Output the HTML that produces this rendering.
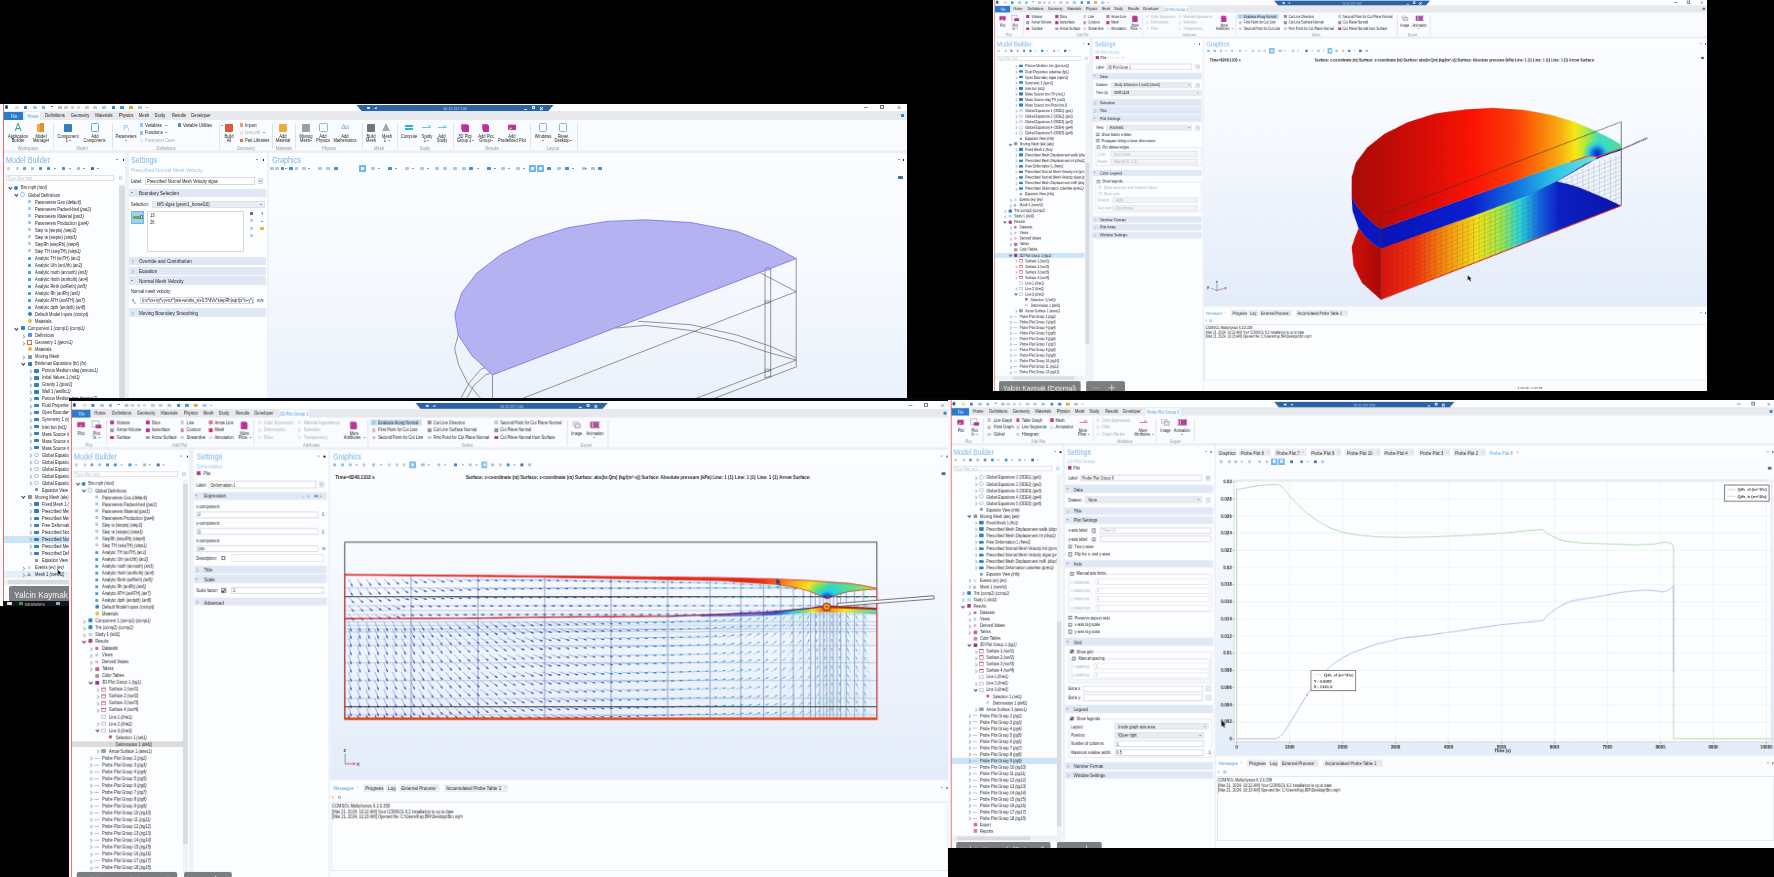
<!DOCTYPE html><html><head><meta charset="utf-8"><title>COMSOL collage</title><style>
html,body{margin:0;padding:0;background:#000;}
body{width:1774px;height:877px;overflow:hidden;position:relative;font-family:"Liberation Sans",sans-serif;}
.clip{position:absolute;overflow:hidden;}
.win{position:absolute;will-change:transform;transform-origin:0 0;overflow:hidden;width:909px;height:504px;color:#222;}
.win div,.win span,.win svg{position:absolute;}
.win svg{overflow:visible;}
.t{white-space:nowrap;line-height:1.2;}
.tr{width:0;height:0;}
i{font-style:italic;}
</style></head><body><div class="clip" id="wA" style="left:0px;top:103.8px;width:907px;height:501.9px;"><div class="win" style="left:0.00px;top:-1.20px;transform:scale(1.0);"><div style="left:0.00px;top:0.00px;width:909.00px;height:504.00px;background:#eef2f7;"></div><div style="left:0.00px;top:0.00px;width:909.00px;height:8.30px;background:#fdfeff;"></div><div style="left:4.60px;top:2.40px;width:3.20px;height:3.20px;background:#1d4e89;border-radius:50%;"></div><div style="left:15.20px;top:2.60px;width:3.60px;height:3.00px;background:#d9dde2;border-radius:.5px;"></div><div style="left:23.80px;top:2.60px;width:3.60px;height:3.00px;background:#2f7fc2;border-radius:.5px;"></div><div style="left:33.20px;top:2.60px;width:3.60px;height:3.00px;background:#9fc6e6;border-radius:.5px;"></div><div style="left:41.80px;top:2.60px;width:3.60px;height:3.00px;background:#7fb3de;border-radius:.5px;"></div><div style="left:51.30px;top:2.60px;width:1.40px;height:1.20px;background:#555;border-radius:.5px;"></div><div style="left:58.20px;top:2.60px;width:3.60px;height:3.00px;background:#b9c0c8;border-radius:.5px;"></div><div style="left:64.20px;top:2.60px;width:3.60px;height:3.00px;background:#c9cfd6;border-radius:.5px;"></div><div style="left:70.90px;top:2.60px;width:3.60px;height:3.00px;background:#c9cfd6;border-radius:.5px;"></div><div style="left:76.90px;top:2.60px;width:3.60px;height:3.00px;background:#d5dae0;border-radius:.5px;"></div><div style="left:85.20px;top:2.60px;width:3.60px;height:3.00px;background:#c3cad2;border-radius:.5px;"></div><div style="left:93.20px;top:2.60px;width:3.60px;height:3.00px;background:#c3cad2;border-radius:.5px;"></div><div style="left:102.20px;top:2.60px;width:3.60px;height:3.00px;background:#9fc6e6;border-radius:.5px;"></div><div style="left:111.90px;top:2.60px;width:3.60px;height:3.00px;background:#2f7fc2;border-radius:.5px;"></div><div style="left:120.20px;top:2.60px;width:3.60px;height:3.00px;background:#3f93d3;border-radius:.5px;"></div><div style="left:129.20px;top:2.60px;width:3.60px;height:3.00px;background:#e0a23c;border-radius:.5px;"></div><div style="left:138.20px;top:2.60px;width:3.60px;height:3.00px;background:#9fc6e6;border-radius:.5px;"></div><div class="tr" style="left:145.75px;top:3.67px;border-left:1.25px solid transparent;border-right:1.25px solid transparent;border-top:1.69px solid #444;"></div><div style="left:356px;top:1.5px;width:198px;height:8px;background:#2a62a6;clip-path:polygon(0 0,100% 0,96.5% 100%,3.5% 100%);"></div><span class="t" style="top:2.92px;font-size:4.3px;color:#c9dcf2;left:455.00px;transform:translateX(-50%) scaleX(0.87);transform-origin:50% 50%;">10.12.217.100</span><div style="left:367.00px;top:3.60px;width:2.60px;height:2.60px;background:#e8f0fa;border-radius:.4px;"></div><div style="left:373.50px;top:3.40px;width:3.20px;height:3.00px;background:#dce8f6;clip-path:polygon(0 100%,100% 0,100% 100%);"></div><div style="left:523.50px;top:6.20px;width:3.20px;height:0.80px;background:#e8f0fa;"></div><div style="left:531.50px;top:3.40px;width:3.00px;height:3.00px;border:.6px solid #dce8f6;box-sizing:border-box;"></div><span class="t" style="top:1.50px;font-size:6.5px;color:#fff;left:541.50px;transform:translateX(-50%) scaleX(1);transform-origin:50% 50%;font-weight:bold;">×</span><div style="left:864.00px;top:4.30px;width:4.00px;height:0.45px;background:#8a8f96;"></div><div style="left:880.30px;top:2.40px;width:3.60px;height:3.60px;border:.45px solid #6f757c;box-sizing:border-box;"></div><span class="t" style="top:0.50px;font-size:7px;color:#6f757c;left:899.00px;transform:translateX(-50%) scaleX(1);transform-origin:50% 50%;">×</span><div style="left:0.00px;top:8.30px;width:909.00px;height:9.00px;background:#e7e9ec;"></div><div style="left:4.30px;top:9.00px;width:18.80px;height:7.80px;background:#2c7acb;"></div><span class="t" style="top:10.58px;font-size:4.7px;color:#d6e6f8;left:13.70px;transform:translateX(-50%) scaleX(0.87);transform-origin:50% 50%;">File</span><div style="left:25.00px;top:9.00px;width:15.00px;height:8.40px;background:#f9fbfe;"></div><span class="t" style="top:10.58px;font-size:4.7px;color:#4a9bdc;left:32.50px;transform:translateX(-50%) scaleX(0.87);transform-origin:50% 50%;">Home</span><span class="t" style="top:10.46px;font-size:4.9px;color:#222;left:54.70px;transform:translateX(-50%) scaleX(0.87);transform-origin:50% 50%;">Definitions</span><span class="t" style="top:10.46px;font-size:4.9px;color:#222;left:80.40px;transform:translateX(-50%) scaleX(0.87);transform-origin:50% 50%;">Geometry</span><span class="t" style="top:10.46px;font-size:4.9px;color:#222;left:104.30px;transform:translateX(-50%) scaleX(0.87);transform-origin:50% 50%;">Materials</span><span class="t" style="top:10.46px;font-size:4.9px;color:#222;left:125.70px;transform:translateX(-50%) scaleX(0.87);transform-origin:50% 50%;">Physics</span><span class="t" style="top:10.46px;font-size:4.9px;color:#222;left:143.70px;transform:translateX(-50%) scaleX(0.87);transform-origin:50% 50%;">Mesh</span><span class="t" style="top:10.46px;font-size:4.9px;color:#222;left:160.40px;transform:translateX(-50%) scaleX(0.87);transform-origin:50% 50%;">Study</span><span class="t" style="top:10.46px;font-size:4.9px;color:#222;left:178.70px;transform:translateX(-50%) scaleX(0.87);transform-origin:50% 50%;">Results</span><span class="t" style="top:10.46px;font-size:4.9px;color:#222;left:201.00px;transform:translateX(-50%) scaleX(0.87);transform-origin:50% 50%;">Developer</span><div style="left:900.70px;top:11.30px;width:3.00px;height:3.00px;background:#2f7fc2;border-radius:.5px;"></div><div style="left:0.00px;top:17.30px;width:909.00px;height:30.20px;background:#f9fbfe;"></div><div style="left:0.00px;top:47.50px;width:909.00px;height:2.40px;background:#eceff3;"></div><span class="t" style="top:19.30px;font-size:10px;color:#3aa878;left:18.00px;transform:translateX(-50%) scaleX(1);transform-origin:50% 50%;">A</span><span class="t" style="top:30.78px;font-size:4.7px;color:#222;left:18.00px;transform:translateX(-50%) scaleX(0.87);transform-origin:50% 50%;">Application</span><span class="t" style="top:35.38px;font-size:4.7px;color:#222;left:18.00px;transform:translateX(-50%) scaleX(0.87);transform-origin:50% 50%;">Builder</span><div style="left:36.90px;top:20.80px;width:3.20px;height:8.00px;background:#f0a93a;"></div><div style="left:40.30px;top:20.30px;width:3.60px;height:8.50px;background:#e98f2a;"></div><span class="t" style="top:30.78px;font-size:4.7px;color:#222;left:40.50px;transform:translateX(-50%) scaleX(0.87);transform-origin:50% 50%;">Model</span><span class="t" style="top:35.38px;font-size:4.7px;color:#222;left:40.50px;transform:translateX(-50%) scaleX(0.87);transform-origin:50% 50%;">Manager</span><div style="left:52.70px;top:19.50px;width:0.50px;height:26.50px;background:#dfe4ea;"></div><div style="left:63.90px;top:20.50px;width:8.00px;height:8.00px;background:#2f7fc2;border-radius:1px;"></div><span class="t" style="top:30.78px;font-size:4.7px;color:#222;left:67.90px;transform:translateX(-50%) scaleX(0.87);transform-origin:50% 50%;">Component</span><span class="t" style="top:35.38px;font-size:4.7px;color:#222;left:66.60px;transform:translateX(-50%) scaleX(0.87);transform-origin:50% 50%;">1</span><div class="tr" style="left:68.80px;top:37.44px;border-left:1.125px solid transparent;border-right:1.125px solid transparent;border-top:1.52px solid #333;"></div><div style="left:91.10px;top:20.30px;width:8.40px;height:8.40px;border:1px solid #5aa7e0;border-radius:1.5px;box-sizing:border-box;"></div><span class="t" style="top:30.78px;font-size:4.7px;color:#222;left:95.30px;transform:translateX(-50%) scaleX(0.87);transform-origin:50% 50%;">Add</span><span class="t" style="top:35.38px;font-size:4.7px;color:#222;left:94.00px;transform:translateX(-50%) scaleX(0.87);transform-origin:50% 50%;">Component</span><div class="tr" style="left:104.35px;top:37.44px;border-left:1.125px solid transparent;border-right:1.125px solid transparent;border-top:1.52px solid #333;"></div><div style="left:111.50px;top:19.50px;width:0.50px;height:26.50px;background:#dfe4ea;"></div><span class="t" style="top:20.30px;font-size:7.5px;color:#7db9e8;left:125.70px;transform:translateX(-50%) scaleX(1);transform-origin:50% 50%;">P</span><span class="t" style="top:23.10px;font-size:5px;color:#7db9e8;left:128.30px;transform:translateX(-50%) scaleX(1);transform-origin:50% 50%;">i</span><span class="t" style="top:30.78px;font-size:4.7px;color:#222;left:125.70px;transform:translateX(-50%) scaleX(0.87);transform-origin:50% 50%;">Parameters</span><div class="tr" style="left:124.58px;top:37.44px;border-left:1.125px solid transparent;border-right:1.125px solid transparent;border-top:1.52px solid #333;"></div><div style="left:139.60px;top:20.30px;width:3.80px;height:3.60px;background:#8cc4ea;border-radius:.5px;"></div><span class="t" style="top:19.78px;font-size:4.7px;color:#222;left:145.40px;transform:scaleX(0.87);transform-origin:0 50%;">Variables</span><div class="tr" style="left:164.75px;top:21.74px;border-left:1.125px solid transparent;border-right:1.125px solid transparent;border-top:1.52px solid #333;"></div><div style="left:139.60px;top:28.00px;width:3.80px;height:3.60px;background:#8cc4ea;border-radius:.5px;"></div><span class="t" style="top:27.48px;font-size:4.7px;color:#222;left:145.40px;transform:scaleX(0.87);transform-origin:0 50%;">Functions</span><div class="tr" style="left:164.75px;top:29.44px;border-left:1.125px solid transparent;border-right:1.125px solid transparent;border-top:1.52px solid #333;"></div><div style="left:139.60px;top:35.70px;width:3.80px;height:3.60px;background:#dfe3e8;border-radius:.5px;opacity:.8;"></div><span class="t" style="top:35.18px;font-size:4.7px;color:#a9b0b8;left:145.40px;transform:scaleX(0.87);transform-origin:0 50%;">Parameter Case</span><div style="left:177.60px;top:20.30px;width:3.80px;height:3.60px;background:#5f88b0;border-radius:.5px;"></div><span class="t" style="top:19.78px;font-size:4.7px;color:#222;left:183.30px;transform:scaleX(0.87);transform-origin:0 50%;">Variable Utilities</span><div class="tr" style="left:220.91px;top:21.74px;border-left:1.125px solid transparent;border-right:1.125px solid transparent;border-top:1.52px solid #333;"></div><div style="left:219.40px;top:19.50px;width:0.50px;height:26.50px;background:#dfe4ea;"></div><div style="left:224.70px;top:20.50px;width:8.00px;height:8.00px;background:#e0563a;border-radius:1px;"></div><span class="t" style="top:30.78px;font-size:4.7px;color:#222;left:228.70px;transform:translateX(-50%) scaleX(0.87);transform-origin:50% 50%;">Build</span><span class="t" style="top:35.38px;font-size:4.7px;color:#222;left:228.70px;transform:translateX(-50%) scaleX(0.87);transform-origin:50% 50%;">All</span><div style="left:239.60px;top:20.30px;width:3.80px;height:3.60px;background:#e79a7a;border-radius:.5px;"></div><span class="t" style="top:19.78px;font-size:4.7px;color:#222;left:245.20px;transform:scaleX(0.87);transform-origin:0 50%;">Import</span><div style="left:239.60px;top:28.00px;width:3.80px;height:3.60px;background:#dfe3e8;border-radius:.5px;opacity:.8;"></div><span class="t" style="top:27.48px;font-size:4.7px;color:#a9b0b8;left:245.20px;transform:scaleX(0.87);transform-origin:0 50%;">LiveLink</span><div class="tr" style="left:262.51px;top:29.44px;border-left:1.125px solid transparent;border-right:1.125px solid transparent;border-top:1.52px solid #333;"></div><div style="left:239.60px;top:35.70px;width:3.80px;height:3.60px;background:#e0704a;border-radius:.5px;"></div><span class="t" style="top:35.18px;font-size:4.7px;color:#222;left:245.20px;transform:scaleX(0.87);transform-origin:0 50%;">Part Libraries</span><div style="left:272.00px;top:19.50px;width:0.50px;height:26.50px;background:#dfe4ea;"></div><div style="left:279.00px;top:20.50px;width:8.00px;height:8.00px;background:#f0a93a;border-radius:1px;"></div><span class="t" style="top:30.78px;font-size:4.7px;color:#222;left:283.00px;transform:translateX(-50%) scaleX(0.87);transform-origin:50% 50%;">Add</span><span class="t" style="top:35.38px;font-size:4.7px;color:#222;left:283.00px;transform:translateX(-50%) scaleX(0.87);transform-origin:50% 50%;">Material</span><div style="left:295.00px;top:19.50px;width:0.50px;height:26.50px;background:#dfe4ea;"></div><div style="left:301.90px;top:20.50px;width:8.00px;height:8.00px;background:#9aa0a7;border-radius:1px;"></div><span class="t" style="top:30.78px;font-size:4.7px;color:#222;left:305.90px;transform:translateX(-50%) scaleX(0.87);transform-origin:50% 50%;">Moving</span><span class="t" style="top:35.38px;font-size:4.7px;color:#222;left:304.60px;transform:translateX(-50%) scaleX(0.87);transform-origin:50% 50%;">Mesh</span><div class="tr" style="left:309.85px;top:37.44px;border-left:1.125px solid transparent;border-right:1.125px solid transparent;border-top:1.52px solid #333;"></div><div style="left:319.20px;top:20.30px;width:8.40px;height:8.40px;border:1px solid #7db9e8;border-radius:1.5px;box-sizing:border-box;"></div><span class="t" style="top:30.78px;font-size:4.7px;color:#222;left:323.40px;transform:translateX(-50%) scaleX(0.87);transform-origin:50% 50%;">Add</span><span class="t" style="top:35.38px;font-size:4.7px;color:#222;left:323.40px;transform:translateX(-50%) scaleX(0.87);transform-origin:50% 50%;">Physics</span><span class="t" style="top:20.20px;font-size:6.5px;color:#5aa7e0;left:345.20px;transform:translateX(-50%) scaleX(1);transform-origin:50% 50%;">∆u</span><span class="t" style="top:30.78px;font-size:4.7px;color:#222;left:345.20px;transform:translateX(-50%) scaleX(0.87);transform-origin:50% 50%;">Add</span><span class="t" style="top:35.38px;font-size:4.7px;color:#222;left:345.20px;transform:translateX(-50%) scaleX(0.87);transform-origin:50% 50%;">Mathematics</span><div style="left:361.50px;top:19.50px;width:0.50px;height:26.50px;background:#dfe4ea;"></div><div style="left:366.90px;top:20.50px;width:8.00px;height:8.00px;background:#6f757c;border-radius:1px;"></div><span class="t" style="top:30.78px;font-size:4.7px;color:#222;left:370.90px;transform:translateX(-50%) scaleX(0.87);transform-origin:50% 50%;">Build</span><span class="t" style="top:35.38px;font-size:4.7px;color:#222;left:370.90px;transform:translateX(-50%) scaleX(0.87);transform-origin:50% 50%;">Mesh</span><div class="tr" style="left:381.80px;top:20.3px;border-left:4.8px solid transparent;border-right:4.8px solid transparent;border-bottom:8.6px solid #a4a9af;"></div><span class="t" style="top:30.78px;font-size:4.7px;color:#222;left:386.60px;transform:translateX(-50%) scaleX(0.87);transform-origin:50% 50%;">Mesh</span><span class="t" style="top:35.38px;font-size:4.7px;color:#222;left:385.30px;transform:translateX(-50%) scaleX(0.87);transform-origin:50% 50%;">1</span><div class="tr" style="left:387.50px;top:37.44px;border-left:1.125px solid transparent;border-right:1.125px solid transparent;border-top:1.52px solid #333;"></div><div style="left:396.90px;top:19.50px;width:0.50px;height:26.50px;background:#dfe4ea;"></div><div style="left:405.40px;top:22.20px;width:7.60px;height:1.60px;background:#2fb0c9;"></div><div style="left:405.40px;top:25.20px;width:7.60px;height:1.60px;background:#2fb0c9;"></div><span class="t" style="top:30.78px;font-size:4.7px;color:#222;left:409.20px;transform:translateX(-50%) scaleX(0.87);transform-origin:50% 50%;">Compute</span><div style="left:422.00px;top:23.80px;width:9.00px;height:1.10px;background:#6fc6d8;border-radius:1px;"></div><div style="left:427.50px;top:21.60px;width:3.20px;height:3.20px;border:.8px solid #6fc6d8;border-radius:50%;box-sizing:border-box;"></div><span class="t" style="top:30.78px;font-size:4.7px;color:#222;left:426.50px;transform:translateX(-50%) scaleX(0.87);transform-origin:50% 50%;">Study</span><span class="t" style="top:35.38px;font-size:4.7px;color:#222;left:425.20px;transform:translateX(-50%) scaleX(0.87);transform-origin:50% 50%;">1</span><div class="tr" style="left:427.39px;top:37.44px;border-left:1.125px solid transparent;border-right:1.125px solid transparent;border-top:1.52px solid #333;"></div><div style="left:437.70px;top:23.80px;width:9.00px;height:1.10px;background:#6fc6d8;border-radius:1px;"></div><div style="left:443.20px;top:21.60px;width:3.20px;height:3.20px;border:.8px solid #6fc6d8;border-radius:50%;box-sizing:border-box;"></div><span class="t" style="top:30.78px;font-size:4.7px;color:#222;left:442.20px;transform:translateX(-50%) scaleX(0.87);transform-origin:50% 50%;">Add</span><span class="t" style="top:35.38px;font-size:4.7px;color:#222;left:442.20px;transform:translateX(-50%) scaleX(0.87);transform-origin:50% 50%;">Study</span><div style="left:452.50px;top:19.50px;width:0.50px;height:26.50px;background:#dfe4ea;"></div><div style="left:462.10px;top:22.00px;width:6.60px;height:6.60px;background:#b7359b;border-radius:.8px;"></div><div style="left:461.30px;top:20.60px;width:6.60px;height:6.60px;background:#d05ab8;border-radius:.8px;"></div><div style="left:462.30px;top:22.20px;width:5.40px;height:5.20px;background:#b7359b;border-radius:.5px;"></div><span class="t" style="top:30.78px;font-size:4.7px;color:#222;left:465.30px;transform:translateX(-50%) scaleX(0.87);transform-origin:50% 50%;">3D Plot</span><span class="t" style="top:35.38px;font-size:4.7px;color:#222;left:464.00px;transform:translateX(-50%) scaleX(0.87);transform-origin:50% 50%;">Group 1</span><div class="tr" style="left:472.31px;top:37.44px;border-left:1.125px solid transparent;border-right:1.125px solid transparent;border-top:1.52px solid #333;"></div><div style="left:482.60px;top:22.00px;width:6.60px;height:6.60px;background:#b7359b;border-radius:.8px;"></div><div style="left:481.80px;top:20.60px;width:6.60px;height:6.60px;background:#d05ab8;border-radius:.8px;"></div><div style="left:482.80px;top:22.20px;width:5.40px;height:5.20px;background:#b7359b;border-radius:.5px;"></div><span class="t" style="top:30.78px;font-size:4.7px;color:#222;left:485.80px;transform:translateX(-50%) scaleX(0.87);transform-origin:50% 50%;">Add Plot</span><span class="t" style="top:35.38px;font-size:4.7px;color:#222;left:484.50px;transform:translateX(-50%) scaleX(0.87);transform-origin:50% 50%;">Group</span><div class="tr" style="left:490.78px;top:37.44px;border-left:1.125px solid transparent;border-right:1.125px solid transparent;border-top:1.52px solid #333;"></div><div style="left:508.00px;top:20.80px;width:7.60px;height:1.20px;background:#c9c3cc;"></div><div style="left:508.00px;top:22.30px;width:7.60px;height:5.20px;background:#b7359b;border-radius:.4px;"></div><div style="left:509.20px;top:24.50px;width:3.40px;height:0.80px;background:#f3d9ec;transform:rotate(-30deg);"></div><span class="t" style="top:30.78px;font-size:4.7px;color:#222;left:511.80px;transform:translateX(-50%) scaleX(0.87);transform-origin:50% 50%;">Add</span><span class="t" style="top:35.38px;font-size:4.7px;color:#222;left:511.80px;transform:translateX(-50%) scaleX(0.87);transform-origin:50% 50%;">Predefined Plot</span><div style="left:530.30px;top:19.50px;width:0.50px;height:26.50px;background:#dfe4ea;"></div><div style="left:538.60px;top:20.30px;width:8.40px;height:8.40px;border:1px solid #7db9e8;border-radius:1.5px;box-sizing:border-box;"></div><span class="t" style="top:30.78px;font-size:4.7px;color:#222;left:542.80px;transform:translateX(-50%) scaleX(0.87);transform-origin:50% 50%;">Windows</span><div class="tr" style="left:541.67px;top:37.44px;border-left:1.125px solid transparent;border-right:1.125px solid transparent;border-top:1.52px solid #333;"></div><div style="left:558.90px;top:20.30px;width:8.40px;height:8.40px;border:1px solid #7db9e8;border-radius:1.5px;box-sizing:border-box;"></div><span class="t" style="top:30.78px;font-size:4.7px;color:#222;left:563.10px;transform:translateX(-50%) scaleX(0.87);transform-origin:50% 50%;">Reset</span><span class="t" style="top:35.38px;font-size:4.7px;color:#222;left:561.80px;transform:translateX(-50%) scaleX(0.87);transform-origin:50% 50%;">Desktop</span><div class="tr" style="left:570.12px;top:37.44px;border-left:1.125px solid transparent;border-right:1.125px solid transparent;border-top:1.52px solid #333;"></div><div style="left:577.30px;top:19.50px;width:0.50px;height:26.50px;background:#dfe4ea;"></div><span class="t" style="top:43.08px;font-size:4.7px;color:#8f98a3;left:28.20px;transform:translateX(-50%) scaleX(0.87);transform-origin:50% 50%;">Workspace</span><span class="t" style="top:43.08px;font-size:4.7px;color:#8f98a3;left:82.00px;transform:translateX(-50%) scaleX(0.87);transform-origin:50% 50%;">Model</span><span class="t" style="top:43.08px;font-size:4.7px;color:#8f98a3;left:165.60px;transform:translateX(-50%) scaleX(0.87);transform-origin:50% 50%;">Definitions</span><span class="t" style="top:43.08px;font-size:4.7px;color:#8f98a3;left:245.80px;transform:translateX(-50%) scaleX(0.87);transform-origin:50% 50%;">Geometry</span><span class="t" style="top:43.08px;font-size:4.7px;color:#8f98a3;left:283.60px;transform:translateX(-50%) scaleX(0.87);transform-origin:50% 50%;">Materials</span><span class="t" style="top:43.08px;font-size:4.7px;color:#8f98a3;left:328.50px;transform:translateX(-50%) scaleX(0.87);transform-origin:50% 50%;">Physics</span><span class="t" style="top:43.08px;font-size:4.7px;color:#8f98a3;left:379.30px;transform:translateX(-50%) scaleX(0.87);transform-origin:50% 50%;">Mesh</span><span class="t" style="top:43.08px;font-size:4.7px;color:#8f98a3;left:424.80px;transform:translateX(-50%) scaleX(0.87);transform-origin:50% 50%;">Study</span><span class="t" style="top:43.08px;font-size:4.7px;color:#8f98a3;left:491.50px;transform:translateX(-50%) scaleX(0.87);transform-origin:50% 50%;">Results</span><span class="t" style="top:43.08px;font-size:4.7px;color:#8f98a3;left:553.40px;transform:translateX(-50%) scaleX(0.87);transform-origin:50% 50%;">Layout</span><div style="left:4.30px;top:49.80px;width:120.70px;height:454.20px;background:#fcfdff;"></div><span class="t" style="top:52.92px;font-size:8.3px;color:#79b4e2;left:6.00px;transform:scaleX(0.87);transform-origin:0 50%;">Model Builder</span><div class="tr" style="left:116.35px;top:56.38px;border-left:1.25px solid transparent;border-right:1.25px solid transparent;border-top:1.69px solid #333;"></div><div style="left:122.80px;top:55.60px;width:1.30px;height:2.80px;background:#222;"></div><div style="left:6.60px;top:63.80px;width:3.20px;height:3.20px;background:#c9cfd6;border-radius:.4px;"></div><div style="left:16.20px;top:63.80px;width:3.20px;height:3.20px;background:#c9cfd6;border-radius:.4px;"></div><div style="left:23.00px;top:63.80px;width:3.20px;height:3.20px;background:#6f9fc9;border-radius:.4px;"></div><div style="left:30.70px;top:63.80px;width:3.20px;height:3.20px;background:#b9c0c8;border-radius:.4px;"></div><div style="left:38.90px;top:63.80px;width:3.20px;height:3.20px;background:#4f8fc8;border-radius:.4px;"></div><div style="left:47.10px;top:63.80px;width:3.20px;height:3.20px;background:#3f93d3;border-radius:.4px;"></div><div style="left:61.90px;top:63.80px;width:3.20px;height:3.20px;background:#3f93d3;border-radius:.4px;"></div><div style="left:76.70px;top:63.80px;width:3.20px;height:3.20px;background:#aeb5bd;border-radius:.4px;"></div><div style="left:90.90px;top:63.80px;width:3.20px;height:3.20px;background:#3f6f9f;border-radius:.4px;"></div><div class="tr" style="left:54.48px;top:65.04px;border-left:1.125px solid transparent;border-right:1.125px solid transparent;border-top:1.52px solid #333;"></div><div class="tr" style="left:68.88px;top:65.04px;border-left:1.125px solid transparent;border-right:1.125px solid transparent;border-top:1.52px solid #333;"></div><div class="tr" style="left:83.17px;top:65.04px;border-left:1.125px solid transparent;border-right:1.125px solid transparent;border-top:1.52px solid #333;"></div><div class="tr" style="left:97.38px;top:65.04px;border-left:1.125px solid transparent;border-right:1.125px solid transparent;border-top:1.52px solid #333;"></div><div style="left:6.00px;top:72.20px;width:108.40px;height:6.10px;background:#fff;border:.5px solid #dfe3e8;box-sizing:border-box;"></div><span class="t" style="top:72.98px;font-size:4.7px;color:#c3c8ce;left:6.90px;transform:scaleX(0.87);transform-origin:0 50%;">Type filter text</span><div style="left:118.70px;top:73.40px;width:3.40px;height:3.40px;border:.7px solid #8cc4ea;border-radius:50%;box-sizing:border-box;"></div><div style="left:119.00px;top:80.50px;width:5.50px;height:402.50px;background:#f0f1f3;"></div><div style="left:119.00px;top:83.00px;width:5.50px;height:217.00px;background:#d9dbdf;"></div><div style="left:4.3px;top:80.5px;width:114.7px;height:397.5px;overflow:hidden;"><div style="left:-4.3px;top:-80.5px;width:10px;height:10px;"><div style="left:8.50px;top:83.10px;width:1.7px;height:1.7px;border-right:.7px solid #444;border-bottom:.7px solid #444;transform:rotate(45deg);"></div><div style="left:14.00px;top:82.80px;width:4.00px;height:4.00px;background:#2f7fc2;border-radius:50%;"></div><span class="t" style="top:82.48px;font-size:4.7px;left:21.10px;transform:scaleX(0.87);transform-origin:0 50%;">Bm.mph <i>(root)</i></span><div style="left:15.35px;top:90.13px;width:1.7px;height:1.7px;border-right:.7px solid #444;border-bottom:.7px solid #444;transform:rotate(45deg);"></div><div style="left:20.45px;top:89.43px;width:4.80px;height:4.80px;border:.8px solid #8fc1e6;border-radius:50%;box-sizing:border-box;"></div><span class="t" style="top:89.51px;font-size:4.7px;left:27.95px;transform:scaleX(0.87);transform-origin:0 50%;">Global Definitions</span><div style="left:27.90px;top:97.26px;width:3.60px;height:3.00px;background:#8cc4ea;border-radius:.6px;opacity:.9;"></div><span class="t" style="top:96.54px;font-size:4.7px;left:34.80px;transform:scaleX(0.87);transform-origin:0 50%;">Parameters Geo <i>(default)</i></span><div style="left:27.90px;top:104.29px;width:3.60px;height:3.00px;background:#8cc4ea;border-radius:.6px;opacity:.9;"></div><span class="t" style="top:103.57px;font-size:4.7px;left:34.80px;transform:scaleX(0.87);transform-origin:0 50%;">Parameters Packed-bed <i>(par2)</i></span><div style="left:27.90px;top:111.32px;width:3.60px;height:3.00px;background:#8cc4ea;border-radius:.6px;opacity:.9;"></div><span class="t" style="top:110.60px;font-size:4.7px;left:34.80px;transform:scaleX(0.87);transform-origin:0 50%;">Parameters Material <i>(par3)</i></span><div style="left:27.90px;top:118.35px;width:3.60px;height:3.00px;background:#8cc4ea;border-radius:.6px;opacity:.9;"></div><span class="t" style="top:117.63px;font-size:4.7px;left:34.80px;transform:scaleX(0.87);transform-origin:0 50%;">Parameters Production <i>(par4)</i></span><div style="left:27.90px;top:125.38px;width:3.60px;height:3.00px;background:#b8bec6;border-radius:.6px;opacity:.9;"></div><span class="t" style="top:124.66px;font-size:4.7px;left:34.80px;transform:scaleX(0.87);transform-origin:0 50%;">Step ts (stepts) <i>(step2)</i></span><div style="left:27.90px;top:132.41px;width:3.60px;height:3.00px;background:#b8bec6;border-radius:.6px;opacity:.9;"></div><span class="t" style="top:131.69px;font-size:4.7px;left:34.80px;transform:scaleX(0.87);transform-origin:0 50%;">Step te (stepte) <i>(step3)</i></span><div style="left:27.90px;top:139.44px;width:3.60px;height:3.00px;background:#b8bec6;border-radius:.6px;opacity:.9;"></div><span class="t" style="top:138.72px;font-size:4.7px;left:34.80px;transform:scaleX(0.87);transform-origin:0 50%;">StepRh (stepRh) <i>(step4)</i></span><div style="left:27.90px;top:146.47px;width:3.60px;height:3.00px;background:#b8bec6;border-radius:.6px;opacity:.9;"></div><span class="t" style="top:145.75px;font-size:4.7px;left:34.80px;transform:scaleX(0.87);transform-origin:0 50%;">Step TH (stepTH) <i>(step1)</i></span><div style="left:27.90px;top:153.50px;width:3.60px;height:3.00px;background:#3f93d3;border-radius:.6px;opacity:.9;"></div><span class="t" style="top:152.78px;font-size:4.7px;left:34.80px;transform:scaleX(0.87);transform-origin:0 50%;">Analytic TH (anTH) <i>(an1)</i></span><div style="left:27.90px;top:160.53px;width:3.60px;height:3.00px;background:#3f93d3;border-radius:.6px;opacity:.9;"></div><span class="t" style="top:159.81px;font-size:4.7px;left:34.80px;transform:scaleX(0.87);transform-origin:0 50%;">Analytic Uth (anUth) <i>(an2)</i></span><div style="left:27.90px;top:167.56px;width:3.60px;height:3.00px;background:#3f93d3;border-radius:.6px;opacity:.9;"></div><span class="t" style="top:166.84px;font-size:4.7px;left:34.80px;transform:scaleX(0.87);transform-origin:0 50%;">Analytic muth (anmuth) <i>(an3)</i></span><div style="left:27.90px;top:174.59px;width:3.60px;height:3.00px;background:#3f93d3;border-radius:.6px;opacity:.9;"></div><span class="t" style="top:173.87px;font-size:4.7px;left:34.80px;transform:scaleX(0.87);transform-origin:0 50%;">Analytic rhoth (anrhoth) <i>(an4)</i></span><div style="left:27.90px;top:181.62px;width:3.60px;height:3.00px;background:#3f93d3;border-radius:.6px;opacity:.9;"></div><span class="t" style="top:180.90px;font-size:4.7px;left:34.80px;transform:scaleX(0.87);transform-origin:0 50%;">Analytic Reth (anReth) <i>(an5)</i></span><div style="left:27.90px;top:188.65px;width:3.60px;height:3.00px;background:#3f93d3;border-radius:.6px;opacity:.9;"></div><span class="t" style="top:187.93px;font-size:4.7px;left:34.80px;transform:scaleX(0.87);transform-origin:0 50%;">Analytic Rh (anRh) <i>(an6)</i></span><div style="left:27.90px;top:195.68px;width:3.60px;height:3.00px;background:#3f93d3;border-radius:.6px;opacity:.9;"></div><span class="t" style="top:194.96px;font-size:4.7px;left:34.80px;transform:scaleX(0.87);transform-origin:0 50%;">Analytic ATH (anATH) <i>(an7)</i></span><div style="left:27.90px;top:202.71px;width:3.60px;height:3.00px;background:#3f93d3;border-radius:.6px;opacity:.9;"></div><span class="t" style="top:201.99px;font-size:4.7px;left:34.80px;transform:scaleX(0.87);transform-origin:0 50%;">Analytic dpth (andpth) <i>(an8)</i></span><div style="left:27.70px;top:209.34px;width:4.00px;height:4.00px;background:#2f7fc2;border-radius:50%;"></div><span class="t" style="top:209.02px;font-size:4.7px;left:34.80px;transform:scaleX(0.87);transform-origin:0 50%;">Default Model Inputs <i>(cminpt)</i></span><div style="left:27.70px;top:216.37px;width:4.00px;height:4.00px;background:#f2b04a;border-radius:50%;"></div><span class="t" style="top:216.05px;font-size:4.7px;left:34.80px;transform:scaleX(0.87);transform-origin:0 50%;">Materials</span><div style="left:15.35px;top:223.70px;width:1.7px;height:1.7px;border-right:.7px solid #444;border-bottom:.7px solid #444;transform:rotate(45deg);"></div><div style="left:20.75px;top:223.40px;width:4.20px;height:4.00px;background:#2f7fc2;border-radius:.8px;"></div><span class="t" style="top:223.08px;font-size:4.7px;left:27.95px;transform:scaleX(0.87);transform-origin:0 50%;">Component 1 (comp1) <i>{comp1}</i></span><div style="left:22.00px;top:231.53px;width:1.5px;height:1.5px;border-right:.5px solid #a4acb6;border-top:.5px solid #a4acb6;transform:rotate(45deg);"></div><div style="left:27.60px;top:230.43px;width:4.20px;height:4.00px;background:#4b9bd8;border-radius:.8px;"></div><span class="t" style="top:230.11px;font-size:4.7px;left:34.80px;transform:scaleX(0.87);transform-origin:0 50%;">Definitions</span><div style="left:22.00px;top:238.56px;width:1.5px;height:1.5px;border-right:.5px solid #a4acb6;border-top:.5px solid #a4acb6;transform:rotate(45deg);"></div><div style="left:27.40px;top:237.26px;width:4.60px;height:4.40px;border:.7px solid #d8694a;box-sizing:border-box;"></div><span class="t" style="top:237.14px;font-size:4.7px;left:34.80px;transform:scaleX(0.87);transform-origin:0 50%;">Geometry 1 <i>(geom1)</i></span><div style="left:27.70px;top:244.49px;width:4.00px;height:4.00px;background:#f2b04a;border-radius:50%;"></div><span class="t" style="top:244.17px;font-size:4.7px;left:34.80px;transform:scaleX(0.87);transform-origin:0 50%;">Materials</span><div style="left:22.00px;top:252.62px;width:1.5px;height:1.5px;border-right:.5px solid #a4acb6;border-top:.5px solid #a4acb6;transform:rotate(45deg);"></div><div style="left:27.60px;top:251.52px;width:4.20px;height:4.00px;background:#8d949c;border-radius:.8px;"></div><span class="t" style="top:251.20px;font-size:4.7px;left:34.80px;transform:scaleX(0.87);transform-origin:0 50%;">Moving Mesh</span><div style="left:22.20px;top:258.85px;width:1.7px;height:1.7px;border-right:.7px solid #444;border-bottom:.7px solid #444;transform:rotate(45deg);"></div><div style="left:27.60px;top:258.55px;width:4.20px;height:4.00px;background:#2f7fc2;border-radius:.8px;"></div><span class="t" style="top:258.23px;font-size:4.7px;left:34.80px;transform:scaleX(0.87);transform-origin:0 50%;">Brinkman Equations (br) <i>{br}</i></span><div style="left:28.85px;top:266.68px;width:1.5px;height:1.5px;border-right:.5px solid #a4acb6;border-top:.5px solid #a4acb6;transform:rotate(45deg);"></div><div style="left:34.45px;top:265.58px;width:4.20px;height:4.00px;background:#2f7fc2;border-radius:.8px;"></div><span class="t" style="top:265.26px;font-size:4.7px;left:41.65px;transform:scaleX(0.87);transform-origin:0 50%;">Porous Medium slag <i>(porous1)</i></span><div style="left:28.85px;top:273.71px;width:1.5px;height:1.5px;border-right:.5px solid #a4acb6;border-top:.5px solid #a4acb6;transform:rotate(45deg);"></div><div style="left:34.45px;top:272.61px;width:4.20px;height:4.00px;background:#2f7fc2;border-radius:.8px;"></div><span class="t" style="top:272.29px;font-size:4.7px;left:41.65px;transform:scaleX(0.87);transform-origin:0 50%;">Initial Values 1 <i>(init1)</i></span><div style="left:28.85px;top:280.74px;width:1.5px;height:1.5px;border-right:.5px solid #a4acb6;border-top:.5px solid #a4acb6;transform:rotate(45deg);"></div><div style="left:34.45px;top:279.64px;width:4.20px;height:4.00px;background:#2f7fc2;border-radius:.8px;"></div><span class="t" style="top:279.32px;font-size:4.7px;left:41.65px;transform:scaleX(0.87);transform-origin:0 50%;">Gravity 1 <i>(grav1)</i></span><div style="left:28.85px;top:287.77px;width:1.5px;height:1.5px;border-right:.5px solid #a4acb6;border-top:.5px solid #a4acb6;transform:rotate(45deg);"></div><div style="left:34.45px;top:286.67px;width:4.20px;height:4.00px;background:#2f7fc2;border-radius:.8px;"></div><span class="t" style="top:286.35px;font-size:4.7px;left:41.65px;transform:scaleX(0.87);transform-origin:0 50%;">Wall 1 <i>(wallbc1)</i></span><div style="left:28.85px;top:294.80px;width:1.5px;height:1.5px;border-right:.5px solid #a4acb6;border-top:.5px solid #a4acb6;transform:rotate(45deg);"></div><div style="left:34.05px;top:294.10px;width:5.00px;height:3.20px;background:#2f7fc2;border-radius:.8px;"></div><span class="t" style="top:293.38px;font-size:4.7px;left:41.65px;transform:scaleX(0.87);transform-origin:0 50%;">Porous Medium iron <i>(porous2)</i></span><div style="left:28.85px;top:301.83px;width:1.5px;height:1.5px;border-right:.5px solid #a4acb6;border-top:.5px solid #a4acb6;transform:rotate(45deg);"></div><div style="left:34.05px;top:301.13px;width:5.00px;height:3.20px;background:#2f7fc2;border-radius:.8px;"></div><span class="t" style="top:300.41px;font-size:4.7px;left:41.65px;transform:scaleX(0.87);transform-origin:0 50%;">Fluid Properties cokefree <i>(fp1)</i></span><div style="left:28.85px;top:308.86px;width:1.5px;height:1.5px;border-right:.5px solid #a4acb6;border-top:.5px solid #a4acb6;transform:rotate(45deg);"></div><div style="left:34.05px;top:308.16px;width:5.00px;height:3.20px;background:#2f7fc2;border-radius:.8px;"></div><span class="t" style="top:307.44px;font-size:4.7px;left:41.65px;transform:scaleX(0.87);transform-origin:0 50%;">Open Boundary slgas <i>(open1)</i></span><div style="left:28.85px;top:315.89px;width:1.5px;height:1.5px;border-right:.5px solid #a4acb6;border-top:.5px solid #a4acb6;transform:rotate(45deg);"></div><div style="left:34.05px;top:315.19px;width:5.00px;height:3.20px;background:#2f7fc2;border-radius:.8px;"></div><span class="t" style="top:314.47px;font-size:4.7px;left:41.65px;transform:scaleX(0.87);transform-origin:0 50%;">Symmetry 1 <i>(sym1)</i></span><div style="left:28.85px;top:322.92px;width:1.5px;height:1.5px;border-right:.5px solid #a4acb6;border-top:.5px solid #a4acb6;transform:rotate(45deg);"></div><div style="left:34.05px;top:322.22px;width:5.00px;height:3.20px;background:#2f7fc2;border-radius:.8px;"></div><span class="t" style="top:321.50px;font-size:4.7px;left:41.65px;transform:scaleX(0.87);transform-origin:0 50%;">Inlet bot <i>(inl1)</i></span><div style="left:28.85px;top:329.95px;width:1.5px;height:1.5px;border-right:.5px solid #a4acb6;border-top:.5px solid #a4acb6;transform:rotate(45deg);"></div><div style="left:34.05px;top:329.25px;width:5.00px;height:3.20px;background:#2f7fc2;border-radius:.8px;"></div><span class="t" style="top:328.53px;font-size:4.7px;left:41.65px;transform:scaleX(0.87);transform-origin:0 50%;">Mass Source iron TH <i>(ms1)</i></span><div style="left:28.85px;top:336.98px;width:1.5px;height:1.5px;border-right:.5px solid #a4acb6;border-top:.5px solid #a4acb6;transform:rotate(45deg);"></div><div style="left:34.05px;top:336.28px;width:5.00px;height:3.20px;background:#2f7fc2;border-radius:.8px;"></div><span class="t" style="top:335.56px;font-size:4.7px;left:41.65px;transform:scaleX(0.87);transform-origin:0 50%;">Mass Source slag TH <i>(ms2)</i></span><div style="left:28.85px;top:344.01px;width:1.5px;height:1.5px;border-right:.5px solid #a4acb6;border-top:.5px solid #a4acb6;transform:rotate(45deg);"></div><div style="left:34.05px;top:343.31px;width:5.00px;height:3.20px;background:#2f7fc2;border-radius:.8px;"></div><span class="t" style="top:342.59px;font-size:4.7px;left:41.65px;transform:scaleX(0.87);transform-origin:0 50%;">Mass Source iron Prod <i>(ms3)</i></span><div style="left:28.85px;top:351.04px;width:1.5px;height:1.5px;border-right:.5px solid #a4acb6;border-top:.5px solid #a4acb6;transform:rotate(45deg);"></div><div style="left:34.15px;top:349.54px;width:4.80px;height:4.80px;border:.8px solid #a9c4da;border-radius:50%;box-sizing:border-box;"></div><span class="t" style="top:349.62px;font-size:4.7px;left:41.65px;transform:scaleX(0.87);transform-origin:0 50%;">Global Equations 1 (ODE1) <i>(ge1)</i></span><div style="left:28.85px;top:358.07px;width:1.5px;height:1.5px;border-right:.5px solid #a4acb6;border-top:.5px solid #a4acb6;transform:rotate(45deg);"></div><div style="left:34.15px;top:356.57px;width:4.80px;height:4.80px;border:.8px solid #a9c4da;border-radius:50%;box-sizing:border-box;"></div><span class="t" style="top:356.65px;font-size:4.7px;left:41.65px;transform:scaleX(0.87);transform-origin:0 50%;">Global Equations 2 (ODE2) <i>(ge2)</i></span><div style="left:28.85px;top:365.10px;width:1.5px;height:1.5px;border-right:.5px solid #a4acb6;border-top:.5px solid #a4acb6;transform:rotate(45deg);"></div><div style="left:34.15px;top:363.60px;width:4.80px;height:4.80px;border:.8px solid #a9c4da;border-radius:50%;box-sizing:border-box;"></div><span class="t" style="top:363.68px;font-size:4.7px;left:41.65px;transform:scaleX(0.87);transform-origin:0 50%;">Global Equations 3 (ODE3) <i>(ge3)</i></span><div style="left:28.85px;top:372.13px;width:1.5px;height:1.5px;border-right:.5px solid #a4acb6;border-top:.5px solid #a4acb6;transform:rotate(45deg);"></div><div style="left:34.15px;top:370.63px;width:4.80px;height:4.80px;border:.8px solid #a9c4da;border-radius:50%;box-sizing:border-box;"></div><span class="t" style="top:370.71px;font-size:4.7px;left:41.65px;transform:scaleX(0.87);transform-origin:0 50%;">Global Equations 4 (ODE4) <i>(ge4)</i></span><div style="left:28.85px;top:379.16px;width:1.5px;height:1.5px;border-right:.5px solid #a4acb6;border-top:.5px solid #a4acb6;transform:rotate(45deg);"></div><div style="left:34.15px;top:377.66px;width:4.80px;height:4.80px;border:.8px solid #a9c4da;border-radius:50%;box-sizing:border-box;"></div><span class="t" style="top:377.74px;font-size:4.7px;left:41.65px;transform:scaleX(0.87);transform-origin:0 50%;">Global Equations 5 (ODE5) <i>(ge5)</i></span><div style="left:34.75px;top:385.49px;width:3.60px;height:3.00px;background:#6f8fae;border-radius:.6px;opacity:.9;"></div><span class="t" style="top:384.77px;font-size:4.7px;left:41.65px;transform:scaleX(0.87);transform-origin:0 50%;">Equation View <i>(info)</i></span><div style="left:22.20px;top:392.42px;width:1.7px;height:1.7px;border-right:.7px solid #444;border-bottom:.7px solid #444;transform:rotate(45deg);"></div><div style="left:27.60px;top:392.12px;width:4.20px;height:4.00px;background:#8d949c;border-radius:.8px;"></div><span class="t" style="top:391.80px;font-size:4.7px;left:34.80px;transform:scaleX(0.87);transform-origin:0 50%;">Moving Mesh (ale) <i>{ale}</i></span><div style="left:28.85px;top:400.25px;width:1.5px;height:1.5px;border-right:.5px solid #a4acb6;border-top:.5px solid #a4acb6;transform:rotate(45deg);"></div><div style="left:34.45px;top:399.15px;width:4.20px;height:4.00px;background:#2f7fc2;border-radius:.8px;"></div><span class="t" style="top:398.83px;font-size:4.7px;left:41.65px;transform:scaleX(0.87);transform-origin:0 50%;">Fixed Mesh 1 <i>(fix1)</i></span><div style="left:28.85px;top:407.28px;width:1.5px;height:1.5px;border-right:.5px solid #a4acb6;border-top:.5px solid #a4acb6;transform:rotate(45deg);"></div><div style="left:34.45px;top:406.18px;width:4.20px;height:4.00px;background:#2f7fc2;border-radius:.8px;"></div><span class="t" style="top:405.86px;font-size:4.7px;left:41.65px;transform:scaleX(0.87);transform-origin:0 50%;">Prescribed Mesh Displacement walls <i>(disp1)</i></span><div style="left:28.85px;top:414.31px;width:1.5px;height:1.5px;border-right:.5px solid #a4acb6;border-top:.5px solid #a4acb6;transform:rotate(45deg);"></div><div style="left:34.05px;top:413.61px;width:5.00px;height:3.20px;background:#2f7fc2;border-radius:.8px;"></div><span class="t" style="top:412.89px;font-size:4.7px;left:41.65px;transform:scaleX(0.87);transform-origin:0 50%;">Prescribed Mesh Displacement irir <i>(disp2)</i></span><div style="left:28.85px;top:421.34px;width:1.5px;height:1.5px;border-right:.5px solid #a4acb6;border-top:.5px solid #a4acb6;transform:rotate(45deg);"></div><div style="left:34.05px;top:420.64px;width:5.00px;height:3.20px;background:#2f7fc2;border-radius:.8px;"></div><span class="t" style="top:419.92px;font-size:4.7px;left:41.65px;transform:scaleX(0.87);transform-origin:0 50%;">Free Deformation 1 <i>(free1)</i></span><div style="left:28.85px;top:428.37px;width:1.5px;height:1.5px;border-right:.5px solid #a4acb6;border-top:.5px solid #a4acb6;transform:rotate(45deg);"></div><div style="left:34.05px;top:427.67px;width:5.00px;height:3.20px;background:#2f7fc2;border-radius:.8px;"></div><span class="t" style="top:426.95px;font-size:4.7px;left:41.65px;transform:scaleX(0.87);transform-origin:0 50%;">Prescribed Normal Mesh Velocity irsl <i>(pnmv1)</i></span><div style="left:4.30px;top:432.99px;width:114.70px;height:6.73px;background:#cce4f7;"></div><div style="left:28.85px;top:435.40px;width:1.5px;height:1.5px;border-right:.5px solid #a4acb6;border-top:.5px solid #a4acb6;transform:rotate(45deg);"></div><div style="left:34.05px;top:434.70px;width:5.00px;height:3.20px;background:#2f7fc2;border-radius:.8px;"></div><span class="t" style="top:433.98px;font-size:4.7px;left:41.65px;transform:scaleX(0.87);transform-origin:0 50%;">Prescribed Normal Mesh Velocity slgas <i>(pnmv2)</i></span><div style="left:28.85px;top:442.43px;width:1.5px;height:1.5px;border-right:.5px solid #a4acb6;border-top:.5px solid #a4acb6;transform:rotate(45deg);"></div><div style="left:34.05px;top:441.73px;width:5.00px;height:3.20px;background:#2f7fc2;border-radius:.8px;"></div><span class="t" style="top:441.01px;font-size:4.7px;left:41.65px;transform:scaleX(0.87);transform-origin:0 50%;">Prescribed Mesh Displacement irslK <i>(disp3)</i></span><div style="left:28.85px;top:449.46px;width:1.5px;height:1.5px;border-right:.5px solid #a4acb6;border-top:.5px solid #a4acb6;transform:rotate(45deg);"></div><div style="left:34.05px;top:448.76px;width:5.00px;height:3.20px;background:#2f7fc2;border-radius:.8px;"></div><span class="t" style="top:448.04px;font-size:4.7px;left:41.65px;transform:scaleX(0.87);transform-origin:0 50%;">Prescribed Deformation cokefree <i>(pres1)</i></span><div style="left:34.75px;top:455.79px;width:3.60px;height:3.00px;background:#6f8fae;border-radius:.6px;opacity:.9;"></div><span class="t" style="top:455.07px;font-size:4.7px;left:41.65px;transform:scaleX(0.87);transform-origin:0 50%;">Equation View <i>(info)</i></span><div style="left:22.00px;top:463.52px;width:1.5px;height:1.5px;border-right:.5px solid #a4acb6;border-top:.5px solid #a4acb6;transform:rotate(45deg);"></div><div style="left:27.90px;top:462.82px;width:3.60px;height:3.00px;background:#cfd4da;border-radius:.6px;opacity:.9;"></div><span class="t" style="top:462.10px;font-size:4.7px;left:34.80px;transform:scaleX(0.87);transform-origin:0 50%;">Events (ev) <i>{ev}</i></span><div style="left:4.30px;top:468.14px;width:114.70px;height:6.73px;background:#e3f0fb;"></div><div style="left:22.00px;top:470.55px;width:1.5px;height:1.5px;border-right:.5px solid #a4acb6;border-top:.5px solid #a4acb6;transform:rotate(45deg);"></div><div class="tr" style="left:27.10px;top:469.05px;border-left:2.6px solid transparent;border-right:2.6px solid transparent;border-bottom:4.6px solid #9aa0a7;"></div><span class="t" style="top:469.13px;font-size:4.7px;left:34.80px;transform:scaleX(0.87);transform-origin:0 50%;">Mesh 1 <i>(mesh1)</i></span></div></div><div style="left:4.30px;top:476.40px;width:114.70px;height:5.40px;background:#f0f1f3;"></div><div style="left:8.30px;top:477.00px;width:80.00px;height:4.20px;background:#d9dbdf;"></div><div style="left:128.60px;top:49.80px;width:138.40px;height:454.20px;background:#fcfdff;"></div><span class="t" style="top:52.92px;font-size:8.3px;color:#79b4e2;left:131.20px;transform:scaleX(0.87);transform-origin:0 50%;">Settings</span><div class="tr" style="left:256.35px;top:56.38px;border-left:1.25px solid transparent;border-right:1.25px solid transparent;border-top:1.69px solid #333;"></div><div style="left:262.80px;top:55.60px;width:1.30px;height:2.80px;background:#222;"></div><span class="t" style="top:63.94px;font-size:5.6px;color:#9cc8ea;left:131.20px;transform:scaleX(0.87);transform-origin:0 50%;">Prescribed Normal Mesh Velocity</span><span class="t" style="top:75.68px;font-size:4.7px;color:#222;left:131.00px;transform:scaleX(0.87);transform-origin:0 50%;">Label:</span><div style="left:145.00px;top:74.30px;width:109.50px;height:7.40px;background:#fff;overflow:hidden;border:.5px solid #d5dae0;box-sizing:border-box;"><span class="t" style="top:0.48px;font-size:4.7px;color:#222;left:1.10px;transform:scaleX(0.87);transform-origin:0 50%;">Prescribed Normal Mesh Velocity slgas</span></div><div style="left:257.70px;top:75.00px;width:5.60px;height:6.00px;background:#f3f5f8;border:.5px solid #d5dae0;box-sizing:border-box;"></div><div style="left:259.20px;top:76.70px;width:2.60px;height:2.60px;background:#a9d3b4;"></div><div style="left:129.20px;top:85.60px;width:136.80px;height:8.60px;background:#dfe8f4;"></div><div class="tr" style="left:130.76px;top:89.38px;border-left:1.4375px solid transparent;border-right:1.4375px solid transparent;border-top:1.94px solid #333;"></div><span class="t" style="top:87.32px;font-size:5.3px;color:#222;left:139.00px;transform:scaleX(0.87);transform-origin:0 50%;">Boundary Selection</span><span class="t" style="top:99.08px;font-size:4.7px;color:#222;left:131.00px;transform:scaleX(0.87);transform-origin:0 50%;">Selection:</span><div style="left:152.40px;top:97.70px;width:112.60px;height:7.40px;background:#e9edf3;border:.4px solid #dde2e8;box-sizing:border-box;"></div><span class="t" style="top:99.08px;font-size:4.7px;color:#222;left:156.60px;transform:scaleX(0.87);transform-origin:0 50%;">blfS slgas (geom1_boxsel10)</span><div class="tr" style="left:259.95px;top:100.98px;border-left:1.25px solid transparent;border-right:1.25px solid transparent;border-top:1.69px solid #333;"></div><div style="left:131.40px;top:107.80px;width:13.10px;height:13.20px;background:#9fd1f6;border:.5px solid #6db7ee;box-sizing:border-box;"></div><div style="left:133.20px;top:113.00px;width:9.50px;height:2.80px;background:#6aa84a;"></div><div style="left:139.50px;top:112.40px;width:3.20px;height:4.00px;background:#dfe8ef;border:.4px solid #777;box-sizing:border-box;"></div><div style="left:147.20px;top:107.80px;width:97.20px;height:41.10px;background:#fff;border:.5px solid #d5dae0;box-sizing:border-box;"></div><span class="t" style="top:109.58px;font-size:4.7px;color:#222;left:150.00px;transform:scaleX(0.87);transform-origin:0 50%;">13</span><span class="t" style="top:117.08px;font-size:4.7px;color:#222;left:150.00px;transform:scaleX(0.87);transform-origin:0 50%;">26</span><div style="left:250.30px;top:108.90px;width:3.00px;height:3.00px;background:#3f6fc0;border-radius:.4px;"></div><div style="left:250.30px;top:116.20px;width:3.00px;height:3.00px;background:#c5cad0;border-radius:.4px;"></div><div style="left:250.30px;top:123.60px;width:3.00px;height:3.00px;background:#c5cad0;border-radius:.4px;"></div><div style="left:250.30px;top:130.70px;width:3.00px;height:3.00px;background:#c5cad0;border-radius:.4px;"></div><div style="left:260.60px;top:110.20px;width:2.80px;height:0.60px;background:#9aa0a7;"></div><div style="left:261.70px;top:109.10px;width:0.60px;height:2.80px;background:#9aa0a7;"></div><div style="left:260.60px;top:117.50px;width:2.80px;height:0.60px;background:#5a8fd0;"></div><div style="left:260.40px;top:123.60px;width:3.20px;height:3.20px;background:#e9b03a;border-radius:.4px;"></div><div style="left:129.20px;top:153.70px;width:136.80px;height:8.60px;background:#dfe8f4;"></div><div style="left:130.60px;top:157.20px;width:1.5px;height:1.5px;border-right:.5px solid #b9c0c8;border-top:.5px solid #b9c0c8;transform:rotate(45deg);"></div><span class="t" style="top:155.42px;font-size:5.3px;color:#222;left:139.00px;transform:scaleX(0.87);transform-origin:0 50%;">Override and Contribution</span><div style="left:129.20px;top:163.50px;width:136.80px;height:8.60px;background:#dfe8f4;"></div><div style="left:130.60px;top:167.00px;width:1.5px;height:1.5px;border-right:.5px solid #b9c0c8;border-top:.5px solid #b9c0c8;transform:rotate(45deg);"></div><span class="t" style="top:165.22px;font-size:5.3px;color:#222;left:139.00px;transform:scaleX(0.87);transform-origin:0 50%;">Equation</span><div style="left:129.20px;top:173.40px;width:136.80px;height:8.60px;background:#dfe8f4;"></div><div class="tr" style="left:130.76px;top:177.18px;border-left:1.4375px solid transparent;border-right:1.4375px solid transparent;border-top:1.94px solid #333;"></div><span class="t" style="top:175.12px;font-size:5.3px;color:#222;left:139.00px;transform:scaleX(0.87);transform-origin:0 50%;">Normal Mesh Velocity</span><span class="t" style="top:186.28px;font-size:4.7px;color:#222;left:131.00px;transform:scaleX(0.87);transform-origin:0 50%;">Normal mesh velocity:</span><span class="t" style="top:195.28px;font-size:4.7px;color:#222;left:131.50px;transform:scaleX(0.87);transform-origin:0 50%;">v<sub style="font-size:3px">n</sub></span><div style="left:139.60px;top:194.00px;width:114.40px;height:7.20px;background:#fff;overflow:hidden;border:.5px solid #d5dae0;box-sizing:border-box;"><span class="t" style="top:0.38px;font-size:4.7px;color:#222;left:1.10px;transform:scaleX(0.87);transform-origin:0 50%;">(nx*vx+ny*vy+nz*(wsi+wmbs_sl+0.5*dVs*stepRh(sqrt(x*x+y*y)))</span></div><span class="t" style="top:195.28px;font-size:4.7px;color:#222;left:257.30px;transform:scaleX(0.87);transform-origin:0 50%;">m/s</span><div style="left:129.20px;top:205.00px;width:136.80px;height:8.60px;background:#dfe8f4;"></div><div style="left:130.60px;top:208.50px;width:1.5px;height:1.5px;border-right:.5px solid #b9c0c8;border-top:.5px solid #b9c0c8;transform:rotate(45deg);"></div><span class="t" style="top:206.72px;font-size:5.3px;color:#222;left:139.00px;transform:scaleX(0.87);transform-origin:0 50%;">Moving Boundary Smoothing</span><div style="left:268.50px;top:49.80px;width:638.50px;height:337.80px;background:linear-gradient(#fcfdff 0%,#f6f9fe 35%,#e3ecf9 100%);"></div><span class="t" style="top:52.92px;font-size:8.3px;color:#79b4e2;left:271.50px;transform:scaleX(0.87);transform-origin:0 50%;">Graphics</span><div class="tr" style="left:897.75px;top:56.38px;border-left:1.25px solid transparent;border-right:1.25px solid transparent;border-top:1.69px solid #333;"></div><div style="left:903.20px;top:55.60px;width:1.30px;height:2.80px;background:#222;"></div><div style="left:898.40px;top:73.20px;width:4.20px;height:3.20px;background:#3f6f9f;border-radius:.6px;"></div><div style="left:270.30px;top:63.80px;width:3.40px;height:3.20px;background:#a9c9e6;border-radius:.5px;"></div><div style="left:275.30px;top:63.80px;width:3.40px;height:3.20px;background:#a9c9e6;border-radius:.5px;"></div><div style="left:280.80px;top:63.80px;width:3.40px;height:3.20px;background:#3f93d3;border-radius:.5px;"></div><div style="left:289.30px;top:63.80px;width:3.40px;height:3.20px;background:#3f93d3;border-radius:.5px;"></div><div style="left:294.80px;top:63.80px;width:3.40px;height:3.20px;background:#a9c9e6;border-radius:.5px;"></div><div style="left:302.30px;top:63.80px;width:3.40px;height:3.20px;background:#a9c9e6;border-radius:.5px;"></div><div style="left:318.30px;top:63.80px;width:3.40px;height:3.20px;background:#a9c9e6;border-radius:.5px;"></div><div style="left:326.30px;top:63.80px;width:3.40px;height:3.20px;background:#a9c9e6;border-radius:.5px;"></div><div style="left:334.30px;top:63.80px;width:3.40px;height:3.20px;background:#3f93d3;border-radius:.5px;"></div><div style="left:358.70px;top:61.80px;width:7.20px;height:7.20px;background:#6db7ee;border-radius:.6px;"></div><div style="left:360.70px;top:63.50px;width:3.20px;height:3.80px;background:#e8f3fc;"></div><div style="left:371.30px;top:63.80px;width:3.40px;height:3.20px;background:#a9c9e6;border-radius:.5px;"></div><div style="left:388.30px;top:63.80px;width:3.40px;height:3.20px;background:#3f93d3;border-radius:.5px;"></div><div style="left:405.30px;top:63.80px;width:3.40px;height:3.20px;background:#a9c9e6;border-radius:.5px;"></div><div style="left:420.30px;top:63.80px;width:3.40px;height:3.20px;background:#a9c9e6;border-radius:.5px;"></div><div style="left:435.30px;top:63.80px;width:3.40px;height:3.20px;background:#a9c9e6;border-radius:.5px;"></div><div style="left:443.30px;top:63.80px;width:3.40px;height:3.20px;background:#a9c9e6;border-radius:.5px;"></div><div style="left:453.30px;top:63.80px;width:3.40px;height:3.20px;background:#a9c9e6;border-radius:.5px;"></div><div style="left:462.30px;top:63.80px;width:3.40px;height:3.20px;background:#a9c9e6;border-radius:.5px;"></div><div style="left:469.30px;top:63.80px;width:3.40px;height:3.20px;background:#3f93d3;border-radius:.5px;"></div><div style="left:487.30px;top:63.80px;width:3.40px;height:3.20px;background:#3f93d3;border-radius:.5px;"></div><div style="left:501.30px;top:63.80px;width:3.40px;height:3.20px;background:#a9c9e6;border-radius:.5px;"></div><div style="left:516.30px;top:63.80px;width:3.40px;height:3.20px;background:#a9c9e6;border-radius:.5px;"></div><div style="left:528.90px;top:61.80px;width:7.20px;height:7.20px;background:#6db7ee;border-radius:.6px;"></div><div style="left:530.90px;top:63.50px;width:3.20px;height:3.80px;background:#e8f3fc;"></div><div style="left:536.90px;top:61.80px;width:7.20px;height:7.20px;background:#6db7ee;border-radius:.6px;"></div><div style="left:538.90px;top:63.50px;width:3.20px;height:3.80px;background:#e8f3fc;"></div><div style="left:547.30px;top:63.80px;width:3.40px;height:3.20px;background:#3f93d3;border-radius:.5px;"></div><div style="left:557.30px;top:63.80px;width:3.40px;height:3.20px;background:#a9c9e6;border-radius:.5px;"></div><div style="left:565.30px;top:63.80px;width:3.40px;height:3.20px;background:#3f93d3;border-radius:.5px;"></div><div style="left:582.30px;top:63.80px;width:3.40px;height:3.20px;background:#a9c9e6;border-radius:.5px;"></div><div style="left:591.30px;top:63.80px;width:3.40px;height:3.20px;background:#a9c9e6;border-radius:.5px;"></div><div style="left:598.30px;top:63.80px;width:3.40px;height:3.20px;background:#3f93d3;border-radius:.5px;"></div><div class="tr" style="left:285.38px;top:65.14px;border-left:1.125px solid transparent;border-right:1.125px solid transparent;border-top:1.52px solid #333;"></div><div class="tr" style="left:308.38px;top:65.14px;border-left:1.125px solid transparent;border-right:1.125px solid transparent;border-top:1.52px solid #333;"></div><div class="tr" style="left:377.88px;top:65.14px;border-left:1.125px solid transparent;border-right:1.125px solid transparent;border-top:1.52px solid #333;"></div><div class="tr" style="left:395.38px;top:65.14px;border-left:1.125px solid transparent;border-right:1.125px solid transparent;border-top:1.52px solid #333;"></div><div class="tr" style="left:412.38px;top:65.14px;border-left:1.125px solid transparent;border-right:1.125px solid transparent;border-top:1.52px solid #333;"></div><div class="tr" style="left:427.38px;top:65.14px;border-left:1.125px solid transparent;border-right:1.125px solid transparent;border-top:1.52px solid #333;"></div><div class="tr" style="left:476.88px;top:65.14px;border-left:1.125px solid transparent;border-right:1.125px solid transparent;border-top:1.52px solid #333;"></div><div class="tr" style="left:494.38px;top:65.14px;border-left:1.125px solid transparent;border-right:1.125px solid transparent;border-top:1.52px solid #333;"></div><div class="tr" style="left:508.38px;top:65.14px;border-left:1.125px solid transparent;border-right:1.125px solid transparent;border-top:1.52px solid #333;"></div><div class="tr" style="left:523.38px;top:65.14px;border-left:1.125px solid transparent;border-right:1.125px solid transparent;border-top:1.52px solid #333;"></div><div class="tr" style="left:572.38px;top:65.14px;border-left:1.125px solid transparent;border-right:1.125px solid transparent;border-top:1.52px solid #333;"></div><div class="tr" style="left:585.38px;top:65.14px;border-left:1.125px solid transparent;border-right:1.125px solid transparent;border-top:1.52px solid #333;"></div><svg style="left:0;top:0;width:909.0px;height:504.0px" viewBox="0 0 909.0 504.0"><g transform="scale(1.00000) translate(0.00 -102.60)"><polyline points="796.2,258.2 796.2,366.5" fill="none" stroke="#555" stroke-width=".62"/><polyline points="760.4,272.5 796.2,291.2 517.5,400.0 497.0,408.0" fill="none" stroke="#555" stroke-width=".62"/><polyline points="765.0,268.4 765.0,377.4" fill="none" stroke="#555" stroke-width=".62"/><polyline points="770.7,268.4 770.7,377.4" fill="none" stroke="#555" stroke-width=".62"/><polyline points="796.2,359.6 690.9,400.0 677.2,405.2" fill="none" stroke="#555" stroke-width=".62"/><polyline points="796.2,366.5 709.1,400.0 695.4,405.2" fill="none" stroke="#555" stroke-width=".62"/><polyline points="765.0,377.4 770.7,375.6" fill="none" stroke="#555" stroke-width=".62"/><polyline points="615.6,327.7 645.2,325.0 690.9,330.0 736.5,341.4 770.7,352.8 796.2,359.6" fill="none" stroke="#555" stroke-width=".62"/><polyline points="638.4,320.9 690.9,324.3 736.5,334.5 770.7,346.0 796.2,357.4" fill="none" stroke="#555" stroke-width=".62"/><polyline points="492.5,374.5 492.5,402.0" fill="none" stroke="#555" stroke-width=".62"/><polyline points="458.2,334.5 454.6,348.2 458.5,364.2 467.4,382.4 481.0,398.4 485.6,403.0" fill="none" stroke="#555" stroke-width=".62"/><polyline points="459.4,400.7 469.2,382.4 481.0,368.8 492.0,364.7" fill="none" stroke="#555" stroke-width=".62"/><polyline points="465.1,400.7 474.2,384.7 485.6,374.5 492.5,371.5" fill="none" stroke="#555" stroke-width=".62"/><polygon points="492.5,374.5 471.9,355.1 458.2,334.5 454.8,314.0 461.7,292.4 476.5,273.0 501.6,253.6 531.2,238.8 567.7,227.4 606.5,221.0 645.2,219.4 690.9,222.1 736.5,230.8 770.7,244.5 796.2,258.2" fill="#b4b2f0" stroke="#6464e0" stroke-width=".7"/><ellipse cx="767.7" cy="268.4" rx="3" ry="1.2" fill="#a9a7ee" stroke="#6464e0" stroke-width=".5"/><ellipse cx="767.7" cy="301.5" rx="3" ry="1.2" fill="none" stroke="#555" stroke-width=".5"/><ellipse cx="767.7" cy="369.9" rx="3" ry="1.2" fill="none" stroke="#555" stroke-width=".5"/></g></svg><svg style="left:57px;top:465.5px;width:6px;height:8px" viewBox="0 0 6 8"><polygon points="0.6,0.4 0.6,6 2,4.7 3.1,6.9 4,6.4 2.9,4.3 4.7,4.2" fill="#111" stroke="#fff" stroke-width=".3"/></svg><div style="left:0.00px;top:0.00px;width:3.20px;height:504.00px;background:#fbfcfe;"></div><div style="left:3.20px;top:0.00px;width:1.00px;height:504.00px;background:#ea6a6a;"></div><div style="left:9.00px;top:483.20px;width:103.30px;height:16.00px;background:#7b7d80;border-radius:2px;"></div><span class="t" style="top:486.14px;font-size:9.6px;color:#f4f4f4;left:13.50px;transform:scaleX(0.86);transform-origin:0 50%;font-weight:normal;">Yalcin Kaymak (External)</span><div style="left:119.30px;top:483.20px;width:48.50px;height:16.00px;background:#7b7d80;border-radius:2px;"></div><div style="left:127.00px;top:491.00px;width:9.00px;height:0.90px;background:#a6a8ab;"></div><div style="left:147.00px;top:491.00px;width:9.00px;height:0.90px;background:#e8e8e8;"></div><div style="left:151.10px;top:486.90px;width:0.90px;height:9.00px;background:#e8e8e8;"></div><div style="left:3.20px;top:497.60px;width:903.80px;height:5.60px;background:#14161a;"></div><div style="left:7.00px;top:499.20px;width:4.50px;height:3.00px;background:#e8e8e8;border-radius:.5px;"></div><div style="left:19.00px;top:499.20px;width:4.00px;height:3.00px;background:#2a9a4a;"></div><span class="t" style="top:499.00px;font-size:4.5px;color:#bbb;left:25.00px;transform:scaleX(0.87);transform-origin:0 50%;">parameters</span><div style="left:56.00px;top:499.40px;width:4.00px;height:3.00px;background:#7ab0d8;"></div></div></div>
<div style="position:absolute;left:69px;top:398.4px;width:900px;height:2.8px;background:#05060a;"></div>
<div style="position:absolute;left:0;top:605.7px;width:69px;height:272px;background:#000;"></div>
<div class="clip" id="wC" style="left:69px;top:401.2px;width:879.2px;height:476px;"><div class="win" style="left:-1.36px;top:-0.40px;transform:scale(0.975);"><div style="left:0.00px;top:0.00px;width:909.00px;height:504.00px;background:#eef2f7;"></div><div style="left:0.00px;top:0.00px;width:909.00px;height:8.30px;background:#fdfeff;"></div><div style="left:4.60px;top:2.40px;width:3.20px;height:3.20px;background:#1d4e89;border-radius:50%;"></div><div style="left:15.20px;top:2.60px;width:3.60px;height:3.00px;background:#d9dde2;border-radius:.5px;"></div><div style="left:23.80px;top:2.60px;width:3.60px;height:3.00px;background:#2f7fc2;border-radius:.5px;"></div><div style="left:33.20px;top:2.60px;width:3.60px;height:3.00px;background:#9fc6e6;border-radius:.5px;"></div><div style="left:41.80px;top:2.60px;width:3.60px;height:3.00px;background:#7fb3de;border-radius:.5px;"></div><div style="left:51.30px;top:2.60px;width:1.40px;height:1.20px;background:#555;border-radius:.5px;"></div><div style="left:58.20px;top:2.60px;width:3.60px;height:3.00px;background:#b9c0c8;border-radius:.5px;"></div><div style="left:64.20px;top:2.60px;width:3.60px;height:3.00px;background:#c9cfd6;border-radius:.5px;"></div><div style="left:70.90px;top:2.60px;width:3.60px;height:3.00px;background:#c9cfd6;border-radius:.5px;"></div><div style="left:76.90px;top:2.60px;width:3.60px;height:3.00px;background:#d5dae0;border-radius:.5px;"></div><div style="left:85.20px;top:2.60px;width:3.60px;height:3.00px;background:#c3cad2;border-radius:.5px;"></div><div style="left:93.20px;top:2.60px;width:3.60px;height:3.00px;background:#c3cad2;border-radius:.5px;"></div><div style="left:102.20px;top:2.60px;width:3.60px;height:3.00px;background:#9fc6e6;border-radius:.5px;"></div><div style="left:111.90px;top:2.60px;width:3.60px;height:3.00px;background:#2f7fc2;border-radius:.5px;"></div><div style="left:120.20px;top:2.60px;width:3.60px;height:3.00px;background:#3f93d3;border-radius:.5px;"></div><div style="left:129.20px;top:2.60px;width:3.60px;height:3.00px;background:#e0a23c;border-radius:.5px;"></div><div style="left:138.20px;top:2.60px;width:3.60px;height:3.00px;background:#9fc6e6;border-radius:.5px;"></div><div class="tr" style="left:145.75px;top:3.67px;border-left:1.25px solid transparent;border-right:1.25px solid transparent;border-top:1.69px solid #444;"></div><div style="left:356px;top:1.5px;width:198px;height:8px;background:#2a62a6;clip-path:polygon(0 0,100% 0,96.5% 100%,3.5% 100%);"></div><span class="t" style="top:2.92px;font-size:4.3px;color:#c9dcf2;left:455.00px;transform:translateX(-50%) scaleX(0.87);transform-origin:50% 50%;">10.12.217.100</span><div style="left:367.00px;top:3.60px;width:2.60px;height:2.60px;background:#e8f0fa;border-radius:.4px;"></div><div style="left:373.50px;top:3.40px;width:3.20px;height:3.00px;background:#dce8f6;clip-path:polygon(0 100%,100% 0,100% 100%);"></div><div style="left:523.50px;top:6.20px;width:3.20px;height:0.80px;background:#e8f0fa;"></div><div style="left:531.50px;top:3.40px;width:3.00px;height:3.00px;border:.6px solid #dce8f6;box-sizing:border-box;"></div><span class="t" style="top:1.50px;font-size:6.5px;color:#fff;left:541.50px;transform:translateX(-50%) scaleX(1);transform-origin:50% 50%;font-weight:bold;">×</span><div style="left:862.00px;top:4.30px;width:4.00px;height:0.45px;background:#8a8f96;"></div><div style="left:878.30px;top:2.40px;width:3.60px;height:3.60px;border:.45px solid #6f757c;box-sizing:border-box;"></div><span class="t" style="top:0.50px;font-size:7px;color:#6f757c;left:897.00px;transform:translateX(-50%) scaleX(1);transform-origin:50% 50%;">×</span><div style="left:0.00px;top:8.30px;width:909.00px;height:9.00px;background:#e7e9ec;"></div><div style="left:4.30px;top:9.00px;width:18.80px;height:7.80px;background:#2c7acb;"></div><span class="t" style="top:10.58px;font-size:4.7px;color:#d6e6f8;left:13.70px;transform:translateX(-50%) scaleX(0.87);transform-origin:50% 50%;">File</span><span class="t" style="top:10.46px;font-size:4.9px;color:#222;left:32.50px;transform:translateX(-50%) scaleX(0.87);transform-origin:50% 50%;">Home</span><span class="t" style="top:10.46px;font-size:4.9px;color:#222;left:54.70px;transform:translateX(-50%) scaleX(0.87);transform-origin:50% 50%;">Definitions</span><span class="t" style="top:10.46px;font-size:4.9px;color:#222;left:80.40px;transform:translateX(-50%) scaleX(0.87);transform-origin:50% 50%;">Geometry</span><span class="t" style="top:10.46px;font-size:4.9px;color:#222;left:104.30px;transform:translateX(-50%) scaleX(0.87);transform-origin:50% 50%;">Materials</span><span class="t" style="top:10.46px;font-size:4.9px;color:#222;left:125.70px;transform:translateX(-50%) scaleX(0.87);transform-origin:50% 50%;">Physics</span><span class="t" style="top:10.46px;font-size:4.9px;color:#222;left:143.70px;transform:translateX(-50%) scaleX(0.87);transform-origin:50% 50%;">Mesh</span><span class="t" style="top:10.46px;font-size:4.9px;color:#222;left:160.40px;transform:translateX(-50%) scaleX(0.87);transform-origin:50% 50%;">Study</span><span class="t" style="top:10.46px;font-size:4.9px;color:#222;left:178.70px;transform:translateX(-50%) scaleX(0.87);transform-origin:50% 50%;">Results</span><span class="t" style="top:10.46px;font-size:4.9px;color:#222;left:201.00px;transform:translateX(-50%) scaleX(0.87);transform-origin:50% 50%;">Developer</span><div style="left:216.80px;top:9.00px;width:30.00px;height:8.40px;background:#f9fbfe;"></div><span class="t" style="top:10.58px;font-size:4.7px;color:#4a9bdc;left:231.80px;transform:translateX(-50%) scaleX(0.87);transform-origin:50% 50%;">3D Plot Group 1</span><div style="left:898.20px;top:11.30px;width:3.00px;height:3.00px;background:#2f7fc2;border-radius:.5px;"></div><div style="left:0.00px;top:17.30px;width:909.00px;height:30.20px;background:#f9fbfe;"></div><div style="left:0.00px;top:47.50px;width:909.00px;height:2.40px;background:#eceff3;"></div><div style="left:0;top:0;width:10px;height:10px;transform-origin:0 0;transform:matrix(.99282,0,0,1,.472,0);"><div style="left:9.40px;top:20.80px;width:7.60px;height:1.20px;background:#c9c3cc;"></div><div style="left:9.40px;top:22.30px;width:7.60px;height:5.20px;background:#b7359b;border-radius:.4px;"></div><div style="left:10.60px;top:24.50px;width:3.40px;height:0.80px;background:#f3d9ec;transform:rotate(-30deg);"></div><span class="t" style="top:30.78px;font-size:4.7px;color:#222;left:13.20px;transform:translateX(-50%) scaleX(0.87);transform-origin:50% 50%;">Plot</span><div style="left:24.30px;top:20.20px;width:7.40px;height:6.40px;background:#fbfcfe;border:.6px solid #b9bec6;border-top:1.4px solid #b9bec6;box-sizing:border-box;"></div><div style="left:27.90px;top:23.60px;width:5.80px;height:4.40px;background:#b7359b;border-radius:.3px;border-top:1px solid #8d8d96;box-sizing:border-box;"></div><span class="t" style="top:30.78px;font-size:4.7px;color:#222;left:28.70px;transform:translateX(-50%) scaleX(0.87);transform-origin:50% 50%;">Plot</span><span class="t" style="top:35.38px;font-size:4.7px;color:#222;left:27.40px;transform:translateX(-50%) scaleX(0.87);transform-origin:50% 50%;">In</span><div class="tr" style="left:30.61px;top:37.44px;border-left:1.125px solid transparent;border-right:1.125px solid transparent;border-top:1.52px solid #333;"></div><div style="left:39.30px;top:19.50px;width:0.50px;height:26.50px;background:#dfe4ea;"></div><div style="left:43.30px;top:20.30px;width:3.80px;height:3.60px;background:#b7359b;border-radius:.5px;"></div><span class="t" style="top:19.78px;font-size:4.7px;color:#222;left:49.60px;transform:scaleX(0.87);transform-origin:0 50%;">Volume</span><div style="left:43.30px;top:28.00px;width:3.80px;height:3.60px;background:#9aa0a7;border-radius:.5px;"></div><span class="t" style="top:27.48px;font-size:4.7px;color:#222;left:49.60px;transform:scaleX(0.87);transform-origin:0 50%;">Arrow Volume</span><div style="left:43.30px;top:35.70px;width:3.80px;height:3.60px;background:#c8385c;border-radius:.5px;"></div><span class="t" style="top:35.18px;font-size:4.7px;color:#222;left:49.60px;transform:scaleX(0.87);transform-origin:0 50%;">Surface</span><div style="left:79.80px;top:20.30px;width:3.80px;height:3.60px;background:#b7359b;border-radius:.5px;"></div><span class="t" style="top:19.78px;font-size:4.7px;color:#222;left:86.20px;transform:scaleX(0.87);transform-origin:0 50%;">Slice</span><div style="left:79.80px;top:28.00px;width:3.80px;height:3.60px;background:#b7359b;border-radius:.5px;"></div><span class="t" style="top:27.48px;font-size:4.7px;color:#222;left:86.20px;transform:scaleX(0.87);transform-origin:0 50%;">Isosurface</span><div style="left:79.80px;top:35.70px;width:3.80px;height:3.60px;background:#9aa0a7;border-radius:.5px;"></div><span class="t" style="top:35.18px;font-size:4.7px;color:#222;left:86.20px;transform:scaleX(0.87);transform-origin:0 50%;">Arrow Surface</span><div style="left:115.50px;top:20.30px;width:3.80px;height:3.60px;background:#c5cad0;border-radius:.5px;"></div><span class="t" style="top:19.78px;font-size:4.7px;color:#222;left:122.00px;transform:scaleX(0.87);transform-origin:0 50%;">Line</span><div style="left:115.50px;top:28.00px;width:3.80px;height:3.60px;background:#d77ac0;border-radius:.5px;"></div><span class="t" style="top:27.48px;font-size:4.7px;color:#222;left:122.00px;transform:scaleX(0.87);transform-origin:0 50%;">Contour</span><div style="left:115.50px;top:35.70px;width:3.80px;height:3.60px;background:#c5cad0;border-radius:.5px;"></div><span class="t" style="top:35.18px;font-size:4.7px;color:#222;left:122.00px;transform:scaleX(0.87);transform-origin:0 50%;">Streamline</span><div style="left:144.90px;top:20.30px;width:3.80px;height:3.60px;background:#c97a8c;border-radius:.5px;"></div><span class="t" style="top:19.78px;font-size:4.7px;color:#222;left:151.20px;transform:scaleX(0.87);transform-origin:0 50%;">Arrow Line</span><div style="left:144.90px;top:28.00px;width:3.80px;height:3.60px;background:#c8385c;border-radius:.5px;"></div><span class="t" style="top:27.48px;font-size:4.7px;color:#222;left:151.20px;transform:scaleX(0.87);transform-origin:0 50%;">Mesh</span><div style="left:144.90px;top:35.70px;width:3.80px;height:3.60px;background:#dfe3e8;border-radius:.5px;"></div><span class="t" style="top:35.18px;font-size:4.7px;color:#222;left:151.20px;transform:scaleX(0.87);transform-origin:0 50%;">Annotation</span><div style="left:178.40px;top:22.00px;width:6.60px;height:6.60px;background:#b7359b;border-radius:.8px;"></div><div style="left:177.60px;top:20.60px;width:6.60px;height:6.60px;background:#d05ab8;border-radius:.8px;"></div><div style="left:178.60px;top:22.20px;width:5.40px;height:5.20px;background:#b7359b;border-radius:.5px;"></div><span class="t" style="top:30.78px;font-size:4.7px;color:#222;left:181.60px;transform:translateX(-50%) scaleX(0.87);transform-origin:50% 50%;">More</span><span class="t" style="top:35.38px;font-size:4.7px;color:#222;left:180.30px;transform:translateX(-50%) scaleX(0.87);transform-origin:50% 50%;">Plots</span><div class="tr" style="left:186.57px;top:37.44px;border-left:1.125px solid transparent;border-right:1.125px solid transparent;border-top:1.52px solid #333;"></div><div style="left:191.30px;top:19.50px;width:0.50px;height:26.50px;background:#dfe4ea;"></div><div style="left:195.60px;top:20.30px;width:3.80px;height:3.60px;background:#dfe3e8;border-radius:.5px;opacity:.8;"></div><span class="t" style="top:19.78px;font-size:4.7px;color:#a9b0b8;left:201.90px;transform:scaleX(0.87);transform-origin:0 50%;">Color Expression</span><div style="left:195.60px;top:28.00px;width:3.80px;height:3.60px;background:#dfe3e8;border-radius:.5px;opacity:.8;"></div><span class="t" style="top:27.48px;font-size:4.7px;color:#a9b0b8;left:201.90px;transform:scaleX(0.87);transform-origin:0 50%;">Deformation</span><div style="left:195.60px;top:35.70px;width:3.80px;height:3.60px;background:#dfe3e8;border-radius:.5px;opacity:.8;"></div><span class="t" style="top:35.18px;font-size:4.7px;color:#a9b0b8;left:201.90px;transform:scaleX(0.87);transform-origin:0 50%;">Filter</span><div style="left:236.60px;top:20.30px;width:3.80px;height:3.60px;background:#dfe3e8;border-radius:.5px;opacity:.8;"></div><span class="t" style="top:19.78px;font-size:4.7px;color:#a9b0b8;left:242.90px;transform:scaleX(0.87);transform-origin:0 50%;">Material Appearance</span><div style="left:236.60px;top:28.00px;width:3.80px;height:3.60px;background:#dfe3e8;border-radius:.5px;opacity:.8;"></div><span class="t" style="top:27.48px;font-size:4.7px;color:#a9b0b8;left:242.90px;transform:scaleX(0.87);transform-origin:0 50%;">Selection</span><div style="left:236.60px;top:35.70px;width:3.80px;height:3.60px;background:#dfe3e8;border-radius:.5px;opacity:.8;"></div><span class="t" style="top:35.18px;font-size:4.7px;color:#a9b0b8;left:242.90px;transform:scaleX(0.87);transform-origin:0 50%;">Transparency</span><div style="left:291.30px;top:22.00px;width:6.60px;height:6.60px;background:#b7359b;border-radius:.8px;"></div><div style="left:290.50px;top:20.60px;width:6.60px;height:6.60px;background:#d05ab8;border-radius:.8px;"></div><div style="left:291.50px;top:22.20px;width:5.40px;height:5.20px;background:#b7359b;border-radius:.5px;"></div><span class="t" style="top:30.78px;font-size:4.7px;color:#222;left:294.50px;transform:translateX(-50%) scaleX(0.87);transform-origin:50% 50%;">More</span><span class="t" style="top:35.38px;font-size:4.7px;color:#222;left:293.20px;transform:translateX(-50%) scaleX(0.87);transform-origin:50% 50%;">Attributes</span><div class="tr" style="left:304.57px;top:37.44px;border-left:1.125px solid transparent;border-right:1.125px solid transparent;border-top:1.52px solid #333;"></div><div style="left:308.70px;top:19.50px;width:0.50px;height:26.50px;background:#dfe4ea;"></div><div style="left:312.40px;top:18.70px;width:52.20px;height:6.80px;background:#c7e0f6;"></div><div style="left:313.50px;top:20.30px;width:3.80px;height:3.60px;background:#9fc6e6;border-radius:.5px;"></div><span class="t" style="top:19.78px;font-size:4.7px;color:#222;left:319.90px;transform:scaleX(0.87);transform-origin:0 50%;">Evaluate Along Normal</span><div style="left:313.50px;top:28.00px;width:3.80px;height:3.60px;background:#e9b0b8;border-radius:.5px;"></div><span class="t" style="top:27.48px;font-size:4.7px;color:#222;left:319.90px;transform:scaleX(0.87);transform-origin:0 50%;">First Point for Cut Line</span><div style="left:313.50px;top:35.70px;width:3.80px;height:3.60px;background:#e9b0b8;border-radius:.5px;"></div><span class="t" style="top:35.18px;font-size:4.7px;color:#222;left:319.90px;transform:scaleX(0.87);transform-origin:0 50%;">Second Point for Cut Line</span><div style="left:371.30px;top:20.30px;width:3.80px;height:3.60px;background:#8d949c;border-radius:.5px;"></div><span class="t" style="top:19.78px;font-size:4.7px;color:#222;left:376.90px;transform:scaleX(0.87);transform-origin:0 50%;">Cut Line Direction</span><div style="left:371.30px;top:28.00px;width:3.80px;height:3.60px;background:#8d949c;border-radius:.5px;"></div><span class="t" style="top:27.48px;font-size:4.7px;color:#222;left:376.90px;transform:scaleX(0.87);transform-origin:0 50%;">Cut Line Surface Normal</span><div style="left:371.30px;top:35.70px;width:3.80px;height:3.60px;background:#c5cad0;border-radius:.5px;"></div><span class="t" style="top:35.18px;font-size:4.7px;color:#222;left:376.90px;transform:scaleX(0.87);transform-origin:0 50%;">First Point for Cut Plane Normal</span><div style="left:439.80px;top:20.30px;width:3.80px;height:3.60px;background:#c5cad0;border-radius:.5px;"></div><span class="t" style="top:19.78px;font-size:4.7px;color:#222;left:445.50px;transform:scaleX(0.87);transform-origin:0 50%;">Second Point for Cut Plane Normal</span><div style="left:439.80px;top:28.00px;width:3.80px;height:3.60px;background:#8d949c;border-radius:.5px;"></div><span class="t" style="top:27.48px;font-size:4.7px;color:#222;left:445.50px;transform:scaleX(0.87);transform-origin:0 50%;">Cut Plane Normal</span><div style="left:439.80px;top:35.70px;width:3.80px;height:3.60px;background:#b3476c;border-radius:.5px;"></div><span class="t" style="top:35.18px;font-size:4.7px;color:#222;left:445.50px;transform:scaleX(0.87);transform-origin:0 50%;">Cut Plane Normal from Surface</span><div style="left:514.80px;top:19.50px;width:0.50px;height:26.50px;background:#dfe4ea;"></div><div style="left:520.70px;top:20.60px;width:6.40px;height:5.60px;background:#f4f2f6;border:.6px solid #c9c3cc;box-sizing:border-box;"></div><div style="left:522.90px;top:22.80px;width:6.20px;height:5.40px;background:#e9dfe8;border:.6px solid #b9a9b9;box-sizing:border-box;"></div><span class="t" style="top:30.78px;font-size:4.7px;color:#222;left:524.90px;transform:translateX(-50%) scaleX(0.87);transform-origin:50% 50%;">Image</span><div style="left:538.90px;top:21.40px;width:2.60px;height:5.20px;background:#b7359b;border-radius:.3px;"></div><div style="left:542.10px;top:21.40px;width:2.60px;height:5.20px;background:#b7359b;border-radius:.3px;"></div><div style="left:545.30px;top:21.40px;width:2.60px;height:5.20px;background:#b7359b;border-radius:.3px;"></div><div style="left:538.50px;top:20.60px;width:10.00px;height:0.70px;background:#8d8d96;"></div><div style="left:538.50px;top:26.70px;width:10.00px;height:0.70px;background:#8d8d96;"></div><span class="t" style="top:30.78px;font-size:4.7px;color:#222;left:543.50px;transform:translateX(-50%) scaleX(0.87);transform-origin:50% 50%;">Animation</span><div class="tr" style="left:542.38px;top:37.44px;border-left:1.125px solid transparent;border-right:1.125px solid transparent;border-top:1.52px solid #333;"></div><div style="left:556.60px;top:19.50px;width:0.50px;height:26.50px;background:#dfe4ea;"></div><span class="t" style="top:43.08px;font-size:4.7px;color:#8f98a3;left:21.00px;transform:translateX(-50%) scaleX(0.87);transform-origin:50% 50%;">Plot</span><span class="t" style="top:43.08px;font-size:4.7px;color:#8f98a3;left:115.30px;transform:translateX(-50%) scaleX(0.87);transform-origin:50% 50%;">Add Plot</span><span class="t" style="top:43.08px;font-size:4.7px;color:#8f98a3;left:250.50px;transform:translateX(-50%) scaleX(0.87);transform-origin:50% 50%;">Attributes</span><span class="t" style="top:43.08px;font-size:4.7px;color:#8f98a3;left:411.90px;transform:translateX(-50%) scaleX(0.87);transform-origin:50% 50%;">Select</span><span class="t" style="top:43.08px;font-size:4.7px;color:#8f98a3;left:535.30px;transform:translateX(-50%) scaleX(0.87);transform-origin:50% 50%;">Export</span></div><div style="left:4.30px;top:49.80px;width:119.40px;height:454.20px;background:#fcfdff;"></div><span class="t" style="top:52.92px;font-size:8.3px;color:#79b4e2;left:6.00px;transform:scaleX(0.87);transform-origin:0 50%;">Model Builder</span><div class="tr" style="left:115.05px;top:56.38px;border-left:1.25px solid transparent;border-right:1.25px solid transparent;border-top:1.69px solid #333;"></div><div style="left:121.50px;top:55.60px;width:1.30px;height:2.80px;background:#222;"></div><div style="left:6.60px;top:63.80px;width:3.20px;height:3.20px;background:#c9cfd6;border-radius:.4px;"></div><div style="left:16.20px;top:63.80px;width:3.20px;height:3.20px;background:#c9cfd6;border-radius:.4px;"></div><div style="left:23.00px;top:63.80px;width:3.20px;height:3.20px;background:#6f9fc9;border-radius:.4px;"></div><div style="left:30.70px;top:63.80px;width:3.20px;height:3.20px;background:#b9c0c8;border-radius:.4px;"></div><div style="left:38.90px;top:63.80px;width:3.20px;height:3.20px;background:#4f8fc8;border-radius:.4px;"></div><div style="left:47.10px;top:63.80px;width:3.20px;height:3.20px;background:#3f93d3;border-radius:.4px;"></div><div style="left:61.90px;top:63.80px;width:3.20px;height:3.20px;background:#3f93d3;border-radius:.4px;"></div><div style="left:76.70px;top:63.80px;width:3.20px;height:3.20px;background:#aeb5bd;border-radius:.4px;"></div><div style="left:90.90px;top:63.80px;width:3.20px;height:3.20px;background:#3f6f9f;border-radius:.4px;"></div><div class="tr" style="left:54.48px;top:65.04px;border-left:1.125px solid transparent;border-right:1.125px solid transparent;border-top:1.52px solid #333;"></div><div class="tr" style="left:68.88px;top:65.04px;border-left:1.125px solid transparent;border-right:1.125px solid transparent;border-top:1.52px solid #333;"></div><div class="tr" style="left:83.17px;top:65.04px;border-left:1.125px solid transparent;border-right:1.125px solid transparent;border-top:1.52px solid #333;"></div><div class="tr" style="left:97.38px;top:65.04px;border-left:1.125px solid transparent;border-right:1.125px solid transparent;border-top:1.52px solid #333;"></div><div style="left:6.00px;top:72.20px;width:107.10px;height:6.10px;background:#fff;border:.5px solid #dfe3e8;box-sizing:border-box;"></div><span class="t" style="top:72.98px;font-size:4.7px;color:#c3c8ce;left:6.90px;transform:scaleX(0.87);transform-origin:0 50%;">Type filter text</span><div style="left:117.40px;top:73.40px;width:3.40px;height:3.40px;border:.7px solid #8cc4ea;border-radius:50%;box-sizing:border-box;"></div><div style="left:117.70px;top:80.50px;width:5.50px;height:402.50px;background:#f0f1f3;"></div><div style="left:117.70px;top:85.00px;width:5.50px;height:369.00px;background:#d9dbdf;"></div><div style="left:4.3px;top:80.5px;width:113.4px;height:403.5px;overflow:hidden;"><div style="left:-4.3px;top:-80.5px;width:10px;height:10px;"><div style="left:8.50px;top:83.10px;width:1.7px;height:1.7px;border-right:.7px solid #444;border-bottom:.7px solid #444;transform:rotate(45deg);"></div><div style="left:14.00px;top:82.80px;width:4.00px;height:4.00px;background:#2f7fc2;border-radius:50%;"></div><span class="t" style="top:82.48px;font-size:4.7px;left:21.10px;transform:scaleX(0.87);transform-origin:0 50%;">Bm.mph <i>(root)</i></span><div style="left:15.35px;top:90.13px;width:1.7px;height:1.7px;border-right:.7px solid #444;border-bottom:.7px solid #444;transform:rotate(45deg);"></div><div style="left:20.45px;top:89.43px;width:4.80px;height:4.80px;border:.8px solid #8fc1e6;border-radius:50%;box-sizing:border-box;"></div><span class="t" style="top:89.51px;font-size:4.7px;left:27.95px;transform:scaleX(0.87);transform-origin:0 50%;">Global Definitions</span><div style="left:27.90px;top:97.26px;width:3.60px;height:3.00px;background:#8cc4ea;border-radius:.6px;opacity:.9;"></div><span class="t" style="top:96.54px;font-size:4.7px;left:34.80px;transform:scaleX(0.87);transform-origin:0 50%;">Parameters Geo <i>(default)</i></span><div style="left:27.90px;top:104.29px;width:3.60px;height:3.00px;background:#8cc4ea;border-radius:.6px;opacity:.9;"></div><span class="t" style="top:103.57px;font-size:4.7px;left:34.80px;transform:scaleX(0.87);transform-origin:0 50%;">Parameters Packed-bed <i>(par2)</i></span><div style="left:27.90px;top:111.32px;width:3.60px;height:3.00px;background:#8cc4ea;border-radius:.6px;opacity:.9;"></div><span class="t" style="top:110.60px;font-size:4.7px;left:34.80px;transform:scaleX(0.87);transform-origin:0 50%;">Parameters Material <i>(par3)</i></span><div style="left:27.90px;top:118.35px;width:3.60px;height:3.00px;background:#8cc4ea;border-radius:.6px;opacity:.9;"></div><span class="t" style="top:117.63px;font-size:4.7px;left:34.80px;transform:scaleX(0.87);transform-origin:0 50%;">Parameters Production <i>(par4)</i></span><div style="left:27.90px;top:125.38px;width:3.60px;height:3.00px;background:#b8bec6;border-radius:.6px;opacity:.9;"></div><span class="t" style="top:124.66px;font-size:4.7px;left:34.80px;transform:scaleX(0.87);transform-origin:0 50%;">Step ts (stepts) <i>(step2)</i></span><div style="left:27.90px;top:132.41px;width:3.60px;height:3.00px;background:#b8bec6;border-radius:.6px;opacity:.9;"></div><span class="t" style="top:131.69px;font-size:4.7px;left:34.80px;transform:scaleX(0.87);transform-origin:0 50%;">Step te (stepte) <i>(step3)</i></span><div style="left:27.90px;top:139.44px;width:3.60px;height:3.00px;background:#b8bec6;border-radius:.6px;opacity:.9;"></div><span class="t" style="top:138.72px;font-size:4.7px;left:34.80px;transform:scaleX(0.87);transform-origin:0 50%;">StepRh (stepRh) <i>(step4)</i></span><div style="left:27.90px;top:146.47px;width:3.60px;height:3.00px;background:#b8bec6;border-radius:.6px;opacity:.9;"></div><span class="t" style="top:145.75px;font-size:4.7px;left:34.80px;transform:scaleX(0.87);transform-origin:0 50%;">Step TH (stepTH) <i>(step1)</i></span><div style="left:27.90px;top:153.50px;width:3.60px;height:3.00px;background:#3f93d3;border-radius:.6px;opacity:.9;"></div><span class="t" style="top:152.78px;font-size:4.7px;left:34.80px;transform:scaleX(0.87);transform-origin:0 50%;">Analytic TH (anTH) <i>(an1)</i></span><div style="left:27.90px;top:160.53px;width:3.60px;height:3.00px;background:#3f93d3;border-radius:.6px;opacity:.9;"></div><span class="t" style="top:159.81px;font-size:4.7px;left:34.80px;transform:scaleX(0.87);transform-origin:0 50%;">Analytic Uth (anUth) <i>(an2)</i></span><div style="left:27.90px;top:167.56px;width:3.60px;height:3.00px;background:#3f93d3;border-radius:.6px;opacity:.9;"></div><span class="t" style="top:166.84px;font-size:4.7px;left:34.80px;transform:scaleX(0.87);transform-origin:0 50%;">Analytic muth (anmuth) <i>(an3)</i></span><div style="left:27.90px;top:174.59px;width:3.60px;height:3.00px;background:#3f93d3;border-radius:.6px;opacity:.9;"></div><span class="t" style="top:173.87px;font-size:4.7px;left:34.80px;transform:scaleX(0.87);transform-origin:0 50%;">Analytic rhoth (anrhoth) <i>(an4)</i></span><div style="left:27.90px;top:181.62px;width:3.60px;height:3.00px;background:#3f93d3;border-radius:.6px;opacity:.9;"></div><span class="t" style="top:180.90px;font-size:4.7px;left:34.80px;transform:scaleX(0.87);transform-origin:0 50%;">Analytic Reth (anReth) <i>(an5)</i></span><div style="left:27.90px;top:188.65px;width:3.60px;height:3.00px;background:#3f93d3;border-radius:.6px;opacity:.9;"></div><span class="t" style="top:187.93px;font-size:4.7px;left:34.80px;transform:scaleX(0.87);transform-origin:0 50%;">Analytic Rh (anRh) <i>(an6)</i></span><div style="left:27.90px;top:195.68px;width:3.60px;height:3.00px;background:#3f93d3;border-radius:.6px;opacity:.9;"></div><span class="t" style="top:194.96px;font-size:4.7px;left:34.80px;transform:scaleX(0.87);transform-origin:0 50%;">Analytic ATH (anATH) <i>(an7)</i></span><div style="left:27.90px;top:202.71px;width:3.60px;height:3.00px;background:#3f93d3;border-radius:.6px;opacity:.9;"></div><span class="t" style="top:201.99px;font-size:4.7px;left:34.80px;transform:scaleX(0.87);transform-origin:0 50%;">Analytic dpth (andpth) <i>(an8)</i></span><div style="left:27.70px;top:209.34px;width:4.00px;height:4.00px;background:#2f7fc2;border-radius:50%;"></div><span class="t" style="top:209.02px;font-size:4.7px;left:34.80px;transform:scaleX(0.87);transform-origin:0 50%;">Default Model Inputs <i>(cminpt)</i></span><div style="left:27.70px;top:216.37px;width:4.00px;height:4.00px;background:#f2b04a;border-radius:50%;"></div><span class="t" style="top:216.05px;font-size:4.7px;left:34.80px;transform:scaleX(0.87);transform-origin:0 50%;">Materials</span><div style="left:15.15px;top:224.50px;width:1.5px;height:1.5px;border-right:.5px solid #a4acb6;border-top:.5px solid #a4acb6;transform:rotate(45deg);"></div><div style="left:20.75px;top:223.40px;width:4.20px;height:4.00px;background:#2f7fc2;border-radius:.8px;"></div><span class="t" style="top:223.08px;font-size:4.7px;left:27.95px;transform:scaleX(0.87);transform-origin:0 50%;">Component 1 (comp1) <i>{comp1}</i></span><div style="left:15.15px;top:231.53px;width:1.5px;height:1.5px;border-right:.5px solid #a4acb6;border-top:.5px solid #a4acb6;transform:rotate(45deg);"></div><div style="left:20.75px;top:230.43px;width:4.20px;height:4.00px;background:#2f7fc2;border-radius:.8px;"></div><span class="t" style="top:230.11px;font-size:4.7px;left:27.95px;transform:scaleX(0.87);transform-origin:0 50%;">Tris (comp2) <i>{comp2}</i></span><div style="left:15.15px;top:238.56px;width:1.5px;height:1.5px;border-right:.5px solid #a4acb6;border-top:.5px solid #a4acb6;transform:rotate(45deg);"></div><div style="left:21.05px;top:237.86px;width:3.60px;height:3.00px;background:#9fd6e6;border-radius:.6px;opacity:.9;"></div><span class="t" style="top:237.14px;font-size:4.7px;left:27.95px;transform:scaleX(0.87);transform-origin:0 50%;">Study 1 <i>(std1)</i></span><div style="left:15.35px;top:244.79px;width:1.7px;height:1.7px;border-right:.7px solid #444;border-bottom:.7px solid #444;transform:rotate(45deg);"></div><div style="left:20.75px;top:244.49px;width:4.20px;height:4.00px;background:#b03a86;border-radius:.8px;"></div><span class="t" style="top:244.17px;font-size:4.7px;left:27.95px;transform:scaleX(0.87);transform-origin:0 50%;">Results</span><div style="left:22.00px;top:252.62px;width:1.5px;height:1.5px;border-right:.5px solid #a4acb6;border-top:.5px solid #a4acb6;transform:rotate(45deg);"></div><div style="left:27.90px;top:251.92px;width:3.60px;height:3.00px;background:#cf5a78;border-radius:.6px;opacity:.9;"></div><span class="t" style="top:251.20px;font-size:4.7px;left:34.80px;transform:scaleX(0.87);transform-origin:0 50%;">Datasets</span><div style="left:22.00px;top:259.65px;width:1.5px;height:1.5px;border-right:.5px solid #a4acb6;border-top:.5px solid #a4acb6;transform:rotate(45deg);"></div><div style="left:27.90px;top:258.95px;width:3.60px;height:3.00px;background:#9cc8e8;border-radius:.6px;opacity:.9;"></div><span class="t" style="top:258.23px;font-size:4.7px;left:34.80px;transform:scaleX(0.87);transform-origin:0 50%;">Views</span><div style="left:22.00px;top:266.68px;width:1.5px;height:1.5px;border-right:.5px solid #a4acb6;border-top:.5px solid #a4acb6;transform:rotate(45deg);"></div><div style="left:27.90px;top:265.98px;width:3.60px;height:3.00px;background:#e3a9c3;border-radius:.6px;opacity:.9;"></div><span class="t" style="top:265.26px;font-size:4.7px;left:34.80px;transform:scaleX(0.87);transform-origin:0 50%;">Derived Values</span><div style="left:22.00px;top:273.71px;width:1.5px;height:1.5px;border-right:.5px solid #a4acb6;border-top:.5px solid #a4acb6;transform:rotate(45deg);"></div><div style="left:27.60px;top:272.61px;width:4.20px;height:4.00px;background:#cc5a9a;border-radius:.8px;"></div><span class="t" style="top:272.29px;font-size:4.7px;left:34.80px;transform:scaleX(0.87);transform-origin:0 50%;">Tables</span><div style="left:27.60px;top:279.64px;width:4.20px;height:4.00px;background:#a9978a;border-radius:.8px;"></div><span class="t" style="top:279.32px;font-size:4.7px;left:34.80px;transform:scaleX(0.87);transform-origin:0 50%;">Color Tables</span><div style="left:22.20px;top:286.97px;width:1.7px;height:1.7px;border-right:.7px solid #444;border-bottom:.7px solid #444;transform:rotate(45deg);"></div><div style="left:27.60px;top:286.67px;width:4.20px;height:4.00px;background:#a3309a;border-radius:.8px;"></div><span class="t" style="top:286.35px;font-size:4.7px;left:34.80px;transform:scaleX(0.87);transform-origin:0 50%;">3D Plot Group 1 <i>(pg1)</i></span><div style="left:28.85px;top:294.80px;width:1.5px;height:1.5px;border-right:.5px solid #a4acb6;border-top:.5px solid #a4acb6;transform:rotate(45deg);"></div><div style="left:34.25px;top:293.50px;width:4.60px;height:4.40px;background:#fff;border:.5px solid #c9a0ad;border-top:1.6px solid #c8385c;box-sizing:border-box;"></div><span class="t" style="top:293.38px;font-size:4.7px;left:41.65px;transform:scaleX(0.87);transform-origin:0 50%;">Surface 1 <i>(surf1)</i></span><div style="left:28.85px;top:301.83px;width:1.5px;height:1.5px;border-right:.5px solid #a4acb6;border-top:.5px solid #a4acb6;transform:rotate(45deg);"></div><div style="left:34.25px;top:300.53px;width:4.60px;height:4.40px;background:#fff;border:.5px solid #c9a0ad;border-top:1.6px solid #c8385c;box-sizing:border-box;"></div><span class="t" style="top:300.41px;font-size:4.7px;left:41.65px;transform:scaleX(0.87);transform-origin:0 50%;">Surface 2 <i>(surf2)</i></span><div style="left:28.85px;top:308.86px;width:1.5px;height:1.5px;border-right:.5px solid #a4acb6;border-top:.5px solid #a4acb6;transform:rotate(45deg);"></div><div style="left:34.25px;top:307.56px;width:4.60px;height:4.40px;background:#fff;border:.5px solid #c9a0ad;border-top:1.6px solid #c8385c;box-sizing:border-box;"></div><span class="t" style="top:307.44px;font-size:4.7px;left:41.65px;transform:scaleX(0.87);transform-origin:0 50%;">Surface 3 <i>(surf3)</i></span><div style="left:28.85px;top:315.89px;width:1.5px;height:1.5px;border-right:.5px solid #a4acb6;border-top:.5px solid #a4acb6;transform:rotate(45deg);"></div><div style="left:34.25px;top:314.59px;width:4.60px;height:4.40px;background:#fff;border:.5px solid #c9a0ad;border-top:1.6px solid #c8385c;box-sizing:border-box;"></div><span class="t" style="top:314.47px;font-size:4.7px;left:41.65px;transform:scaleX(0.87);transform-origin:0 50%;">Surface 4 <i>(surf4)</i></span><div style="left:34.25px;top:321.62px;width:4.60px;height:4.40px;border:.7px solid #c5cad0;box-sizing:border-box;"></div><span class="t" style="top:321.50px;font-size:4.7px;left:41.65px;transform:scaleX(0.87);transform-origin:0 50%;">Line 1 <i>(line1)</i></span><div style="left:28.85px;top:329.95px;width:1.5px;height:1.5px;border-right:.5px solid #a4acb6;border-top:.5px solid #a4acb6;transform:rotate(45deg);"></div><div style="left:34.25px;top:328.65px;width:4.60px;height:4.40px;border:.7px solid #c5cad0;box-sizing:border-box;"></div><span class="t" style="top:328.53px;font-size:4.7px;left:41.65px;transform:scaleX(0.87);transform-origin:0 50%;">Line 2 <i>(line2)</i></span><div style="left:29.05px;top:336.18px;width:1.7px;height:1.7px;border-right:.7px solid #444;border-bottom:.7px solid #444;transform:rotate(45deg);"></div><div style="left:34.25px;top:335.68px;width:4.60px;height:4.40px;border:.7px solid #c5cad0;box-sizing:border-box;"></div><span class="t" style="top:335.56px;font-size:4.7px;left:41.65px;transform:scaleX(0.87);transform-origin:0 50%;">Line 3 <i>(line3)</i></span><div style="left:41.60px;top:343.31px;width:3.60px;height:3.00px;background:#b3476c;border-radius:.6px;opacity:.9;"></div><span class="t" style="top:342.59px;font-size:4.7px;left:48.50px;transform:scaleX(0.87);transform-origin:0 50%;">Selection 1 <i>(sel1)</i></span><div style="left:4.30px;top:348.62px;width:113.40px;height:6.73px;background:#dcdcdc;"></div><div style="left:41.60px;top:350.34px;width:3.60px;height:3.00px;background:#c9ced4;border-radius:.6px;opacity:.9;"></div><span class="t" style="top:349.62px;font-size:4.7px;left:48.50px;transform:scaleX(0.87);transform-origin:0 50%;">Deformation 1 <i>(def1)</i></span><div style="left:28.85px;top:358.07px;width:1.5px;height:1.5px;border-right:.5px solid #a4acb6;border-top:.5px solid #a4acb6;transform:rotate(45deg);"></div><div style="left:34.45px;top:356.97px;width:4.20px;height:4.00px;background:#9aa0a7;border-radius:.8px;"></div><span class="t" style="top:356.65px;font-size:4.7px;left:41.65px;transform:scaleX(0.87);transform-origin:0 50%;">Arrow Surface 1 <i>(arws1)</i></span><div style="left:22.00px;top:365.10px;width:1.5px;height:1.5px;border-right:.5px solid #a4acb6;border-top:.5px solid #a4acb6;transform:rotate(45deg);"></div><div style="left:27.10px;top:365.50px;width:5.20px;height:1.00px;background:#b9bfc6;border-radius:1px;"></div><span class="t" style="top:363.68px;font-size:4.7px;left:34.80px;transform:scaleX(0.87);transform-origin:0 50%;">Probe Plot Group 2 <i>(pg2)</i></span><div style="left:22.00px;top:372.13px;width:1.5px;height:1.5px;border-right:.5px solid #a4acb6;border-top:.5px solid #a4acb6;transform:rotate(45deg);"></div><div style="left:27.10px;top:372.53px;width:5.20px;height:1.00px;background:#b9bfc6;border-radius:1px;"></div><span class="t" style="top:370.71px;font-size:4.7px;left:34.80px;transform:scaleX(0.87);transform-origin:0 50%;">Probe Plot Group 3 <i>(pg3)</i></span><div style="left:22.00px;top:379.16px;width:1.5px;height:1.5px;border-right:.5px solid #a4acb6;border-top:.5px solid #a4acb6;transform:rotate(45deg);"></div><div style="left:27.10px;top:379.56px;width:5.20px;height:1.00px;background:#b9bfc6;border-radius:1px;"></div><span class="t" style="top:377.74px;font-size:4.7px;left:34.80px;transform:scaleX(0.87);transform-origin:0 50%;">Probe Plot Group 4 <i>(pg4)</i></span><div style="left:22.00px;top:386.19px;width:1.5px;height:1.5px;border-right:.5px solid #a4acb6;border-top:.5px solid #a4acb6;transform:rotate(45deg);"></div><div style="left:27.10px;top:386.59px;width:5.20px;height:1.00px;background:#b9bfc6;border-radius:1px;"></div><span class="t" style="top:384.77px;font-size:4.7px;left:34.80px;transform:scaleX(0.87);transform-origin:0 50%;">Probe Plot Group 5 <i>(pg5)</i></span><div style="left:22.00px;top:393.22px;width:1.5px;height:1.5px;border-right:.5px solid #a4acb6;border-top:.5px solid #a4acb6;transform:rotate(45deg);"></div><div style="left:27.10px;top:393.62px;width:5.20px;height:1.00px;background:#b9bfc6;border-radius:1px;"></div><span class="t" style="top:391.80px;font-size:4.7px;left:34.80px;transform:scaleX(0.87);transform-origin:0 50%;">Probe Plot Group 6 <i>(pg6)</i></span><div style="left:22.00px;top:400.25px;width:1.5px;height:1.5px;border-right:.5px solid #a4acb6;border-top:.5px solid #a4acb6;transform:rotate(45deg);"></div><div style="left:27.10px;top:400.65px;width:5.20px;height:1.00px;background:#b9bfc6;border-radius:1px;"></div><span class="t" style="top:398.83px;font-size:4.7px;left:34.80px;transform:scaleX(0.87);transform-origin:0 50%;">Probe Plot Group 7 <i>(pg7)</i></span><div style="left:22.00px;top:407.28px;width:1.5px;height:1.5px;border-right:.5px solid #a4acb6;border-top:.5px solid #a4acb6;transform:rotate(45deg);"></div><div style="left:27.10px;top:407.68px;width:5.20px;height:1.00px;background:#b9bfc6;border-radius:1px;"></div><span class="t" style="top:405.86px;font-size:4.7px;left:34.80px;transform:scaleX(0.87);transform-origin:0 50%;">Probe Plot Group 8 <i>(pg8)</i></span><div style="left:22.00px;top:414.31px;width:1.5px;height:1.5px;border-right:.5px solid #a4acb6;border-top:.5px solid #a4acb6;transform:rotate(45deg);"></div><div style="left:27.10px;top:414.71px;width:5.20px;height:1.00px;background:#b9bfc6;border-radius:1px;"></div><span class="t" style="top:412.89px;font-size:4.7px;left:34.80px;transform:scaleX(0.87);transform-origin:0 50%;">Probe Plot Group 9 <i>(pg9)</i></span><div style="left:22.00px;top:421.34px;width:1.5px;height:1.5px;border-right:.5px solid #a4acb6;border-top:.5px solid #a4acb6;transform:rotate(45deg);"></div><div style="left:27.10px;top:421.74px;width:5.20px;height:1.00px;background:#b9bfc6;border-radius:1px;"></div><span class="t" style="top:419.92px;font-size:4.7px;left:34.80px;transform:scaleX(0.87);transform-origin:0 50%;">Probe Plot Group 10 <i>(pg10)</i></span><div style="left:22.00px;top:428.37px;width:1.5px;height:1.5px;border-right:.5px solid #a4acb6;border-top:.5px solid #a4acb6;transform:rotate(45deg);"></div><div style="left:27.10px;top:428.77px;width:5.20px;height:1.00px;background:#b9bfc6;border-radius:1px;"></div><span class="t" style="top:426.95px;font-size:4.7px;left:34.80px;transform:scaleX(0.87);transform-origin:0 50%;">Probe Plot Group 11 <i>(pg11)</i></span><div style="left:22.00px;top:435.40px;width:1.5px;height:1.5px;border-right:.5px solid #a4acb6;border-top:.5px solid #a4acb6;transform:rotate(45deg);"></div><div style="left:27.10px;top:435.80px;width:5.20px;height:1.00px;background:#b9bfc6;border-radius:1px;"></div><span class="t" style="top:433.98px;font-size:4.7px;left:34.80px;transform:scaleX(0.87);transform-origin:0 50%;">Probe Plot Group 12 <i>(pg12)</i></span><div style="left:22.00px;top:442.43px;width:1.5px;height:1.5px;border-right:.5px solid #a4acb6;border-top:.5px solid #a4acb6;transform:rotate(45deg);"></div><div style="left:27.10px;top:442.83px;width:5.20px;height:1.00px;background:#b9bfc6;border-radius:1px;"></div><span class="t" style="top:441.01px;font-size:4.7px;left:34.80px;transform:scaleX(0.87);transform-origin:0 50%;">Probe Plot Group 13 <i>(pg13)</i></span><div style="left:22.00px;top:449.46px;width:1.5px;height:1.5px;border-right:.5px solid #a4acb6;border-top:.5px solid #a4acb6;transform:rotate(45deg);"></div><div style="left:27.10px;top:449.86px;width:5.20px;height:1.00px;background:#b9bfc6;border-radius:1px;"></div><span class="t" style="top:448.04px;font-size:4.7px;left:34.80px;transform:scaleX(0.87);transform-origin:0 50%;">Probe Plot Group 14 <i>(pg14)</i></span><div style="left:22.00px;top:456.49px;width:1.5px;height:1.5px;border-right:.5px solid #a4acb6;border-top:.5px solid #a4acb6;transform:rotate(45deg);"></div><div style="left:27.10px;top:456.89px;width:5.20px;height:1.00px;background:#b9bfc6;border-radius:1px;"></div><span class="t" style="top:455.07px;font-size:4.7px;left:34.80px;transform:scaleX(0.87);transform-origin:0 50%;">Probe Plot Group 15 <i>(pg15)</i></span><div style="left:22.00px;top:463.52px;width:1.5px;height:1.5px;border-right:.5px solid #a4acb6;border-top:.5px solid #a4acb6;transform:rotate(45deg);"></div><div style="left:27.10px;top:463.92px;width:5.20px;height:1.00px;background:#b9bfc6;border-radius:1px;"></div><span class="t" style="top:462.10px;font-size:4.7px;left:34.80px;transform:scaleX(0.87);transform-origin:0 50%;">Probe Plot Group 16 <i>(pg16)</i></span><div style="left:22.00px;top:470.55px;width:1.5px;height:1.5px;border-right:.5px solid #a4acb6;border-top:.5px solid #a4acb6;transform:rotate(45deg);"></div><div style="left:27.10px;top:470.95px;width:5.20px;height:1.00px;background:#b9bfc6;border-radius:1px;"></div><span class="t" style="top:469.13px;font-size:4.7px;left:34.80px;transform:scaleX(0.87);transform-origin:0 50%;">Probe Plot Group 17 <i>(pg17)</i></span><div style="left:22.00px;top:477.58px;width:1.5px;height:1.5px;border-right:.5px solid #a4acb6;border-top:.5px solid #a4acb6;transform:rotate(45deg);"></div><div style="left:27.10px;top:477.98px;width:5.20px;height:1.00px;background:#b9bfc6;border-radius:1px;"></div><span class="t" style="top:476.16px;font-size:4.7px;left:34.80px;transform:scaleX(0.87);transform-origin:0 50%;">Probe Plot Group 18 <i>(pg18)</i></span></div></div><div style="left:128.90px;top:49.80px;width:137.70px;height:454.20px;background:#fcfdff;"></div><span class="t" style="top:52.92px;font-size:8.3px;color:#79b4e2;left:131.50px;transform:scaleX(0.87);transform-origin:0 50%;">Settings</span><div class="tr" style="left:255.95px;top:56.38px;border-left:1.25px solid transparent;border-right:1.25px solid transparent;border-top:1.69px solid #333;"></div><div style="left:262.40px;top:55.60px;width:1.30px;height:2.80px;background:#222;"></div><span class="t" style="top:63.94px;font-size:5.6px;color:#9cc8ea;left:131.50px;transform:scaleX(0.87);transform-origin:0 50%;">Deformation</span><div style="left:132.20px;top:72.20px;width:4.20px;height:3.40px;background:#b7359b;border-radius:.5px;"></div><span class="t" style="top:71.68px;font-size:4.7px;color:#222;left:138.70px;transform:scaleX(0.87);transform-origin:0 50%;">Plot</span><div style="left:0;top:0;width:10px;height:10px;transform-origin:0 0;transform:matrix(0.99282,0,0,0.99282,0.472,0.205);"><span class="t" style="top:83.78px;font-size:4.7px;color:#222;left:131.60px;transform:scaleX(0.87);transform-origin:0 50%;">Label:</span><div style="left:145.40px;top:82.40px;width:110.30px;height:7.40px;background:#fff;overflow:hidden;border:.5px solid #d5dae0;box-sizing:border-box;"><span class="t" style="top:0.48px;font-size:4.7px;color:#222;left:1.10px;transform:scaleX(0.87);transform-origin:0 50%;">Deformation 1</span></div><div style="left:258.60px;top:83.10px;width:5.60px;height:6.00px;background:#f3f5f8;border:.5px solid #d5dae0;box-sizing:border-box;"></div><div style="left:260.10px;top:84.80px;width:2.60px;height:2.60px;background:#a9d3b4;"></div><div style="left:129.90px;top:93.60px;width:137.20px;height:8.60px;background:#dfe8f4;"></div><div class="tr" style="left:131.46px;top:97.38px;border-left:1.4375px solid transparent;border-right:1.4375px solid transparent;border-top:1.94px solid #333;"></div><span class="t" style="top:95.32px;font-size:5.3px;color:#222;left:139.70px;transform:scaleX(0.87);transform-origin:0 50%;">Expression</span><div style="left:241.10px;top:97.70px;width:2.40px;height:0.60px;background:#9fc6e6;"></div><div class="tr" style="left:246.98px;top:97.64px;border-left:1.125px solid transparent;border-right:1.125px solid transparent;border-top:1.52px solid #333;"></div><div style="left:253.50px;top:97.00px;width:4.00px;height:2.00px;background:#3f93d3;border-radius:.4px;"></div><div class="tr" style="left:260.38px;top:97.64px;border-left:1.125px solid transparent;border-right:1.125px solid transparent;border-top:1.52px solid #333;"></div><span class="t" style="top:106.68px;font-size:4.7px;color:#222;left:131.60px;transform:scaleX(0.87);transform-origin:0 50%;">x-component:</span><div style="left:131.60px;top:113.70px;width:126.00px;height:7.20px;background:#fff;overflow:hidden;border:.5px solid #d5dae0;box-sizing:border-box;"><span class="t" style="top:0.38px;font-size:4.7px;color:#222;left:1.10px;transform:scaleX(0.87);transform-origin:0 50%;">0</span></div><span class="t" style="top:115.28px;font-size:4.7px;color:#222;left:261.80px;transform:scaleX(0.87);transform-origin:0 50%;">1</span><span class="t" style="top:124.13px;font-size:4.7px;color:#222;left:131.60px;transform:scaleX(0.87);transform-origin:0 50%;">y-component:</span><div style="left:131.60px;top:131.15px;width:126.00px;height:7.20px;background:#fff;overflow:hidden;border:.5px solid #d5dae0;box-sizing:border-box;"><span class="t" style="top:0.38px;font-size:4.7px;color:#222;left:1.10px;transform:scaleX(0.87);transform-origin:0 50%;">0</span></div><span class="t" style="top:132.73px;font-size:4.7px;color:#222;left:261.80px;transform:scaleX(0.87);transform-origin:0 50%;">1</span><span class="t" style="top:141.58px;font-size:4.7px;color:#222;left:131.60px;transform:scaleX(0.87);transform-origin:0 50%;">z-component:</span><div style="left:131.60px;top:148.60px;width:126.00px;height:7.20px;background:#fff;overflow:hidden;border:.5px solid #d5dae0;box-sizing:border-box;"><span class="t" style="top:0.38px;font-size:4.7px;color:#222;left:1.10px;transform:scaleX(0.87);transform-origin:0 50%;">pos</span></div><span class="t" style="top:150.18px;font-size:4.7px;color:#222;left:261.80px;transform:scaleX(0.87);transform-origin:0 50%;">m</span><span class="t" style="top:159.68px;font-size:4.7px;color:#222;left:131.60px;transform:scaleX(0.87);transform-origin:0 50%;">Description:</span><div style="left:158.10px;top:159.90px;width:4.20px;height:4.20px;background:#fff;border:.45px solid #777;box-sizing:border-box;"></div><div style="left:167.70px;top:158.40px;width:96.60px;height:7.20px;background:#fff;overflow:hidden;border:.5px solid #e6e9ed;box-sizing:border-box;"></div><div style="left:129.90px;top:169.50px;width:137.20px;height:8.60px;background:#dfe8f4;"></div><div style="left:131.30px;top:173.00px;width:1.5px;height:1.5px;border-right:.5px solid #b9c0c8;border-top:.5px solid #b9c0c8;transform:rotate(45deg);"></div><span class="t" style="top:171.22px;font-size:5.3px;color:#222;left:139.70px;transform:scaleX(0.87);transform-origin:0 50%;">Title</span><div style="left:129.90px;top:179.30px;width:137.20px;height:8.60px;background:#dfe8f4;"></div><div class="tr" style="left:131.46px;top:183.08px;border-left:1.4375px solid transparent;border-right:1.4375px solid transparent;border-top:1.94px solid #333;"></div><span class="t" style="top:181.02px;font-size:5.3px;color:#222;left:139.70px;transform:scaleX(0.87);transform-origin:0 50%;">Scale</span><span class="t" style="top:193.18px;font-size:4.7px;color:#222;left:131.60px;transform:scaleX(0.87);transform-origin:0 50%;">Scale factor:</span><div style="left:158.40px;top:193.40px;width:4.20px;height:4.20px;background:#fff;border:.45px solid #777;box-sizing:border-box;"></div><div style="left:159.40px;top:193.60px;width:1.3px;height:2.6px;border-right:.8px solid #222;border-bottom:.8px solid #222;transform:rotate(40deg);"></div><div style="left:167.70px;top:191.90px;width:96.60px;height:7.20px;background:#fff;overflow:hidden;border:.5px solid #d5dae0;box-sizing:border-box;"><span class="t" style="top:0.38px;font-size:4.7px;color:#222;left:1.10px;transform:scaleX(0.87);transform-origin:0 50%;">1</span></div><div style="left:129.90px;top:202.90px;width:137.20px;height:8.60px;background:#dfe8f4;"></div><div style="left:131.30px;top:206.40px;width:1.5px;height:1.5px;border-right:.5px solid #b9c0c8;border-top:.5px solid #b9c0c8;transform:rotate(45deg);"></div><span class="t" style="top:204.62px;font-size:5.3px;color:#222;left:139.70px;transform:scaleX(0.87);transform-origin:0 50%;">Advanced</span></div><div style="left:269.10px;top:49.80px;width:635.40px;height:337.80px;background:linear-gradient(#fcfdff 0%,#f6f9fe 35%,#e3ecf9 100%);"></div><span class="t" style="top:52.92px;font-size:8.3px;color:#79b4e2;left:272.10px;transform:scaleX(0.87);transform-origin:0 50%;">Graphics</span><div class="tr" style="left:895.25px;top:56.38px;border-left:1.25px solid transparent;border-right:1.25px solid transparent;border-top:1.69px solid #333;"></div><div style="left:900.70px;top:55.60px;width:1.30px;height:2.80px;background:#222;"></div><div style="left:895.90px;top:73.20px;width:4.20px;height:3.20px;background:#3f6f9f;border-radius:.6px;"></div><div style="left:271.70px;top:63.80px;width:3.20px;height:3.20px;background:#8fbde6;border-radius:.5px;"></div><div style="left:279.80px;top:63.80px;width:3.20px;height:3.20px;background:#8fbde6;border-radius:.5px;"></div><div style="left:287.60px;top:63.80px;width:3.20px;height:3.20px;background:#9cc3e6;border-radius:.5px;"></div><div style="left:302.10px;top:63.80px;width:3.20px;height:3.20px;background:#c5cad0;border-radius:.5px;"></div><div style="left:312.20px;top:63.80px;width:3.20px;height:3.20px;background:#b9c0c8;border-radius:.5px;"></div><div style="left:327.70px;top:63.80px;width:3.20px;height:3.20px;background:#c9cfd6;border-radius:.5px;"></div><div style="left:335.70px;top:63.80px;width:3.20px;height:3.20px;background:#c9cfd6;border-radius:.5px;"></div><div style="left:343.20px;top:63.80px;width:3.20px;height:3.20px;background:#c9cfd6;border-radius:.5px;"></div><div style="left:350.00px;top:61.80px;width:6.80px;height:7.20px;background:#7fbdee;border-radius:.6px;"></div><div style="left:351.90px;top:63.50px;width:3.00px;height:3.80px;background:#d9ecfb;"></div><div style="left:362.40px;top:63.80px;width:3.20px;height:3.20px;background:#b9c0c8;border-radius:.5px;"></div><div style="left:379.10px;top:63.80px;width:3.20px;height:3.20px;background:#b9c0c8;border-radius:.5px;"></div><div style="left:396.00px;top:63.80px;width:3.20px;height:3.20px;background:#3f7fc8;border-radius:.5px;"></div><div style="left:410.60px;top:63.80px;width:3.20px;height:3.20px;background:#b9c0c8;border-radius:.5px;"></div><div style="left:423.70px;top:61.80px;width:6.80px;height:7.20px;background:#7fbdee;border-radius:.6px;"></div><div style="left:425.60px;top:63.50px;width:3.00px;height:3.80px;background:#d9ecfb;"></div><div style="left:433.60px;top:63.80px;width:3.20px;height:3.20px;background:#9cc3e6;border-radius:.5px;"></div><div style="left:441.50px;top:63.80px;width:3.20px;height:3.20px;background:#d5c9b9;border-radius:.5px;"></div><div style="left:449.50px;top:63.80px;width:3.20px;height:3.20px;background:#3f93d3;border-radius:.5px;"></div><div style="left:464.00px;top:63.80px;width:3.20px;height:3.20px;background:#3f6f9f;border-radius:.5px;"></div><div style="left:472.10px;top:63.80px;width:3.20px;height:3.20px;background:#9cc3e6;border-radius:.5px;"></div><div class="tr" style="left:294.98px;top:65.14px;border-left:1.125px solid transparent;border-right:1.125px solid transparent;border-top:1.52px solid #333;"></div><div class="tr" style="left:320.18px;top:65.14px;border-left:1.125px solid transparent;border-right:1.125px solid transparent;border-top:1.52px solid #333;"></div><div class="tr" style="left:369.38px;top:65.14px;border-left:1.125px solid transparent;border-right:1.125px solid transparent;border-top:1.52px solid #333;"></div><div class="tr" style="left:386.38px;top:65.14px;border-left:1.125px solid transparent;border-right:1.125px solid transparent;border-top:1.52px solid #333;"></div><div class="tr" style="left:403.57px;top:65.14px;border-left:1.125px solid transparent;border-right:1.125px solid transparent;border-top:1.52px solid #333;"></div><div class="tr" style="left:418.48px;top:65.14px;border-left:1.125px solid transparent;border-right:1.125px solid transparent;border-top:1.52px solid #333;"></div><div class="tr" style="left:456.88px;top:65.14px;border-left:1.125px solid transparent;border-right:1.125px solid transparent;border-top:1.52px solid #333;"></div><svg style="left:0;top:0;width:909.0px;height:504.0px" viewBox="0 0 909.0 504.0"><g transform="scale(1.02564) translate(-67.64 -400.80)"><text x="335" y="478.5" font-size="4.7" font-weight="bold" fill="#222" textLength="39.5" lengthAdjust="spacingAndGlyphs">Time=8248.1103 s</text><text x="465.4" y="479.2" font-size="4.5" font-weight="bold" fill="#222" textLength="345" lengthAdjust="spacingAndGlyphs">Surface: z-coordinate (m)  Surface: z-coordinate (m)  Surface: abs(br.Qm) (kg/(m³·s))  Surface: Absolute pressure (kPa)  Line: 1 (1)  Line: 1 (1)  Line: 1 (1)  Arrow Surface:</text><defs><radialGradient id="rgC" cx="826.8" cy="599.5" r="72" gradientUnits="userSpaceOnUse"><stop offset="0" stop-color="#1a2ad0"/><stop offset=".06" stop-color="#1a55e0"/><stop offset=".12" stop-color="#25cfe0"/><stop offset=".2" stop-color="#5fe07a"/><stop offset=".32" stop-color="#f2e61c"/><stop offset=".44" stop-color="#f5c01c"/><stop offset=".66" stop-color="#f7801a"/><stop offset=".9" stop-color="#ee3a1a"/><stop offset="1" stop-color="#e8281a"/></radialGradient><radialGradient id="rgCr" cx="826.8" cy="599.5" r="52" gradientUnits="userSpaceOnUse"><stop offset="0" stop-color="#1a2ad0"/><stop offset=".08" stop-color="#1a55e0"/><stop offset=".17" stop-color="#25cfe0"/><stop offset=".32" stop-color="#3fdcb0"/><stop offset=".6" stop-color="#6fe07a"/><stop offset="1" stop-color="#c6e63c"/></radialGradient><linearGradient id="rgC2r" x1="830" x2="876.6" y1="0" y2="0" gradientUnits="userSpaceOnUse"><stop offset="0" stop-color="#f7901a"/><stop offset=".3" stop-color="#f2e61c"/><stop offset=".7" stop-color="#8fe06a"/><stop offset="1" stop-color="#5fe0a0"/></linearGradient><radialGradient id="rgC2" cx="826.4" cy="607" r="70" gradientUnits="userSpaceOnUse"><stop offset="0" stop-color="#e8281a"/><stop offset=".1" stop-color="#f7901a"/><stop offset=".2" stop-color="#f2e61c"/><stop offset=".34" stop-color="#5fe07a"/><stop offset=".5" stop-color="#25cfe0"/><stop offset=".72" stop-color="#1a55e0"/><stop offset="1" stop-color="#1a2ad0" stop-opacity=".6"/></radialGradient></defs><rect x="344.4" y="542.0" width="532.2" height="176.29999999999995" fill="none" stroke="#222" stroke-width=".8"/><path d="M410.8,575.7V718.3M477.6,576.4V718.3M544.3,577.1V718.3M610.7,578.4V718.3M667.3,579.5V718.3M709.7,580.3V718.3M740.4,581.9V718.3M763.2,583.4V718.3M780.2,585.0V718.3M793.0,586.9V718.3M803.0,589.4V718.3M810.3,591.6V718.3M814.9,593.6V718.3M819.5,595.5V718.3M823.1,597.2V718.3M826.4,598.6V718.3M829.5,597.6V718.3M833.1,596.0V718.3M836.8,594.6V718.3M840.4,593.6V718.3M845.9,592.0V718.3M854.1,590.7V718.3M863.2,589.7V718.3" stroke="#474f9e" stroke-opacity=".9" stroke-width=".55" fill="none"/><path d="M344.4,587.8H876.6M344.4,605.5H876.6M344.4,610.3H876.6M344.4,614.3H876.6M344.4,621.6H876.6M344.4,625.2H876.6M344.4,628.9H876.6M344.4,631.6H876.6M344.4,645.3H876.6M344.4,662.6H876.6M344.4,680.3H876.6M344.4,698.2H876.6M344.4,714.6H876.6" stroke="#6f78b8" stroke-opacity=".7" stroke-width=".45" fill="none"/><path d="M344.4,622.0C640,623.0 790,622.0 826,608.0M344.4,625.4C640,626.4 790,625.4 826,608.4M344.4,628.8C640,629.8 790,628.8 826,608.8M344.4,632.2C640,633.2 790,632.2 826,609.2M344.4,635.6C640,636.6 790,635.6 826,609.6M344.4,639.0C640,640.0 790,639.0 826,610.0M344.4,642.4C640,643.4 790,642.4 826,610.4M838.0,718.3C838.0,660 836.0,625 828,608M844.5,718.3C844.5,660 842.5,625 828,608M851.0,718.3C851.0,660 849.0,625 828,608M857.5,718.3C857.5,660 855.5,625 828,608M864.0,718.3C864.0,660 862.0,625 828,608M870.5,718.3C870.5,660 868.5,625 828,608M815.0,718.3C815.0,670 819.0,630 825,608M808.0,718.3C808.0,670 812.0,630 825,608M801.0,718.3C801.0,670 805.0,630 825,608M794.0,718.3C794.0,670 798.0,630 825,608M787.0,718.3C787.0,670 791.0,630 825,608M780.0,718.3C780.0,670 784.0,630 825,608" stroke="#7fb8d8" stroke-opacity=".5" stroke-width=".4" fill="none"/><path d="M348.2,578.7L351.8,585.8M348.2,587.8L351.8,594.9M348.2,596.9L353.2,602.5M348.2,605.5L353.2,611.1M348.2,614.3L353.2,619.9M348.2,621.6L350.8,630.7M348.2,628.9L350.8,638.0M348.2,637.1L350.8,646.2M348.2,645.3L350.8,654.4M348.2,654.4L350.8,663.5M348.2,662.6L350.8,671.7M348.2,671.8L350.8,680.9M348.2,680.3L350.8,689.4M348.2,689.1L350.8,698.2M348.2,698.2L350.8,707.3M348.2,706.4L350.8,715.5M348.2,714.6L349.1,717.7M357.0,578.7L361.2,585.5M357.0,587.8L361.2,594.6M357.0,596.9L362.4,602.1M357.0,605.5L362.4,610.7M357.0,614.3L362.4,619.5M357.0,621.6L359.8,630.7M357.0,628.9L359.8,638.0M357.0,637.1L359.8,646.2M357.0,645.3L359.8,654.4M357.0,654.4L359.8,663.5M357.0,662.6L359.8,671.7M357.0,671.8L359.8,680.9M357.0,680.3L359.8,689.4M357.0,689.1L359.8,698.2M357.0,698.2L359.8,707.3M357.0,706.4L359.8,715.5M357.0,714.6L358.0,717.7M365.8,578.7L370.5,585.2M365.8,587.8L370.5,594.3M365.8,596.9L371.7,601.6M365.8,605.5L371.7,610.2M365.8,614.3L371.7,619.0M365.8,621.6L368.9,630.6M365.8,628.9L368.9,637.9M365.8,637.1L368.9,646.1M365.8,645.3L368.9,654.3M365.8,654.4L368.9,663.4M365.8,662.6L368.9,671.6M365.8,671.8L368.9,680.8M365.8,680.3L368.9,689.3M365.8,689.1L368.9,698.1M365.8,698.2L368.9,707.2M365.8,706.4L368.9,715.4M365.8,714.6L366.9,717.7M374.6,578.7L379.8,584.8M374.6,587.8L379.8,593.9M374.6,596.9L380.8,601.1M374.6,605.5L380.8,609.7M374.6,614.3L380.8,618.5M374.6,621.6L378.0,630.5M374.6,628.9L378.0,637.8M374.6,637.1L378.0,646.0M374.6,645.3L378.0,654.2M374.6,654.4L378.0,663.3M374.6,662.6L378.0,671.5M374.6,671.8L378.0,680.7M374.6,680.3L378.0,689.2M374.6,689.1L378.0,698.0M374.6,698.2L378.0,707.1M374.6,706.4L378.0,715.3M374.6,714.6L375.8,717.7M383.4,578.7L389.1,584.3M383.4,587.8L389.1,593.4M383.4,596.9L390.0,600.5M383.4,605.5L390.0,609.1M383.4,614.3L390.0,617.9M383.4,621.6L387.0,630.4M383.4,628.9L387.0,637.7M383.4,637.1L387.0,645.9M383.4,645.3L387.0,654.1M383.4,654.4L387.0,663.2M383.4,662.6L387.0,671.4M383.4,671.8L387.0,680.6M383.4,680.3L387.0,689.1M383.4,689.1L387.0,697.9M383.4,698.2L387.0,707.0M383.4,706.4L387.0,715.2M383.4,714.6L384.7,717.7M392.2,578.7L398.3,583.8M392.2,587.8L398.3,592.9M392.2,596.9L399.0,600.0M392.2,605.5L399.0,608.6M392.2,614.3L399.0,617.4M392.2,621.6L396.1,630.3M392.2,628.9L396.1,637.6M392.2,637.1L396.1,645.8M392.2,645.3L396.1,654.0M392.2,654.4L396.1,663.1M392.2,662.6L396.1,671.3M392.2,671.8L396.1,680.5M392.2,680.3L396.1,689.0M392.2,689.1L396.1,697.8M392.2,698.2L396.1,706.9M392.2,706.4L396.1,715.1M392.2,714.6L393.6,717.7M401.0,578.7L407.5,583.3M401.0,587.8L407.5,592.4M401.0,596.9L408.1,599.4M401.0,605.5L404.4,606.7M401.0,614.3L404.4,615.5M401.0,621.6L405.2,630.1M401.0,628.9L405.2,637.4M401.0,637.1L405.2,645.6M401.0,645.3L405.2,653.8M401.0,654.4L405.2,662.9M401.0,662.6L405.2,671.1M401.0,671.8L405.2,680.3M401.0,680.3L405.2,688.8M401.0,689.1L405.2,697.6M401.0,698.2L405.2,706.7M401.0,706.4L405.2,714.9M401.0,714.6L402.5,717.7M409.8,578.7L416.7,582.8M409.8,587.8L416.7,591.9M409.8,596.9L416.9,599.2M409.8,605.5L413.2,606.6M409.8,614.3L413.2,615.4M409.8,621.6L414.2,630.0M409.8,628.9L414.2,637.3M409.8,637.1L414.2,645.5M409.8,645.3L414.2,653.7M409.8,654.4L414.2,662.8M409.8,662.6L414.2,671.0M409.8,671.8L414.2,680.2M409.8,680.3L414.2,688.7M409.8,689.1L414.2,697.5M409.8,698.2L414.2,706.6M409.8,706.4L414.2,714.8M409.8,714.6L411.4,717.7M418.6,578.7L425.7,582.4M418.6,587.8L425.7,591.5M418.6,596.9L425.8,599.0M418.6,605.5L422.1,606.5M418.6,614.3L422.1,615.3M418.6,621.6L423.5,629.8M418.6,628.9L423.5,637.1M418.6,637.1L423.5,645.3M418.6,645.3L423.5,653.5M418.6,654.4L423.5,662.6M418.6,662.6L423.5,670.8M418.6,671.8L423.5,680.0M418.6,680.3L423.5,688.5M418.6,689.1L423.5,697.3M418.6,698.2L423.5,706.4M418.6,706.4L423.5,714.6M418.6,714.6L420.4,717.7M427.4,578.7L434.6,582.1M427.4,587.8L434.6,591.2M427.4,596.9L434.7,598.8M427.4,605.5L430.9,606.4M427.4,614.3L430.9,615.2M427.4,621.6L432.7,629.5M427.4,628.9L432.7,636.8M427.4,637.1L432.7,645.0M427.4,645.3L432.7,653.2M427.4,654.4L432.7,662.3M427.4,662.6L432.7,670.5M427.4,671.8L432.7,679.7M427.4,680.3L432.7,688.2M427.4,689.1L432.7,697.0M427.4,698.2L432.7,706.1M427.4,706.4L432.7,714.3M427.4,714.6L429.5,717.7M436.2,578.7L443.6,581.8M436.2,587.8L443.6,590.9M436.2,596.9L443.5,598.6M436.2,605.5L439.7,606.3M436.2,614.3L439.7,615.1M436.2,621.6L441.9,629.2M436.2,628.9L441.9,636.5M436.2,637.1L441.9,644.7M436.2,645.3L441.9,652.9M436.2,654.4L441.9,662.0M436.2,662.6L441.9,670.2M436.2,671.8L441.9,679.4M436.2,680.3L441.9,687.9M436.2,689.1L441.9,696.7M436.2,698.2L441.9,705.8M436.2,706.4L441.9,714.0M436.2,714.6L438.5,717.7M445.0,578.7L452.5,581.4M445.0,587.8L452.5,590.5M445.0,596.9L452.4,598.4M445.0,605.5L448.5,606.2M445.0,614.3L448.5,615.0M445.0,621.6L451.1,628.9M445.0,628.9L451.1,636.2M445.0,637.1L451.1,644.4M445.0,645.3L451.1,652.6M445.0,654.4L451.1,661.7M445.0,662.6L451.1,669.9M445.0,671.8L451.1,679.1M445.0,680.3L451.1,687.6M445.0,689.1L451.1,696.4M445.0,698.2L451.1,705.5M445.0,706.4L451.1,713.7M445.0,714.6L447.6,717.7M453.8,578.7L461.4,581.1M453.8,587.8L461.4,590.2M453.8,596.9L461.2,598.2M453.8,605.5L457.3,606.1M453.8,614.3L457.3,614.9M453.8,621.6L460.3,628.5M453.8,628.9L460.3,635.8M453.8,637.1L460.3,644.0M453.8,645.3L460.3,652.2M453.8,654.4L460.3,661.3M453.8,662.6L460.3,669.5M453.8,671.8L460.3,678.7M453.8,680.3L460.3,687.2M453.8,689.1L460.3,696.0M453.8,698.2L460.3,705.1M453.8,706.4L460.3,713.3M453.8,714.6L456.7,717.7M462.6,578.8L470.3,580.8M462.6,587.8L470.3,589.8M462.6,596.9L470.0,597.9M462.6,605.5L466.2,606.0M462.6,614.3L466.2,614.8M462.6,621.6L469.5,628.1M462.6,628.9L469.5,635.4M462.6,637.1L469.5,643.6M462.6,645.3L469.5,651.8M462.6,654.4L469.5,660.9M462.6,662.6L469.5,669.1M462.6,671.8L469.5,678.3M462.6,680.3L469.5,686.8M462.6,689.1L469.5,695.6M462.6,698.2L469.5,704.7M462.6,706.4L469.5,712.9M462.6,714.6L465.9,717.7M471.4,578.9L479.2,580.6M471.4,587.8L479.2,589.5M471.4,596.9L478.9,597.7M471.4,605.5L475.0,605.9M471.4,614.3L475.0,614.7M471.4,621.6L478.6,627.8M471.4,628.9L478.6,635.1M471.4,637.1L478.6,643.3M471.4,645.3L478.6,651.5M471.4,654.4L478.6,660.6M471.4,662.6L478.6,668.8M471.4,671.8L478.6,678.0M471.4,680.3L478.6,686.5M471.4,689.1L478.6,695.3M471.4,698.2L478.6,704.4M471.4,706.4L478.6,712.6M471.4,714.6L475.0,717.7M480.2,579.0L488.1,580.4M480.2,587.8L488.1,589.2M480.2,596.9L487.7,597.5M480.2,605.5L483.8,605.8M480.2,614.3L483.8,614.6M480.2,621.6L487.7,627.4M480.2,628.9L487.7,634.7M480.2,637.1L487.7,642.9M480.2,645.3L487.7,651.1M480.2,654.4L487.7,660.2M480.2,662.6L487.7,668.4M480.2,671.8L487.7,677.6M480.2,680.3L487.7,686.1M480.2,689.1L487.7,694.9M480.2,698.2L487.7,704.0M480.2,706.4L487.7,712.2M480.2,714.6L484.3,717.7M489.0,579.1L496.9,580.4M489.0,587.8L496.9,589.1M489.0,596.9L496.5,597.5M489.0,605.5L492.6,605.8M489.0,614.3L492.6,614.6M489.0,621.6L496.8,627.0M489.0,628.9L496.8,634.3M489.0,637.1L496.8,642.5M489.0,645.3L496.8,650.7M489.0,654.4L496.8,659.8M489.0,662.6L496.8,668.0M489.0,671.8L496.8,677.2M489.0,680.3L496.8,685.7M489.0,689.1L496.8,694.5M489.0,698.2L496.8,703.6M489.0,706.4L496.8,711.8M489.0,714.6L493.4,717.7M497.8,579.2L505.7,580.4M497.8,587.8L505.7,589.0M497.8,596.9L505.3,597.5M497.8,605.5L501.4,605.8M497.8,614.3L501.4,614.6M497.8,621.6L505.8,626.7M497.8,628.9L505.8,634.0M497.8,637.1L505.8,642.2M497.8,645.3L505.8,650.4M497.8,654.4L505.8,659.5M497.8,662.6L505.8,667.7M497.8,671.8L505.8,676.9M497.8,680.3L505.8,685.4M497.8,689.1L505.8,694.2M497.8,698.2L505.8,703.3M497.8,706.4L505.8,711.5M497.8,714.6L502.6,717.7M506.6,579.3L514.5,580.3M506.6,587.8L514.5,588.9M506.6,596.9L514.1,597.5M506.6,605.5L510.2,605.8M506.6,614.3L510.2,614.6M506.6,621.6L514.8,626.4M506.6,628.9L514.8,633.7M506.6,637.1L514.8,641.9M506.6,645.3L514.8,650.1M506.6,654.4L514.8,659.2M506.6,662.6L514.8,667.4M506.6,671.8L514.8,676.6M506.6,680.3L514.8,685.1M506.6,689.1L514.8,693.9M506.6,698.2L514.8,703.0M506.6,706.4L514.8,711.2M506.6,714.6L511.9,717.7M515.4,579.3L523.3,580.3M515.4,587.8L523.3,588.8M515.4,596.9L522.9,597.4M515.4,605.5L519.0,605.8M515.4,614.3L519.0,614.6M515.4,621.6L523.8,626.0M515.4,628.9L523.8,633.3M515.4,637.1L523.8,641.5M515.4,645.3L523.8,649.7M515.4,654.4L523.8,658.8M515.4,662.6L523.8,667.0M515.4,671.8L523.8,676.2M515.4,680.3L523.8,684.7M515.4,689.1L523.8,693.5M515.4,698.2L523.8,702.6M515.4,706.4L523.8,710.8M515.4,714.6L521.3,717.7M524.2,579.4L532.1,580.3M524.2,587.8L532.1,588.7M524.2,596.9L531.7,597.4M524.2,605.5L527.8,605.7M524.2,614.3L527.8,614.5M524.2,621.6L532.8,625.7M524.2,628.9L532.8,633.0M524.2,637.1L532.8,641.2M524.2,645.3L532.8,649.4M524.2,654.4L532.8,658.5M524.2,662.6L532.8,666.7M524.2,671.8L532.8,675.9M524.2,680.3L532.8,684.4M524.2,689.1L532.8,693.2M524.2,698.2L532.8,702.3M524.2,706.4L532.8,710.5M524.2,714.6L530.7,717.7M533.0,579.5L541.0,580.3M533.0,587.8L541.0,588.6M533.0,596.9L540.5,597.4M533.0,605.5L536.6,605.7M533.0,614.3L536.6,614.5M533.0,621.6L541.7,625.3M533.0,628.9L541.7,632.6M533.0,637.1L541.7,640.8M533.0,645.3L541.7,649.0M533.0,654.4L541.7,658.1M533.0,662.6L541.7,666.3M533.0,671.8L541.7,675.5M533.0,680.3L541.7,684.0M533.0,689.1L541.7,692.8M533.0,698.2L541.7,701.9M533.0,706.4L541.7,710.1M533.0,714.6L540.3,717.7M541.8,579.6L549.8,580.4M541.8,587.8L549.8,588.5M541.8,596.9L549.3,597.4M541.8,605.5L545.4,605.7M541.8,614.3L545.4,614.5M541.8,621.6L550.7,624.9M541.8,628.9L550.7,632.2M541.8,637.1L550.7,640.4M541.8,645.3L550.7,648.6M541.8,654.4L550.7,657.7M541.8,662.6L550.7,665.9M541.8,671.8L550.7,675.1M541.8,680.3L550.7,683.6M541.8,689.1L550.7,692.4M541.8,698.2L550.7,701.5M541.8,706.4L550.7,709.7M541.8,714.6L550.0,717.7M550.6,579.8L558.6,580.5M550.6,587.8L558.6,588.5M550.6,596.9L558.1,597.3M550.6,605.5L554.2,605.7M550.6,614.3L554.2,614.5M550.6,621.6L559.6,624.7M550.6,628.9L559.6,632.0M550.6,637.1L559.6,640.2M550.6,645.3L559.6,648.4M550.6,654.4L559.6,657.5M550.6,662.6L559.6,665.7M550.6,671.8L559.6,674.9M550.6,680.3L559.6,683.4M550.6,689.1L559.6,692.2M550.6,698.2L559.6,701.3M550.6,706.4L559.6,709.5M550.6,714.6L559.5,717.7M559.4,580.0L567.4,580.6M559.4,587.8L567.4,588.4M559.4,596.9L566.9,597.3M559.4,605.5L563.0,605.7M559.4,614.3L563.0,614.5M559.4,621.6L568.4,624.6M559.4,628.9L568.4,631.9M559.4,637.1L568.4,640.1M559.4,645.3L568.4,648.3M559.4,654.4L568.4,657.4M559.4,662.6L568.4,665.6M559.4,671.8L568.4,674.8M559.4,680.3L568.4,683.3M559.4,689.1L568.4,692.1M559.4,698.2L568.4,701.2M559.4,706.4L568.4,709.4M559.4,714.6L568.4,717.6" stroke="#5f8adc" stroke-width=".6" fill="none"/><path d="M568.2,580.1L576.2,580.7M568.2,587.8L576.2,588.4M568.2,596.9L575.7,597.3M568.2,605.5L571.8,605.7M568.2,614.3L571.8,614.5M568.2,621.6L577.2,624.4M568.2,628.9L577.2,631.7M568.2,637.1L577.2,639.9M568.2,645.3L577.2,648.1M568.2,654.4L577.2,657.2M568.2,662.6L577.2,665.4M568.2,671.8L577.2,674.6M568.2,680.3L577.2,683.1M568.2,689.1L577.2,691.9M568.2,698.2L577.2,701.0M568.2,706.4L577.2,709.2M568.2,714.6L577.2,717.4" stroke="#5f8cdc" stroke-width=".6" fill="none"/><path d="M577.0,580.3L585.0,580.9M577.0,587.8L585.0,588.4M577.0,596.9L584.5,597.3M577.0,605.5L580.6,605.7M577.0,614.3L580.6,614.5M577.0,621.6L585.9,624.2M577.0,628.9L585.9,631.5M577.0,637.1L585.9,639.7M577.0,645.3L585.9,647.9M577.0,654.4L585.9,657.0M577.0,662.6L585.9,665.2M577.0,671.8L585.9,674.4M577.0,680.3L585.9,682.9M577.0,689.1L585.9,691.7M577.0,698.2L585.9,700.8M577.0,706.4L585.9,709.0M577.0,714.6L585.9,717.2" stroke="#608edc" stroke-width=".6" fill="none"/><path d="M585.8,580.5L593.8,581.0M585.8,587.8L593.8,588.3M585.8,596.9L593.3,597.2M585.8,605.5L589.4,605.7M585.8,614.3L589.4,614.5M585.8,621.6L594.6,624.0M585.8,628.9L594.6,631.3M585.8,637.1L594.6,639.5M585.8,645.3L594.6,647.7M585.8,654.4L594.6,656.8M585.8,662.6L594.6,665.0M585.8,671.8L594.6,674.2M585.8,680.3L594.6,682.7M585.8,689.1L594.6,691.5M585.8,698.2L594.6,700.6M585.8,706.4L594.6,708.8M585.8,714.6L594.6,717.0" stroke="#6191dc" stroke-width=".6" fill="none"/><path d="M594.6,580.7L602.6,581.1M594.6,587.8L602.6,588.3M594.6,596.9L602.1,597.2M594.6,605.5L598.2,605.6M594.6,614.3L598.2,614.4M594.6,621.6L603.4,623.8M594.6,628.9L603.4,631.1M594.6,637.1L603.4,639.3M594.6,645.3L603.4,647.5M594.6,654.4L603.4,656.6M594.6,662.6L603.4,664.8M594.6,671.8L603.4,674.0M594.6,680.3L603.4,682.5M594.6,689.1L603.4,691.3M594.6,698.2L603.4,700.4M594.6,706.4L603.4,708.6M594.6,714.6L603.4,716.8" stroke="#6294dd" stroke-width=".6" fill="none"/><path d="M603.4,580.8L611.4,581.3M603.4,587.8L611.4,588.2M603.4,596.9L610.9,597.2M603.4,605.5L607.0,605.6M603.4,614.3L607.0,614.4M603.4,621.6L612.1,623.6M603.4,628.9L612.1,630.9M603.4,637.1L612.1,639.1M603.4,645.3L612.1,647.3M603.4,654.4L612.1,656.4M603.4,662.6L612.1,664.6M603.4,671.8L612.1,673.8M603.4,680.3L612.1,682.3M603.4,689.1L612.1,691.1M603.4,698.2L612.1,700.2M603.4,706.4L612.1,708.4M603.4,714.6L612.1,716.6" stroke="#6396dd" stroke-width=".6" fill="none"/><path d="M612.2,581.0L620.2,581.4M612.2,587.8L620.2,588.2M612.2,596.9L619.7,597.2M612.2,605.5L615.8,605.6M612.2,614.3L615.8,614.4M612.2,621.6L620.8,623.4M612.2,628.9L620.8,630.7M612.2,637.1L620.8,638.9M612.2,645.3L620.8,647.1M612.2,654.4L620.8,656.2M612.2,662.6L620.8,664.4M612.2,671.8L620.8,673.6M612.2,680.3L620.8,682.1M612.2,689.1L620.8,690.9M612.2,698.2L620.8,700.0M612.2,706.4L620.8,708.2M612.2,714.6L620.8,716.4" stroke="#6499de" stroke-width=".6" fill="none"/><path d="M621.0,581.2L629.0,581.5M621.0,587.8L629.0,588.2M621.0,596.9L628.5,597.1M621.0,605.5L624.6,605.6M621.0,614.3L624.6,614.4M621.0,621.6L629.6,623.1M621.0,628.9L629.6,630.4M621.0,637.1L629.6,638.6M621.0,645.3L629.6,646.8M621.0,654.4L629.6,655.9M621.0,662.6L629.6,664.1M621.0,671.8L629.6,673.3M621.0,680.3L629.6,681.8M621.0,689.1L629.6,690.6M621.0,698.2L629.6,699.7M621.0,706.4L629.6,707.9M621.0,714.6L629.6,716.1" stroke="#659bde" stroke-width=".6" fill="none"/><path d="M629.8,581.3L637.8,581.7M629.8,587.8L637.8,588.1M629.8,596.9L637.3,597.1M629.8,605.5L633.4,605.6M629.8,614.3L633.4,614.4M629.8,621.6L638.3,622.9M629.8,628.9L638.3,630.2M629.8,637.1L638.3,638.4M629.8,645.3L638.3,646.6M629.8,654.4L638.3,655.7M629.8,662.6L638.3,663.9M629.8,671.8L638.3,673.1M629.8,680.3L638.3,681.6M629.8,689.1L638.3,690.4M629.8,698.2L638.3,699.5M629.8,706.4L638.3,707.7M629.8,714.6L638.3,715.9" stroke="#669ede" stroke-width=".6" fill="none"/><path d="M638.6,581.5L646.6,581.8M638.6,587.8L646.6,588.1M638.6,596.9L646.1,597.1M638.6,605.5L642.2,605.6M638.6,614.3L642.2,614.4M638.6,621.6L647.0,622.6M638.6,628.9L647.0,629.9M638.6,637.1L647.0,638.1M638.6,645.3L647.0,646.3M638.6,654.4L647.0,655.4M638.6,662.6L647.0,663.6M638.6,671.8L647.0,672.8M638.6,680.3L647.0,681.3M638.6,689.1L647.0,690.1M638.6,698.2L647.0,699.2M638.6,706.4L647.0,707.4M638.6,714.6L647.0,715.6" stroke="#67a0df" stroke-width=".6" fill="none"/><path d="M647.4,581.7L655.4,581.9M647.4,587.8L655.4,588.0M647.4,596.9L654.9,597.1M647.4,605.5L651.0,605.6M647.4,614.3L651.0,614.4M647.4,621.6L655.7,622.4M647.4,628.9L655.7,629.7M647.4,637.1L655.7,637.9M647.4,645.3L655.7,646.1M647.4,654.4L655.7,655.2M647.4,662.6L655.7,663.4M647.4,671.8L655.7,672.6M647.4,680.3L655.7,681.1M647.4,689.1L655.7,689.9M647.4,698.2L655.7,699.0M647.4,706.4L655.7,707.2M647.4,714.6L655.7,715.4" stroke="#68a3df" stroke-width=".6" fill="none"/><path d="M656.2,581.9L664.2,582.1M656.2,587.8L664.2,588.0M656.2,596.9L663.7,597.0M656.2,605.5L659.8,605.6M656.2,614.3L659.8,614.4M656.2,621.6L664.4,622.2M656.2,628.9L664.4,629.5M656.2,637.1L664.4,637.7M656.2,645.3L664.4,645.9M656.2,654.4L664.4,655.0M656.2,662.6L664.4,663.2M656.2,671.8L664.4,672.4M656.2,680.3L664.4,680.9M656.2,689.1L664.4,689.7M656.2,698.2L664.4,698.8M656.2,706.4L664.4,707.0M656.2,714.6L664.4,715.2" stroke="#68a6df" stroke-width=".6" fill="none"/><path d="M665.0,582.0L673.0,582.2M665.0,587.8L673.0,588.0M665.0,596.9L672.5,597.0M665.0,605.5L668.6,605.5M665.0,614.3L668.6,614.3M665.0,621.6L673.1,622.0M665.0,628.9L673.1,629.3M665.0,637.1L673.1,637.5M665.0,645.3L673.1,645.7M665.0,654.4L673.1,654.8M665.0,662.6L673.1,663.0M665.0,671.8L673.1,672.2M665.0,680.3L673.1,680.7M665.0,689.1L673.1,689.5M665.0,698.2L673.1,698.6M665.0,706.4L673.1,706.8M665.0,714.6L673.1,715.0" stroke="#69a8e0" stroke-width=".6" fill="none"/><path d="M673.8,582.2L681.8,582.3M673.8,587.8L681.8,587.9M673.8,596.9L681.3,597.0M673.8,605.5L677.4,605.5M673.8,614.3L677.4,614.3M673.8,621.6L681.8,621.6M673.8,628.9L681.8,628.9M673.8,637.1L681.8,637.1M673.8,645.3L681.8,645.3M673.8,654.4L681.8,654.4M673.8,662.6L681.8,662.6M673.8,671.8L681.8,671.8M673.8,680.3L681.8,680.3M673.8,689.1L681.8,689.1M673.8,698.2L681.8,698.2M673.8,706.4L681.8,706.4M673.8,714.6L681.8,714.6" stroke="#6aabe0" stroke-width=".6" fill="none"/><path d="M682.6,582.4L690.6,582.5M682.6,587.8L690.6,587.9M682.6,596.9L690.1,597.0M682.6,605.5L686.2,605.5M682.6,614.3L686.2,614.3M682.6,621.6L690.5,621.2M682.6,628.9L690.5,628.5M682.6,637.1L690.5,636.7M682.6,645.3L690.5,644.9M682.6,654.4L690.5,654.0M682.6,662.6L690.5,662.2M682.6,671.8L690.5,671.4M682.6,680.3L690.5,679.9M682.6,689.1L690.5,688.7M682.6,698.2L690.5,697.8M682.6,706.4L690.5,706.0M682.6,714.6L690.5,714.2" stroke="#6bade0" stroke-width=".6" fill="none"/><path d="M691.4,582.5L699.4,582.6M691.4,587.8L699.4,587.8M691.4,596.9L698.9,596.9M691.4,605.5L695.0,605.5M691.4,614.3L695.0,614.3M691.4,621.6L699.1,620.9M691.4,628.9L699.1,628.2M691.4,637.1L699.1,636.4M691.4,645.3L699.1,644.6M691.4,654.4L699.1,653.7M691.4,662.6L699.1,661.9M691.4,671.8L699.1,671.1M691.4,680.3L699.1,679.6M691.4,689.1L699.1,688.4M691.4,698.2L699.1,697.5M691.4,706.4L699.1,705.7M691.4,714.6L699.1,713.9" stroke="#6cb0e1" stroke-width=".6" fill="none"/><path d="M700.2,582.7L708.2,582.7M700.2,587.8L708.2,587.8M700.2,596.9L707.7,596.9M700.2,605.5L703.8,605.5M700.2,614.3L703.8,614.3M700.2,621.6L707.8,620.5M700.2,628.9L707.8,627.8M700.2,637.1L707.8,636.0M700.2,645.3L707.8,644.3M700.2,654.4L707.8,653.4M700.2,662.6L707.8,661.7M700.2,671.8L707.8,670.9M700.2,680.3L707.8,679.5M700.2,689.1L707.8,688.3M700.2,698.2L707.8,697.5M700.2,706.4L707.8,705.7M700.2,714.6L707.8,714.0" stroke="#6db2e1" stroke-width=".6" fill="none"/><path d="M709.0,582.9L717.0,582.9M709.0,587.8L717.0,587.8M709.0,596.9L716.5,596.9M709.0,605.5L712.6,605.5M709.0,614.3L712.6,614.3M709.0,621.6L716.4,620.1M709.0,628.9L716.4,627.4M709.0,637.1L716.4,635.6M709.0,645.3L716.4,643.8M709.0,654.4L716.4,653.0M709.0,662.6L716.4,661.3M709.0,671.8L716.4,670.6M709.0,680.3L716.4,679.1M709.0,689.1L716.4,688.0M709.0,698.2L716.4,697.2M709.0,706.4L716.5,705.4M709.0,714.6L716.5,713.7" stroke="#6eb5e1" stroke-width=".6" fill="none"/><path d="M717.8,583.1L725.8,583.1M717.8,587.8L725.8,587.8M717.8,596.9L725.3,596.8M717.8,605.5L721.4,605.5M717.8,614.3L721.4,614.3M717.8,621.6L724.9,619.6M717.8,628.9L724.9,626.9M717.8,637.1L724.9,635.1M717.8,645.3L724.9,643.4M717.8,654.4L725.0,652.6M717.8,662.6L725.0,660.9M717.8,671.8L725.0,670.2M717.8,680.3L725.0,678.8M717.8,689.1L725.1,687.7M717.8,698.2L725.1,696.9M717.8,706.4L725.1,705.2M717.8,714.6L725.1,713.5" stroke="#6fb8e2" stroke-width=".6" fill="none"/><path d="M726.6,583.5L734.6,583.5M726.6,587.8L734.6,587.8M726.6,596.9L734.1,596.8M726.6,605.5L730.2,605.5M726.6,614.3L730.2,614.3M726.6,621.6L733.5,619.2M726.6,628.9L733.5,626.5M726.6,637.1L733.5,634.7M726.6,645.3L733.5,643.0M726.6,654.4L733.5,652.2M726.6,662.6L733.6,660.5M726.6,671.8L733.6,669.8M726.6,680.3L733.6,678.5M726.6,689.1L733.7,687.4M726.6,698.2L733.7,696.6M726.6,706.4L733.7,704.9M726.6,714.6L733.7,713.2" stroke="#70bae2" stroke-width=".6" fill="none"/><path d="M735.4,584.1L743.4,584.1M735.4,587.8L743.4,587.8M735.4,596.9L742.9,596.8M735.4,605.5L739.0,605.4M735.4,614.3L742.0,611.5M735.4,621.6L742.0,618.8M735.4,628.9L742.0,626.1M735.4,637.1L742.0,634.3M735.4,645.3L742.0,642.6M735.4,654.4L742.1,651.8M735.4,662.6L742.1,660.2M735.4,671.8L742.2,669.5M735.4,680.3L742.2,678.1M735.4,689.1L742.3,687.1M735.4,698.2L742.3,696.3M735.4,706.4L742.3,704.6M735.4,714.6L742.4,713.0" stroke="#71bde2" stroke-width=".6" fill="none"/><path d="M744.2,584.7L752.2,584.7M744.2,587.8L752.2,587.8M744.2,596.9L751.7,596.8M744.2,605.5L747.8,605.4M744.2,614.3L750.5,611.1M744.2,621.6L750.5,618.4M744.2,628.9L750.5,625.7M744.2,637.1L750.5,633.9M744.2,645.3L750.5,642.2M744.2,654.4L750.6,651.5M744.2,662.6L750.7,659.8M744.2,671.8L750.7,669.2M744.2,680.3L750.8,677.8M744.2,689.1L750.8,686.8M744.2,698.2L750.9,696.0M744.2,706.4L750.9,704.4M744.2,714.6L751.0,712.7" stroke="#72bfe3" stroke-width=".6" fill="none"/><path d="M753.0,585.3L761.0,585.3M753.0,587.8L761.0,587.8M753.0,596.9L760.5,596.7M753.0,605.5L756.6,605.4M753.0,614.3L758.9,610.7M753.0,621.6L758.9,618.0M753.0,628.9L758.9,625.3M753.0,637.1L758.9,633.5M753.0,645.3L759.0,641.8M753.0,654.4L759.1,651.1M753.0,662.6L759.2,659.4M753.0,671.8L759.3,668.8M753.0,680.3L759.3,677.5M753.0,689.1L759.4,686.5M753.0,698.2L759.5,695.7M753.0,706.4L759.5,704.1M753.0,714.6L759.6,712.5" stroke="#73c2e3" stroke-width=".6" fill="none"/><path d="M761.8,585.9L769.8,585.9M761.8,587.8L769.8,587.8M761.8,596.9L769.3,596.7M761.8,605.5L765.4,605.4M761.8,614.3L767.3,610.3M761.8,621.6L767.3,617.6M761.8,628.9L767.3,624.9M761.8,637.1L767.3,633.1M761.8,645.3L767.4,641.5M761.8,654.4L767.5,650.7M761.8,662.6L767.6,659.1M761.8,671.8L767.8,668.5M761.8,680.3L767.8,677.2M761.8,689.1L767.9,686.2M761.8,698.2L768.0,695.5M761.8,706.4L768.1,703.8M761.8,714.6L768.2,712.2" stroke="#73c4e3" stroke-width=".6" fill="none"/><path d="M770.6,586.5L778.6,586.5M770.6,587.8L778.6,587.8M770.6,596.9L778.1,596.7M770.6,605.5L774.2,605.4M770.6,614.3L775.7,610.0M770.6,621.6L775.7,617.3M770.6,628.9L775.7,624.6M770.6,637.1L775.7,632.8M770.6,645.3L775.8,641.1M770.6,654.4L776.0,650.4M770.6,662.6L776.1,658.8M770.6,671.8L776.2,668.2M770.6,680.3L776.4,676.9M770.6,689.1L776.5,685.9M770.6,698.2L776.6,695.2M770.6,706.4L776.7,703.6M770.6,714.6L776.8,712.0" stroke="#74c7e4" stroke-width=".6" fill="none"/><path d="M779.4,587.5L787.4,587.5M779.4,587.8L787.4,587.8M779.4,596.9L786.9,596.7M779.4,605.5L783.0,605.4M779.4,614.3L784.1,609.7M779.4,621.6L784.1,617.0M779.4,628.9L784.1,624.3M779.4,637.1L784.1,632.5M779.4,645.3L784.2,640.8M779.4,654.4L784.4,650.1M779.4,662.6L784.5,658.5M779.4,671.8L784.7,667.9M779.4,680.3L784.8,676.6M779.4,689.1L785.0,685.6M779.4,698.2L785.1,695.0M779.4,706.4L785.2,703.4M779.4,714.6L785.3,711.8" stroke="#75cae4" stroke-width=".6" fill="none"/><path d="M788.2,588.8L796.2,588.8M788.2,587.8L796.2,587.8M788.2,596.9L795.7,596.6M788.2,605.5L791.8,605.4M788.2,614.3L792.2,609.2M788.2,621.6L792.2,616.5M788.2,628.9L792.2,623.8M788.2,637.1L792.2,632.0M788.2,645.3L792.4,640.4M788.2,654.4L792.6,649.7M788.2,662.6L792.8,658.1M788.2,671.8L793.0,667.5M788.2,680.3L793.2,676.2M788.2,689.1L793.4,685.2M788.2,698.2L793.5,694.6M788.2,706.4L793.7,703.0M788.2,714.6L793.8,711.4" stroke="#76cce4" stroke-width=".6" fill="none"/><path d="M797.0,596.9L804.5,596.6M797.0,605.5L800.6,605.4M797.0,614.3L800.2,608.9M797.0,621.6L800.2,616.2M797.0,628.9L800.2,623.5M797.0,637.1L800.2,631.7M797.0,645.3L800.5,640.0M797.0,654.4L800.8,649.3M797.0,662.6L801.0,657.7M797.0,671.8L801.2,667.1M797.0,680.3L801.5,675.8M797.0,689.1L801.7,684.8M797.0,698.2L801.9,694.2M797.0,706.4L802.1,702.6M797.0,714.6L802.3,711.1" stroke="#77cfe5" stroke-width=".6" fill="none"/><path d="M805.8,596.9L813.3,596.6M805.8,605.5L809.4,605.3M805.8,614.3L808.3,608.5M805.8,621.6L808.3,615.8M805.8,628.9L808.3,623.1M805.8,637.1L808.3,631.3M805.8,645.3L808.6,639.6M805.8,654.4L808.9,648.9M805.8,662.6L809.2,657.3M805.8,671.8L809.5,666.7M805.8,680.3L809.8,675.4M805.8,689.1L810.1,684.5M805.8,698.2L810.3,693.8M805.8,706.4L810.6,702.3M805.8,714.6L810.8,710.7" stroke="#78d1e5" stroke-width=".6" fill="none"/><path d="M814.6,596.9L822.1,596.6M814.6,605.5L818.2,605.3M814.6,614.3L816.2,608.2M814.6,621.6L816.2,615.5M814.6,628.9L816.2,622.8M814.6,637.1L816.2,631.0M814.6,645.3L816.5,639.3M814.6,654.4L816.9,648.5M814.6,662.6L817.2,656.9M814.6,671.8L817.6,666.3M814.6,680.3L818.0,675.0M814.6,689.1L818.3,684.0M814.6,698.2L818.6,693.4M814.6,706.4L818.9,701.8M814.6,714.6L819.2,710.3" stroke="#79d4e5" stroke-width=".6" fill="none"/><path d="M823.4,614.3L823.8,608.0M823.4,621.6L823.8,615.3M823.4,628.9L823.8,622.6M823.4,637.1L823.8,630.8M823.4,645.3L824.1,639.0M823.4,654.4L824.6,648.2M823.4,662.6L825.1,656.5M823.4,671.8L825.5,665.9M823.4,680.3L826.0,674.5M823.4,689.1L826.4,683.5M823.4,698.2L826.8,692.9M823.4,706.4L827.2,701.3M823.4,714.6L827.5,709.8M832.2,614.3L831.4,608.0M832.2,621.6L831.4,615.3M832.2,628.9L831.4,622.6M832.2,637.1L831.4,630.8M832.2,645.3L831.4,639.0M832.2,654.4L831.4,648.1M832.2,662.6L831.4,656.3M832.2,671.8L831.4,665.5M832.2,680.3L831.4,674.0M832.2,689.1L831.4,682.8M832.2,698.2L831.4,691.9M832.2,706.4L831.4,700.1M832.2,714.6L831.4,708.3M841.0,596.9L838.0,596.9M841.0,605.5L838.0,605.5M841.0,614.3L839.1,608.3M841.0,621.6L839.1,615.6M841.0,628.9L839.1,622.9M841.0,637.1L839.1,631.1M841.0,645.3L839.1,639.3M841.0,654.4L839.1,648.4M841.0,662.6L839.1,656.6M841.0,671.8L839.1,665.8M841.0,680.3L839.1,674.3M841.0,689.1L839.1,683.1M841.0,698.2L839.1,692.2M841.0,706.4L839.1,700.4M841.0,714.6L839.1,708.6M849.8,596.9L846.8,596.9M849.8,605.5L846.8,605.5M849.8,614.3L847.2,608.5M849.8,621.6L847.2,615.8M849.8,628.9L847.2,623.1M849.8,637.1L847.2,631.3M849.8,645.3L847.2,639.5M849.8,654.4L847.2,648.6M849.8,662.6L847.2,656.8M849.8,671.8L847.2,666.0M849.8,680.3L847.2,674.5M849.8,689.1L847.2,683.3M849.8,698.2L847.2,692.4M849.8,706.4L847.2,700.6M849.8,714.6L847.2,708.8M858.6,596.9L855.6,596.9M858.6,605.5L855.6,605.5M858.6,614.3L855.7,608.7M858.6,621.6L855.7,616.0M858.6,628.9L855.7,623.3M858.6,637.1L855.7,631.5M858.6,645.3L855.7,639.7M858.6,654.4L855.7,648.8M858.6,662.6L855.7,657.0M858.6,671.8L855.7,666.2M858.6,680.3L855.7,674.7M858.6,689.1L855.7,683.5M858.6,698.2L855.7,692.6M858.6,706.4L855.7,700.8M858.6,714.6L855.7,709.0M867.4,596.9L864.4,596.9M867.4,605.5L864.4,605.5M867.4,614.3L864.1,608.9M867.4,621.6L864.1,616.2M867.4,628.9L864.1,623.5M867.4,637.1L864.1,631.7M867.4,645.3L864.1,639.9M867.4,654.4L864.1,649.0M867.4,662.6L864.1,657.2M867.4,671.8L864.1,666.4M867.4,680.3L864.1,674.9M867.4,689.1L864.1,683.7M867.4,698.2L864.1,692.8M867.4,706.4L864.1,701.0M867.4,714.6L864.1,709.2" stroke="#7ad6e6" stroke-width=".6" fill="none"/><path d="M350.9,584.1L351.8,585.8M350.9,593.2L351.8,594.9M351.9,601.0L353.2,602.5M351.9,609.6L353.2,611.1M351.9,618.4L353.2,619.9M350.2,628.8L350.8,630.7M350.2,636.1L350.8,638.0M350.2,644.3L350.8,646.2M350.2,652.5L350.8,654.4M350.2,661.6L350.8,663.5M350.2,669.8L350.8,671.7M350.2,679.0L350.8,680.9M350.2,687.5L350.8,689.4M350.2,696.3L350.8,698.2M350.2,705.4L350.8,707.3M350.2,713.6L350.8,715.5M348.5,715.8L349.1,717.7M360.1,583.8L361.2,585.5M360.1,592.9L361.2,594.6M361.0,600.7L362.4,602.1M361.0,609.3L362.4,610.7M361.0,618.1L362.4,619.5M359.2,628.8L359.8,630.7M359.2,636.1L359.8,638.0M359.2,644.3L359.8,646.2M359.2,652.5L359.8,654.4M359.2,661.6L359.8,663.5M359.2,669.8L359.8,671.7M359.2,679.0L359.8,680.9M359.2,687.5L359.8,689.4M359.2,696.3L359.8,698.2M359.2,705.4L359.8,707.3M359.2,713.6L359.8,715.5M357.4,715.8L358.0,717.7M369.3,583.6L370.5,585.2M369.3,592.7L370.5,594.3M370.1,600.3L371.7,601.6M370.1,608.9L371.7,610.2M370.1,617.7L371.7,619.0M368.3,628.7L368.9,630.6M368.3,636.0L368.9,637.9M368.3,644.2L368.9,646.1M368.3,652.4L368.9,654.3M368.3,661.5L368.9,663.4M368.3,669.7L368.9,671.6M368.3,678.9L368.9,680.8M368.3,687.4L368.9,689.3M368.3,696.2L368.9,698.1M368.3,705.3L368.9,707.2M368.3,713.5L368.9,715.4M366.2,715.8L366.9,717.7M378.5,583.2L379.8,584.8M378.5,592.3L379.8,593.9M379.2,600.0L380.8,601.1M379.2,608.6L380.8,609.7M379.2,617.4L380.8,618.5M377.3,628.6L378.0,630.5M377.3,635.9L378.0,637.8M377.3,644.1L378.0,646.0M377.3,652.3L378.0,654.2M377.3,661.4L378.0,663.3M377.3,669.6L378.0,671.5M377.3,678.8L378.0,680.7M377.3,687.3L378.0,689.2M377.3,696.1L378.0,698.0M377.3,705.2L378.0,707.1M377.3,713.4L378.0,715.3M375.1,715.8L375.8,717.7M387.7,582.9L389.1,584.3M387.7,592.0L389.1,593.4M388.2,599.6L390.0,600.5M388.2,608.2L390.0,609.1M388.2,617.0L390.0,617.9M386.3,628.5L387.0,630.4M386.3,635.8L387.0,637.7M386.3,644.0L387.0,645.9M386.3,652.2L387.0,654.1M386.3,661.3L387.0,663.2M386.3,669.5L387.0,671.4M386.3,678.7L387.0,680.6M386.3,687.2L387.0,689.1M386.3,696.0L387.0,697.9M386.3,705.1L387.0,707.0M386.3,713.3L387.0,715.2M383.9,715.9L384.7,717.7M396.8,582.6L398.3,583.8M396.8,591.7L398.3,592.9M397.2,599.2L399.0,600.0M397.2,607.8L399.0,608.6M397.2,616.6L399.0,617.4M395.3,628.4L396.1,630.3M395.3,635.7L396.1,637.6M395.3,643.9L396.1,645.8M395.3,652.1L396.1,654.0M395.3,661.2L396.1,663.1M395.3,669.4L396.1,671.3M395.3,678.6L396.1,680.5M395.3,687.1L396.1,689.0M395.3,695.9L396.1,697.8M395.3,705.0L396.1,706.9M395.3,713.2L396.1,715.1M392.8,715.9L393.6,717.7M405.9,582.2L407.5,583.3M405.9,591.3L407.5,592.4M406.2,598.8L408.1,599.4M402.5,606.0L404.4,606.7M402.5,614.8L404.4,615.5M404.3,628.3L405.2,630.1M404.3,635.6L405.2,637.4M404.3,643.8L405.2,645.6M404.3,652.0L405.2,653.8M404.3,661.1L405.2,662.9M404.3,669.3L405.2,671.1M404.3,678.5L405.2,680.3M404.3,687.0L405.2,688.8M404.3,695.8L405.2,697.6M404.3,704.9L405.2,706.7M404.3,713.1L405.2,714.9M401.6,715.9L402.5,717.7M415.0,581.8L416.7,582.8M415.0,590.9L416.7,591.9M415.0,598.6L416.9,599.2M411.3,606.0L413.2,606.6M411.3,614.8L413.2,615.4M413.3,628.2L414.2,630.0M413.3,635.5L414.2,637.3M413.3,643.7L414.2,645.5M413.3,651.9L414.2,653.7M413.3,661.0L414.2,662.8M413.3,669.2L414.2,671.0M413.3,678.4L414.2,680.2M413.3,686.9L414.2,688.7M413.3,695.7L414.2,697.5M413.3,704.8L414.2,706.6M413.3,713.0L414.2,714.8M410.5,715.9L411.4,717.7M423.9,581.5L425.7,582.4M423.9,590.6L425.7,591.5M423.9,598.5L425.8,599.0M420.1,606.0L422.1,606.5M420.1,614.8L422.1,615.3M422.4,628.0L423.5,629.8M422.4,635.3L423.5,637.1M422.4,643.5L423.5,645.3M422.4,651.7L423.5,653.5M422.4,660.8L423.5,662.6M422.4,669.0L423.5,670.8M422.4,678.2L423.5,680.0M422.4,686.7L423.5,688.5M422.4,695.5L423.5,697.3M422.4,704.6L423.5,706.4M422.4,712.8L423.5,714.6M419.4,716.0L420.4,717.7M432.8,581.2L434.6,582.1M432.8,590.3L434.6,591.2M432.7,598.3L434.7,598.8M428.9,605.9L430.9,606.4M428.9,614.7L430.9,615.2M431.6,627.8L432.7,629.5M431.6,635.1L432.7,636.8M431.6,643.3L432.7,645.0M431.6,651.5L432.7,653.2M431.6,660.6L432.7,662.3M431.6,668.8L432.7,670.5M431.6,678.0L432.7,679.7M431.6,686.5L432.7,688.2M431.6,695.3L432.7,697.0M431.6,704.4L432.7,706.1M431.6,712.6L432.7,714.3M428.4,716.0L429.5,717.7M441.7,581.0L443.6,581.8M441.7,590.1L443.6,590.9M441.6,598.1L443.5,598.6M437.8,605.9L439.7,606.3M437.8,614.7L439.7,615.1M440.7,627.6L441.9,629.2M440.7,634.9L441.9,636.5M440.7,643.1L441.9,644.7M440.7,651.3L441.9,652.9M440.7,660.4L441.9,662.0M440.7,668.6L441.9,670.2M440.7,677.8L441.9,679.4M440.7,686.3L441.9,687.9M440.7,695.1L441.9,696.7M440.7,704.2L441.9,705.8M440.7,712.4L441.9,714.0M437.3,716.1L438.5,717.7M450.6,580.7L452.5,581.4M450.6,589.8L452.5,590.5M450.4,598.0L452.4,598.4M446.6,605.8L448.5,606.2M446.6,614.6L448.5,615.0M449.8,627.3L451.1,628.9M449.8,634.6L451.1,636.2M449.8,642.8L451.1,644.4M449.8,651.0L451.1,652.6M449.8,660.1L451.1,661.7M449.8,668.3L451.1,669.9M449.8,677.5L451.1,679.1M449.8,686.0L451.1,687.6M449.8,694.8L451.1,696.4M449.8,703.9L451.1,705.5M449.8,712.1L451.1,713.7M446.3,716.2L447.6,717.7M459.5,580.5L461.4,581.1M459.5,589.6L461.4,590.2M459.2,597.8L461.2,598.2M455.4,605.8L457.3,606.1M455.4,614.6L457.3,614.9M458.9,627.1L460.3,628.5M458.9,634.4L460.3,635.8M458.9,642.6L460.3,644.0M458.9,650.8L460.3,652.2M458.9,659.9L460.3,661.3M458.9,668.1L460.3,669.5M458.9,677.3L460.3,678.7M458.9,685.8L460.3,687.2M458.9,694.6L460.3,696.0M458.9,703.7L460.3,705.1M458.9,711.9L460.3,713.3M455.4,716.2L456.7,717.7M468.4,580.3L470.3,580.8M468.4,589.3L470.3,589.8M468.0,597.7L470.0,597.9M464.2,605.7L466.2,606.0M464.2,614.5L466.2,614.8M468.0,626.8L469.5,628.1M468.0,634.1L469.5,635.4M468.0,642.3L469.5,643.6M468.0,650.5L469.5,651.8M468.0,659.6L469.5,660.9M468.0,667.8L469.5,669.1M468.0,677.0L469.5,678.3M468.0,685.5L469.5,686.8M468.0,694.3L469.5,695.6M468.0,703.4L469.5,704.7M468.0,711.6L469.5,712.9M464.4,716.3L465.9,717.7M477.3,580.1L479.2,580.6M477.3,589.0L479.2,589.5M476.9,597.5L478.9,597.7M473.0,605.7L475.0,605.9M473.0,614.5L475.0,614.7M477.1,626.5L478.6,627.8M477.1,633.8L478.6,635.1M477.1,642.0L478.6,643.3M477.1,650.2L478.6,651.5M477.1,659.3L478.6,660.6M477.1,667.5L478.6,668.8M477.1,676.7L478.6,678.0M477.1,685.2L478.6,686.5M477.1,694.0L478.6,695.3M477.1,703.1L478.6,704.4M477.1,711.3L478.6,712.6M473.5,716.4L475.0,717.7M486.1,580.0L488.1,580.4M486.1,588.8L488.1,589.2M485.7,597.4L487.7,597.5M481.8,605.6L483.8,605.8M481.8,614.4L483.8,614.6M486.2,626.2L487.7,627.4M486.2,633.5L487.7,634.7M486.2,641.7L487.7,642.9M486.2,649.9L487.7,651.1M486.2,659.0L487.7,660.2M486.2,667.2L487.7,668.4M486.2,676.4L487.7,677.6M486.2,684.9L487.7,686.1M486.2,693.7L487.7,694.9M486.2,702.8L487.7,704.0M486.2,711.0L487.7,712.2M482.7,716.5L484.3,717.7M494.9,580.0L496.9,580.4M494.9,588.8L496.9,589.1M494.5,597.4L496.5,597.5M490.6,605.6L492.6,605.8M490.6,614.4L492.6,614.6M495.1,625.9L496.8,627.0M495.1,633.2L496.8,634.3M495.1,641.4L496.8,642.5M495.1,649.6L496.8,650.7M495.1,658.7L496.8,659.8M495.1,666.9L496.8,668.0M495.1,676.1L496.8,677.2M495.1,684.6L496.8,685.7M495.1,693.4L496.8,694.5M495.1,702.5L496.8,703.6M495.1,710.7L496.8,711.8M491.8,716.6L493.4,717.7M503.7,580.1L505.7,580.4M503.7,588.7L505.7,589.0M503.3,597.3L505.3,597.5M499.4,605.6L501.4,605.8M499.4,614.4L501.4,614.6M504.1,625.6L505.8,626.7M504.1,632.9L505.8,634.0M504.1,641.1L505.8,642.2M504.1,649.3L505.8,650.4M504.1,658.4L505.8,659.5M504.1,666.6L505.8,667.7M504.1,675.8L505.8,676.9M504.1,684.3L505.8,685.4M504.1,693.1L505.8,694.2M504.1,702.2L505.8,703.3M504.1,710.4L505.8,711.5M501.0,716.6L502.6,717.7M512.5,580.1L514.5,580.3M512.5,588.6L514.5,588.9M512.1,597.3L514.1,597.5M508.2,605.6L510.2,605.8M508.2,614.4L510.2,614.6M513.1,625.4L514.8,626.4M513.1,632.7L514.8,633.7M513.1,640.9L514.8,641.9M513.1,649.1L514.8,650.1M513.1,658.2L514.8,659.2M513.1,666.4L514.8,667.4M513.1,675.6L514.8,676.6M513.1,684.1L514.8,685.1M513.1,692.9L514.8,693.9M513.1,702.0L514.8,703.0M513.1,710.2L514.8,711.2M510.2,716.7L511.9,717.7M521.4,580.1L523.3,580.3M521.4,588.5L523.3,588.8M520.9,597.3L522.9,597.4M517.0,605.6L519.0,605.8M517.0,614.4L519.0,614.6M522.0,625.1L523.8,626.0M522.0,632.4L523.8,633.3M522.0,640.6L523.8,641.5M522.0,648.8L523.8,649.7M522.0,657.9L523.8,658.8M522.0,666.1L523.8,667.0M522.0,675.3L523.8,676.2M522.0,683.8L523.8,684.7M522.0,692.6L523.8,693.5M522.0,701.7L523.8,702.6M522.0,709.9L523.8,710.8M519.5,716.8L521.3,717.7M530.2,580.1L532.1,580.3M530.2,588.5L532.1,588.7M529.7,597.3L531.7,597.4M525.8,605.6L527.8,605.7M525.8,614.4L527.8,614.5M531.0,624.8L532.8,625.7M531.0,632.1L532.8,633.0M531.0,640.3L532.8,641.2M531.0,648.5L532.8,649.4M531.0,657.6L532.8,658.5M531.0,665.8L532.8,666.7M531.0,675.0L532.8,675.9M531.0,683.5L532.8,684.4M531.0,692.3L532.8,693.2M531.0,701.4L532.8,702.3M531.0,709.6L532.8,710.5M528.9,716.8L530.7,717.7M539.0,580.1L541.0,580.3M539.0,588.4L541.0,588.6M538.5,597.3L540.5,597.4M534.6,605.6L536.6,605.7M534.6,614.4L536.6,614.5M539.9,624.5L541.7,625.3M539.9,631.8L541.7,632.6M539.9,640.0L541.7,640.8M539.9,648.2L541.7,649.0M539.9,657.3L541.7,658.1M539.9,665.5L541.7,666.3M539.9,674.7L541.7,675.5M539.9,683.2L541.7,684.0M539.9,692.0L541.7,692.8M539.9,701.1L541.7,701.9M539.9,709.3L541.7,710.1M538.5,716.9L540.3,717.7M547.8,580.2L549.8,580.4M547.8,588.3L549.8,588.5M547.3,597.2L549.3,597.4M543.4,605.6L545.4,605.7M543.4,614.4L545.4,614.5M548.8,624.2L550.7,624.9M548.8,631.5L550.7,632.2M548.8,639.7L550.7,640.4M548.8,647.9L550.7,648.6M548.8,657.0L550.7,657.7M548.8,665.2L550.7,665.9M548.8,674.4L550.7,675.1M548.8,682.9L550.7,683.6M548.8,691.7L550.7,692.4M548.8,700.8L550.7,701.5M548.8,709.0L550.7,709.7M548.2,717.0L550.0,717.7M556.6,580.3L558.6,580.5M556.6,588.3L558.6,588.5M556.1,597.2L558.1,597.3M552.2,605.6L554.2,605.7M552.2,614.4L554.2,614.5M557.7,624.1L559.6,624.7M557.7,631.4L559.6,632.0M557.7,639.6L559.6,640.2M557.7,647.8L559.6,648.4M557.7,656.9L559.6,657.5M557.7,665.1L559.6,665.7M557.7,674.3L559.6,674.9M557.7,682.8L559.6,683.4M557.7,691.6L559.6,692.2M557.7,700.7L559.6,701.3M557.7,708.9L559.6,709.5M557.6,717.0L559.5,717.7M565.4,580.4L567.4,580.6M565.4,588.3L567.4,588.4M564.9,597.2L566.9,597.3M561.0,605.6L563.0,605.7M561.0,614.4L563.0,614.5M566.5,623.9L568.4,624.6M566.5,631.2L568.4,631.9M566.5,639.4L568.4,640.1M566.5,647.6L568.4,648.3M566.5,656.7L568.4,657.4M566.5,664.9L568.4,665.6M566.5,674.1L568.4,674.8M566.5,682.6L568.4,683.3M566.5,691.4L568.4,692.1M566.5,700.5L568.4,701.2M566.5,708.7L568.4,709.4M566.5,716.9L568.4,717.6" stroke="#2a50b4" stroke-width="1.2" fill="none" stroke-linecap="round"/><path d="M574.2,580.6L576.2,580.7M574.2,588.2L576.2,588.4M573.7,597.2L575.7,597.3M569.8,605.6L571.8,605.7M569.8,614.4L571.8,614.5M575.3,623.8L577.2,624.4M575.3,631.1L577.2,631.7M575.3,639.3L577.2,639.9M575.3,647.5L577.2,648.1M575.3,656.6L577.2,657.2M575.3,664.8L577.2,665.4M575.3,674.0L577.2,674.6M575.3,682.5L577.2,683.1M575.3,691.3L577.2,691.9M575.3,700.4L577.2,701.0M575.3,708.6L577.2,709.2M575.3,716.8L577.2,717.4" stroke="#2a53b4" stroke-width="1.2" fill="none" stroke-linecap="round"/><path d="M583.0,580.7L585.0,580.9M583.0,588.2L585.0,588.4M582.5,597.2L584.5,597.3M578.6,605.6L580.6,605.7M578.6,614.4L580.6,614.5M584.0,623.6L585.9,624.2M584.0,630.9L585.9,631.5M584.0,639.1L585.9,639.7M584.0,647.3L585.9,647.9M584.0,656.4L585.9,657.0M584.0,664.6L585.9,665.2M584.0,673.8L585.9,674.4M584.0,682.3L585.9,682.9M584.0,691.1L585.9,691.7M584.0,700.2L585.9,700.8M584.0,708.4L585.9,709.0M584.0,716.6L585.9,717.2" stroke="#2b56b5" stroke-width="1.2" fill="none" stroke-linecap="round"/><path d="M591.8,580.9L593.8,581.0M591.8,588.2L593.8,588.3M591.3,597.1L593.3,597.2M587.4,605.6L589.4,605.7M587.4,614.4L589.4,614.5M592.7,623.4L594.6,624.0M592.7,630.7L594.6,631.3M592.7,638.9L594.6,639.5M592.7,647.1L594.6,647.7M592.7,656.2L594.6,656.8M592.7,664.4L594.6,665.0M592.7,673.6L594.6,674.2M592.7,682.1L594.6,682.7M592.7,690.9L594.6,691.5M592.7,700.0L594.6,700.6M592.7,708.2L594.6,708.8M592.7,716.4L594.6,717.0" stroke="#2b5ab6" stroke-width="1.2" fill="none" stroke-linecap="round"/><path d="M600.6,581.0L602.6,581.1M600.6,588.2L602.6,588.3M600.1,597.1L602.1,597.2M596.2,605.6L598.2,605.6M596.2,614.4L598.2,614.4M601.4,623.3L603.4,623.8M601.4,630.6L603.4,631.1M601.4,638.8L603.4,639.3M601.4,647.0L603.4,647.5M601.4,656.1L603.4,656.6M601.4,664.3L603.4,664.8M601.4,673.5L603.4,674.0M601.4,682.0L603.4,682.5M601.4,690.8L603.4,691.3M601.4,699.9L603.4,700.4M601.4,708.1L603.4,708.6M601.4,716.3L603.4,716.8" stroke="#2c5eb7" stroke-width="1.2" fill="none" stroke-linecap="round"/><path d="M609.4,581.2L611.4,581.3M609.4,588.1L611.4,588.2M608.9,597.1L610.9,597.2M605.0,605.6L607.0,605.6M605.0,614.4L607.0,614.4M610.1,623.1L612.1,623.6M610.1,630.4L612.1,630.9M610.1,638.6L612.1,639.1M610.1,646.8L612.1,647.3M610.1,655.9L612.1,656.4M610.1,664.1L612.1,664.6M610.1,673.3L612.1,673.8M610.1,681.8L612.1,682.3M610.1,690.6L612.1,691.1M610.1,699.7L612.1,700.2M610.1,707.9L612.1,708.4M610.1,716.1L612.1,716.6" stroke="#2c61b9" stroke-width="1.2" fill="none" stroke-linecap="round"/><path d="M618.2,581.3L620.2,581.4M618.2,588.1L620.2,588.2M617.7,597.1L619.7,597.2M613.8,605.6L615.8,605.6M613.8,614.4L615.8,614.4M618.9,623.0L620.8,623.4M618.9,630.3L620.8,630.7M618.9,638.5L620.8,638.9M618.9,646.7L620.8,647.1M618.9,655.8L620.8,656.2M618.9,664.0L620.8,664.4M618.9,673.2L620.8,673.6M618.9,681.7L620.8,682.1M618.9,690.5L620.8,690.9M618.9,699.6L620.8,700.0M618.9,707.8L620.8,708.2M618.9,716.0L620.8,716.4" stroke="#2d65ba" stroke-width="1.2" fill="none" stroke-linecap="round"/><path d="M627.0,581.4L629.0,581.5M627.0,588.1L629.0,588.2M626.5,597.1L628.5,597.1M622.6,605.5L624.6,605.6M622.6,614.3L624.6,614.4M627.6,622.8L629.6,623.1M627.6,630.1L629.6,630.4M627.6,638.3L629.6,638.6M627.6,646.5L629.6,646.8M627.6,655.6L629.6,655.9M627.6,663.8L629.6,664.1M627.6,673.0L629.6,673.3M627.6,681.5L629.6,681.8M627.6,690.3L629.6,690.6M627.6,699.4L629.6,699.7M627.6,707.6L629.6,707.9M627.6,715.8L629.6,716.1" stroke="#2d68bb" stroke-width="1.2" fill="none" stroke-linecap="round"/><path d="M635.8,581.6L637.8,581.7M635.8,588.0L637.8,588.1M635.3,597.1L637.3,597.1M631.4,605.5L633.4,605.6M631.4,614.3L633.4,614.4M636.3,622.6L638.3,622.9M636.3,629.9L638.3,630.2M636.3,638.1L638.3,638.4M636.3,646.3L638.3,646.6M636.3,655.4L638.3,655.7M636.3,663.6L638.3,663.9M636.3,672.8L638.3,673.1M636.3,681.3L638.3,681.6M636.3,690.1L638.3,690.4M636.3,699.2L638.3,699.5M636.3,707.4L638.3,707.7M636.3,715.6L638.3,715.9" stroke="#2e6cbc" stroke-width="1.2" fill="none" stroke-linecap="round"/><path d="M644.6,581.7L646.6,581.8M644.6,588.0L646.6,588.1M644.1,597.0L646.1,597.1M640.2,605.5L642.2,605.6M640.2,614.3L642.2,614.4M645.0,622.4L647.0,622.6M645.0,629.7L647.0,629.9M645.0,637.9L647.0,638.1M645.0,646.1L647.0,646.3M645.0,655.2L647.0,655.4M645.0,663.4L647.0,663.6M645.0,672.6L647.0,672.8M645.0,681.1L647.0,681.3M645.0,689.9L647.0,690.1M645.0,699.0L647.0,699.2M645.0,707.2L647.0,707.4M645.0,715.4L647.0,715.6" stroke="#2e70bd" stroke-width="1.2" fill="none" stroke-linecap="round"/><path d="M653.4,581.9L655.4,581.9M653.4,588.0L655.4,588.0M652.9,597.0L654.9,597.1M649.0,605.5L651.0,605.6M649.0,614.3L651.0,614.4M653.7,622.2L655.7,622.4M653.7,629.5L655.7,629.7M653.7,637.7L655.7,637.9M653.7,645.9L655.7,646.1M653.7,655.0L655.7,655.2M653.7,663.2L655.7,663.4M653.7,672.4L655.7,672.6M653.7,680.9L655.7,681.1M653.7,689.7L655.7,689.9M653.7,698.8L655.7,699.0M653.7,707.0L655.7,707.2M653.7,715.2L655.7,715.4" stroke="#2f73be" stroke-width="1.2" fill="none" stroke-linecap="round"/><path d="M662.2,582.0L664.2,582.1M662.2,587.9L664.2,588.0M661.7,597.0L663.7,597.0M657.8,605.5L659.8,605.6M657.8,614.3L659.8,614.4M662.4,622.0L664.4,622.2M662.4,629.3L664.4,629.5M662.4,637.5L664.4,637.7M662.4,645.7L664.4,645.9M662.4,654.8L664.4,655.0M662.4,663.0L664.4,663.2M662.4,672.2L664.4,672.4M662.4,680.7L664.4,680.9M662.4,689.5L664.4,689.7M662.4,698.6L664.4,698.8M662.4,706.8L664.4,707.0M662.4,715.0L664.4,715.2" stroke="#2f77bf" stroke-width="1.2" fill="none" stroke-linecap="round"/><path d="M671.0,582.1L673.0,582.2M671.0,587.9L673.0,588.0M670.5,597.0L672.5,597.0M666.6,605.5L668.6,605.5M666.6,614.3L668.6,614.3M671.1,621.9L673.1,622.0M671.1,629.2L673.1,629.3M671.1,637.4L673.1,637.5M671.1,645.6L673.1,645.7M671.1,654.7L673.1,654.8M671.1,662.9L673.1,663.0M671.1,672.1L673.1,672.2M671.1,680.6L673.1,680.7M671.1,689.4L673.1,689.5M671.1,698.5L673.1,698.6M671.1,706.7L673.1,706.8M671.1,714.9L673.1,715.0" stroke="#307ac0" stroke-width="1.2" fill="none" stroke-linecap="round"/><path d="M679.8,582.3L681.8,582.3M679.8,587.9L681.8,587.9M679.3,597.0L681.3,597.0M675.4,605.5L677.4,605.5M675.4,614.3L677.4,614.3M679.8,621.6L681.8,621.6M679.8,628.9L681.8,628.9M679.8,637.1L681.8,637.1M679.8,645.3L681.8,645.3M679.8,654.4L681.8,654.4M679.8,662.6L681.8,662.6M679.8,671.8L681.8,671.8M679.8,680.3L681.8,680.3M679.8,689.1L681.8,689.1M679.8,698.2L681.8,698.2M679.8,706.4L681.8,706.4M679.8,714.6L681.8,714.6" stroke="#317ec1" stroke-width="1.2" fill="none" stroke-linecap="round"/><path d="M688.6,582.4L690.6,582.5M688.6,587.9L690.6,587.9M688.1,596.9L690.1,597.0M684.2,605.5L686.2,605.5M684.2,614.3L686.2,614.3M688.5,621.3L690.5,621.2M688.5,628.6L690.5,628.5M688.5,636.8L690.5,636.7M688.5,645.0L690.5,644.9M688.5,654.1L690.5,654.0M688.5,662.3L690.5,662.2M688.5,671.5L690.5,671.4M688.5,680.0L690.5,679.9M688.5,688.8L690.5,688.7M688.5,697.9L690.5,697.8M688.5,706.1L690.5,706.0M688.5,714.3L690.5,714.2" stroke="#3181c2" stroke-width="0.95" fill="none" stroke-linecap="round"/><path d="M697.4,582.6L699.4,582.6M697.4,587.8L699.4,587.8M696.9,596.9L698.9,596.9M693.0,605.5L695.0,605.5M693.0,614.3L695.0,614.3M697.1,621.1L699.1,620.9M697.1,628.4L699.1,628.2M697.1,636.6L699.1,636.4M697.1,644.8L699.1,644.6M697.1,653.9L699.1,653.7M697.1,662.1L699.1,661.9M697.1,671.3L699.1,671.1M697.1,679.8L699.1,679.6M697.1,688.6L699.1,688.4M697.1,697.7L699.1,697.5M697.1,705.9L699.1,705.7M697.1,714.1L699.1,713.9" stroke="#3285c3" stroke-width="0.95" fill="none" stroke-linecap="round"/><path d="M706.2,582.7L708.2,582.7M706.2,587.8L708.2,587.8M705.7,596.9L707.7,596.9M701.8,605.5L703.8,605.5M701.8,614.3L703.8,614.3M705.8,620.8L707.8,620.5M705.8,628.1L707.8,627.8M705.8,636.3L707.8,636.0M705.8,644.5L707.8,644.3M705.8,653.7L707.8,653.4M705.8,661.9L707.8,661.7M705.8,671.2L707.8,670.9M705.8,679.7L707.8,679.5M705.8,688.5L707.8,688.3M705.8,697.7L707.8,697.5M705.8,705.9L707.8,705.7M705.8,714.1L707.8,714.0" stroke="#3289c4" stroke-width="0.95" fill="none" stroke-linecap="round"/><path d="M715.0,582.9L717.0,582.9M715.0,587.8L717.0,587.8M714.5,596.9L716.5,596.9M710.6,605.5L712.6,605.5M710.6,614.3L712.6,614.3M714.4,620.5L716.4,620.1M714.4,627.8L716.4,627.4M714.4,636.0L716.4,635.6M714.4,644.2L716.4,643.8M714.4,653.4L716.4,653.0M714.4,661.6L716.4,661.3M714.4,670.9L716.4,670.6M714.4,679.4L716.4,679.1M714.5,688.3L716.4,688.0M714.5,697.4L716.4,697.2M714.5,705.7L716.5,705.4M714.5,714.0L716.5,713.7" stroke="#338cc5" stroke-width="0.95" fill="none" stroke-linecap="round"/><path d="M723.8,583.1L725.8,583.1M723.8,587.8L725.8,587.8M723.3,596.9L725.3,596.8M719.4,605.5L721.4,605.5M719.4,614.3L721.4,614.3M723.0,620.2L724.9,619.6M723.0,627.5L724.9,626.9M723.0,635.7L724.9,635.1M723.0,643.9L724.9,643.4M723.0,653.1L725.0,652.6M723.0,661.3L725.0,660.9M723.1,670.6L725.0,670.2M723.1,679.2L725.0,678.8M723.1,688.1L725.1,687.7M723.1,697.2L725.1,696.9M723.1,705.5L725.1,705.2M723.1,713.8L725.1,713.5" stroke="#3390c6" stroke-width="0.95" fill="none" stroke-linecap="round"/><path d="M732.6,583.5L734.6,583.5M732.6,587.8L734.6,587.8M732.1,596.8L734.1,596.8M728.2,605.5L730.2,605.5M728.2,614.3L730.2,614.3M731.6,619.9L733.5,619.2M731.6,627.2L733.5,626.5M731.6,635.4L733.5,634.7M731.6,643.6L733.5,643.0M731.6,652.8L733.5,652.2M731.7,661.1L733.6,660.5M731.7,670.4L733.6,669.8M731.7,679.0L733.6,678.5M731.7,687.8L733.7,687.4M731.7,697.0L733.7,696.6M731.8,705.3L733.7,704.9M731.8,713.6L733.7,713.2" stroke="#3493c7" stroke-width="0.95" fill="none" stroke-linecap="round"/><path d="M741.4,584.1L743.4,584.1M741.4,587.8L743.4,587.8M740.9,596.8L742.9,596.8M737.0,605.5L739.0,605.4M740.1,612.3L742.0,611.5M740.1,619.6L742.0,618.8M740.1,626.9L742.0,626.1M740.1,635.1L742.0,634.3M740.2,643.4L742.0,642.6M740.2,652.6L742.1,651.8M740.3,660.8L742.1,660.2M740.3,670.1L742.2,669.5M740.3,678.7L742.2,678.1M740.4,687.6L742.3,687.1M740.4,696.8L742.3,696.3M740.4,705.1L742.3,704.6M740.4,713.4L742.4,713.0" stroke="#3497c8" stroke-width="0.95" fill="none" stroke-linecap="round"/><path d="M750.2,584.7L752.2,584.7M750.2,587.8L752.2,587.8M749.7,596.8L751.7,596.8M745.8,605.5L747.8,605.4M748.7,612.0L750.5,611.1M748.7,619.3L750.5,618.4M748.7,626.6L750.5,625.7M748.7,634.8L750.5,633.9M748.7,643.1L750.5,642.2M748.8,652.3L750.6,651.5M748.8,660.6L750.7,659.8M748.9,669.9L750.7,669.2M748.9,678.5L750.8,677.8M749.0,687.4L750.8,686.8M749.0,696.6L750.9,696.0M749.0,705.0L750.9,704.4M749.1,713.3L751.0,712.7" stroke="#359bc9" stroke-width="0.95" fill="none" stroke-linecap="round"/><path d="M759.0,585.3L761.0,585.3M759.0,587.8L761.0,587.8M758.5,596.8L760.5,596.7M754.6,605.5L756.6,605.4M757.2,611.7L758.9,610.7M757.2,619.0L758.9,618.0M757.2,626.3L758.9,625.3M757.2,634.5L758.9,633.5M757.3,642.8L759.0,641.8M757.3,652.0L759.1,651.1M757.4,660.4L759.2,659.4M757.4,669.7L759.3,668.8M757.5,678.3L759.3,677.5M757.6,687.2L759.4,686.5M757.6,696.4L759.5,695.7M757.6,704.8L759.5,704.1M757.7,713.1L759.6,712.5" stroke="#359eca" stroke-width="0.95" fill="none" stroke-linecap="round"/><path d="M767.8,585.9L769.8,585.9M767.8,587.8L769.8,587.8M767.3,596.8L769.3,596.7M763.4,605.5L765.4,605.4M765.7,611.5L767.3,610.3M765.7,618.8L767.3,617.6M765.7,626.1L767.3,624.9M765.7,634.3L767.3,633.1M765.8,642.6L767.4,641.5M765.9,651.8L767.5,650.7M765.9,660.1L767.6,659.1M766.0,669.5L767.8,668.5M766.1,678.1L767.8,677.2M766.1,687.0L767.9,686.2M766.2,696.3L768.0,695.5M766.3,704.6L768.1,703.8M766.3,712.9L768.2,712.2" stroke="#36a2cb" stroke-width="0.95" fill="none" stroke-linecap="round"/><path d="M776.6,586.5L778.6,586.5M776.6,587.8L778.6,587.8M776.1,596.7L778.1,596.7M772.2,605.5L774.2,605.4M774.2,611.3L775.7,610.0M774.2,618.6L775.7,617.3M774.2,625.9L775.7,624.6M774.2,634.1L775.7,632.8M774.3,642.4L775.8,641.1M774.4,651.6L776.0,650.4M774.5,659.9L776.1,658.8M774.6,669.3L776.2,668.2M774.6,677.9L776.4,676.9M774.7,686.8L776.5,685.9M774.8,696.1L776.6,695.2M774.9,704.4L776.7,703.6M774.9,712.8L776.8,712.0" stroke="#36a5cc" stroke-width="0.95" fill="none" stroke-linecap="round"/><path d="M785.4,587.5L787.4,587.5M785.4,587.8L787.4,587.8M784.9,596.7L786.9,596.7M781.0,605.4L783.0,605.4M782.7,611.1L784.1,609.7M782.7,618.4L784.1,617.0M782.7,625.7L784.1,624.3M782.7,633.9L784.1,632.5M782.8,642.2L784.2,640.8M782.9,651.4L784.4,650.1M783.0,659.8L784.5,658.5M783.1,669.1L784.7,667.9M783.2,677.7L784.8,676.6M783.3,686.7L785.0,685.6M783.4,695.9L785.1,695.0M783.5,704.3L785.2,703.4M783.5,712.6L785.3,711.8" stroke="#37a9cd" stroke-width="0.95" fill="none" stroke-linecap="round"/><path d="M794.2,588.8L796.2,588.8M794.2,587.8L796.2,587.8M793.7,596.7L795.7,596.6M789.8,605.4L791.8,605.4M791.0,610.8L792.2,609.2M791.0,618.1L792.2,616.5M791.0,625.4L792.2,623.8M791.0,633.6L792.2,632.0M791.1,641.9L792.4,640.4M791.2,651.1L792.6,649.7M791.4,659.5L792.8,658.1M791.5,668.8L793.0,667.5M791.6,677.5L793.2,676.2M791.8,686.4L793.4,685.2M791.9,695.7L793.5,694.6M792.0,704.0L793.7,703.0M792.1,712.4L793.8,711.4" stroke="#38adce" stroke-width="0.95" fill="none" stroke-linecap="round"/><path d="M802.5,596.7L804.5,596.6M798.6,605.4L800.6,605.4M799.2,610.6L800.2,608.9M799.2,617.9L800.2,616.2M799.2,625.2L800.2,623.5M799.2,633.4L800.2,631.7M799.4,641.7L800.5,640.0M799.6,650.9L800.8,649.3M799.7,659.2L801.0,657.7M799.9,668.6L801.2,667.1M800.1,677.2L801.5,675.8M800.2,686.2L801.7,684.8M800.4,695.5L801.9,694.2M800.5,703.8L802.1,702.6M800.6,712.2L802.3,711.1" stroke="#38b0cf" stroke-width="0.95" fill="none" stroke-linecap="round"/><path d="M811.3,596.7L813.3,596.6M807.4,605.4L809.4,605.3M807.5,610.4L808.3,608.5M807.5,617.7L808.3,615.8M807.5,625.0L808.3,623.1M807.5,633.2L808.3,631.3M807.7,641.4L808.6,639.6M807.9,650.7L808.9,648.9M808.1,659.0L809.2,657.3M808.3,668.3L809.5,666.7M808.5,677.0L809.8,675.4M808.7,685.9L810.1,684.5M808.9,695.2L810.3,693.8M809.0,703.6L810.6,702.3M809.2,712.0L810.8,710.7" stroke="#39b4d0" stroke-width="0.95" fill="none" stroke-linecap="round"/><path d="M820.1,596.7L822.1,596.6M816.2,605.4L818.2,605.3M815.7,610.1L816.2,608.2M815.7,617.4L816.2,615.5M815.7,624.7L816.2,622.8M815.7,632.9L816.2,631.0M815.9,641.2L816.5,639.3M816.2,650.4L816.9,648.5M816.4,658.7L817.2,656.9M816.7,668.0L817.6,666.3M816.9,676.7L818.0,675.0M817.1,685.6L818.3,684.0M817.4,694.9L818.6,693.4M817.6,703.3L818.9,701.8M817.7,711.7L819.2,710.3" stroke="#39b7d1" stroke-width="0.95" fill="none" stroke-linecap="round"/><path d="M823.6,610.0L823.8,608.0M823.6,617.3L823.8,615.3M823.6,624.6L823.8,622.6M823.6,632.8L823.8,630.8M823.9,641.0L824.1,639.0M824.2,650.2L824.6,648.2M824.5,658.5L825.1,656.5M824.9,667.8L825.5,665.9M825.1,676.4L826.0,674.5M825.4,685.3L826.4,683.5M825.7,694.6L826.8,692.9M826.0,702.9L827.2,701.3M826.2,711.3L827.5,709.8M831.7,610.0L831.4,608.0M831.7,617.3L831.4,615.3M831.7,624.6L831.4,622.6M831.7,632.8L831.4,630.8M831.7,641.0L831.4,639.0M831.7,650.1L831.4,648.1M831.7,658.3L831.4,656.3M831.7,667.5L831.4,665.5M831.7,676.0L831.4,674.0M831.7,684.8L831.4,682.8M831.7,693.9L831.4,691.9M831.7,702.1L831.4,700.1M831.7,710.3L831.4,708.3M840.0,596.9L838.0,596.9M840.0,605.5L838.0,605.5M839.7,610.2L839.1,608.3M839.7,617.5L839.1,615.6M839.7,624.8L839.1,622.9M839.7,633.0L839.1,631.1M839.7,641.2L839.1,639.3M839.7,650.3L839.1,648.4M839.7,658.5L839.1,656.6M839.7,667.7L839.1,665.8M839.7,676.2L839.1,674.3M839.7,685.0L839.1,683.1M839.7,694.1L839.1,692.2M839.7,702.3L839.1,700.4M839.7,710.5L839.1,708.6M848.8,596.9L846.8,596.9M848.8,605.5L846.8,605.5M848.1,610.4L847.2,608.5M848.1,617.7L847.2,615.8M848.1,625.0L847.2,623.1M848.1,633.2L847.2,631.3M848.1,641.4L847.2,639.5M848.1,650.5L847.2,648.6M848.1,658.7L847.2,656.8M848.1,667.9L847.2,666.0M848.1,676.4L847.2,674.5M848.1,685.2L847.2,683.3M848.1,694.3L847.2,692.4M848.1,702.5L847.2,700.6M848.1,710.7L847.2,708.8M857.6,596.9L855.6,596.9M857.6,605.5L855.6,605.5M856.6,610.5L855.7,608.7M856.6,617.8L855.7,616.0M856.6,625.1L855.7,623.3M856.6,633.3L855.7,631.5M856.6,641.5L855.7,639.7M856.6,650.6L855.7,648.8M856.6,658.8L855.7,657.0M856.6,668.0L855.7,666.2M856.6,676.5L855.7,674.7M856.6,685.3L855.7,683.5M856.6,694.4L855.7,692.6M856.6,702.6L855.7,700.8M856.6,710.8L855.7,709.0M866.4,596.9L864.4,596.9M866.4,605.5L864.4,605.5M865.2,610.6L864.1,608.9M865.2,617.9L864.1,616.2M865.2,625.2L864.1,623.5M865.2,633.4L864.1,631.7M865.2,641.6L864.1,639.9M865.2,650.7L864.1,649.0M865.2,658.9L864.1,657.2M865.2,668.1L864.1,666.4M865.2,676.6L864.1,674.9M865.2,685.4L864.1,683.7M865.2,694.5L864.1,692.8M865.2,702.7L864.1,701.0M865.2,710.9L864.1,709.2" stroke="#3abad2" stroke-width="0.95" fill="none" stroke-linecap="round"/><polygon points="344.4,574.2 352.0,574.3 360.0,574.3 368.0,574.4 376.0,574.4 384.0,574.5 392.0,574.5 400.0,574.6 408.0,574.7 416.0,574.7 424.0,574.8 432.0,574.8 440.0,574.9 448.0,574.9 456.0,575.0 464.0,575.1 472.0,575.1 480.0,575.2 488.0,575.2 496.0,575.3 504.0,575.3 512.0,575.4 520.0,575.5 528.0,575.5 536.0,575.6 544.0,575.6 552.0,575.7 560.0,575.8 568.0,575.9 576.0,576.0 584.0,576.0 592.0,576.1 600.0,576.2 608.0,576.3 616.0,576.4 624.0,576.4 632.0,576.5 640.0,576.6 648.0,576.7 656.0,576.8 664.0,576.8 672.0,576.9 680.0,577.0 688.0,577.1 696.0,577.2 704.0,577.2 712.0,577.3 720.0,577.4 728.0,577.6 736.0,577.8 744.0,578.0 752.0,578.2 760.0,578.4 768.0,578.5 776.0,578.8 784.0,579.2 792.0,579.6 800.0,579.9 808.0,580.3 816.0,580.9 824.0,581.4 832.0,582.0 840.0,582.6 848.0,583.2 856.0,584.4 864.0,585.6 872.0,587.3 876.6,588.2 876.6,588.9 872.0,589.2 864.0,589.7 862.0,589.8 856.0,590.5 848.0,591.5 847.7,591.5 840.0,593.7 835.0,595.1 832.0,596.5 826.8,598.8 824.0,597.6 818.5,595.1 816.0,594.0 808.0,590.7 807.6,590.5 800.0,588.6 793.0,586.9 792.0,586.8 784.0,585.6 776.0,584.4 774.7,584.2 768.0,583.7 760.0,583.2 752.0,582.7 744.0,582.1 736.0,581.6 728.0,581.0 720.0,580.5 712.0,580.3 704.0,580.2 696.0,580.0 688.0,579.9 680.0,579.7 672.0,579.6 664.0,579.4 656.0,579.3 648.0,579.1 640.0,578.9 632.0,578.8 624.0,578.6 616.0,578.5 608.0,578.3 600.0,578.2 592.0,578.0 584.0,577.9 576.0,577.7 568.0,577.5 560.0,577.4 552.0,577.2 544.0,577.1 540.0,577.0 536.0,577.0 528.0,576.9 520.0,576.8 512.0,576.7 504.0,576.6 496.0,576.6 488.0,576.5 480.0,576.4 472.0,576.3 464.0,576.2 456.0,576.1 448.0,576.1 440.0,576.0 432.0,575.9 424.0,575.8 416.0,575.7 408.0,575.7 400.0,575.6 392.0,575.5 384.0,575.4 376.0,575.3 368.0,575.2 360.0,575.2 352.0,575.1 344.4,575.0" fill="url(#rgC)"/><polygon points="826.8,581.5 835.0,582.1 847.7,583.0 862.0,585.0 876.6,588.0 876.6,588.9 862.0,589.8 847.7,591.5 835.0,595.1 826.8,598.8" fill="url(#rgCr)"/><defs><linearGradient id="fadeC" x1="0" x2="0" y1="580" y2="600" gradientUnits="userSpaceOnUse"><stop offset="0" stop-color="#f2e61c" stop-opacity=".0"/><stop offset="1" stop-color="#f2e61c" stop-opacity="0"/></linearGradient></defs><polygon points="700.0,615.0 720.0,614.1 740.0,613.0 765.6,612.1 793.0,609.7 811.2,607.9 822.2,606.1 830.0,607.5 876.6,609.2 876.6,613.5 840.0,612.2 826.0,612.0 811.0,612.3 793.0,613.6 765.0,615.6 740.0,616.2 700.0,616.6" fill="url(#rgC2)"/><polygon points="830,607.5 876.6,609.2 876.6,613.2 840,612.2 830,612" fill="url(#rgC2r)"/><path d="M344.4,596.5H876.6" stroke="#222" stroke-width=".85"/><path d="M700,596.5H876.6" stroke="#6fd6e0" stroke-width=".5" stroke-dasharray="3 4"/><path d="M344.4,706.6H876.6" stroke="#222" stroke-width=".9"/><polyline points="344.4,574.2 352.0,574.3 360.0,574.3 368.0,574.4 376.0,574.4 384.0,574.5 392.0,574.5 400.0,574.6 408.0,574.7 416.0,574.7 424.0,574.8 432.0,574.8 440.0,574.9 448.0,574.9 456.0,575.0 464.0,575.1 472.0,575.1 480.0,575.2 488.0,575.2 496.0,575.3 504.0,575.3 512.0,575.4 520.0,575.5 528.0,575.5 536.0,575.6 544.0,575.6 552.0,575.7 560.0,575.8 568.0,575.9 576.0,576.0 584.0,576.0 592.0,576.1 600.0,576.2 608.0,576.3 616.0,576.4 624.0,576.4 632.0,576.5 640.0,576.6 648.0,576.7 656.0,576.8 664.0,576.8 672.0,576.9 680.0,577.0 688.0,577.1 696.0,577.2 704.0,577.2 712.0,577.3 720.0,577.4 728.0,577.6 736.0,577.8 744.0,578.0 752.0,578.2 760.0,578.4 768.0,578.5 776.0,578.8 784.0,579.2 792.0,579.6 800.0,579.9 808.0,580.3 816.0,580.9 824.0,581.4 832.0,582.0 840.0,582.6 848.0,583.2 856.0,584.4 864.0,585.6 872.0,587.3 876.6,588.2" fill="none" stroke="#e8302a" stroke-width=".9"/><polyline points="344.4,575.0 352.0,575.1 368.0,575.2 384.0,575.4 400.0,575.6 416.0,575.7 432.0,575.9 448.0,576.1 464.0,576.2 480.0,576.4 496.0,576.6 512.0,576.7 528.0,576.9 540.0,577.0 544.0,577.1 560.0,577.4 576.0,577.7 592.0,578.0 608.0,578.3 624.0,578.6 640.0,578.9 656.0,579.3 672.0,579.6 688.0,579.9 704.0,580.2 720.0,580.5 774.7,584.2 793.0,586.9 807.6,590.5 818.5,595.1 826.8,598.8 835.0,595.1 847.7,591.5 862.0,589.8 876.6,588.9" fill="none" stroke="#d0282a" stroke-width=".7"/><polyline points="344.4,618.5 352.0,618.5 364.0,618.4 376.0,618.4 388.0,618.3 400.0,618.3 412.0,618.2 424.0,618.2 436.0,618.2 448.0,618.1 460.0,618.1 472.0,618.0 477.0,618.0 484.0,617.9 496.0,617.7 508.0,617.5 520.0,617.3 532.0,617.1 540.0,617.0 544.0,617.0 556.0,616.9 568.0,616.8 580.0,616.7 592.0,616.6 604.0,616.5 616.0,616.5 628.0,616.4 640.0,616.3 652.0,616.2 664.0,616.1 668.0,616.1" fill="none" stroke="#c8202a" stroke-width="1.3"/><polyline points="668.0,616.1 676.0,615.8 688.0,615.4 700.0,615.0 710.0,614.6 712.0,614.5 724.0,613.9 736.0,613.2 740.0,613.0 748.0,612.7 760.0,612.3 765.6,612.1 772.0,611.5 784.0,610.5 793.0,609.7 796.0,609.4 808.0,608.2 811.2,607.9 820.0,606.5 822.2,606.1" fill="none" stroke="#7a1a5a" stroke-width="1.3"/><polygon points="829,605.2 876.6,607.6 876.6,609.6 829,607.8" fill="#b0201a"/><path d="M344.4,574.2V718.3M876.6,588.2V718.3" stroke="#e8302a" stroke-width=".9" fill="none"/><path d="M343.9,718.5H877.1" stroke="#e4461f" stroke-width="2.8"/><polygon points="836.8,603.2 933.3,595.6 934,598.6 837.4,606.2" fill="#fff" stroke="#333" stroke-width=".7"/><circle cx="826.4" cy="606.6" r="3.8" fill="#f6a81f" stroke="#222" stroke-width=".8"/><circle cx="826.4" cy="606.6" r="1.6" fill="#e84a1a"/><polygon points="776,578.4 776,584.2 777.6,582.8 779,585.2 780,584.6 778.7,582.3 780.6,582.2" fill="#1a3a8a"/><path d="M344.7,753V763.6" stroke="#2a9a6a" stroke-width=".7"/><path d="M344.7,763.6H353.5" stroke="#e82a4a" stroke-width=".8"/><polygon points="353,762.4 355.6,763.6 353,764.8" fill="#e82a4a"/><text x="343.2" y="752.2" font-size="5.4" font-weight="bold" fill="#444">z</text><text x="356.3" y="765.2" font-size="5.4" font-weight="bold" fill="#444">x</text></g></svg><div style="left:269.10px;top:389.20px;width:635.40px;height:114.80px;background:#fbfcfe;"></div><div style="left:269.90px;top:392.20px;width:31.00px;height:8.60px;background:#fff;"></div><span class="t" style="top:394.02px;font-size:5.3px;color:#4a9bdc;left:271.80px;transform:scaleX(0.87);transform-origin:0 50%;">Messages</span><span class="t" style="top:394.40px;font-size:4.5px;color:#c3c8ce;left:296.60px;transform:translateX(-50%) scaleX(1);transform-origin:50% 50%;">×</span><div style="left:303.40px;top:392.70px;width:20.30px;height:7.90px;background:#e9ecf0;"></div><span class="t" style="top:394.02px;font-size:5.3px;color:#222;left:305.40px;transform:scaleX(0.87);transform-origin:0 50%;">Progress</span><div style="left:326.00px;top:392.70px;width:11.40px;height:7.90px;background:#e9ecf0;"></div><span class="t" style="top:394.02px;font-size:5.3px;color:#222;left:328.00px;transform:scaleX(0.87);transform-origin:0 50%;">Log</span><div style="left:339.60px;top:392.70px;width:41.20px;height:7.90px;background:#e9ecf0;"></div><span class="t" style="top:394.02px;font-size:5.3px;color:#222;left:341.60px;transform:scaleX(0.87);transform-origin:0 50%;">External Process</span><span class="t" style="top:394.40px;font-size:4.5px;color:#c3c8ce;left:377.80px;transform:translateX(-50%) scaleX(1);transform-origin:50% 50%;">×</span><div style="left:385.80px;top:392.70px;width:65.50px;height:7.90px;background:#e9ecf0;"></div><span class="t" style="top:394.02px;font-size:5.3px;color:#222;left:387.80px;transform:scaleX(0.87);transform-origin:0 50%;">Accumulated Probe Table 1</span><span class="t" style="top:394.40px;font-size:4.5px;color:#c3c8ce;left:448.30px;transform:translateX(-50%) scaleX(1);transform-origin:50% 50%;">×</span><div class="tr" style="left:895.25px;top:396.38px;border-left:1.25px solid transparent;border-right:1.25px solid transparent;border-top:1.69px solid #333;"></div><div style="left:900.70px;top:395.60px;width:1.30px;height:2.80px;background:#222;"></div><div style="left:271.30px;top:405.30px;width:1.00px;height:3.20px;background:#e9a93a;transform:rotate(-35deg);"></div><div style="left:276.70px;top:405.00px;width:3.40px;height:3.20px;border:.6px solid #8cc4ea;box-sizing:border-box;"></div><div style="left:269.90px;top:410.60px;width:633.00px;height:71.90px;background:#fdfeff;border:.5px solid #e3e7ec;box-sizing:border-box;"></div><span class="t" style="top:412.68px;font-size:4.7px;color:#222;left:271.10px;transform:scaleX(0.87);transform-origin:0 50%;">COMSOL Multiphysics 6.2.0.339</span><span class="t" style="top:418.58px;font-size:4.7px;color:#222;left:271.10px;transform:scaleX(0.87);transform-origin:0 50%;">[Mar 21, 2024, 10:12 AM] Your COMSOL 6.2 installation is up to date.</span><span class="t" style="top:424.48px;font-size:4.7px;color:#222;left:271.10px;transform:scaleX(0.87);transform-origin:0 50%;">[Mar 21, 2024, 10:13 AM] Opened file: C:\Users\Kay.BFI\Desktop\Bm.mph</span><div style="left:0.00px;top:0.00px;width:3.20px;height:504.00px;background:#fbfcfe;"></div><div style="left:3.20px;top:0.00px;width:1.00px;height:504.00px;background:#ea6a6a;"></div><div style="left:9.00px;top:483.20px;width:103.30px;height:16.00px;background:#7b7d80;border-radius:2px;"></div><span class="t" style="top:486.14px;font-size:9.6px;color:#f4f4f4;left:13.50px;transform:scaleX(0.86);transform-origin:0 50%;font-weight:normal;">Yalcin Kaymak (External)</span><div style="left:119.30px;top:483.20px;width:48.50px;height:16.00px;background:#7b7d80;border-radius:2px;"></div><div style="left:127.00px;top:491.00px;width:9.00px;height:0.90px;background:#a6a8ab;"></div><div style="left:147.00px;top:491.00px;width:9.00px;height:0.90px;background:#e8e8e8;"></div><div style="left:151.10px;top:486.90px;width:0.90px;height:9.00px;background:#e8e8e8;"></div><div style="left:3.20px;top:497.60px;width:903.80px;height:5.60px;background:#14161a;"></div><div style="left:7.00px;top:499.20px;width:4.50px;height:3.00px;background:#e8e8e8;border-radius:.5px;"></div><div style="left:19.00px;top:499.20px;width:4.00px;height:3.00px;background:#2a9a4a;"></div><span class="t" style="top:499.00px;font-size:4.5px;color:#bbb;left:25.00px;transform:scaleX(0.87);transform-origin:0 50%;">parameters</span><div style="left:56.00px;top:499.40px;width:4.00px;height:3.00px;background:#7ab0d8;"></div></div></div>
<div class="clip" id="wB" style="left:993px;top:0px;width:713.6px;height:390.6px;"><div class="win" style="left:-0.74px;top:-0.70px;transform:scale(0.7913);"><div style="left:0.00px;top:0.00px;width:909.00px;height:504.00px;background:#eef2f7;"></div><div style="left:0.00px;top:0.00px;width:909.00px;height:8.30px;background:#fdfeff;"></div><div style="left:4.60px;top:2.40px;width:3.20px;height:3.20px;background:#1d4e89;border-radius:50%;"></div><div style="left:15.20px;top:2.60px;width:3.60px;height:3.00px;background:#d9dde2;border-radius:.5px;"></div><div style="left:23.80px;top:2.60px;width:3.60px;height:3.00px;background:#2f7fc2;border-radius:.5px;"></div><div style="left:33.20px;top:2.60px;width:3.60px;height:3.00px;background:#9fc6e6;border-radius:.5px;"></div><div style="left:41.80px;top:2.60px;width:3.60px;height:3.00px;background:#7fb3de;border-radius:.5px;"></div><div style="left:51.30px;top:2.60px;width:1.40px;height:1.20px;background:#555;border-radius:.5px;"></div><div style="left:58.20px;top:2.60px;width:3.60px;height:3.00px;background:#b9c0c8;border-radius:.5px;"></div><div style="left:64.20px;top:2.60px;width:3.60px;height:3.00px;background:#c9cfd6;border-radius:.5px;"></div><div style="left:70.90px;top:2.60px;width:3.60px;height:3.00px;background:#c9cfd6;border-radius:.5px;"></div><div style="left:76.90px;top:2.60px;width:3.60px;height:3.00px;background:#d5dae0;border-radius:.5px;"></div><div style="left:85.20px;top:2.60px;width:3.60px;height:3.00px;background:#c3cad2;border-radius:.5px;"></div><div style="left:93.20px;top:2.60px;width:3.60px;height:3.00px;background:#c3cad2;border-radius:.5px;"></div><div style="left:102.20px;top:2.60px;width:3.60px;height:3.00px;background:#9fc6e6;border-radius:.5px;"></div><div style="left:111.90px;top:2.60px;width:3.60px;height:3.00px;background:#2f7fc2;border-radius:.5px;"></div><div style="left:120.20px;top:2.60px;width:3.60px;height:3.00px;background:#3f93d3;border-radius:.5px;"></div><div style="left:129.20px;top:2.60px;width:3.60px;height:3.00px;background:#e0a23c;border-radius:.5px;"></div><div style="left:138.20px;top:2.60px;width:3.60px;height:3.00px;background:#9fc6e6;border-radius:.5px;"></div><div class="tr" style="left:145.75px;top:3.67px;border-left:1.25px solid transparent;border-right:1.25px solid transparent;border-top:1.69px solid #444;"></div><div style="left:356px;top:1.5px;width:198px;height:8px;background:#2a62a6;clip-path:polygon(0 0,100% 0,96.5% 100%,3.5% 100%);"></div><span class="t" style="top:2.92px;font-size:4.3px;color:#c9dcf2;left:455.00px;transform:translateX(-50%) scaleX(0.87);transform-origin:50% 50%;">10.12.217.100</span><div style="left:367.00px;top:3.60px;width:2.60px;height:2.60px;background:#e8f0fa;border-radius:.4px;"></div><div style="left:373.50px;top:3.40px;width:3.20px;height:3.00px;background:#dce8f6;clip-path:polygon(0 100%,100% 0,100% 100%);"></div><div style="left:523.50px;top:6.20px;width:3.20px;height:0.80px;background:#e8f0fa;"></div><div style="left:531.50px;top:3.40px;width:3.00px;height:3.00px;border:.6px solid #dce8f6;box-sizing:border-box;"></div><span class="t" style="top:1.50px;font-size:6.5px;color:#fff;left:541.50px;transform:translateX(-50%) scaleX(1);transform-origin:50% 50%;font-weight:bold;">×</span><div style="left:862.00px;top:4.30px;width:4.00px;height:0.45px;background:#8a8f96;"></div><div style="left:878.30px;top:2.40px;width:3.60px;height:3.60px;border:.45px solid #6f757c;box-sizing:border-box;"></div><span class="t" style="top:0.50px;font-size:7px;color:#6f757c;left:897.00px;transform:translateX(-50%) scaleX(1);transform-origin:50% 50%;">×</span><div style="left:0.00px;top:8.30px;width:909.00px;height:9.00px;background:#e7e9ec;"></div><div style="left:4.30px;top:9.00px;width:18.80px;height:7.80px;background:#2c7acb;"></div><span class="t" style="top:10.58px;font-size:4.7px;color:#d6e6f8;left:13.70px;transform:translateX(-50%) scaleX(0.87);transform-origin:50% 50%;">File</span><span class="t" style="top:10.46px;font-size:4.9px;color:#222;left:32.50px;transform:translateX(-50%) scaleX(0.87);transform-origin:50% 50%;">Home</span><span class="t" style="top:10.46px;font-size:4.9px;color:#222;left:54.70px;transform:translateX(-50%) scaleX(0.87);transform-origin:50% 50%;">Definitions</span><span class="t" style="top:10.46px;font-size:4.9px;color:#222;left:80.40px;transform:translateX(-50%) scaleX(0.87);transform-origin:50% 50%;">Geometry</span><span class="t" style="top:10.46px;font-size:4.9px;color:#222;left:104.30px;transform:translateX(-50%) scaleX(0.87);transform-origin:50% 50%;">Materials</span><span class="t" style="top:10.46px;font-size:4.9px;color:#222;left:125.70px;transform:translateX(-50%) scaleX(0.87);transform-origin:50% 50%;">Physics</span><span class="t" style="top:10.46px;font-size:4.9px;color:#222;left:143.70px;transform:translateX(-50%) scaleX(0.87);transform-origin:50% 50%;">Mesh</span><span class="t" style="top:10.46px;font-size:4.9px;color:#222;left:160.40px;transform:translateX(-50%) scaleX(0.87);transform-origin:50% 50%;">Study</span><span class="t" style="top:10.46px;font-size:4.9px;color:#222;left:178.70px;transform:translateX(-50%) scaleX(0.87);transform-origin:50% 50%;">Results</span><span class="t" style="top:10.46px;font-size:4.9px;color:#222;left:201.00px;transform:translateX(-50%) scaleX(0.87);transform-origin:50% 50%;">Developer</span><div style="left:218.00px;top:9.00px;width:30.00px;height:8.40px;background:#f9fbfe;"></div><span class="t" style="top:10.58px;font-size:4.7px;color:#4a9bdc;left:233.00px;transform:translateX(-50%) scaleX(0.87);transform-origin:50% 50%;">3D Plot Group 1</span><div style="left:898.20px;top:11.30px;width:3.00px;height:3.00px;background:#2f7fc2;border-radius:.5px;"></div><div style="left:0.00px;top:17.30px;width:909.00px;height:30.20px;background:#f9fbfe;"></div><div style="left:0.00px;top:47.50px;width:909.00px;height:2.40px;background:#eceff3;"></div><div style="left:0;top:0;width:10px;height:10px;transform-origin:0 0;transform:matrix(.99282,0,0,1,.472,0);"><div style="left:9.40px;top:20.80px;width:7.60px;height:1.20px;background:#c9c3cc;"></div><div style="left:9.40px;top:22.30px;width:7.60px;height:5.20px;background:#b7359b;border-radius:.4px;"></div><div style="left:10.60px;top:24.50px;width:3.40px;height:0.80px;background:#f3d9ec;transform:rotate(-30deg);"></div><span class="t" style="top:30.78px;font-size:4.7px;color:#222;left:13.20px;transform:translateX(-50%) scaleX(0.87);transform-origin:50% 50%;">Plot</span><div style="left:24.30px;top:20.20px;width:7.40px;height:6.40px;background:#fbfcfe;border:.6px solid #b9bec6;border-top:1.4px solid #b9bec6;box-sizing:border-box;"></div><div style="left:27.90px;top:23.60px;width:5.80px;height:4.40px;background:#b7359b;border-radius:.3px;border-top:1px solid #8d8d96;box-sizing:border-box;"></div><span class="t" style="top:30.78px;font-size:4.7px;color:#222;left:28.70px;transform:translateX(-50%) scaleX(0.87);transform-origin:50% 50%;">Plot</span><span class="t" style="top:35.38px;font-size:4.7px;color:#222;left:27.40px;transform:translateX(-50%) scaleX(0.87);transform-origin:50% 50%;">In</span><div class="tr" style="left:30.61px;top:37.44px;border-left:1.125px solid transparent;border-right:1.125px solid transparent;border-top:1.52px solid #333;"></div><div style="left:39.30px;top:19.50px;width:0.50px;height:26.50px;background:#dfe4ea;"></div><div style="left:43.30px;top:20.30px;width:3.80px;height:3.60px;background:#b7359b;border-radius:.5px;"></div><span class="t" style="top:19.78px;font-size:4.7px;color:#222;left:49.60px;transform:scaleX(0.87);transform-origin:0 50%;">Volume</span><div style="left:43.30px;top:28.00px;width:3.80px;height:3.60px;background:#9aa0a7;border-radius:.5px;"></div><span class="t" style="top:27.48px;font-size:4.7px;color:#222;left:49.60px;transform:scaleX(0.87);transform-origin:0 50%;">Arrow Volume</span><div style="left:43.30px;top:35.70px;width:3.80px;height:3.60px;background:#c8385c;border-radius:.5px;"></div><span class="t" style="top:35.18px;font-size:4.7px;color:#222;left:49.60px;transform:scaleX(0.87);transform-origin:0 50%;">Surface</span><div style="left:79.80px;top:20.30px;width:3.80px;height:3.60px;background:#b7359b;border-radius:.5px;"></div><span class="t" style="top:19.78px;font-size:4.7px;color:#222;left:86.20px;transform:scaleX(0.87);transform-origin:0 50%;">Slice</span><div style="left:79.80px;top:28.00px;width:3.80px;height:3.60px;background:#b7359b;border-radius:.5px;"></div><span class="t" style="top:27.48px;font-size:4.7px;color:#222;left:86.20px;transform:scaleX(0.87);transform-origin:0 50%;">Isosurface</span><div style="left:79.80px;top:35.70px;width:3.80px;height:3.60px;background:#9aa0a7;border-radius:.5px;"></div><span class="t" style="top:35.18px;font-size:4.7px;color:#222;left:86.20px;transform:scaleX(0.87);transform-origin:0 50%;">Arrow Surface</span><div style="left:115.50px;top:20.30px;width:3.80px;height:3.60px;background:#c5cad0;border-radius:.5px;"></div><span class="t" style="top:19.78px;font-size:4.7px;color:#222;left:122.00px;transform:scaleX(0.87);transform-origin:0 50%;">Line</span><div style="left:115.50px;top:28.00px;width:3.80px;height:3.60px;background:#d77ac0;border-radius:.5px;"></div><span class="t" style="top:27.48px;font-size:4.7px;color:#222;left:122.00px;transform:scaleX(0.87);transform-origin:0 50%;">Contour</span><div style="left:115.50px;top:35.70px;width:3.80px;height:3.60px;background:#c5cad0;border-radius:.5px;"></div><span class="t" style="top:35.18px;font-size:4.7px;color:#222;left:122.00px;transform:scaleX(0.87);transform-origin:0 50%;">Streamline</span><div style="left:144.90px;top:20.30px;width:3.80px;height:3.60px;background:#c97a8c;border-radius:.5px;"></div><span class="t" style="top:19.78px;font-size:4.7px;color:#222;left:151.20px;transform:scaleX(0.87);transform-origin:0 50%;">Arrow Line</span><div style="left:144.90px;top:28.00px;width:3.80px;height:3.60px;background:#c8385c;border-radius:.5px;"></div><span class="t" style="top:27.48px;font-size:4.7px;color:#222;left:151.20px;transform:scaleX(0.87);transform-origin:0 50%;">Mesh</span><div style="left:144.90px;top:35.70px;width:3.80px;height:3.60px;background:#dfe3e8;border-radius:.5px;"></div><span class="t" style="top:35.18px;font-size:4.7px;color:#222;left:151.20px;transform:scaleX(0.87);transform-origin:0 50%;">Annotation</span><div style="left:178.40px;top:22.00px;width:6.60px;height:6.60px;background:#b7359b;border-radius:.8px;"></div><div style="left:177.60px;top:20.60px;width:6.60px;height:6.60px;background:#d05ab8;border-radius:.8px;"></div><div style="left:178.60px;top:22.20px;width:5.40px;height:5.20px;background:#b7359b;border-radius:.5px;"></div><span class="t" style="top:30.78px;font-size:4.7px;color:#222;left:181.60px;transform:translateX(-50%) scaleX(0.87);transform-origin:50% 50%;">More</span><span class="t" style="top:35.38px;font-size:4.7px;color:#222;left:180.30px;transform:translateX(-50%) scaleX(0.87);transform-origin:50% 50%;">Plots</span><div class="tr" style="left:186.57px;top:37.44px;border-left:1.125px solid transparent;border-right:1.125px solid transparent;border-top:1.52px solid #333;"></div><div style="left:191.30px;top:19.50px;width:0.50px;height:26.50px;background:#dfe4ea;"></div><div style="left:195.60px;top:20.30px;width:3.80px;height:3.60px;background:#dfe3e8;border-radius:.5px;opacity:.8;"></div><span class="t" style="top:19.78px;font-size:4.7px;color:#a9b0b8;left:201.90px;transform:scaleX(0.87);transform-origin:0 50%;">Color Expression</span><div style="left:195.60px;top:28.00px;width:3.80px;height:3.60px;background:#dfe3e8;border-radius:.5px;opacity:.8;"></div><span class="t" style="top:27.48px;font-size:4.7px;color:#a9b0b8;left:201.90px;transform:scaleX(0.87);transform-origin:0 50%;">Deformation</span><div style="left:195.60px;top:35.70px;width:3.80px;height:3.60px;background:#dfe3e8;border-radius:.5px;opacity:.8;"></div><span class="t" style="top:35.18px;font-size:4.7px;color:#a9b0b8;left:201.90px;transform:scaleX(0.87);transform-origin:0 50%;">Filter</span><div style="left:236.60px;top:20.30px;width:3.80px;height:3.60px;background:#dfe3e8;border-radius:.5px;opacity:.8;"></div><span class="t" style="top:19.78px;font-size:4.7px;color:#a9b0b8;left:242.90px;transform:scaleX(0.87);transform-origin:0 50%;">Material Appearance</span><div style="left:236.60px;top:28.00px;width:3.80px;height:3.60px;background:#dfe3e8;border-radius:.5px;opacity:.8;"></div><span class="t" style="top:27.48px;font-size:4.7px;color:#a9b0b8;left:242.90px;transform:scaleX(0.87);transform-origin:0 50%;">Selection</span><div style="left:236.60px;top:35.70px;width:3.80px;height:3.60px;background:#dfe3e8;border-radius:.5px;opacity:.8;"></div><span class="t" style="top:35.18px;font-size:4.7px;color:#a9b0b8;left:242.90px;transform:scaleX(0.87);transform-origin:0 50%;">Transparency</span><div style="left:291.30px;top:22.00px;width:6.60px;height:6.60px;background:#b7359b;border-radius:.8px;"></div><div style="left:290.50px;top:20.60px;width:6.60px;height:6.60px;background:#d05ab8;border-radius:.8px;"></div><div style="left:291.50px;top:22.20px;width:5.40px;height:5.20px;background:#b7359b;border-radius:.5px;"></div><span class="t" style="top:30.78px;font-size:4.7px;color:#222;left:294.50px;transform:translateX(-50%) scaleX(0.87);transform-origin:50% 50%;">More</span><span class="t" style="top:35.38px;font-size:4.7px;color:#222;left:293.20px;transform:translateX(-50%) scaleX(0.87);transform-origin:50% 50%;">Attributes</span><div class="tr" style="left:304.57px;top:37.44px;border-left:1.125px solid transparent;border-right:1.125px solid transparent;border-top:1.52px solid #333;"></div><div style="left:308.70px;top:19.50px;width:0.50px;height:26.50px;background:#dfe4ea;"></div><div style="left:312.40px;top:18.70px;width:52.20px;height:6.80px;background:#c7e0f6;"></div><div style="left:313.50px;top:20.30px;width:3.80px;height:3.60px;background:#9fc6e6;border-radius:.5px;"></div><span class="t" style="top:19.78px;font-size:4.7px;color:#222;left:319.90px;transform:scaleX(0.87);transform-origin:0 50%;">Evaluate Along Normal</span><div style="left:313.50px;top:28.00px;width:3.80px;height:3.60px;background:#e9b0b8;border-radius:.5px;"></div><span class="t" style="top:27.48px;font-size:4.7px;color:#222;left:319.90px;transform:scaleX(0.87);transform-origin:0 50%;">First Point for Cut Line</span><div style="left:313.50px;top:35.70px;width:3.80px;height:3.60px;background:#e9b0b8;border-radius:.5px;"></div><span class="t" style="top:35.18px;font-size:4.7px;color:#222;left:319.90px;transform:scaleX(0.87);transform-origin:0 50%;">Second Point for Cut Line</span><div style="left:371.30px;top:20.30px;width:3.80px;height:3.60px;background:#8d949c;border-radius:.5px;"></div><span class="t" style="top:19.78px;font-size:4.7px;color:#222;left:376.90px;transform:scaleX(0.87);transform-origin:0 50%;">Cut Line Direction</span><div style="left:371.30px;top:28.00px;width:3.80px;height:3.60px;background:#8d949c;border-radius:.5px;"></div><span class="t" style="top:27.48px;font-size:4.7px;color:#222;left:376.90px;transform:scaleX(0.87);transform-origin:0 50%;">Cut Line Surface Normal</span><div style="left:371.30px;top:35.70px;width:3.80px;height:3.60px;background:#c5cad0;border-radius:.5px;"></div><span class="t" style="top:35.18px;font-size:4.7px;color:#222;left:376.90px;transform:scaleX(0.87);transform-origin:0 50%;">First Point for Cut Plane Normal</span><div style="left:439.80px;top:20.30px;width:3.80px;height:3.60px;background:#c5cad0;border-radius:.5px;"></div><span class="t" style="top:19.78px;font-size:4.7px;color:#222;left:445.50px;transform:scaleX(0.87);transform-origin:0 50%;">Second Point for Cut Plane Normal</span><div style="left:439.80px;top:28.00px;width:3.80px;height:3.60px;background:#8d949c;border-radius:.5px;"></div><span class="t" style="top:27.48px;font-size:4.7px;color:#222;left:445.50px;transform:scaleX(0.87);transform-origin:0 50%;">Cut Plane Normal</span><div style="left:439.80px;top:35.70px;width:3.80px;height:3.60px;background:#b3476c;border-radius:.5px;"></div><span class="t" style="top:35.18px;font-size:4.7px;color:#222;left:445.50px;transform:scaleX(0.87);transform-origin:0 50%;">Cut Plane Normal from Surface</span><div style="left:514.80px;top:19.50px;width:0.50px;height:26.50px;background:#dfe4ea;"></div><div style="left:520.70px;top:20.60px;width:6.40px;height:5.60px;background:#f4f2f6;border:.6px solid #c9c3cc;box-sizing:border-box;"></div><div style="left:522.90px;top:22.80px;width:6.20px;height:5.40px;background:#e9dfe8;border:.6px solid #b9a9b9;box-sizing:border-box;"></div><span class="t" style="top:30.78px;font-size:4.7px;color:#222;left:524.90px;transform:translateX(-50%) scaleX(0.87);transform-origin:50% 50%;">Image</span><div style="left:538.90px;top:21.40px;width:2.60px;height:5.20px;background:#b7359b;border-radius:.3px;"></div><div style="left:542.10px;top:21.40px;width:2.60px;height:5.20px;background:#b7359b;border-radius:.3px;"></div><div style="left:545.30px;top:21.40px;width:2.60px;height:5.20px;background:#b7359b;border-radius:.3px;"></div><div style="left:538.50px;top:20.60px;width:10.00px;height:0.70px;background:#8d8d96;"></div><div style="left:538.50px;top:26.70px;width:10.00px;height:0.70px;background:#8d8d96;"></div><span class="t" style="top:30.78px;font-size:4.7px;color:#222;left:543.50px;transform:translateX(-50%) scaleX(0.87);transform-origin:50% 50%;">Animation</span><div class="tr" style="left:542.38px;top:37.44px;border-left:1.125px solid transparent;border-right:1.125px solid transparent;border-top:1.52px solid #333;"></div><div style="left:556.60px;top:19.50px;width:0.50px;height:26.50px;background:#dfe4ea;"></div><span class="t" style="top:43.08px;font-size:4.7px;color:#8f98a3;left:21.00px;transform:translateX(-50%) scaleX(0.87);transform-origin:50% 50%;">Plot</span><span class="t" style="top:43.08px;font-size:4.7px;color:#8f98a3;left:115.30px;transform:translateX(-50%) scaleX(0.87);transform-origin:50% 50%;">Add Plot</span><span class="t" style="top:43.08px;font-size:4.7px;color:#8f98a3;left:250.50px;transform:translateX(-50%) scaleX(0.87);transform-origin:50% 50%;">Attributes</span><span class="t" style="top:43.08px;font-size:4.7px;color:#8f98a3;left:411.90px;transform:translateX(-50%) scaleX(0.87);transform-origin:50% 50%;">Select</span><span class="t" style="top:43.08px;font-size:4.7px;color:#8f98a3;left:535.30px;transform:translateX(-50%) scaleX(0.87);transform-origin:50% 50%;">Export</span></div><div style="left:4.30px;top:49.80px;width:119.20px;height:454.20px;background:#fcfdff;"></div><span class="t" style="top:52.92px;font-size:8.3px;color:#79b4e2;left:6.00px;transform:scaleX(0.87);transform-origin:0 50%;">Model Builder</span><div class="tr" style="left:114.85px;top:56.38px;border-left:1.25px solid transparent;border-right:1.25px solid transparent;border-top:1.69px solid #333;"></div><div style="left:121.30px;top:55.60px;width:1.30px;height:2.80px;background:#222;"></div><div style="left:6.60px;top:63.80px;width:3.20px;height:3.20px;background:#c9cfd6;border-radius:.4px;"></div><div style="left:16.20px;top:63.80px;width:3.20px;height:3.20px;background:#c9cfd6;border-radius:.4px;"></div><div style="left:23.00px;top:63.80px;width:3.20px;height:3.20px;background:#6f9fc9;border-radius:.4px;"></div><div style="left:30.70px;top:63.80px;width:3.20px;height:3.20px;background:#b9c0c8;border-radius:.4px;"></div><div style="left:38.90px;top:63.80px;width:3.20px;height:3.20px;background:#4f8fc8;border-radius:.4px;"></div><div style="left:47.10px;top:63.80px;width:3.20px;height:3.20px;background:#3f93d3;border-radius:.4px;"></div><div style="left:61.90px;top:63.80px;width:3.20px;height:3.20px;background:#3f93d3;border-radius:.4px;"></div><div style="left:76.70px;top:63.80px;width:3.20px;height:3.20px;background:#aeb5bd;border-radius:.4px;"></div><div style="left:90.90px;top:63.80px;width:3.20px;height:3.20px;background:#3f6f9f;border-radius:.4px;"></div><div class="tr" style="left:54.48px;top:65.04px;border-left:1.125px solid transparent;border-right:1.125px solid transparent;border-top:1.52px solid #333;"></div><div class="tr" style="left:68.88px;top:65.04px;border-left:1.125px solid transparent;border-right:1.125px solid transparent;border-top:1.52px solid #333;"></div><div class="tr" style="left:83.17px;top:65.04px;border-left:1.125px solid transparent;border-right:1.125px solid transparent;border-top:1.52px solid #333;"></div><div class="tr" style="left:97.38px;top:65.04px;border-left:1.125px solid transparent;border-right:1.125px solid transparent;border-top:1.52px solid #333;"></div><div style="left:6.00px;top:72.20px;width:106.90px;height:6.10px;background:#fff;border:.5px solid #dfe3e8;box-sizing:border-box;"></div><span class="t" style="top:72.98px;font-size:4.7px;color:#c3c8ce;left:6.90px;transform:scaleX(0.87);transform-origin:0 50%;">Type filter text</span><div style="left:117.20px;top:73.40px;width:3.40px;height:3.40px;border:.7px solid #8cc4ea;border-radius:50%;box-sizing:border-box;"></div><div style="left:117.50px;top:80.50px;width:5.50px;height:402.50px;background:#f0f1f3;"></div><div style="left:117.50px;top:207.00px;width:5.50px;height:229.00px;background:#d9dbdf;"></div><div style="left:4.3px;top:80.5px;width:113.2px;height:396.5px;overflow:hidden;"><div style="left:-4.3px;top:-80.5px;width:10px;height:10px;"><div style="left:28.85px;top:83.90px;width:1.5px;height:1.5px;border-right:.5px solid #a4acb6;border-top:.5px solid #a4acb6;transform:rotate(45deg);"></div><div style="left:34.05px;top:83.20px;width:5.00px;height:3.20px;background:#2f7fc2;border-radius:.8px;"></div><span class="t" style="top:82.48px;font-size:4.7px;left:41.65px;transform:scaleX(0.87);transform-origin:0 50%;">Porous Medium iron <i>(porous2)</i></span><div style="left:28.85px;top:90.93px;width:1.5px;height:1.5px;border-right:.5px solid #a4acb6;border-top:.5px solid #a4acb6;transform:rotate(45deg);"></div><div style="left:34.05px;top:90.23px;width:5.00px;height:3.20px;background:#2f7fc2;border-radius:.8px;"></div><span class="t" style="top:89.51px;font-size:4.7px;left:41.65px;transform:scaleX(0.87);transform-origin:0 50%;">Fluid Properties cokefree <i>(fp1)</i></span><div style="left:28.85px;top:97.96px;width:1.5px;height:1.5px;border-right:.5px solid #a4acb6;border-top:.5px solid #a4acb6;transform:rotate(45deg);"></div><div style="left:34.05px;top:97.26px;width:5.00px;height:3.20px;background:#2f7fc2;border-radius:.8px;"></div><span class="t" style="top:96.54px;font-size:4.7px;left:41.65px;transform:scaleX(0.87);transform-origin:0 50%;">Open Boundary slgas <i>(open1)</i></span><div style="left:28.85px;top:104.99px;width:1.5px;height:1.5px;border-right:.5px solid #a4acb6;border-top:.5px solid #a4acb6;transform:rotate(45deg);"></div><div style="left:34.05px;top:104.29px;width:5.00px;height:3.20px;background:#2f7fc2;border-radius:.8px;"></div><span class="t" style="top:103.57px;font-size:4.7px;left:41.65px;transform:scaleX(0.87);transform-origin:0 50%;">Symmetry 1 <i>(sym1)</i></span><div style="left:28.85px;top:112.02px;width:1.5px;height:1.5px;border-right:.5px solid #a4acb6;border-top:.5px solid #a4acb6;transform:rotate(45deg);"></div><div style="left:34.05px;top:111.32px;width:5.00px;height:3.20px;background:#2f7fc2;border-radius:.8px;"></div><span class="t" style="top:110.60px;font-size:4.7px;left:41.65px;transform:scaleX(0.87);transform-origin:0 50%;">Inlet bot <i>(inl1)</i></span><div style="left:28.85px;top:119.05px;width:1.5px;height:1.5px;border-right:.5px solid #a4acb6;border-top:.5px solid #a4acb6;transform:rotate(45deg);"></div><div style="left:34.05px;top:118.35px;width:5.00px;height:3.20px;background:#2f7fc2;border-radius:.8px;"></div><span class="t" style="top:117.63px;font-size:4.7px;left:41.65px;transform:scaleX(0.87);transform-origin:0 50%;">Mass Source iron TH <i>(ms1)</i></span><div style="left:28.85px;top:126.08px;width:1.5px;height:1.5px;border-right:.5px solid #a4acb6;border-top:.5px solid #a4acb6;transform:rotate(45deg);"></div><div style="left:34.05px;top:125.38px;width:5.00px;height:3.20px;background:#2f7fc2;border-radius:.8px;"></div><span class="t" style="top:124.66px;font-size:4.7px;left:41.65px;transform:scaleX(0.87);transform-origin:0 50%;">Mass Source slag TH <i>(ms2)</i></span><div style="left:28.85px;top:133.11px;width:1.5px;height:1.5px;border-right:.5px solid #a4acb6;border-top:.5px solid #a4acb6;transform:rotate(45deg);"></div><div style="left:34.05px;top:132.41px;width:5.00px;height:3.20px;background:#2f7fc2;border-radius:.8px;"></div><span class="t" style="top:131.69px;font-size:4.7px;left:41.65px;transform:scaleX(0.87);transform-origin:0 50%;">Mass Source iron Prod <i>(ms3)</i></span><div style="left:28.85px;top:140.14px;width:1.5px;height:1.5px;border-right:.5px solid #a4acb6;border-top:.5px solid #a4acb6;transform:rotate(45deg);"></div><div style="left:34.15px;top:138.64px;width:4.80px;height:4.80px;border:.8px solid #a9c4da;border-radius:50%;box-sizing:border-box;"></div><span class="t" style="top:138.72px;font-size:4.7px;left:41.65px;transform:scaleX(0.87);transform-origin:0 50%;">Global Equations 1 (ODE1) <i>(ge1)</i></span><div style="left:28.85px;top:147.17px;width:1.5px;height:1.5px;border-right:.5px solid #a4acb6;border-top:.5px solid #a4acb6;transform:rotate(45deg);"></div><div style="left:34.15px;top:145.67px;width:4.80px;height:4.80px;border:.8px solid #a9c4da;border-radius:50%;box-sizing:border-box;"></div><span class="t" style="top:145.75px;font-size:4.7px;left:41.65px;transform:scaleX(0.87);transform-origin:0 50%;">Global Equations 2 (ODE2) <i>(ge2)</i></span><div style="left:28.85px;top:154.20px;width:1.5px;height:1.5px;border-right:.5px solid #a4acb6;border-top:.5px solid #a4acb6;transform:rotate(45deg);"></div><div style="left:34.15px;top:152.70px;width:4.80px;height:4.80px;border:.8px solid #a9c4da;border-radius:50%;box-sizing:border-box;"></div><span class="t" style="top:152.78px;font-size:4.7px;left:41.65px;transform:scaleX(0.87);transform-origin:0 50%;">Global Equations 3 (ODE3) <i>(ge3)</i></span><div style="left:28.85px;top:161.23px;width:1.5px;height:1.5px;border-right:.5px solid #a4acb6;border-top:.5px solid #a4acb6;transform:rotate(45deg);"></div><div style="left:34.15px;top:159.73px;width:4.80px;height:4.80px;border:.8px solid #a9c4da;border-radius:50%;box-sizing:border-box;"></div><span class="t" style="top:159.81px;font-size:4.7px;left:41.65px;transform:scaleX(0.87);transform-origin:0 50%;">Global Equations 4 (ODE4) <i>(ge4)</i></span><div style="left:28.85px;top:168.26px;width:1.5px;height:1.5px;border-right:.5px solid #a4acb6;border-top:.5px solid #a4acb6;transform:rotate(45deg);"></div><div style="left:34.15px;top:166.76px;width:4.80px;height:4.80px;border:.8px solid #a9c4da;border-radius:50%;box-sizing:border-box;"></div><span class="t" style="top:166.84px;font-size:4.7px;left:41.65px;transform:scaleX(0.87);transform-origin:0 50%;">Global Equations 5 (ODE5) <i>(ge5)</i></span><div style="left:34.75px;top:174.59px;width:3.60px;height:3.00px;background:#6f8fae;border-radius:.6px;opacity:.9;"></div><span class="t" style="top:173.87px;font-size:4.7px;left:41.65px;transform:scaleX(0.87);transform-origin:0 50%;">Equation View <i>(info)</i></span><div style="left:22.20px;top:181.52px;width:1.7px;height:1.7px;border-right:.7px solid #444;border-bottom:.7px solid #444;transform:rotate(45deg);"></div><div style="left:27.60px;top:181.22px;width:4.20px;height:4.00px;background:#8d949c;border-radius:.8px;"></div><span class="t" style="top:180.90px;font-size:4.7px;left:34.80px;transform:scaleX(0.87);transform-origin:0 50%;">Moving Mesh (ale) <i>{ale}</i></span><div style="left:28.85px;top:189.35px;width:1.5px;height:1.5px;border-right:.5px solid #a4acb6;border-top:.5px solid #a4acb6;transform:rotate(45deg);"></div><div style="left:34.45px;top:188.25px;width:4.20px;height:4.00px;background:#2f7fc2;border-radius:.8px;"></div><span class="t" style="top:187.93px;font-size:4.7px;left:41.65px;transform:scaleX(0.87);transform-origin:0 50%;">Fixed Mesh 1 <i>(fix1)</i></span><div style="left:28.85px;top:196.38px;width:1.5px;height:1.5px;border-right:.5px solid #a4acb6;border-top:.5px solid #a4acb6;transform:rotate(45deg);"></div><div style="left:34.45px;top:195.28px;width:4.20px;height:4.00px;background:#2f7fc2;border-radius:.8px;"></div><span class="t" style="top:194.96px;font-size:4.7px;left:41.65px;transform:scaleX(0.87);transform-origin:0 50%;">Prescribed Mesh Displacement walls <i>(disp1)</i></span><div style="left:28.85px;top:203.41px;width:1.5px;height:1.5px;border-right:.5px solid #a4acb6;border-top:.5px solid #a4acb6;transform:rotate(45deg);"></div><div style="left:34.05px;top:202.71px;width:5.00px;height:3.20px;background:#2f7fc2;border-radius:.8px;"></div><span class="t" style="top:201.99px;font-size:4.7px;left:41.65px;transform:scaleX(0.87);transform-origin:0 50%;">Prescribed Mesh Displacement irir <i>(disp2)</i></span><div style="left:28.85px;top:210.44px;width:1.5px;height:1.5px;border-right:.5px solid #a4acb6;border-top:.5px solid #a4acb6;transform:rotate(45deg);"></div><div style="left:34.05px;top:209.74px;width:5.00px;height:3.20px;background:#2f7fc2;border-radius:.8px;"></div><span class="t" style="top:209.02px;font-size:4.7px;left:41.65px;transform:scaleX(0.87);transform-origin:0 50%;">Free Deformation 1 <i>(free1)</i></span><div style="left:28.85px;top:217.47px;width:1.5px;height:1.5px;border-right:.5px solid #a4acb6;border-top:.5px solid #a4acb6;transform:rotate(45deg);"></div><div style="left:34.05px;top:216.77px;width:5.00px;height:3.20px;background:#2f7fc2;border-radius:.8px;"></div><span class="t" style="top:216.05px;font-size:4.7px;left:41.65px;transform:scaleX(0.87);transform-origin:0 50%;">Prescribed Normal Mesh Velocity irsl <i>(pnmv1)</i></span><div style="left:28.85px;top:224.50px;width:1.5px;height:1.5px;border-right:.5px solid #a4acb6;border-top:.5px solid #a4acb6;transform:rotate(45deg);"></div><div style="left:34.05px;top:223.80px;width:5.00px;height:3.20px;background:#2f7fc2;border-radius:.8px;"></div><span class="t" style="top:223.08px;font-size:4.7px;left:41.65px;transform:scaleX(0.87);transform-origin:0 50%;">Prescribed Normal Mesh Velocity slgas <i>(pnmv2)</i></span><div style="left:28.85px;top:231.53px;width:1.5px;height:1.5px;border-right:.5px solid #a4acb6;border-top:.5px solid #a4acb6;transform:rotate(45deg);"></div><div style="left:34.05px;top:230.83px;width:5.00px;height:3.20px;background:#2f7fc2;border-radius:.8px;"></div><span class="t" style="top:230.11px;font-size:4.7px;left:41.65px;transform:scaleX(0.87);transform-origin:0 50%;">Prescribed Mesh Displacement irslK <i>(disp3)</i></span><div style="left:28.85px;top:238.56px;width:1.5px;height:1.5px;border-right:.5px solid #a4acb6;border-top:.5px solid #a4acb6;transform:rotate(45deg);"></div><div style="left:34.05px;top:237.86px;width:5.00px;height:3.20px;background:#2f7fc2;border-radius:.8px;"></div><span class="t" style="top:237.14px;font-size:4.7px;left:41.65px;transform:scaleX(0.87);transform-origin:0 50%;">Prescribed Deformation cokefree <i>(pres1)</i></span><div style="left:34.75px;top:244.89px;width:3.60px;height:3.00px;background:#6f8fae;border-radius:.6px;opacity:.9;"></div><span class="t" style="top:244.17px;font-size:4.7px;left:41.65px;transform:scaleX(0.87);transform-origin:0 50%;">Equation View <i>(info)</i></span><div style="left:22.00px;top:252.62px;width:1.5px;height:1.5px;border-right:.5px solid #a4acb6;border-top:.5px solid #a4acb6;transform:rotate(45deg);"></div><div style="left:27.90px;top:251.92px;width:3.60px;height:3.00px;background:#cfd4da;border-radius:.6px;opacity:.9;"></div><span class="t" style="top:251.20px;font-size:4.7px;left:34.80px;transform:scaleX(0.87);transform-origin:0 50%;">Events (ev) <i>{ev}</i></span><div style="left:22.00px;top:259.65px;width:1.5px;height:1.5px;border-right:.5px solid #a4acb6;border-top:.5px solid #a4acb6;transform:rotate(45deg);"></div><div class="tr" style="left:27.10px;top:258.15px;border-left:2.6px solid transparent;border-right:2.6px solid transparent;border-bottom:4.6px solid #9aa0a7;"></div><span class="t" style="top:258.23px;font-size:4.7px;left:34.80px;transform:scaleX(0.87);transform-origin:0 50%;">Mesh 1 <i>(mesh1)</i></span><div style="left:15.15px;top:266.68px;width:1.5px;height:1.5px;border-right:.5px solid #a4acb6;border-top:.5px solid #a4acb6;transform:rotate(45deg);"></div><div style="left:20.75px;top:265.58px;width:4.20px;height:4.00px;background:#2f7fc2;border-radius:.8px;"></div><span class="t" style="top:265.26px;font-size:4.7px;left:27.95px;transform:scaleX(0.87);transform-origin:0 50%;">Tris (comp2) <i>{comp2}</i></span><div style="left:15.15px;top:273.71px;width:1.5px;height:1.5px;border-right:.5px solid #a4acb6;border-top:.5px solid #a4acb6;transform:rotate(45deg);"></div><div style="left:21.05px;top:273.01px;width:3.60px;height:3.00px;background:#9fd6e6;border-radius:.6px;opacity:.9;"></div><span class="t" style="top:272.29px;font-size:4.7px;left:27.95px;transform:scaleX(0.87);transform-origin:0 50%;">Study 1 <i>(std1)</i></span><div style="left:15.35px;top:279.94px;width:1.7px;height:1.7px;border-right:.7px solid #444;border-bottom:.7px solid #444;transform:rotate(45deg);"></div><div style="left:20.75px;top:279.64px;width:4.20px;height:4.00px;background:#b03a86;border-radius:.8px;"></div><span class="t" style="top:279.32px;font-size:4.7px;left:27.95px;transform:scaleX(0.87);transform-origin:0 50%;">Results</span><div style="left:22.00px;top:287.77px;width:1.5px;height:1.5px;border-right:.5px solid #a4acb6;border-top:.5px solid #a4acb6;transform:rotate(45deg);"></div><div style="left:27.90px;top:287.07px;width:3.60px;height:3.00px;background:#cf5a78;border-radius:.6px;opacity:.9;"></div><span class="t" style="top:286.35px;font-size:4.7px;left:34.80px;transform:scaleX(0.87);transform-origin:0 50%;">Datasets</span><div style="left:22.00px;top:294.80px;width:1.5px;height:1.5px;border-right:.5px solid #a4acb6;border-top:.5px solid #a4acb6;transform:rotate(45deg);"></div><div style="left:27.90px;top:294.10px;width:3.60px;height:3.00px;background:#9cc8e8;border-radius:.6px;opacity:.9;"></div><span class="t" style="top:293.38px;font-size:4.7px;left:34.80px;transform:scaleX(0.87);transform-origin:0 50%;">Views</span><div style="left:22.00px;top:301.83px;width:1.5px;height:1.5px;border-right:.5px solid #a4acb6;border-top:.5px solid #a4acb6;transform:rotate(45deg);"></div><div style="left:27.90px;top:301.13px;width:3.60px;height:3.00px;background:#e3a9c3;border-radius:.6px;opacity:.9;"></div><span class="t" style="top:300.41px;font-size:4.7px;left:34.80px;transform:scaleX(0.87);transform-origin:0 50%;">Derived Values</span><div style="left:22.00px;top:308.86px;width:1.5px;height:1.5px;border-right:.5px solid #a4acb6;border-top:.5px solid #a4acb6;transform:rotate(45deg);"></div><div style="left:27.60px;top:307.76px;width:4.20px;height:4.00px;background:#cc5a9a;border-radius:.8px;"></div><span class="t" style="top:307.44px;font-size:4.7px;left:34.80px;transform:scaleX(0.87);transform-origin:0 50%;">Tables</span><div style="left:27.60px;top:314.79px;width:4.20px;height:4.00px;background:#a9978a;border-radius:.8px;"></div><span class="t" style="top:314.47px;font-size:4.7px;left:34.80px;transform:scaleX(0.87);transform-origin:0 50%;">Color Tables</span><div style="left:4.30px;top:320.50px;width:113.20px;height:6.73px;background:#cce4f7;"></div><div style="left:22.20px;top:322.12px;width:1.7px;height:1.7px;border-right:.7px solid #444;border-bottom:.7px solid #444;transform:rotate(45deg);"></div><div style="left:27.60px;top:321.82px;width:4.20px;height:4.00px;background:#a3309a;border-radius:.8px;"></div><span class="t" style="top:321.50px;font-size:4.7px;left:34.80px;transform:scaleX(0.87);transform-origin:0 50%;">3D Plot Group 1 <i>(pg1)</i></span><div style="left:28.85px;top:329.95px;width:1.5px;height:1.5px;border-right:.5px solid #a4acb6;border-top:.5px solid #a4acb6;transform:rotate(45deg);"></div><div style="left:34.25px;top:328.65px;width:4.60px;height:4.40px;background:#fff;border:.5px solid #c9a0ad;border-top:1.6px solid #c8385c;box-sizing:border-box;"></div><span class="t" style="top:328.53px;font-size:4.7px;left:41.65px;transform:scaleX(0.87);transform-origin:0 50%;">Surface 1 <i>(surf1)</i></span><div style="left:28.85px;top:336.98px;width:1.5px;height:1.5px;border-right:.5px solid #a4acb6;border-top:.5px solid #a4acb6;transform:rotate(45deg);"></div><div style="left:34.25px;top:335.68px;width:4.60px;height:4.40px;background:#fff;border:.5px solid #c9a0ad;border-top:1.6px solid #c8385c;box-sizing:border-box;"></div><span class="t" style="top:335.56px;font-size:4.7px;left:41.65px;transform:scaleX(0.87);transform-origin:0 50%;">Surface 2 <i>(surf2)</i></span><div style="left:28.85px;top:344.01px;width:1.5px;height:1.5px;border-right:.5px solid #a4acb6;border-top:.5px solid #a4acb6;transform:rotate(45deg);"></div><div style="left:34.25px;top:342.71px;width:4.60px;height:4.40px;background:#fff;border:.5px solid #c9a0ad;border-top:1.6px solid #c8385c;box-sizing:border-box;"></div><span class="t" style="top:342.59px;font-size:4.7px;left:41.65px;transform:scaleX(0.87);transform-origin:0 50%;">Surface 3 <i>(surf3)</i></span><div style="left:28.85px;top:351.04px;width:1.5px;height:1.5px;border-right:.5px solid #a4acb6;border-top:.5px solid #a4acb6;transform:rotate(45deg);"></div><div style="left:34.25px;top:349.74px;width:4.60px;height:4.40px;background:#fff;border:.5px solid #c9a0ad;border-top:1.6px solid #c8385c;box-sizing:border-box;"></div><span class="t" style="top:349.62px;font-size:4.7px;left:41.65px;transform:scaleX(0.87);transform-origin:0 50%;">Surface 4 <i>(surf4)</i></span><div style="left:34.25px;top:356.77px;width:4.60px;height:4.40px;border:.7px solid #c5cad0;box-sizing:border-box;"></div><span class="t" style="top:356.65px;font-size:4.7px;left:41.65px;transform:scaleX(0.87);transform-origin:0 50%;">Line 1 <i>(line1)</i></span><div style="left:28.85px;top:365.10px;width:1.5px;height:1.5px;border-right:.5px solid #a4acb6;border-top:.5px solid #a4acb6;transform:rotate(45deg);"></div><div style="left:34.25px;top:363.80px;width:4.60px;height:4.40px;border:.7px solid #c5cad0;box-sizing:border-box;"></div><span class="t" style="top:363.68px;font-size:4.7px;left:41.65px;transform:scaleX(0.87);transform-origin:0 50%;">Line 2 <i>(line2)</i></span><div style="left:29.05px;top:371.33px;width:1.7px;height:1.7px;border-right:.7px solid #444;border-bottom:.7px solid #444;transform:rotate(45deg);"></div><div style="left:34.25px;top:370.83px;width:4.60px;height:4.40px;border:.7px solid #c5cad0;box-sizing:border-box;"></div><span class="t" style="top:370.71px;font-size:4.7px;left:41.65px;transform:scaleX(0.87);transform-origin:0 50%;">Line 3 <i>(line3)</i></span><div style="left:41.60px;top:378.46px;width:3.60px;height:3.00px;background:#b3476c;border-radius:.6px;opacity:.9;"></div><span class="t" style="top:377.74px;font-size:4.7px;left:48.50px;transform:scaleX(0.87);transform-origin:0 50%;">Selection 1 <i>(sel1)</i></span><div style="left:41.60px;top:385.49px;width:3.60px;height:3.00px;background:#c9ced4;border-radius:.6px;opacity:.9;"></div><span class="t" style="top:384.77px;font-size:4.7px;left:48.50px;transform:scaleX(0.87);transform-origin:0 50%;">Deformation 1 <i>(def1)</i></span><div style="left:28.85px;top:393.22px;width:1.5px;height:1.5px;border-right:.5px solid #a4acb6;border-top:.5px solid #a4acb6;transform:rotate(45deg);"></div><div style="left:34.45px;top:392.12px;width:4.20px;height:4.00px;background:#9aa0a7;border-radius:.8px;"></div><span class="t" style="top:391.80px;font-size:4.7px;left:41.65px;transform:scaleX(0.87);transform-origin:0 50%;">Arrow Surface 1 <i>(arws1)</i></span><div style="left:22.00px;top:400.25px;width:1.5px;height:1.5px;border-right:.5px solid #a4acb6;border-top:.5px solid #a4acb6;transform:rotate(45deg);"></div><div style="left:27.10px;top:400.65px;width:5.20px;height:1.00px;background:#b9bfc6;border-radius:1px;"></div><span class="t" style="top:398.83px;font-size:4.7px;left:34.80px;transform:scaleX(0.87);transform-origin:0 50%;">Probe Plot Group 2 <i>(pg2)</i></span><div style="left:22.00px;top:407.28px;width:1.5px;height:1.5px;border-right:.5px solid #a4acb6;border-top:.5px solid #a4acb6;transform:rotate(45deg);"></div><div style="left:27.10px;top:407.68px;width:5.20px;height:1.00px;background:#b9bfc6;border-radius:1px;"></div><span class="t" style="top:405.86px;font-size:4.7px;left:34.80px;transform:scaleX(0.87);transform-origin:0 50%;">Probe Plot Group 3 <i>(pg3)</i></span><div style="left:22.00px;top:414.31px;width:1.5px;height:1.5px;border-right:.5px solid #a4acb6;border-top:.5px solid #a4acb6;transform:rotate(45deg);"></div><div style="left:27.10px;top:414.71px;width:5.20px;height:1.00px;background:#b9bfc6;border-radius:1px;"></div><span class="t" style="top:412.89px;font-size:4.7px;left:34.80px;transform:scaleX(0.87);transform-origin:0 50%;">Probe Plot Group 4 <i>(pg4)</i></span><div style="left:22.00px;top:421.34px;width:1.5px;height:1.5px;border-right:.5px solid #a4acb6;border-top:.5px solid #a4acb6;transform:rotate(45deg);"></div><div style="left:27.10px;top:421.74px;width:5.20px;height:1.00px;background:#b9bfc6;border-radius:1px;"></div><span class="t" style="top:419.92px;font-size:4.7px;left:34.80px;transform:scaleX(0.87);transform-origin:0 50%;">Probe Plot Group 5 <i>(pg5)</i></span><div style="left:22.00px;top:428.37px;width:1.5px;height:1.5px;border-right:.5px solid #a4acb6;border-top:.5px solid #a4acb6;transform:rotate(45deg);"></div><div style="left:27.10px;top:428.77px;width:5.20px;height:1.00px;background:#b9bfc6;border-radius:1px;"></div><span class="t" style="top:426.95px;font-size:4.7px;left:34.80px;transform:scaleX(0.87);transform-origin:0 50%;">Probe Plot Group 6 <i>(pg6)</i></span><div style="left:22.00px;top:435.40px;width:1.5px;height:1.5px;border-right:.5px solid #a4acb6;border-top:.5px solid #a4acb6;transform:rotate(45deg);"></div><div style="left:27.10px;top:435.80px;width:5.20px;height:1.00px;background:#b9bfc6;border-radius:1px;"></div><span class="t" style="top:433.98px;font-size:4.7px;left:34.80px;transform:scaleX(0.87);transform-origin:0 50%;">Probe Plot Group 7 <i>(pg7)</i></span><div style="left:22.00px;top:442.43px;width:1.5px;height:1.5px;border-right:.5px solid #a4acb6;border-top:.5px solid #a4acb6;transform:rotate(45deg);"></div><div style="left:27.10px;top:442.83px;width:5.20px;height:1.00px;background:#b9bfc6;border-radius:1px;"></div><span class="t" style="top:441.01px;font-size:4.7px;left:34.80px;transform:scaleX(0.87);transform-origin:0 50%;">Probe Plot Group 8 <i>(pg8)</i></span><div style="left:22.00px;top:449.46px;width:1.5px;height:1.5px;border-right:.5px solid #a4acb6;border-top:.5px solid #a4acb6;transform:rotate(45deg);"></div><div style="left:27.10px;top:449.86px;width:5.20px;height:1.00px;background:#b9bfc6;border-radius:1px;"></div><span class="t" style="top:448.04px;font-size:4.7px;left:34.80px;transform:scaleX(0.87);transform-origin:0 50%;">Probe Plot Group 9 <i>(pg9)</i></span><div style="left:22.00px;top:456.49px;width:1.5px;height:1.5px;border-right:.5px solid #a4acb6;border-top:.5px solid #a4acb6;transform:rotate(45deg);"></div><div style="left:27.10px;top:456.89px;width:5.20px;height:1.00px;background:#b9bfc6;border-radius:1px;"></div><span class="t" style="top:455.07px;font-size:4.7px;left:34.80px;transform:scaleX(0.87);transform-origin:0 50%;">Probe Plot Group 10 <i>(pg10)</i></span><div style="left:22.00px;top:463.52px;width:1.5px;height:1.5px;border-right:.5px solid #a4acb6;border-top:.5px solid #a4acb6;transform:rotate(45deg);"></div><div style="left:27.10px;top:463.92px;width:5.20px;height:1.00px;background:#b9bfc6;border-radius:1px;"></div><span class="t" style="top:462.10px;font-size:4.7px;left:34.80px;transform:scaleX(0.87);transform-origin:0 50%;">Probe Plot Group 11 <i>(pg11)</i></span><div style="left:22.00px;top:470.55px;width:1.5px;height:1.5px;border-right:.5px solid #a4acb6;border-top:.5px solid #a4acb6;transform:rotate(45deg);"></div><div style="left:27.10px;top:470.95px;width:5.20px;height:1.00px;background:#b9bfc6;border-radius:1px;"></div><span class="t" style="top:469.13px;font-size:4.7px;left:34.80px;transform:scaleX(0.87);transform-origin:0 50%;">Probe Plot Group 12 <i>(pg12)</i></span></div></div><div style="left:4.30px;top:476.40px;width:113.20px;height:5.40px;background:#f0f1f3;"></div><div style="left:26.30px;top:477.00px;width:78.00px;height:4.20px;background:#d9dbdf;"></div><div style="left:127.60px;top:49.80px;width:138.10px;height:454.20px;background:#fcfdff;"></div><span class="t" style="top:52.92px;font-size:8.3px;color:#79b4e2;left:130.20px;transform:scaleX(0.87);transform-origin:0 50%;">Settings</span><div class="tr" style="left:255.05px;top:56.38px;border-left:1.25px solid transparent;border-right:1.25px solid transparent;border-top:1.69px solid #333;"></div><div style="left:261.50px;top:55.60px;width:1.30px;height:2.80px;background:#222;"></div><span class="t" style="top:63.94px;font-size:5.6px;color:#9cc8ea;left:130.20px;transform:scaleX(0.87);transform-origin:0 50%;">3D Plot Group</span><div style="left:130.90px;top:72.20px;width:4.20px;height:3.40px;background:#b7359b;border-radius:.5px;"></div><span class="t" style="top:71.68px;font-size:4.7px;color:#222;left:137.40px;transform:scaleX(0.87);transform-origin:0 50%;">Plot</span><div style="left:144.60px;top:73.60px;width:3.00px;height:0.80px;background:#e7a9c6;"></div><div style="left:151.00px;top:73.60px;width:3.00px;height:0.80px;background:#cfd4da;"></div><div style="left:157.40px;top:73.60px;width:3.00px;height:0.80px;background:#e7a9c6;"></div><div style="left:163.60px;top:73.60px;width:3.00px;height:0.80px;background:#e7a9c6;"></div><div style="left:0;top:0;width:10px;height:10px;transform-origin:0 0;transform:matrix(0.99457,0,0,0.99457,0.303,0.063);"><span class="t" style="top:83.68px;font-size:4.7px;color:#222;left:131.50px;transform:scaleX(0.87);transform-origin:0 50%;">Label:</span><div style="left:145.00px;top:82.30px;width:109.00px;height:7.40px;background:#fff;overflow:hidden;border:.5px solid #d5dae0;box-sizing:border-box;"><span class="t" style="top:0.48px;font-size:4.7px;color:#222;left:1.10px;transform:scaleX(0.87);transform-origin:0 50%;">3D Plot Group 1</span></div><div style="left:258.10px;top:83.00px;width:5.60px;height:6.00px;background:#f3f5f8;border:.5px solid #d5dae0;box-sizing:border-box;"></div><div style="left:259.60px;top:84.70px;width:2.60px;height:2.60px;background:#a9d3b4;"></div><div style="left:127.40px;top:93.60px;width:139.10px;height:8.60px;background:#dfe8f4;"></div><div class="tr" style="left:128.96px;top:97.38px;border-left:1.4375px solid transparent;border-right:1.4375px solid transparent;border-top:1.94px solid #333;"></div><span class="t" style="top:95.32px;font-size:5.3px;color:#222;left:137.20px;transform:scaleX(0.87);transform-origin:0 50%;">Data</span><span class="t" style="top:107.38px;font-size:4.7px;color:#222;left:131.50px;transform:scaleX(0.87);transform-origin:0 50%;">Dataset:</span><div style="left:150.50px;top:106.10px;width:103.50px;height:7.20px;background:#e9edf3;border:.4px solid #dde2e8;box-sizing:border-box;"></div><span class="t" style="top:107.38px;font-size:4.7px;color:#222;left:154.70px;transform:scaleX(0.87);transform-origin:0 50%;">Study 1/Solution 1 (sol1) {dset1}</span><div class="tr" style="left:248.95px;top:109.28px;border-left:1.25px solid transparent;border-right:1.25px solid transparent;border-top:1.69px solid #333;"></div><div style="left:258.10px;top:106.70px;width:5.60px;height:6.00px;background:#f3f5f8;border:.5px solid #d5dae0;box-sizing:border-box;"></div><div style="left:259.60px;top:108.40px;width:2.60px;height:2.60px;background:#a9d3b4;"></div><span class="t" style="top:117.38px;font-size:4.7px;color:#222;left:131.50px;transform:scaleX(0.87);transform-origin:0 50%;">Time (s):</span><div style="left:150.50px;top:116.10px;width:115.00px;height:7.20px;background:#e9edf3;border:.4px solid #dde2e8;box-sizing:border-box;"></div><span class="t" style="top:117.38px;font-size:4.7px;color:#222;left:154.70px;transform:scaleX(0.87);transform-origin:0 50%;">8248.1103</span><div class="tr" style="left:260.45px;top:119.28px;border-left:1.25px solid transparent;border-right:1.25px solid transparent;border-top:1.69px solid #333;"></div><div style="left:127.40px;top:127.30px;width:139.10px;height:8.60px;background:#dfe8f4;"></div><div style="left:128.80px;top:130.80px;width:1.5px;height:1.5px;border-right:.5px solid #b9c0c8;border-top:.5px solid #b9c0c8;transform:rotate(45deg);"></div><span class="t" style="top:129.02px;font-size:5.3px;color:#222;left:137.20px;transform:scaleX(0.87);transform-origin:0 50%;">Selection</span><div style="left:127.40px;top:137.00px;width:139.10px;height:8.60px;background:#dfe8f4;"></div><div style="left:128.80px;top:140.50px;width:1.5px;height:1.5px;border-right:.5px solid #b9c0c8;border-top:.5px solid #b9c0c8;transform:rotate(45deg);"></div><span class="t" style="top:138.72px;font-size:5.3px;color:#222;left:137.20px;transform:scaleX(0.87);transform-origin:0 50%;">Title</span><div style="left:127.40px;top:147.10px;width:139.10px;height:8.60px;background:#dfe8f4;"></div><div class="tr" style="left:128.96px;top:150.88px;border-left:1.4375px solid transparent;border-right:1.4375px solid transparent;border-top:1.94px solid #333;"></div><span class="t" style="top:148.82px;font-size:5.3px;color:#222;left:137.20px;transform:scaleX(0.87);transform-origin:0 50%;">Plot Settings</span><span class="t" style="top:161.28px;font-size:4.7px;color:#222;left:131.50px;transform:scaleX(0.87);transform-origin:0 50%;">View:</span><div style="left:145.00px;top:160.00px;width:109.00px;height:7.20px;background:#e9edf3;border:.4px solid #dde2e8;box-sizing:border-box;"></div><span class="t" style="top:161.28px;font-size:4.7px;color:#222;left:149.20px;transform:scaleX(0.87);transform-origin:0 50%;">Automatic</span><div class="tr" style="left:248.95px;top:163.17px;border-left:1.25px solid transparent;border-right:1.25px solid transparent;border-top:1.69px solid #333;"></div><div style="left:258.10px;top:160.60px;width:5.60px;height:6.00px;background:#f3f5f8;border:.5px solid #d5dae0;box-sizing:border-box;"></div><div style="left:259.60px;top:162.30px;width:2.60px;height:2.60px;background:#a9d3b4;"></div><div style="left:131.80px;top:170.20px;width:4.20px;height:4.20px;background:#fff;border:.45px solid #777;box-sizing:border-box;"></div><span class="t" style="top:169.98px;font-size:4.7px;color:#222;left:139.00px;transform:scaleX(0.87);transform-origin:0 50%;">Show hidden entities</span><div style="left:131.80px;top:178.00px;width:4.20px;height:4.20px;background:#fff;border:.45px solid #777;box-sizing:border-box;"></div><span class="t" style="top:177.78px;font-size:4.7px;color:#222;left:139.00px;transform:scaleX(0.87);transform-origin:0 50%;">Propagate hiding to lower dimensions</span><div style="left:131.00px;top:188.00px;width:135.00px;height:24.30px;border:.5px solid #e3e7ec;box-sizing:border-box;"></div><div style="left:133.00px;top:185.50px;width:40.00px;height:5.00px;background:#fcfdff;"></div><div style="left:133.30px;top:185.90px;width:4.20px;height:4.20px;background:#fff;border:.45px solid #777;box-sizing:border-box;"></div><span class="t" style="top:185.68px;font-size:4.7px;color:#222;left:140.00px;transform:scaleX(0.87);transform-origin:0 50%;">Plot dataset edges</span><span class="t" style="top:194.68px;font-size:4.7px;color:#a9b0b8;left:133.50px;transform:scaleX(0.87);transform-origin:0 50%;">Color:</span><div style="left:149.60px;top:193.40px;width:111.30px;height:7.20px;background:#f3f5f8;border:.4px solid #dde2e8;box-sizing:border-box;"></div><span class="t" style="top:194.68px;font-size:4.7px;color:#a9b0b8;left:153.80px;transform:scaleX(0.87);transform-origin:0 50%;">From theme</span><div class="tr" style="left:255.85px;top:196.57px;border-left:1.25px solid transparent;border-right:1.25px solid transparent;border-top:1.69px solid #c3c8ce;"></div><span class="t" style="top:204.28px;font-size:4.7px;color:#a9b0b8;left:133.50px;transform:scaleX(0.87);transform-origin:0 50%;">Frame:</span><div style="left:149.60px;top:203.00px;width:111.30px;height:7.20px;background:#f3f5f8;border:.4px solid #dde2e8;box-sizing:border-box;"></div><span class="t" style="top:204.28px;font-size:4.7px;color:#a9b0b8;left:153.80px;transform:scaleX(0.87);transform-origin:0 50%;">Material  (X, Y, Z)</span><div class="tr" style="left:255.85px;top:206.17px;border-left:1.25px solid transparent;border-right:1.25px solid transparent;border-top:1.69px solid #c3c8ce;"></div><div style="left:127.40px;top:216.60px;width:139.10px;height:8.60px;background:#dfe8f4;"></div><div class="tr" style="left:128.96px;top:220.38px;border-left:1.4375px solid transparent;border-right:1.4375px solid transparent;border-top:1.94px solid #333;"></div><span class="t" style="top:218.32px;font-size:5.3px;color:#222;left:137.20px;transform:scaleX(0.87);transform-origin:0 50%;">Color Legend</span><div style="left:131.00px;top:231.60px;width:135.00px;height:39.60px;border:.5px solid #e3e7ec;box-sizing:border-box;"></div><div style="left:133.00px;top:229.00px;width:30.00px;height:5.00px;background:#fcfdff;"></div><div style="left:133.30px;top:229.50px;width:4.20px;height:4.20px;background:#fff;border:.45px solid #777;box-sizing:border-box;"></div><span class="t" style="top:229.28px;font-size:4.7px;color:#222;left:140.00px;transform:scaleX(0.87);transform-origin:0 50%;">Show legends</span><div style="left:134.90px;top:237.00px;width:4.20px;height:4.20px;background:#fff;border:.45px solid #d5d9de;box-sizing:border-box;"></div><span class="t" style="top:236.78px;font-size:4.7px;color:#a9b0b8;left:141.50px;transform:scaleX(0.87);transform-origin:0 50%;">Show maximum and minimum values</span><div style="left:134.90px;top:244.80px;width:4.20px;height:4.20px;background:#fff;border:.45px solid #d5d9de;box-sizing:border-box;"></div><span class="t" style="top:244.58px;font-size:4.7px;color:#a9b0b8;left:141.50px;transform:scaleX(0.87);transform-origin:0 50%;">Show units</span><span class="t" style="top:253.28px;font-size:4.7px;color:#a9b0b8;left:133.50px;transform:scaleX(0.87);transform-origin:0 50%;">Position:</span><div style="left:153.00px;top:252.00px;width:107.90px;height:7.20px;background:#f3f5f8;border:.4px solid #dde2e8;box-sizing:border-box;"></div><span class="t" style="top:253.28px;font-size:4.7px;color:#a9b0b8;left:157.20px;transform:scaleX(0.87);transform-origin:0 50%;">Right</span><div class="tr" style="left:255.85px;top:255.17px;border-left:1.25px solid transparent;border-right:1.25px solid transparent;border-top:1.69px solid #c3c8ce;"></div><span class="t" style="top:263.08px;font-size:4.7px;color:#a9b0b8;left:133.50px;transform:scaleX(0.87);transform-origin:0 50%;">Text color:</span><div style="left:153.00px;top:261.80px;width:107.90px;height:7.20px;background:#f3f5f8;border:.4px solid #dde2e8;box-sizing:border-box;"></div><span class="t" style="top:263.08px;font-size:4.7px;color:#a9b0b8;left:157.20px;transform:scaleX(0.87);transform-origin:0 50%;">From theme</span><div class="tr" style="left:255.85px;top:264.97px;border-left:1.25px solid transparent;border-right:1.25px solid transparent;border-top:1.69px solid #c3c8ce;"></div><div style="left:127.40px;top:275.60px;width:139.10px;height:8.60px;background:#dfe8f4;"></div><div style="left:128.80px;top:279.10px;width:1.5px;height:1.5px;border-right:.5px solid #b9c0c8;border-top:.5px solid #b9c0c8;transform:rotate(45deg);"></div><span class="t" style="top:277.32px;font-size:5.3px;color:#222;left:137.20px;transform:scaleX(0.87);transform-origin:0 50%;">Number Format</span><div style="left:127.40px;top:285.60px;width:139.10px;height:8.60px;background:#dfe8f4;"></div><div style="left:128.80px;top:289.10px;width:1.5px;height:1.5px;border-right:.5px solid #b9c0c8;border-top:.5px solid #b9c0c8;transform:rotate(45deg);"></div><span class="t" style="top:287.32px;font-size:5.3px;color:#222;left:137.20px;transform:scaleX(0.87);transform-origin:0 50%;">Plot Array</span><div style="left:127.40px;top:295.60px;width:139.10px;height:8.60px;background:#dfe8f4;"></div><div style="left:128.80px;top:299.10px;width:1.5px;height:1.5px;border-right:.5px solid #b9c0c8;border-top:.5px solid #b9c0c8;transform:rotate(45deg);"></div><span class="t" style="top:297.32px;font-size:5.3px;color:#222;left:137.20px;transform:scaleX(0.87);transform-origin:0 50%;">Window Settings</span></div><div style="left:267.50px;top:49.80px;width:637.00px;height:337.80px;background:linear-gradient(#fcfdff 0%,#f6f9fe 35%,#e3ecf9 100%);"></div><span class="t" style="top:52.92px;font-size:8.3px;color:#79b4e2;left:270.50px;transform:scaleX(0.87);transform-origin:0 50%;">Graphics</span><div class="tr" style="left:895.25px;top:56.38px;border-left:1.25px solid transparent;border-right:1.25px solid transparent;border-top:1.69px solid #333;"></div><div style="left:900.70px;top:55.60px;width:1.30px;height:2.80px;background:#222;"></div><div style="left:895.90px;top:73.20px;width:4.20px;height:3.20px;background:#3f6f9f;border-radius:.6px;"></div><div style="left:271.70px;top:63.80px;width:3.20px;height:3.20px;background:#8fbde6;border-radius:.5px;"></div><div style="left:279.80px;top:63.80px;width:3.20px;height:3.20px;background:#8fbde6;border-radius:.5px;"></div><div style="left:287.60px;top:63.80px;width:3.20px;height:3.20px;background:#9cc3e6;border-radius:.5px;"></div><div style="left:302.10px;top:63.80px;width:3.20px;height:3.20px;background:#c5cad0;border-radius:.5px;"></div><div style="left:312.20px;top:63.80px;width:3.20px;height:3.20px;background:#b9c0c8;border-radius:.5px;"></div><div style="left:327.70px;top:63.80px;width:3.20px;height:3.20px;background:#c9cfd6;border-radius:.5px;"></div><div style="left:335.70px;top:63.80px;width:3.20px;height:3.20px;background:#c9cfd6;border-radius:.5px;"></div><div style="left:343.20px;top:63.80px;width:3.20px;height:3.20px;background:#c9cfd6;border-radius:.5px;"></div><div style="left:350.00px;top:61.80px;width:6.80px;height:7.20px;background:#7fbdee;border-radius:.6px;"></div><div style="left:351.90px;top:63.50px;width:3.00px;height:3.80px;background:#d9ecfb;"></div><div style="left:362.40px;top:63.80px;width:3.20px;height:3.20px;background:#b9c0c8;border-radius:.5px;"></div><div style="left:379.10px;top:63.80px;width:3.20px;height:3.20px;background:#b9c0c8;border-radius:.5px;"></div><div style="left:396.00px;top:63.80px;width:3.20px;height:3.20px;background:#3f7fc8;border-radius:.5px;"></div><div style="left:410.60px;top:63.80px;width:3.20px;height:3.20px;background:#b9c0c8;border-radius:.5px;"></div><div style="left:423.70px;top:61.80px;width:6.80px;height:7.20px;background:#7fbdee;border-radius:.6px;"></div><div style="left:425.60px;top:63.50px;width:3.00px;height:3.80px;background:#d9ecfb;"></div><div style="left:433.60px;top:63.80px;width:3.20px;height:3.20px;background:#9cc3e6;border-radius:.5px;"></div><div style="left:441.50px;top:63.80px;width:3.20px;height:3.20px;background:#d5c9b9;border-radius:.5px;"></div><div style="left:449.50px;top:63.80px;width:3.20px;height:3.20px;background:#3f93d3;border-radius:.5px;"></div><div style="left:464.00px;top:63.80px;width:3.20px;height:3.20px;background:#3f6f9f;border-radius:.5px;"></div><div style="left:472.10px;top:63.80px;width:3.20px;height:3.20px;background:#9cc3e6;border-radius:.5px;"></div><div class="tr" style="left:294.98px;top:65.14px;border-left:1.125px solid transparent;border-right:1.125px solid transparent;border-top:1.52px solid #333;"></div><div class="tr" style="left:320.18px;top:65.14px;border-left:1.125px solid transparent;border-right:1.125px solid transparent;border-top:1.52px solid #333;"></div><div class="tr" style="left:369.38px;top:65.14px;border-left:1.125px solid transparent;border-right:1.125px solid transparent;border-top:1.52px solid #333;"></div><div class="tr" style="left:386.38px;top:65.14px;border-left:1.125px solid transparent;border-right:1.125px solid transparent;border-top:1.52px solid #333;"></div><div class="tr" style="left:403.57px;top:65.14px;border-left:1.125px solid transparent;border-right:1.125px solid transparent;border-top:1.52px solid #333;"></div><div class="tr" style="left:418.48px;top:65.14px;border-left:1.125px solid transparent;border-right:1.125px solid transparent;border-top:1.52px solid #333;"></div><div class="tr" style="left:456.88px;top:65.14px;border-left:1.125px solid transparent;border-right:1.125px solid transparent;border-top:1.52px solid #333;"></div><svg style="left:0;top:0;width:909.0px;height:504.0px" viewBox="0 0 909.0 504.0"><g transform="scale(1.26374) translate(-992.26 0.70)"><text x="1210" y="61.6" font-size="3.8" font-weight="bold" fill="#222" textLength="31" lengthAdjust="spacingAndGlyphs">Time=8248.1103 s</text><text x="1315" y="62.2" font-size="3.6" font-weight="bold" fill="#222" textLength="280" lengthAdjust="spacingAndGlyphs">Surface: z-coordinate (m)  Surface: z-coordinate (m)  Surface: abs(br.Qm) (kg/(m³·s))  Surface: Absolute pressure (kPa)  Line: 1 (1)  Line: 1 (1)  Line: 1 (1)  Arrow Surface:</text><defs><linearGradient id="tfB" x1="1351.8" x2="1621.1" y1="0" y2="0" gradientUnits="userSpaceOnUse"><stop offset="0" stop-color="#a80a08"/><stop offset=".25" stop-color="#d20c06"/><stop offset=".45" stop-color="#fb1404"/><stop offset=".6" stop-color="#fb3a06"/><stop offset=".7" stop-color="#fa7a0a"/><stop offset=".78" stop-color="#f9b010"/><stop offset=".83" stop-color="#f6e816"/><stop offset=".88" stop-color="#9fe84a"/><stop offset=".92" stop-color="#3fdcc0"/><stop offset="1" stop-color="#4fdc9a"/></linearGradient><radialGradient id="thB" cx="1597.5" cy="154.0" r="15" gradientUnits="userSpaceOnUse"><stop offset="0" stop-color="#0a1ec8"/><stop offset=".3" stop-color="#1466e0"/><stop offset=".62" stop-color="#2ad0e0" stop-opacity=".9"/><stop offset="1" stop-color="#3fdcc0" stop-opacity="0"/></radialGradient><linearGradient id="cpB" x1="1381.4" x2="1621.1" y1="0" y2="0" gradientUnits="userSpaceOnUse"><stop offset="0" stop-color="#e0120a"/><stop offset=".14" stop-color="#f4300a"/><stop offset=".27" stop-color="#f98f0a"/><stop offset=".40" stop-color="#f6e016"/><stop offset=".50" stop-color="#9fe84a"/><stop offset=".58" stop-color="#2ad6d6"/><stop offset=".66" stop-color="#1466e0"/><stop offset=".74" stop-color="#0a1ec8"/><stop offset="1" stop-color="#0a12a8"/></linearGradient><linearGradient id="bbB" x1="1381.4" x2="1598.5" y1="0" y2="0" gradientUnits="userSpaceOnUse"><stop offset="0" stop-color="#0a14b8"/><stop offset=".42" stop-color="#0a1ed0"/><stop offset=".62" stop-color="#1470e0"/><stop offset=".8" stop-color="#2ac6e6"/><stop offset="1" stop-color="#7fe0d0"/></linearGradient><linearGradient id="lsB" x1="1351.8" x2="1381.4" y1="0" y2="0" gradientUnits="userSpaceOnUse"><stop offset="0" stop-color="#d00e0a"/><stop offset="1" stop-color="#a80a08"/></linearGradient></defs><polygon points="1358.8,228.5 1355.1,238.1 1352.0,247.2 1353.7,266.0 1362.2,283.1 1380.9,299.8 1380.9,248.9 1374.2,244.6 1365.6,236.9" fill="url(#lsB)"/><polygon points="1380.9,229.2 1621.5,149.0 1621.5,206.0 1380.9,299.8" fill="url(#cpB)"/><polygon points="1557.4,181.6 1595.2,160.0 1608.5,154.7 1621.5,150.4 1621.5,206.0 1608.5,199.9 1596.8,194.9 1583.5,189.4 1574.4,186.1" fill="#eef4fb"/><polygon points="1380.9,229.2 1530.0,175.8 1559.6,165.5 1586.5,157.0 1597.5,157.3 1595.2,160.0 1586.4,163.8 1556.7,181.6 1530.0,194.9 1480.6,213.5 1380.9,248.9" fill="url(#bbB)"/><polygon points="1380.9,229.2 1374.2,224.1 1365.6,216.4 1357.1,206.2 1352.0,197.9 1352.8,211.3 1358.8,228.4 1365.6,236.9 1374.2,244.6 1380.9,248.9" fill="#0a16be"/><polygon points="1380.9,229.2 1374.2,224.1 1365.6,216.4 1357.1,206.2 1352.0,197.9 1352.0,177.1 1356.3,162.8 1367.6,147.7 1385.2,133.9 1407.8,122.6 1435.4,113.8 1465.5,109.6 1493.1,108.3 1523.2,110.1 1550.8,115.1 1575.9,122.6 1596.0,131.4 1611.1,138.9 1620.5,144.5 1621.5,149.0 1608.5,153.2 1602.3,155.7 1597.5,157.3 1591.0,156.5 1586.5,157.0 1559.6,165.5 1530.0,175.8" fill="url(#tfB)"/><polygon points="1380.9,229.2 1374.2,224.1 1365.6,216.4 1357.1,206.2 1352.0,197.9 1352.0,177.1 1356.3,162.8 1367.6,147.7 1385.2,133.9 1407.8,122.6 1435.4,113.8 1465.5,109.6 1493.1,108.3 1523.2,110.1 1550.8,115.1 1575.9,122.6 1596.0,131.4 1611.1,138.9 1620.5,144.5 1621.5,149.0 1608.5,153.2 1602.3,155.7 1597.5,157.3 1591.0,156.5 1586.5,157.0 1559.6,165.5 1530.0,175.8" fill="url(#thB)"/><polyline points="1621.5,149.0 1608.5,153.2 1602.3,155.7 1597.5,157.3 1591.0,156.5 1586.5,157.0 1570.9,162.0" fill="none" stroke="#e8401a" stroke-width="1.1" stroke-opacity=".85"/><path d="M1386.4,247.4L1386.4,297.7M1391.9,245.6L1391.9,295.5M1397.3,243.8L1397.3,293.4M1402.8,242.0L1402.8,291.3M1408.3,240.2L1408.3,289.1M1413.7,238.3L1413.7,287.0M1419.2,236.5L1419.2,284.9M1424.7,234.7L1424.7,282.7M1430.1,232.9L1430.1,280.6M1435.6,231.0L1435.6,278.5M1441.1,229.2L1441.1,276.3M1446.6,227.4L1446.6,274.2M1452.0,225.6L1452.0,272.1M1457.5,223.7L1457.5,269.9M1463.0,221.9L1463.0,267.8M1468.4,220.1L1468.4,265.7M1473.9,218.3L1473.9,263.6M1479.4,216.5L1479.4,261.4M1484.8,214.6L1484.8,259.3M1490.3,212.8L1490.3,257.2M1495.8,211.0L1495.8,255.0M1501.2,209.2L1501.2,252.9M1506.7,207.3L1506.7,250.8M1512.2,205.5L1512.2,248.6M1517.6,203.7L1517.6,246.5M1523.1,201.9L1523.1,244.4M1528.6,200.0L1528.6,242.2M1534.0,197.3L1534.0,240.1M1539.5,194.2L1539.5,238.0M1545.0,191.1L1545.0,235.8M1550.4,188.1L1550.4,233.7M1555.9,185.0L1555.9,231.6M1561.4,181.9L1561.4,229.5M1566.8,178.8L1566.8,227.3M1572.3,175.7L1572.3,225.2M1577.8,172.6L1577.8,223.1M1583.2,169.5L1583.2,220.9M1588.7,166.4L1588.7,218.8M1594.2,163.4L1594.2,216.7M1599.6,160.8L1599.6,214.5M1605.1,159.0L1605.1,212.4M1610.6,157.1L1610.6,210.3M1616.1,155.3L1616.1,208.1M1380.9,253.1L1621.5,157.2M1380.9,257.4L1621.5,161.6M1380.9,261.6L1621.5,166.1M1380.9,265.9L1621.5,170.5M1380.9,270.1L1621.5,174.9M1380.9,274.3L1621.5,179.4M1380.9,278.6L1621.5,183.8M1380.9,282.8L1621.5,188.3M1380.9,287.1L1621.5,192.7M1380.9,291.3L1621.5,197.1M1380.9,295.5L1621.5,201.6" stroke="#2a3a7a" stroke-opacity=".42" stroke-width=".35" fill="none"/><polygon points="1380.9,214.7 1621.5,122.1 1621.5,206.0 1380.9,299.8" fill="none" stroke="#333" stroke-width=".55"/><polyline points="1380.9,299.8 1621.5,206.0" fill="none" stroke="#e8302a" stroke-width=".9"/><line x1="1621.5" y1="149.7" x2="1647.9" y2="138.3" stroke="#555" stroke-width="1.6" stroke-dasharray="1 .5"/><polygon points="1468.0,275.7 1468.0,280.7 1469.3,279.5 1470.4,281.5 1471.2,281.0 1470.2,279.1 1471.8,279.0" fill="#111"/><path d="M1217.2,284V291" stroke="#2a6ad0" stroke-width=".6"/><path d="M1217.2,291L1224,288.8" stroke="#e82a4a" stroke-width=".6"/><path d="M1217.2,291L1211,288.3" stroke="#2a9a4a" stroke-width=".6"/><text x="1216" y="283.4" font-size="4.2" font-weight="bold" fill="#444">z</text><text x="1224.5" y="289.8" font-size="4.2" font-weight="bold" fill="#444">x</text><text x="1207.2" y="288.6" font-size="4.2" font-weight="bold" fill="#444">y</text></g></svg><div style="left:267.50px;top:389.20px;width:637.00px;height:114.80px;background:#fbfcfe;"></div><div style="left:268.30px;top:392.20px;width:31.00px;height:8.60px;background:#fff;"></div><span class="t" style="top:394.02px;font-size:5.3px;color:#4a9bdc;left:270.20px;transform:scaleX(0.87);transform-origin:0 50%;">Messages</span><span class="t" style="top:394.40px;font-size:4.5px;color:#c3c8ce;left:295.00px;transform:translateX(-50%) scaleX(1);transform-origin:50% 50%;">×</span><div style="left:301.80px;top:392.70px;width:20.30px;height:7.90px;background:#e9ecf0;"></div><span class="t" style="top:394.02px;font-size:5.3px;color:#222;left:303.80px;transform:scaleX(0.87);transform-origin:0 50%;">Progress</span><div style="left:324.40px;top:392.70px;width:11.40px;height:7.90px;background:#e9ecf0;"></div><span class="t" style="top:394.02px;font-size:5.3px;color:#222;left:326.40px;transform:scaleX(0.87);transform-origin:0 50%;">Log</span><div style="left:338.00px;top:392.70px;width:41.20px;height:7.90px;background:#e9ecf0;"></div><span class="t" style="top:394.02px;font-size:5.3px;color:#222;left:340.00px;transform:scaleX(0.87);transform-origin:0 50%;">External Process</span><span class="t" style="top:394.40px;font-size:4.5px;color:#c3c8ce;left:376.20px;transform:translateX(-50%) scaleX(1);transform-origin:50% 50%;">×</span><div style="left:384.20px;top:392.70px;width:65.50px;height:7.90px;background:#e9ecf0;"></div><span class="t" style="top:394.02px;font-size:5.3px;color:#222;left:386.20px;transform:scaleX(0.87);transform-origin:0 50%;">Accumulated Probe Table 1</span><span class="t" style="top:394.40px;font-size:4.5px;color:#c3c8ce;left:446.70px;transform:translateX(-50%) scaleX(1);transform-origin:50% 50%;">×</span><div class="tr" style="left:895.25px;top:396.38px;border-left:1.25px solid transparent;border-right:1.25px solid transparent;border-top:1.69px solid #333;"></div><div style="left:900.70px;top:395.60px;width:1.30px;height:2.80px;background:#222;"></div><div style="left:269.70px;top:405.30px;width:1.00px;height:3.20px;background:#e9a93a;transform:rotate(-35deg);"></div><div style="left:275.10px;top:405.00px;width:3.40px;height:3.20px;border:.6px solid #8cc4ea;box-sizing:border-box;"></div><div style="left:268.30px;top:410.60px;width:634.60px;height:71.90px;background:#fdfeff;border:.5px solid #e3e7ec;box-sizing:border-box;"></div><span class="t" style="top:412.68px;font-size:4.7px;color:#222;left:269.50px;transform:scaleX(0.87);transform-origin:0 50%;">COMSOL Multiphysics 6.2.0.339</span><span class="t" style="top:418.58px;font-size:4.7px;color:#222;left:269.50px;transform:scaleX(0.87);transform-origin:0 50%;">[Mar 21, 2024, 10:12 AM] Your COMSOL 6.2 installation is up to date.</span><span class="t" style="top:424.48px;font-size:4.7px;color:#222;left:269.50px;transform:scaleX(0.87);transform-origin:0 50%;">[Mar 21, 2024, 10:13 AM] Opened file: C:\Users\Kay.BFI\Desktop\Bm.mph</span><div style="left:0.00px;top:0.00px;width:3.20px;height:504.00px;background:#fbfcfe;"></div><div style="left:3.20px;top:0.00px;width:1.00px;height:504.00px;background:#ea6a6a;"></div><div style="left:9.00px;top:483.20px;width:103.30px;height:16.00px;background:#7b7d80;border-radius:2px;"></div><span class="t" style="top:486.14px;font-size:9.6px;color:#f4f4f4;left:13.50px;transform:scaleX(0.86);transform-origin:0 50%;font-weight:normal;">Yalcin Kaymak (External)</span><div style="left:119.30px;top:483.20px;width:48.50px;height:16.00px;background:#7b7d80;border-radius:2px;"></div><div style="left:127.00px;top:491.00px;width:9.00px;height:0.90px;background:#a6a8ab;"></div><div style="left:147.00px;top:491.00px;width:9.00px;height:0.90px;background:#e8e8e8;"></div><div style="left:151.10px;top:486.90px;width:0.90px;height:9.00px;background:#e8e8e8;"></div><span class="t" style="top:489.48px;font-size:4.2px;color:#444;left:664.00px;transform:scaleX(1);transform-origin:0 50%;">1:53:08 / 1:59:58</span></div></div>
<div class="clip" id="wD" style="left:948.2px;top:399.6px;width:826px;height:448.2px;"><div class="win" style="left:-0.34px;top:0.30px;transform:scale(0.915);"><div style="left:0.00px;top:0.00px;width:909.00px;height:504.00px;background:#eef2f7;"></div><div style="left:0.00px;top:0.00px;width:909.00px;height:8.30px;background:#fdfeff;"></div><div style="left:4.60px;top:2.40px;width:3.20px;height:3.20px;background:#1d4e89;border-radius:50%;"></div><div style="left:15.20px;top:2.60px;width:3.60px;height:3.00px;background:#d9dde2;border-radius:.5px;"></div><div style="left:23.80px;top:2.60px;width:3.60px;height:3.00px;background:#2f7fc2;border-radius:.5px;"></div><div style="left:33.20px;top:2.60px;width:3.60px;height:3.00px;background:#9fc6e6;border-radius:.5px;"></div><div style="left:41.80px;top:2.60px;width:3.60px;height:3.00px;background:#7fb3de;border-radius:.5px;"></div><div style="left:51.30px;top:2.60px;width:1.40px;height:1.20px;background:#555;border-radius:.5px;"></div><div style="left:58.20px;top:2.60px;width:3.60px;height:3.00px;background:#b9c0c8;border-radius:.5px;"></div><div style="left:64.20px;top:2.60px;width:3.60px;height:3.00px;background:#c9cfd6;border-radius:.5px;"></div><div style="left:70.90px;top:2.60px;width:3.60px;height:3.00px;background:#c9cfd6;border-radius:.5px;"></div><div style="left:76.90px;top:2.60px;width:3.60px;height:3.00px;background:#d5dae0;border-radius:.5px;"></div><div style="left:85.20px;top:2.60px;width:3.60px;height:3.00px;background:#c3cad2;border-radius:.5px;"></div><div style="left:93.20px;top:2.60px;width:3.60px;height:3.00px;background:#c3cad2;border-radius:.5px;"></div><div style="left:102.20px;top:2.60px;width:3.60px;height:3.00px;background:#9fc6e6;border-radius:.5px;"></div><div style="left:111.90px;top:2.60px;width:3.60px;height:3.00px;background:#2f7fc2;border-radius:.5px;"></div><div style="left:120.20px;top:2.60px;width:3.60px;height:3.00px;background:#3f93d3;border-radius:.5px;"></div><div style="left:129.20px;top:2.60px;width:3.60px;height:3.00px;background:#e0a23c;border-radius:.5px;"></div><div style="left:138.20px;top:2.60px;width:3.60px;height:3.00px;background:#9fc6e6;border-radius:.5px;"></div><div class="tr" style="left:145.75px;top:3.67px;border-left:1.25px solid transparent;border-right:1.25px solid transparent;border-top:1.69px solid #444;"></div><div style="left:356px;top:1.5px;width:198px;height:8px;background:#2a62a6;clip-path:polygon(0 0,100% 0,96.5% 100%,3.5% 100%);"></div><span class="t" style="top:2.92px;font-size:4.3px;color:#c9dcf2;left:455.00px;transform:translateX(-50%) scaleX(0.87);transform-origin:50% 50%;">10.12.217.100</span><div style="left:367.00px;top:3.60px;width:2.60px;height:2.60px;background:#e8f0fa;border-radius:.4px;"></div><div style="left:373.50px;top:3.40px;width:3.20px;height:3.00px;background:#dce8f6;clip-path:polygon(0 100%,100% 0,100% 100%);"></div><div style="left:523.50px;top:6.20px;width:3.20px;height:0.80px;background:#e8f0fa;"></div><div style="left:531.50px;top:3.40px;width:3.00px;height:3.00px;border:.6px solid #dce8f6;box-sizing:border-box;"></div><span class="t" style="top:1.50px;font-size:6.5px;color:#fff;left:541.50px;transform:translateX(-50%) scaleX(1);transform-origin:50% 50%;font-weight:bold;">×</span><div style="left:862.00px;top:4.30px;width:4.00px;height:0.45px;background:#8a8f96;"></div><div style="left:878.30px;top:2.40px;width:3.60px;height:3.60px;border:.45px solid #6f757c;box-sizing:border-box;"></div><span class="t" style="top:0.50px;font-size:7px;color:#6f757c;left:897.00px;transform:translateX(-50%) scaleX(1);transform-origin:50% 50%;">×</span><div style="left:0.00px;top:8.30px;width:909.00px;height:9.00px;background:#e7e9ec;"></div><div style="left:4.30px;top:9.00px;width:18.80px;height:7.80px;background:#2c7acb;"></div><span class="t" style="top:10.58px;font-size:4.7px;color:#d6e6f8;left:13.70px;transform:translateX(-50%) scaleX(0.87);transform-origin:50% 50%;">File</span><span class="t" style="top:10.46px;font-size:4.9px;color:#222;left:32.50px;transform:translateX(-50%) scaleX(0.87);transform-origin:50% 50%;">Home</span><span class="t" style="top:10.46px;font-size:4.9px;color:#222;left:54.70px;transform:translateX(-50%) scaleX(0.87);transform-origin:50% 50%;">Definitions</span><span class="t" style="top:10.46px;font-size:4.9px;color:#222;left:80.40px;transform:translateX(-50%) scaleX(0.87);transform-origin:50% 50%;">Geometry</span><span class="t" style="top:10.46px;font-size:4.9px;color:#222;left:104.30px;transform:translateX(-50%) scaleX(0.87);transform-origin:50% 50%;">Materials</span><span class="t" style="top:10.46px;font-size:4.9px;color:#222;left:125.70px;transform:translateX(-50%) scaleX(0.87);transform-origin:50% 50%;">Physics</span><span class="t" style="top:10.46px;font-size:4.9px;color:#222;left:143.70px;transform:translateX(-50%) scaleX(0.87);transform-origin:50% 50%;">Mesh</span><span class="t" style="top:10.46px;font-size:4.9px;color:#222;left:160.40px;transform:translateX(-50%) scaleX(0.87);transform-origin:50% 50%;">Study</span><span class="t" style="top:10.46px;font-size:4.9px;color:#222;left:178.70px;transform:translateX(-50%) scaleX(0.87);transform-origin:50% 50%;">Results</span><span class="t" style="top:10.46px;font-size:4.9px;color:#222;left:201.00px;transform:translateX(-50%) scaleX(0.87);transform-origin:50% 50%;">Developer</span><div style="left:215.55px;top:9.00px;width:38.50px;height:8.40px;background:#f9fbfe;"></div><span class="t" style="top:10.58px;font-size:4.7px;color:#4a9bdc;left:234.80px;transform:translateX(-50%) scaleX(0.87);transform-origin:50% 50%;">Probe Plot Group 9</span><div style="left:898.20px;top:11.30px;width:3.00px;height:3.00px;background:#2f7fc2;border-radius:.5px;"></div><div style="left:0.00px;top:17.30px;width:909.00px;height:30.20px;background:#f9fbfe;"></div><div style="left:0.00px;top:47.50px;width:909.00px;height:2.40px;background:#eceff3;"></div><div style="left:0;top:0;width:10px;height:10px;transform-origin:0 0;transform:matrix(.99454,0,0,1,.262,0);"><div style="left:9.90px;top:20.80px;width:7.60px;height:1.20px;background:#c9c3cc;"></div><div style="left:9.90px;top:22.30px;width:7.60px;height:5.20px;background:#b7359b;border-radius:.4px;"></div><div style="left:11.10px;top:24.50px;width:3.40px;height:0.80px;background:#f3d9ec;transform:rotate(-30deg);"></div><span class="t" style="top:30.78px;font-size:4.7px;color:#222;left:13.70px;transform:translateX(-50%) scaleX(0.87);transform-origin:50% 50%;">Plot</span><div style="left:24.30px;top:20.20px;width:7.40px;height:6.40px;background:#fbfcfe;border:.6px solid #b9bec6;border-top:1.4px solid #b9bec6;box-sizing:border-box;"></div><div style="left:27.90px;top:23.60px;width:5.80px;height:4.40px;background:#b7359b;border-radius:.3px;border-top:1px solid #8d8d96;box-sizing:border-box;"></div><span class="t" style="top:30.78px;font-size:4.7px;color:#222;left:28.70px;transform:translateX(-50%) scaleX(0.87);transform-origin:50% 50%;">Plot</span><span class="t" style="top:35.38px;font-size:4.7px;color:#222;left:27.40px;transform:translateX(-50%) scaleX(0.87);transform-origin:50% 50%;">In</span><div class="tr" style="left:30.61px;top:37.44px;border-left:1.125px solid transparent;border-right:1.125px solid transparent;border-top:1.52px solid #333;"></div><div style="left:37.50px;top:19.50px;width:0.50px;height:26.50px;background:#dfe4ea;"></div><div style="left:43.10px;top:20.30px;width:3.80px;height:3.60px;background:#c5cad0;border-radius:.5px;"></div><span class="t" style="top:19.78px;font-size:4.7px;color:#222;left:49.70px;transform:scaleX(0.87);transform-origin:0 50%;">Line Graph</span><div style="left:43.10px;top:28.00px;width:3.80px;height:3.60px;background:#c5cad0;border-radius:.5px;"></div><span class="t" style="top:27.48px;font-size:4.7px;color:#222;left:49.70px;transform:scaleX(0.87);transform-origin:0 50%;">Point Graph</span><div style="left:43.10px;top:35.70px;width:3.80px;height:3.60px;background:#c5cad0;border-radius:.5px;"></div><span class="t" style="top:35.18px;font-size:4.7px;color:#222;left:49.70px;transform:scaleX(0.87);transform-origin:0 50%;">Global</span><div style="left:74.70px;top:20.30px;width:3.80px;height:3.60px;background:#c8385c;border-radius:.5px;"></div><span class="t" style="top:19.78px;font-size:4.7px;color:#222;left:81.00px;transform:scaleX(0.87);transform-origin:0 50%;">Table Graph</span><div style="left:74.70px;top:28.00px;width:3.80px;height:3.60px;background:#c5cad0;border-radius:.5px;"></div><span class="t" style="top:27.48px;font-size:4.7px;color:#222;left:81.00px;transform:scaleX(0.87);transform-origin:0 50%;">Line Segments</span><div style="left:74.70px;top:35.70px;width:3.80px;height:3.60px;background:#c5cad0;border-radius:.5px;"></div><span class="t" style="top:35.18px;font-size:4.7px;color:#222;left:81.00px;transform:scaleX(0.87);transform-origin:0 50%;">Histogram</span><div style="left:112.10px;top:20.30px;width:3.80px;height:3.60px;background:#c8385c;border-radius:.5px;"></div><span class="t" style="top:19.78px;font-size:4.7px;color:#222;left:118.00px;transform:scaleX(0.87);transform-origin:0 50%;">Mesh</span><div style="left:112.10px;top:28.00px;width:3.80px;height:3.60px;background:#dfe3e8;border-radius:.5px;"></div><span class="t" style="top:27.48px;font-size:4.7px;color:#222;left:118.00px;transform:scaleX(0.87);transform-origin:0 50%;">Annotation</span><div style="left:143.90px;top:23.80px;width:9.00px;height:1.10px;background:#e0708c;border-radius:1px;"></div><div style="left:149.40px;top:21.60px;width:3.20px;height:3.20px;border:.8px solid #e0708c;border-radius:50%;box-sizing:border-box;"></div><span class="t" style="top:30.78px;font-size:4.7px;color:#222;left:148.40px;transform:translateX(-50%) scaleX(0.87);transform-origin:50% 50%;">More</span><span class="t" style="top:35.38px;font-size:4.7px;color:#222;left:147.10px;transform:translateX(-50%) scaleX(0.87);transform-origin:50% 50%;">Plots</span><div class="tr" style="left:153.38px;top:37.44px;border-left:1.125px solid transparent;border-right:1.125px solid transparent;border-top:1.52px solid #333;"></div><div style="left:159.40px;top:19.50px;width:0.50px;height:26.50px;background:#dfe4ea;"></div><div style="left:162.50px;top:20.30px;width:3.80px;height:3.60px;background:#dfe3e8;border-radius:.5px;opacity:.8;"></div><span class="t" style="top:19.78px;font-size:4.7px;color:#a9b0b8;left:169.00px;transform:scaleX(0.87);transform-origin:0 50%;">Color Expression</span><div style="left:162.50px;top:28.00px;width:3.80px;height:3.60px;background:#dfe3e8;border-radius:.5px;opacity:.8;"></div><span class="t" style="top:27.48px;font-size:4.7px;color:#a9b0b8;left:169.00px;transform:scaleX(0.87);transform-origin:0 50%;">Filter</span><div style="left:162.50px;top:35.70px;width:3.80px;height:3.60px;background:#dfe3e8;border-radius:.5px;opacity:.8;"></div><span class="t" style="top:35.18px;font-size:4.7px;color:#a9b0b8;left:169.00px;transform:scaleX(0.87);transform-origin:0 50%;">Graph Marker</span><div style="left:209.70px;top:23.80px;width:9.00px;height:1.10px;background:#e0708c;border-radius:1px;"></div><div style="left:215.20px;top:21.60px;width:3.20px;height:3.20px;border:.8px solid #e0708c;border-radius:50%;box-sizing:border-box;"></div><span class="t" style="top:30.78px;font-size:4.7px;color:#222;left:214.20px;transform:translateX(-50%) scaleX(0.87);transform-origin:50% 50%;">More</span><span class="t" style="top:35.38px;font-size:4.7px;color:#222;left:212.90px;transform:translateX(-50%) scaleX(0.87);transform-origin:50% 50%;">Attributes</span><div class="tr" style="left:224.27px;top:37.44px;border-left:1.125px solid transparent;border-right:1.125px solid transparent;border-top:1.52px solid #333;"></div><div style="left:227.70px;top:19.50px;width:0.50px;height:26.50px;background:#dfe4ea;"></div><div style="left:234.40px;top:20.60px;width:6.40px;height:5.60px;background:#f4f2f6;border:.6px solid #c9c3cc;box-sizing:border-box;"></div><div style="left:236.60px;top:22.80px;width:6.20px;height:5.40px;background:#e9dfe8;border:.6px solid #b9a9b9;box-sizing:border-box;"></div><span class="t" style="top:30.78px;font-size:4.7px;color:#222;left:238.60px;transform:translateX(-50%) scaleX(0.87);transform-origin:50% 50%;">Image</span><div style="left:252.80px;top:21.40px;width:2.60px;height:5.20px;background:#b7359b;border-radius:.3px;"></div><div style="left:256.00px;top:21.40px;width:2.60px;height:5.20px;background:#b7359b;border-radius:.3px;"></div><div style="left:259.20px;top:21.40px;width:2.60px;height:5.20px;background:#b7359b;border-radius:.3px;"></div><div style="left:252.40px;top:20.60px;width:10.00px;height:0.70px;background:#8d8d96;"></div><div style="left:252.40px;top:26.70px;width:10.00px;height:0.70px;background:#8d8d96;"></div><span class="t" style="top:30.78px;font-size:4.7px;color:#222;left:257.40px;transform:translateX(-50%) scaleX(0.87);transform-origin:50% 50%;">Animation</span><div class="tr" style="left:256.27px;top:37.44px;border-left:1.125px solid transparent;border-right:1.125px solid transparent;border-top:1.52px solid #333;"></div><div style="left:270.00px;top:19.50px;width:0.50px;height:26.50px;background:#dfe4ea;"></div><span class="t" style="top:43.08px;font-size:4.7px;color:#8f98a3;left:21.50px;transform:translateX(-50%) scaleX(0.87);transform-origin:50% 50%;">Plot</span><span class="t" style="top:43.08px;font-size:4.7px;color:#8f98a3;left:99.20px;transform:translateX(-50%) scaleX(0.87);transform-origin:50% 50%;">Add Plot</span><span class="t" style="top:43.08px;font-size:4.7px;color:#8f98a3;left:193.80px;transform:translateX(-50%) scaleX(0.87);transform-origin:50% 50%;">Attributes</span><span class="t" style="top:43.08px;font-size:4.7px;color:#8f98a3;left:249.60px;transform:translateX(-50%) scaleX(0.87);transform-origin:50% 50%;">Export</span></div><div style="left:4.30px;top:49.80px;width:120.30px;height:454.20px;background:#fcfdff;"></div><span class="t" style="top:52.92px;font-size:8.3px;color:#79b4e2;left:6.00px;transform:scaleX(0.87);transform-origin:0 50%;">Model Builder</span><div class="tr" style="left:115.95px;top:56.38px;border-left:1.25px solid transparent;border-right:1.25px solid transparent;border-top:1.69px solid #333;"></div><div style="left:122.40px;top:55.60px;width:1.30px;height:2.80px;background:#222;"></div><div style="left:6.60px;top:63.80px;width:3.20px;height:3.20px;background:#c9cfd6;border-radius:.4px;"></div><div style="left:16.20px;top:63.80px;width:3.20px;height:3.20px;background:#c9cfd6;border-radius:.4px;"></div><div style="left:23.00px;top:63.80px;width:3.20px;height:3.20px;background:#6f9fc9;border-radius:.4px;"></div><div style="left:30.70px;top:63.80px;width:3.20px;height:3.20px;background:#b9c0c8;border-radius:.4px;"></div><div style="left:38.90px;top:63.80px;width:3.20px;height:3.20px;background:#4f8fc8;border-radius:.4px;"></div><div style="left:47.10px;top:63.80px;width:3.20px;height:3.20px;background:#3f93d3;border-radius:.4px;"></div><div style="left:61.90px;top:63.80px;width:3.20px;height:3.20px;background:#3f93d3;border-radius:.4px;"></div><div style="left:76.70px;top:63.80px;width:3.20px;height:3.20px;background:#aeb5bd;border-radius:.4px;"></div><div style="left:90.90px;top:63.80px;width:3.20px;height:3.20px;background:#3f6f9f;border-radius:.4px;"></div><div class="tr" style="left:54.48px;top:65.04px;border-left:1.125px solid transparent;border-right:1.125px solid transparent;border-top:1.52px solid #333;"></div><div class="tr" style="left:68.88px;top:65.04px;border-left:1.125px solid transparent;border-right:1.125px solid transparent;border-top:1.52px solid #333;"></div><div class="tr" style="left:83.17px;top:65.04px;border-left:1.125px solid transparent;border-right:1.125px solid transparent;border-top:1.52px solid #333;"></div><div class="tr" style="left:97.38px;top:65.04px;border-left:1.125px solid transparent;border-right:1.125px solid transparent;border-top:1.52px solid #333;"></div><div style="left:6.00px;top:72.20px;width:108.00px;height:6.10px;background:#fff;border:.5px solid #dfe3e8;box-sizing:border-box;"></div><span class="t" style="top:72.98px;font-size:4.7px;color:#c3c8ce;left:6.90px;transform:scaleX(0.87);transform-origin:0 50%;">Type filter text</span><div style="left:118.30px;top:73.40px;width:3.40px;height:3.40px;border:.7px solid #8cc4ea;border-radius:50%;box-sizing:border-box;"></div><div style="left:118.60px;top:80.50px;width:5.50px;height:402.50px;background:#f0f1f3;"></div><div style="left:118.60px;top:242.00px;width:5.50px;height:224.00px;background:#d9dbdf;"></div><div style="left:4.3px;top:80.5px;width:114.3px;height:396.5px;overflow:hidden;"><div style="left:-4.3px;top:-80.5px;width:10px;height:10px;"><div style="left:28.85px;top:83.90px;width:1.5px;height:1.5px;border-right:.5px solid #a4acb6;border-top:.5px solid #a4acb6;transform:rotate(45deg);"></div><div style="left:34.15px;top:82.40px;width:4.80px;height:4.80px;border:.8px solid #a9c4da;border-radius:50%;box-sizing:border-box;"></div><span class="t" style="top:82.48px;font-size:4.7px;left:41.65px;transform:scaleX(0.87);transform-origin:0 50%;">Global Equations 1 (ODE1) <i>(ge1)</i></span><div style="left:28.85px;top:90.93px;width:1.5px;height:1.5px;border-right:.5px solid #a4acb6;border-top:.5px solid #a4acb6;transform:rotate(45deg);"></div><div style="left:34.15px;top:89.43px;width:4.80px;height:4.80px;border:.8px solid #a9c4da;border-radius:50%;box-sizing:border-box;"></div><span class="t" style="top:89.51px;font-size:4.7px;left:41.65px;transform:scaleX(0.87);transform-origin:0 50%;">Global Equations 2 (ODE2) <i>(ge2)</i></span><div style="left:28.85px;top:97.96px;width:1.5px;height:1.5px;border-right:.5px solid #a4acb6;border-top:.5px solid #a4acb6;transform:rotate(45deg);"></div><div style="left:34.15px;top:96.46px;width:4.80px;height:4.80px;border:.8px solid #a9c4da;border-radius:50%;box-sizing:border-box;"></div><span class="t" style="top:96.54px;font-size:4.7px;left:41.65px;transform:scaleX(0.87);transform-origin:0 50%;">Global Equations 3 (ODE3) <i>(ge3)</i></span><div style="left:28.85px;top:104.99px;width:1.5px;height:1.5px;border-right:.5px solid #a4acb6;border-top:.5px solid #a4acb6;transform:rotate(45deg);"></div><div style="left:34.15px;top:103.49px;width:4.80px;height:4.80px;border:.8px solid #a9c4da;border-radius:50%;box-sizing:border-box;"></div><span class="t" style="top:103.57px;font-size:4.7px;left:41.65px;transform:scaleX(0.87);transform-origin:0 50%;">Global Equations 4 (ODE4) <i>(ge4)</i></span><div style="left:28.85px;top:112.02px;width:1.5px;height:1.5px;border-right:.5px solid #a4acb6;border-top:.5px solid #a4acb6;transform:rotate(45deg);"></div><div style="left:34.15px;top:110.52px;width:4.80px;height:4.80px;border:.8px solid #a9c4da;border-radius:50%;box-sizing:border-box;"></div><span class="t" style="top:110.60px;font-size:4.7px;left:41.65px;transform:scaleX(0.87);transform-origin:0 50%;">Global Equations 5 (ODE5) <i>(ge5)</i></span><div style="left:34.75px;top:118.35px;width:3.60px;height:3.00px;background:#6f8fae;border-radius:.6px;opacity:.9;"></div><span class="t" style="top:117.63px;font-size:4.7px;left:41.65px;transform:scaleX(0.87);transform-origin:0 50%;">Equation View <i>(info)</i></span><div style="left:22.20px;top:125.28px;width:1.7px;height:1.7px;border-right:.7px solid #444;border-bottom:.7px solid #444;transform:rotate(45deg);"></div><div style="left:27.60px;top:124.98px;width:4.20px;height:4.00px;background:#8d949c;border-radius:.8px;"></div><span class="t" style="top:124.66px;font-size:4.7px;left:34.80px;transform:scaleX(0.87);transform-origin:0 50%;">Moving Mesh (ale) <i>{ale}</i></span><div style="left:28.85px;top:133.11px;width:1.5px;height:1.5px;border-right:.5px solid #a4acb6;border-top:.5px solid #a4acb6;transform:rotate(45deg);"></div><div style="left:34.45px;top:132.01px;width:4.20px;height:4.00px;background:#2f7fc2;border-radius:.8px;"></div><span class="t" style="top:131.69px;font-size:4.7px;left:41.65px;transform:scaleX(0.87);transform-origin:0 50%;">Fixed Mesh 1 <i>(fix1)</i></span><div style="left:28.85px;top:140.14px;width:1.5px;height:1.5px;border-right:.5px solid #a4acb6;border-top:.5px solid #a4acb6;transform:rotate(45deg);"></div><div style="left:34.45px;top:139.04px;width:4.20px;height:4.00px;background:#2f7fc2;border-radius:.8px;"></div><span class="t" style="top:138.72px;font-size:4.7px;left:41.65px;transform:scaleX(0.87);transform-origin:0 50%;">Prescribed Mesh Displacement walls <i>(disp1)</i></span><div style="left:28.85px;top:147.17px;width:1.5px;height:1.5px;border-right:.5px solid #a4acb6;border-top:.5px solid #a4acb6;transform:rotate(45deg);"></div><div style="left:34.05px;top:146.47px;width:5.00px;height:3.20px;background:#2f7fc2;border-radius:.8px;"></div><span class="t" style="top:145.75px;font-size:4.7px;left:41.65px;transform:scaleX(0.87);transform-origin:0 50%;">Prescribed Mesh Displacement irir <i>(disp2)</i></span><div style="left:28.85px;top:154.20px;width:1.5px;height:1.5px;border-right:.5px solid #a4acb6;border-top:.5px solid #a4acb6;transform:rotate(45deg);"></div><div style="left:34.05px;top:153.50px;width:5.00px;height:3.20px;background:#2f7fc2;border-radius:.8px;"></div><span class="t" style="top:152.78px;font-size:4.7px;left:41.65px;transform:scaleX(0.87);transform-origin:0 50%;">Free Deformation 1 <i>(free1)</i></span><div style="left:28.85px;top:161.23px;width:1.5px;height:1.5px;border-right:.5px solid #a4acb6;border-top:.5px solid #a4acb6;transform:rotate(45deg);"></div><div style="left:34.05px;top:160.53px;width:5.00px;height:3.20px;background:#2f7fc2;border-radius:.8px;"></div><span class="t" style="top:159.81px;font-size:4.7px;left:41.65px;transform:scaleX(0.87);transform-origin:0 50%;">Prescribed Normal Mesh Velocity irsl <i>(pnmv1)</i></span><div style="left:28.85px;top:168.26px;width:1.5px;height:1.5px;border-right:.5px solid #a4acb6;border-top:.5px solid #a4acb6;transform:rotate(45deg);"></div><div style="left:34.05px;top:167.56px;width:5.00px;height:3.20px;background:#2f7fc2;border-radius:.8px;"></div><span class="t" style="top:166.84px;font-size:4.7px;left:41.65px;transform:scaleX(0.87);transform-origin:0 50%;">Prescribed Normal Mesh Velocity slgas <i>(pnmv2)</i></span><div style="left:28.85px;top:175.29px;width:1.5px;height:1.5px;border-right:.5px solid #a4acb6;border-top:.5px solid #a4acb6;transform:rotate(45deg);"></div><div style="left:34.05px;top:174.59px;width:5.00px;height:3.20px;background:#2f7fc2;border-radius:.8px;"></div><span class="t" style="top:173.87px;font-size:4.7px;left:41.65px;transform:scaleX(0.87);transform-origin:0 50%;">Prescribed Mesh Displacement irslK <i>(disp3)</i></span><div style="left:28.85px;top:182.32px;width:1.5px;height:1.5px;border-right:.5px solid #a4acb6;border-top:.5px solid #a4acb6;transform:rotate(45deg);"></div><div style="left:34.05px;top:181.62px;width:5.00px;height:3.20px;background:#2f7fc2;border-radius:.8px;"></div><span class="t" style="top:180.90px;font-size:4.7px;left:41.65px;transform:scaleX(0.87);transform-origin:0 50%;">Prescribed Deformation cokefree <i>(pres1)</i></span><div style="left:34.75px;top:188.65px;width:3.60px;height:3.00px;background:#6f8fae;border-radius:.6px;opacity:.9;"></div><span class="t" style="top:187.93px;font-size:4.7px;left:41.65px;transform:scaleX(0.87);transform-origin:0 50%;">Equation View <i>(info)</i></span><div style="left:22.00px;top:196.38px;width:1.5px;height:1.5px;border-right:.5px solid #a4acb6;border-top:.5px solid #a4acb6;transform:rotate(45deg);"></div><div style="left:27.90px;top:195.68px;width:3.60px;height:3.00px;background:#cfd4da;border-radius:.6px;opacity:.9;"></div><span class="t" style="top:194.96px;font-size:4.7px;left:34.80px;transform:scaleX(0.87);transform-origin:0 50%;">Events (ev) <i>{ev}</i></span><div style="left:22.00px;top:203.41px;width:1.5px;height:1.5px;border-right:.5px solid #a4acb6;border-top:.5px solid #a4acb6;transform:rotate(45deg);"></div><div class="tr" style="left:27.10px;top:201.91px;border-left:2.6px solid transparent;border-right:2.6px solid transparent;border-bottom:4.6px solid #9aa0a7;"></div><span class="t" style="top:201.99px;font-size:4.7px;left:34.80px;transform:scaleX(0.87);transform-origin:0 50%;">Mesh 1 <i>(mesh1)</i></span><div style="left:15.15px;top:210.44px;width:1.5px;height:1.5px;border-right:.5px solid #a4acb6;border-top:.5px solid #a4acb6;transform:rotate(45deg);"></div><div style="left:20.75px;top:209.34px;width:4.20px;height:4.00px;background:#2f7fc2;border-radius:.8px;"></div><span class="t" style="top:209.02px;font-size:4.7px;left:27.95px;transform:scaleX(0.87);transform-origin:0 50%;">Tris (comp2) <i>{comp2}</i></span><div style="left:15.15px;top:217.47px;width:1.5px;height:1.5px;border-right:.5px solid #a4acb6;border-top:.5px solid #a4acb6;transform:rotate(45deg);"></div><div style="left:21.05px;top:216.77px;width:3.60px;height:3.00px;background:#9fd6e6;border-radius:.6px;opacity:.9;"></div><span class="t" style="top:216.05px;font-size:4.7px;left:27.95px;transform:scaleX(0.87);transform-origin:0 50%;">Study 1 <i>(std1)</i></span><div style="left:15.35px;top:223.70px;width:1.7px;height:1.7px;border-right:.7px solid #444;border-bottom:.7px solid #444;transform:rotate(45deg);"></div><div style="left:20.75px;top:223.40px;width:4.20px;height:4.00px;background:#b03a86;border-radius:.8px;"></div><span class="t" style="top:223.08px;font-size:4.7px;left:27.95px;transform:scaleX(0.87);transform-origin:0 50%;">Results</span><div style="left:22.00px;top:231.53px;width:1.5px;height:1.5px;border-right:.5px solid #a4acb6;border-top:.5px solid #a4acb6;transform:rotate(45deg);"></div><div style="left:27.90px;top:230.83px;width:3.60px;height:3.00px;background:#cf5a78;border-radius:.6px;opacity:.9;"></div><span class="t" style="top:230.11px;font-size:4.7px;left:34.80px;transform:scaleX(0.87);transform-origin:0 50%;">Datasets</span><div style="left:22.00px;top:238.56px;width:1.5px;height:1.5px;border-right:.5px solid #a4acb6;border-top:.5px solid #a4acb6;transform:rotate(45deg);"></div><div style="left:27.90px;top:237.86px;width:3.60px;height:3.00px;background:#9cc8e8;border-radius:.6px;opacity:.9;"></div><span class="t" style="top:237.14px;font-size:4.7px;left:34.80px;transform:scaleX(0.87);transform-origin:0 50%;">Views</span><div style="left:22.00px;top:245.59px;width:1.5px;height:1.5px;border-right:.5px solid #a4acb6;border-top:.5px solid #a4acb6;transform:rotate(45deg);"></div><div style="left:27.90px;top:244.89px;width:3.60px;height:3.00px;background:#e3a9c3;border-radius:.6px;opacity:.9;"></div><span class="t" style="top:244.17px;font-size:4.7px;left:34.80px;transform:scaleX(0.87);transform-origin:0 50%;">Derived Values</span><div style="left:22.00px;top:252.62px;width:1.5px;height:1.5px;border-right:.5px solid #a4acb6;border-top:.5px solid #a4acb6;transform:rotate(45deg);"></div><div style="left:27.60px;top:251.52px;width:4.20px;height:4.00px;background:#cc5a9a;border-radius:.8px;"></div><span class="t" style="top:251.20px;font-size:4.7px;left:34.80px;transform:scaleX(0.87);transform-origin:0 50%;">Tables</span><div style="left:27.60px;top:258.55px;width:4.20px;height:4.00px;background:#a9978a;border-radius:.8px;"></div><span class="t" style="top:258.23px;font-size:4.7px;left:34.80px;transform:scaleX(0.87);transform-origin:0 50%;">Color Tables</span><div style="left:22.20px;top:265.88px;width:1.7px;height:1.7px;border-right:.7px solid #444;border-bottom:.7px solid #444;transform:rotate(45deg);"></div><div style="left:27.60px;top:265.58px;width:4.20px;height:4.00px;background:#a3309a;border-radius:.8px;"></div><span class="t" style="top:265.26px;font-size:4.7px;left:34.80px;transform:scaleX(0.87);transform-origin:0 50%;">3D Plot Group 1 <i>(pg1)</i></span><div style="left:28.85px;top:273.71px;width:1.5px;height:1.5px;border-right:.5px solid #a4acb6;border-top:.5px solid #a4acb6;transform:rotate(45deg);"></div><div style="left:34.25px;top:272.41px;width:4.60px;height:4.40px;background:#fff;border:.5px solid #c9a0ad;border-top:1.6px solid #c8385c;box-sizing:border-box;"></div><span class="t" style="top:272.29px;font-size:4.7px;left:41.65px;transform:scaleX(0.87);transform-origin:0 50%;">Surface 1 <i>(surf1)</i></span><div style="left:28.85px;top:280.74px;width:1.5px;height:1.5px;border-right:.5px solid #a4acb6;border-top:.5px solid #a4acb6;transform:rotate(45deg);"></div><div style="left:34.25px;top:279.44px;width:4.60px;height:4.40px;background:#fff;border:.5px solid #c9a0ad;border-top:1.6px solid #c8385c;box-sizing:border-box;"></div><span class="t" style="top:279.32px;font-size:4.7px;left:41.65px;transform:scaleX(0.87);transform-origin:0 50%;">Surface 2 <i>(surf2)</i></span><div style="left:28.85px;top:287.77px;width:1.5px;height:1.5px;border-right:.5px solid #a4acb6;border-top:.5px solid #a4acb6;transform:rotate(45deg);"></div><div style="left:34.25px;top:286.47px;width:4.60px;height:4.40px;background:#fff;border:.5px solid #c9a0ad;border-top:1.6px solid #c8385c;box-sizing:border-box;"></div><span class="t" style="top:286.35px;font-size:4.7px;left:41.65px;transform:scaleX(0.87);transform-origin:0 50%;">Surface 3 <i>(surf3)</i></span><div style="left:28.85px;top:294.80px;width:1.5px;height:1.5px;border-right:.5px solid #a4acb6;border-top:.5px solid #a4acb6;transform:rotate(45deg);"></div><div style="left:34.25px;top:293.50px;width:4.60px;height:4.40px;background:#fff;border:.5px solid #c9a0ad;border-top:1.6px solid #c8385c;box-sizing:border-box;"></div><span class="t" style="top:293.38px;font-size:4.7px;left:41.65px;transform:scaleX(0.87);transform-origin:0 50%;">Surface 4 <i>(surf4)</i></span><div style="left:34.25px;top:300.53px;width:4.60px;height:4.40px;border:.7px solid #c5cad0;box-sizing:border-box;"></div><span class="t" style="top:300.41px;font-size:4.7px;left:41.65px;transform:scaleX(0.87);transform-origin:0 50%;">Line 1 <i>(line1)</i></span><div style="left:28.85px;top:308.86px;width:1.5px;height:1.5px;border-right:.5px solid #a4acb6;border-top:.5px solid #a4acb6;transform:rotate(45deg);"></div><div style="left:34.25px;top:307.56px;width:4.60px;height:4.40px;border:.7px solid #c5cad0;box-sizing:border-box;"></div><span class="t" style="top:307.44px;font-size:4.7px;left:41.65px;transform:scaleX(0.87);transform-origin:0 50%;">Line 2 <i>(line2)</i></span><div style="left:29.05px;top:315.09px;width:1.7px;height:1.7px;border-right:.7px solid #444;border-bottom:.7px solid #444;transform:rotate(45deg);"></div><div style="left:34.25px;top:314.59px;width:4.60px;height:4.40px;border:.7px solid #c5cad0;box-sizing:border-box;"></div><span class="t" style="top:314.47px;font-size:4.7px;left:41.65px;transform:scaleX(0.87);transform-origin:0 50%;">Line 3 <i>(line3)</i></span><div style="left:41.60px;top:322.22px;width:3.60px;height:3.00px;background:#b3476c;border-radius:.6px;opacity:.9;"></div><span class="t" style="top:321.50px;font-size:4.7px;left:48.50px;transform:scaleX(0.87);transform-origin:0 50%;">Selection 1 <i>(sel1)</i></span><div style="left:41.60px;top:329.25px;width:3.60px;height:3.00px;background:#c9ced4;border-radius:.6px;opacity:.9;"></div><span class="t" style="top:328.53px;font-size:4.7px;left:48.50px;transform:scaleX(0.87);transform-origin:0 50%;">Deformation 1 <i>(def1)</i></span><div style="left:28.85px;top:336.98px;width:1.5px;height:1.5px;border-right:.5px solid #a4acb6;border-top:.5px solid #a4acb6;transform:rotate(45deg);"></div><div style="left:34.45px;top:335.88px;width:4.20px;height:4.00px;background:#9aa0a7;border-radius:.8px;"></div><span class="t" style="top:335.56px;font-size:4.7px;left:41.65px;transform:scaleX(0.87);transform-origin:0 50%;">Arrow Surface 1 <i>(arws1)</i></span><div style="left:22.00px;top:344.01px;width:1.5px;height:1.5px;border-right:.5px solid #a4acb6;border-top:.5px solid #a4acb6;transform:rotate(45deg);"></div><div style="left:27.10px;top:344.41px;width:5.20px;height:1.00px;background:#b9bfc6;border-radius:1px;"></div><span class="t" style="top:342.59px;font-size:4.7px;left:34.80px;transform:scaleX(0.87);transform-origin:0 50%;">Probe Plot Group 2 <i>(pg2)</i></span><div style="left:22.00px;top:351.04px;width:1.5px;height:1.5px;border-right:.5px solid #a4acb6;border-top:.5px solid #a4acb6;transform:rotate(45deg);"></div><div style="left:27.10px;top:351.44px;width:5.20px;height:1.00px;background:#b9bfc6;border-radius:1px;"></div><span class="t" style="top:349.62px;font-size:4.7px;left:34.80px;transform:scaleX(0.87);transform-origin:0 50%;">Probe Plot Group 3 <i>(pg3)</i></span><div style="left:22.00px;top:358.07px;width:1.5px;height:1.5px;border-right:.5px solid #a4acb6;border-top:.5px solid #a4acb6;transform:rotate(45deg);"></div><div style="left:27.10px;top:358.47px;width:5.20px;height:1.00px;background:#b9bfc6;border-radius:1px;"></div><span class="t" style="top:356.65px;font-size:4.7px;left:34.80px;transform:scaleX(0.87);transform-origin:0 50%;">Probe Plot Group 4 <i>(pg4)</i></span><div style="left:22.00px;top:365.10px;width:1.5px;height:1.5px;border-right:.5px solid #a4acb6;border-top:.5px solid #a4acb6;transform:rotate(45deg);"></div><div style="left:27.10px;top:365.50px;width:5.20px;height:1.00px;background:#b9bfc6;border-radius:1px;"></div><span class="t" style="top:363.68px;font-size:4.7px;left:34.80px;transform:scaleX(0.87);transform-origin:0 50%;">Probe Plot Group 5 <i>(pg5)</i></span><div style="left:22.00px;top:372.13px;width:1.5px;height:1.5px;border-right:.5px solid #a4acb6;border-top:.5px solid #a4acb6;transform:rotate(45deg);"></div><div style="left:27.10px;top:372.53px;width:5.20px;height:1.00px;background:#b9bfc6;border-radius:1px;"></div><span class="t" style="top:370.71px;font-size:4.7px;left:34.80px;transform:scaleX(0.87);transform-origin:0 50%;">Probe Plot Group 6 <i>(pg6)</i></span><div style="left:22.00px;top:379.16px;width:1.5px;height:1.5px;border-right:.5px solid #a4acb6;border-top:.5px solid #a4acb6;transform:rotate(45deg);"></div><div style="left:27.10px;top:379.56px;width:5.20px;height:1.00px;background:#b9bfc6;border-radius:1px;"></div><span class="t" style="top:377.74px;font-size:4.7px;left:34.80px;transform:scaleX(0.87);transform-origin:0 50%;">Probe Plot Group 7 <i>(pg7)</i></span><div style="left:22.00px;top:386.19px;width:1.5px;height:1.5px;border-right:.5px solid #a4acb6;border-top:.5px solid #a4acb6;transform:rotate(45deg);"></div><div style="left:27.10px;top:386.59px;width:5.20px;height:1.00px;background:#b9bfc6;border-radius:1px;"></div><span class="t" style="top:384.77px;font-size:4.7px;left:34.80px;transform:scaleX(0.87);transform-origin:0 50%;">Probe Plot Group 8 <i>(pg8)</i></span><div style="left:4.30px;top:390.81px;width:114.30px;height:6.73px;background:#cce4f7;"></div><div style="left:22.00px;top:393.22px;width:1.5px;height:1.5px;border-right:.5px solid #a4acb6;border-top:.5px solid #a4acb6;transform:rotate(45deg);"></div><div style="left:27.10px;top:393.62px;width:5.20px;height:1.00px;background:#b9bfc6;border-radius:1px;"></div><span class="t" style="top:391.80px;font-size:4.7px;left:34.80px;transform:scaleX(0.87);transform-origin:0 50%;">Probe Plot Group 9 <i>(pg9)</i></span><div style="left:22.00px;top:400.25px;width:1.5px;height:1.5px;border-right:.5px solid #a4acb6;border-top:.5px solid #a4acb6;transform:rotate(45deg);"></div><div style="left:27.10px;top:400.65px;width:5.20px;height:1.00px;background:#b9bfc6;border-radius:1px;"></div><span class="t" style="top:398.83px;font-size:4.7px;left:34.80px;transform:scaleX(0.87);transform-origin:0 50%;">Probe Plot Group 10 <i>(pg10)</i></span><div style="left:22.00px;top:407.28px;width:1.5px;height:1.5px;border-right:.5px solid #a4acb6;border-top:.5px solid #a4acb6;transform:rotate(45deg);"></div><div style="left:27.10px;top:407.68px;width:5.20px;height:1.00px;background:#b9bfc6;border-radius:1px;"></div><span class="t" style="top:405.86px;font-size:4.7px;left:34.80px;transform:scaleX(0.87);transform-origin:0 50%;">Probe Plot Group 11 <i>(pg11)</i></span><div style="left:22.00px;top:414.31px;width:1.5px;height:1.5px;border-right:.5px solid #a4acb6;border-top:.5px solid #a4acb6;transform:rotate(45deg);"></div><div style="left:27.10px;top:414.71px;width:5.20px;height:1.00px;background:#b9bfc6;border-radius:1px;"></div><span class="t" style="top:412.89px;font-size:4.7px;left:34.80px;transform:scaleX(0.87);transform-origin:0 50%;">Probe Plot Group 12 <i>(pg12)</i></span><div style="left:22.00px;top:421.34px;width:1.5px;height:1.5px;border-right:.5px solid #a4acb6;border-top:.5px solid #a4acb6;transform:rotate(45deg);"></div><div style="left:27.10px;top:421.74px;width:5.20px;height:1.00px;background:#b9bfc6;border-radius:1px;"></div><span class="t" style="top:419.92px;font-size:4.7px;left:34.80px;transform:scaleX(0.87);transform-origin:0 50%;">Probe Plot Group 13 <i>(pg13)</i></span><div style="left:22.00px;top:428.37px;width:1.5px;height:1.5px;border-right:.5px solid #a4acb6;border-top:.5px solid #a4acb6;transform:rotate(45deg);"></div><div style="left:27.10px;top:428.77px;width:5.20px;height:1.00px;background:#b9bfc6;border-radius:1px;"></div><span class="t" style="top:426.95px;font-size:4.7px;left:34.80px;transform:scaleX(0.87);transform-origin:0 50%;">Probe Plot Group 14 <i>(pg14)</i></span><div style="left:22.00px;top:435.40px;width:1.5px;height:1.5px;border-right:.5px solid #a4acb6;border-top:.5px solid #a4acb6;transform:rotate(45deg);"></div><div style="left:27.10px;top:435.80px;width:5.20px;height:1.00px;background:#b9bfc6;border-radius:1px;"></div><span class="t" style="top:433.98px;font-size:4.7px;left:34.80px;transform:scaleX(0.87);transform-origin:0 50%;">Probe Plot Group 15 <i>(pg15)</i></span><div style="left:22.00px;top:442.43px;width:1.5px;height:1.5px;border-right:.5px solid #a4acb6;border-top:.5px solid #a4acb6;transform:rotate(45deg);"></div><div style="left:27.10px;top:442.83px;width:5.20px;height:1.00px;background:#b9bfc6;border-radius:1px;"></div><span class="t" style="top:441.01px;font-size:4.7px;left:34.80px;transform:scaleX(0.87);transform-origin:0 50%;">Probe Plot Group 16 <i>(pg16)</i></span><div style="left:22.00px;top:449.46px;width:1.5px;height:1.5px;border-right:.5px solid #a4acb6;border-top:.5px solid #a4acb6;transform:rotate(45deg);"></div><div style="left:27.10px;top:449.86px;width:5.20px;height:1.00px;background:#b9bfc6;border-radius:1px;"></div><span class="t" style="top:448.04px;font-size:4.7px;left:34.80px;transform:scaleX(0.87);transform-origin:0 50%;">Probe Plot Group 17 <i>(pg17)</i></span><div style="left:22.00px;top:456.49px;width:1.5px;height:1.5px;border-right:.5px solid #a4acb6;border-top:.5px solid #a4acb6;transform:rotate(45deg);"></div><div style="left:27.10px;top:456.89px;width:5.20px;height:1.00px;background:#b9bfc6;border-radius:1px;"></div><span class="t" style="top:455.07px;font-size:4.7px;left:34.80px;transform:scaleX(0.87);transform-origin:0 50%;">Probe Plot Group 18 <i>(pg18)</i></span><div style="left:27.60px;top:462.42px;width:4.20px;height:4.00px;background:#cf6a9a;border-radius:.8px;"></div><span class="t" style="top:462.10px;font-size:4.7px;left:34.80px;transform:scaleX(0.87);transform-origin:0 50%;">Export</span><div style="left:27.60px;top:469.45px;width:4.20px;height:4.00px;background:#d77aa6;border-radius:.8px;"></div><span class="t" style="top:469.13px;font-size:4.7px;left:34.80px;transform:scaleX(0.87);transform-origin:0 50%;">Reports</span></div></div><div style="left:4.30px;top:476.40px;width:114.30px;height:5.40px;background:#f0f1f3;"></div><div style="left:10.30px;top:477.00px;width:80.00px;height:4.20px;background:#d9dbdf;"></div><div style="left:127.60px;top:49.80px;width:163.60px;height:454.20px;background:#fcfdff;"></div><span class="t" style="top:52.92px;font-size:8.3px;color:#79b4e2;left:130.20px;transform:scaleX(0.87);transform-origin:0 50%;">Settings</span><div class="tr" style="left:280.55px;top:56.38px;border-left:1.25px solid transparent;border-right:1.25px solid transparent;border-top:1.69px solid #333;"></div><div style="left:287.00px;top:55.60px;width:1.30px;height:2.80px;background:#222;"></div><span class="t" style="top:63.94px;font-size:5.6px;color:#9cc8ea;left:130.20px;transform:scaleX(0.87);transform-origin:0 50%;">1D Plot Group</span><div style="left:130.90px;top:72.20px;width:4.20px;height:3.40px;background:#b7359b;border-radius:.5px;"></div><span class="t" style="top:71.68px;font-size:4.7px;color:#222;left:137.40px;transform:scaleX(0.87);transform-origin:0 50%;">Plot</span><div style="left:0;top:0;width:10px;height:10px;transform-origin:0 0;transform:matrix(0.99454,0,0,0.99454,0.262,0.109);"><span class="t" style="top:83.18px;font-size:4.7px;color:#222;left:131.80px;transform:scaleX(0.87);transform-origin:0 50%;">Label:</span><div style="left:145.30px;top:81.80px;width:134.10px;height:7.40px;background:#fff;overflow:hidden;border:.5px solid #d5dae0;box-sizing:border-box;"><span class="t" style="top:0.48px;font-size:4.7px;color:#222;left:1.10px;transform:scaleX(0.87);transform-origin:0 50%;">Probe Plot Group 9</span></div><div style="left:282.80px;top:82.50px;width:5.60px;height:6.00px;background:#f3f5f8;border:.5px solid #d5dae0;box-sizing:border-box;"></div><div style="left:284.30px;top:84.20px;width:2.60px;height:2.60px;background:#a9d3b4;"></div><div style="left:128.10px;top:93.30px;width:163.40px;height:8.60px;background:#dfe8f4;"></div><div class="tr" style="left:129.66px;top:97.08px;border-left:1.4375px solid transparent;border-right:1.4375px solid transparent;border-top:1.94px solid #333;"></div><span class="t" style="top:95.02px;font-size:5.3px;color:#222;left:137.90px;transform:scaleX(0.87);transform-origin:0 50%;">Data</span><span class="t" style="top:107.38px;font-size:4.7px;color:#222;left:131.80px;transform:scaleX(0.87);transform-origin:0 50%;">Dataset:</span><div style="left:150.00px;top:106.10px;width:129.40px;height:7.20px;background:#e9edf3;border:.4px solid #dde2e8;box-sizing:border-box;"></div><span class="t" style="top:107.38px;font-size:4.7px;color:#222;left:154.20px;transform:scaleX(0.87);transform-origin:0 50%;">None</span><div class="tr" style="left:274.35px;top:109.28px;border-left:1.25px solid transparent;border-right:1.25px solid transparent;border-top:1.69px solid #333;"></div><div style="left:282.80px;top:106.70px;width:5.60px;height:6.00px;background:#f3f5f8;border:.5px solid #d5dae0;box-sizing:border-box;"></div><div style="left:284.30px;top:108.40px;width:2.60px;height:2.60px;background:#dfe3e8;"></div><div style="left:128.10px;top:117.50px;width:163.40px;height:8.60px;background:#dfe8f4;"></div><div style="left:129.50px;top:121.00px;width:1.5px;height:1.5px;border-right:.5px solid #b9c0c8;border-top:.5px solid #b9c0c8;transform:rotate(45deg);"></div><span class="t" style="top:119.22px;font-size:5.3px;color:#222;left:137.90px;transform:scaleX(0.87);transform-origin:0 50%;">Title</span><div style="left:128.10px;top:127.50px;width:163.40px;height:8.60px;background:#dfe8f4;"></div><div class="tr" style="left:129.66px;top:131.28px;border-left:1.4375px solid transparent;border-right:1.4375px solid transparent;border-top:1.94px solid #333;"></div><span class="t" style="top:129.22px;font-size:5.3px;color:#222;left:137.90px;transform:scaleX(0.87);transform-origin:0 50%;">Plot Settings</span><span class="t" style="top:141.18px;font-size:4.7px;color:#222;left:131.80px;transform:scaleX(0.87);transform-origin:0 50%;">x-axis label:</span><div style="left:157.60px;top:141.40px;width:4.20px;height:4.20px;background:#fff;border:.45px solid #777;box-sizing:border-box;"></div><div style="left:166.60px;top:140.00px;width:122.20px;height:7.00px;background:#fff;overflow:hidden;border:.5px solid #d5dae0;box-sizing:border-box;"><span class="t" style="top:0.28px;font-size:4.7px;color:#a9b0b8;left:1.10px;transform:scaleX(0.87);transform-origin:0 50%;">Time (s)</span></div><span class="t" style="top:150.58px;font-size:4.7px;color:#222;left:131.80px;transform:scaleX(0.87);transform-origin:0 50%;">y-axis label:</span><div style="left:157.60px;top:150.80px;width:4.20px;height:4.20px;background:#fff;border:.45px solid #777;box-sizing:border-box;"></div><div style="left:166.60px;top:149.40px;width:122.20px;height:7.00px;background:#fff;overflow:hidden;border:.5px solid #d5dae0;box-sizing:border-box;"></div><div style="left:132.20px;top:159.20px;width:4.20px;height:4.20px;background:#fff;border:.45px solid #777;box-sizing:border-box;"></div><span class="t" style="top:158.98px;font-size:4.7px;color:#222;left:139.00px;transform:scaleX(0.87);transform-origin:0 50%;">Two y-axes</span><div style="left:132.20px;top:167.40px;width:4.20px;height:4.20px;background:#fff;border:.45px solid #777;box-sizing:border-box;"></div><span class="t" style="top:167.18px;font-size:4.7px;color:#222;left:139.00px;transform:scaleX(0.87);transform-origin:0 50%;">Flip the x- and y-axes</span><div style="left:128.10px;top:175.70px;width:163.40px;height:8.60px;background:#dfe8f4;"></div><div class="tr" style="left:129.66px;top:179.48px;border-left:1.4375px solid transparent;border-right:1.4375px solid transparent;border-top:1.94px solid #333;"></div><span class="t" style="top:177.42px;font-size:5.3px;color:#222;left:137.90px;transform:scaleX(0.87);transform-origin:0 50%;">Axis</span><div style="left:131.50px;top:190.80px;width:158.50px;height:42.00px;border:.5px solid #e3e7ec;box-sizing:border-box;"></div><div style="left:133.50px;top:188.00px;width:38.00px;height:5.50px;background:#fcfdff;"></div><div style="left:133.90px;top:188.70px;width:4.20px;height:4.20px;background:#fff;border:.45px solid #777;box-sizing:border-box;"></div><span class="t" style="top:188.48px;font-size:4.7px;color:#222;left:140.50px;transform:scaleX(0.87);transform-origin:0 50%;">Manual axis limits</span><span class="t" style="top:197.58px;font-size:4.7px;color:#a9b0b8;left:134.50px;transform:scaleX(0.87);transform-origin:0 50%;">x minimum:</span><div style="left:161.90px;top:196.40px;width:125.30px;height:7.00px;background:#fff;overflow:hidden;border:.5px solid #e6e9ed;box-sizing:border-box;"><span class="t" style="top:0.28px;font-size:4.7px;color:#a9b0b8;left:1.10px;transform:scaleX(0.87);transform-origin:0 50%;">1</span></div><span class="t" style="top:206.98px;font-size:4.7px;color:#a9b0b8;left:134.50px;transform:scaleX(0.87);transform-origin:0 50%;">x maximum:</span><div style="left:161.90px;top:205.80px;width:125.30px;height:7.00px;background:#fff;overflow:hidden;border:.5px solid #e6e9ed;box-sizing:border-box;"><span class="t" style="top:0.28px;font-size:4.7px;color:#a9b0b8;left:1.10px;transform:scaleX(0.87);transform-origin:0 50%;">1</span></div><span class="t" style="top:216.38px;font-size:4.7px;color:#a9b0b8;left:134.50px;transform:scaleX(0.87);transform-origin:0 50%;">y minimum:</span><div style="left:161.90px;top:215.20px;width:125.30px;height:7.00px;background:#fff;overflow:hidden;border:.5px solid #e6e9ed;box-sizing:border-box;"><span class="t" style="top:0.28px;font-size:4.7px;color:#a9b0b8;left:1.10px;transform:scaleX(0.87);transform-origin:0 50%;">1</span></div><span class="t" style="top:225.78px;font-size:4.7px;color:#a9b0b8;left:134.50px;transform:scaleX(0.87);transform-origin:0 50%;">y maximum:</span><div style="left:161.90px;top:224.60px;width:125.30px;height:7.00px;background:#fff;overflow:hidden;border:.5px solid #e6e9ed;box-sizing:border-box;"><span class="t" style="top:0.28px;font-size:4.7px;color:#a9b0b8;left:1.10px;transform:scaleX(0.87);transform-origin:0 50%;">1</span></div><div style="left:132.20px;top:237.00px;width:4.20px;height:4.20px;background:#fff;border:.45px solid #777;box-sizing:border-box;"></div><span class="t" style="top:236.78px;font-size:4.7px;color:#222;left:139.00px;transform:scaleX(0.87);transform-origin:0 50%;">Preserve aspect ratio</span><div style="left:132.20px;top:244.50px;width:4.20px;height:4.20px;background:#fff;border:.45px solid #777;box-sizing:border-box;"></div><span class="t" style="top:244.28px;font-size:4.7px;color:#222;left:139.00px;transform:scaleX(0.87);transform-origin:0 50%;">x-axis log scale</span><div style="left:132.20px;top:252.40px;width:4.20px;height:4.20px;background:#fff;border:.45px solid #777;box-sizing:border-box;"></div><span class="t" style="top:252.18px;font-size:4.7px;color:#222;left:139.00px;transform:scaleX(0.87);transform-origin:0 50%;">y-axis log scale</span><div style="left:128.10px;top:261.30px;width:163.40px;height:8.60px;background:#dfe8f4;"></div><div class="tr" style="left:129.66px;top:265.08px;border-left:1.4375px solid transparent;border-right:1.4375px solid transparent;border-top:1.94px solid #333;"></div><span class="t" style="top:263.02px;font-size:5.3px;color:#222;left:137.90px;transform:scaleX(0.87);transform-origin:0 50%;">Grid</span><div style="left:131.50px;top:276.30px;width:158.50px;height:34.70px;border:.5px solid #e3e7ec;box-sizing:border-box;"></div><div style="left:133.50px;top:273.50px;width:26.00px;height:5.50px;background:#fcfdff;"></div><div style="left:133.90px;top:274.20px;width:4.20px;height:4.20px;background:#fff;border:.45px solid #777;box-sizing:border-box;"></div><div style="left:134.90px;top:274.40px;width:1.3px;height:2.6px;border-right:.8px solid #222;border-bottom:.8px solid #222;transform:rotate(40deg);"></div><span class="t" style="top:273.98px;font-size:4.7px;color:#222;left:140.50px;transform:scaleX(0.87);transform-origin:0 50%;">Show grid</span><div style="left:134.50px;top:283.70px;width:153.50px;height:24.10px;border:.5px solid #e3e7ec;box-sizing:border-box;"></div><div style="left:136.00px;top:281.00px;width:34.00px;height:5.50px;background:#fcfdff;"></div><div style="left:136.30px;top:281.60px;width:4.20px;height:4.20px;background:#fff;border:.45px solid #777;box-sizing:border-box;"></div><span class="t" style="top:281.38px;font-size:4.7px;color:#222;left:143.00px;transform:scaleX(0.87);transform-origin:0 50%;">Manual spacing</span><span class="t" style="top:290.38px;font-size:4.7px;color:#a9b0b8;left:136.50px;transform:scaleX(0.87);transform-origin:0 50%;">x spacing:</span><div style="left:160.00px;top:289.20px;width:125.50px;height:7.00px;background:#fff;overflow:hidden;border:.5px solid #e6e9ed;box-sizing:border-box;"><span class="t" style="top:0.28px;font-size:4.7px;color:#a9b0b8;left:1.10px;transform:scaleX(0.87);transform-origin:0 50%;">1</span></div><span class="t" style="top:299.68px;font-size:4.7px;color:#a9b0b8;left:136.50px;transform:scaleX(0.87);transform-origin:0 50%;">y spacing:</span><div style="left:160.00px;top:298.50px;width:125.50px;height:7.00px;background:#fff;overflow:hidden;border:.5px solid #e6e9ed;box-sizing:border-box;"><span class="t" style="top:0.28px;font-size:4.7px;color:#a9b0b8;left:1.10px;transform:scaleX(0.87);transform-origin:0 50%;">1</span></div><span class="t" style="top:314.78px;font-size:4.7px;color:#222;left:131.80px;transform:scaleX(0.87);transform-origin:0 50%;">Extra x:</span><div style="left:148.40px;top:313.50px;width:131.20px;height:7.20px;background:#fff;overflow:hidden;border:.5px solid #d5dae0;box-sizing:border-box;"></div><div style="left:283.30px;top:314.10px;width:5.60px;height:6.00px;background:#f3f5f8;border:.5px solid #d5dae0;box-sizing:border-box;"></div><div style="left:284.80px;top:315.80px;width:2.60px;height:2.60px;background:#dfe3e8;"></div><span class="t" style="top:324.68px;font-size:4.7px;color:#222;left:131.80px;transform:scaleX(0.87);transform-origin:0 50%;">Extra y:</span><div style="left:148.40px;top:323.40px;width:131.20px;height:7.20px;background:#fff;overflow:hidden;border:.5px solid #d5dae0;box-sizing:border-box;"></div><div style="left:283.30px;top:324.00px;width:5.60px;height:6.00px;background:#f3f5f8;border:.5px solid #d5dae0;box-sizing:border-box;"></div><div style="left:284.80px;top:325.70px;width:2.60px;height:2.60px;background:#dfe3e8;"></div><div style="left:128.10px;top:335.00px;width:163.40px;height:8.60px;background:#dfe8f4;"></div><div class="tr" style="left:129.66px;top:338.78px;border-left:1.4375px solid transparent;border-right:1.4375px solid transparent;border-top:1.94px solid #333;"></div><span class="t" style="top:336.72px;font-size:5.3px;color:#222;left:137.90px;transform:scaleX(0.87);transform-origin:0 50%;">Legend</span><div style="left:131.50px;top:350.00px;width:158.50px;height:42.70px;border:.5px solid #e3e7ec;box-sizing:border-box;"></div><div style="left:133.50px;top:347.30px;width:32.00px;height:5.50px;background:#fcfdff;"></div><div style="left:133.90px;top:347.90px;width:4.20px;height:4.20px;background:#fff;border:.45px solid #777;box-sizing:border-box;"></div><div style="left:134.90px;top:348.10px;width:1.3px;height:2.6px;border-right:.8px solid #222;border-bottom:.8px solid #222;transform:rotate(40deg);"></div><span class="t" style="top:347.68px;font-size:4.7px;color:#222;left:140.50px;transform:scaleX(0.87);transform-origin:0 50%;">Show legends</span><span class="t" style="top:356.58px;font-size:4.7px;color:#222;left:134.50px;transform:scaleX(0.87);transform-origin:0 50%;">Layout:</span><div style="left:183.00px;top:355.30px;width:102.80px;height:7.20px;background:#e9edf3;border:.4px solid #dde2e8;box-sizing:border-box;"></div><span class="t" style="top:356.58px;font-size:4.7px;color:#222;left:187.20px;transform:scaleX(0.87);transform-origin:0 50%;">Inside graph axis area</span><div class="tr" style="left:280.75px;top:358.47px;border-left:1.25px solid transparent;border-right:1.25px solid transparent;border-top:1.69px solid #333;"></div><span class="t" style="top:365.88px;font-size:4.7px;color:#222;left:134.50px;transform:scaleX(0.87);transform-origin:0 50%;">Position:</span><div style="left:183.00px;top:364.60px;width:97.60px;height:7.20px;background:#e9edf3;border:.4px solid #dde2e8;box-sizing:border-box;"></div><span class="t" style="top:365.88px;font-size:4.7px;color:#222;left:187.20px;transform:scaleX(0.87);transform-origin:0 50%;">  Upper right</span><div class="tr" style="left:275.55px;top:367.77px;border-left:1.25px solid transparent;border-right:1.25px solid transparent;border-top:1.69px solid #333;"></div><div style="left:187.50px;top:366.30px;width:3.60px;height:3.80px;background:#fff;border:.5px solid #888;box-sizing:border-box;"></div><span class="t" style="top:375.48px;font-size:4.7px;color:#222;left:134.50px;transform:scaleX(0.87);transform-origin:0 50%;">Number of columns:</span><div style="left:183.00px;top:374.30px;width:97.60px;height:7.00px;background:#fff;overflow:hidden;border:.5px solid #d5dae0;box-sizing:border-box;"><span class="t" style="top:0.28px;font-size:4.7px;color:#222;left:1.10px;transform:scaleX(0.87);transform-origin:0 50%;">1</span></div><span class="t" style="top:385.08px;font-size:4.7px;color:#222;left:134.50px;transform:scaleX(0.87);transform-origin:0 50%;">Maximum relative width:</span><div style="left:183.00px;top:383.90px;width:97.60px;height:7.00px;background:#fff;overflow:hidden;border:.5px solid #d5dae0;box-sizing:border-box;"><span class="t" style="top:0.28px;font-size:4.7px;color:#222;left:1.10px;transform:scaleX(0.87);transform-origin:0 50%;">0.5</span></div><span class="t" style="top:385.28px;font-size:4.7px;color:#222;left:285.50px;transform:scaleX(0.87);transform-origin:0 50%;">1</span><div style="left:128.10px;top:397.60px;width:163.40px;height:8.60px;background:#dfe8f4;"></div><div style="left:129.50px;top:401.10px;width:1.5px;height:1.5px;border-right:.5px solid #b9c0c8;border-top:.5px solid #b9c0c8;transform:rotate(45deg);"></div><span class="t" style="top:399.32px;font-size:5.3px;color:#222;left:137.90px;transform:scaleX(0.87);transform-origin:0 50%;">Number Format</span><div style="left:128.10px;top:407.50px;width:163.40px;height:8.60px;background:#dfe8f4;"></div><div style="left:129.50px;top:411.00px;width:1.5px;height:1.5px;border-right:.5px solid #b9c0c8;border-top:.5px solid #b9c0c8;transform:rotate(45deg);"></div><span class="t" style="top:409.22px;font-size:5.3px;color:#222;left:137.90px;transform:scaleX(0.87);transform-origin:0 50%;">Window Settings</span></div><div style="left:292.90px;top:49.80px;width:611.60px;height:337.80px;background:linear-gradient(#fcfdff 0%,#f6f9fe 35%,#e3ecf9 100%);"></div><div class="tr" style="left:895.25px;top:56.38px;border-left:1.25px solid transparent;border-right:1.25px solid transparent;border-top:1.69px solid #333;"></div><div style="left:900.70px;top:55.60px;width:1.30px;height:2.80px;background:#222;"></div><div style="left:895.90px;top:73.20px;width:4.20px;height:3.20px;background:#3f6f9f;border-radius:.6px;"></div><div style="left:294.00px;top:53.30px;width:21.30px;height:8.20px;background:#e9ecf0;"></div><span class="t" style="top:54.82px;font-size:5.3px;color:#222;left:295.60px;transform:scaleX(0.87);transform-origin:0 50%;">Graphics</span><div style="left:318.40px;top:53.30px;width:34.80px;height:8.20px;background:#e9ecf0;"></div><span class="t" style="top:54.82px;font-size:5.3px;color:#222;left:320.00px;transform:scaleX(0.87);transform-origin:0 50%;">Probe Plot 6</span><span class="t" style="top:55.20px;font-size:4.5px;color:#c3c8ce;left:349.80px;transform:translateX(-50%) scaleX(1);transform-origin:50% 50%;">×</span><div style="left:356.90px;top:53.30px;width:34.70px;height:8.20px;background:#e9ecf0;"></div><span class="t" style="top:54.82px;font-size:5.3px;color:#222;left:358.50px;transform:scaleX(0.87);transform-origin:0 50%;">Probe Plot 7</span><span class="t" style="top:55.20px;font-size:4.5px;color:#c3c8ce;left:388.20px;transform:translateX(-50%) scaleX(1);transform-origin:50% 50%;">×</span><div style="left:395.70px;top:53.30px;width:34.70px;height:8.20px;background:#e9ecf0;"></div><span class="t" style="top:54.82px;font-size:5.3px;color:#222;left:397.30px;transform:scaleX(0.87);transform-origin:0 50%;">Probe Plot 9</span><span class="t" style="top:55.20px;font-size:4.5px;color:#c3c8ce;left:427.00px;transform:translateX(-50%) scaleX(1);transform-origin:50% 50%;">×</span><div style="left:434.20px;top:53.30px;width:39.10px;height:8.20px;background:#e9ecf0;"></div><span class="t" style="top:54.82px;font-size:5.3px;color:#222;left:435.80px;transform:scaleX(0.87);transform-origin:0 50%;">Probe Plot 10</span><span class="t" style="top:55.20px;font-size:4.5px;color:#c3c8ce;left:469.90px;transform:translateX(-50%) scaleX(1);transform-origin:50% 50%;">×</span><div style="left:475.50px;top:53.30px;width:34.80px;height:8.20px;background:#e9ecf0;"></div><span class="t" style="top:54.82px;font-size:5.3px;color:#222;left:477.10px;transform:scaleX(0.87);transform-origin:0 50%;">Probe Plot 4</span><span class="t" style="top:55.20px;font-size:4.5px;color:#c3c8ce;left:506.90px;transform:translateX(-50%) scaleX(1);transform-origin:50% 50%;">×</span><div style="left:514.00px;top:53.30px;width:35.10px;height:8.20px;background:#e9ecf0;"></div><span class="t" style="top:54.82px;font-size:5.3px;color:#222;left:515.60px;transform:scaleX(0.87);transform-origin:0 50%;">Probe Plot 3</span><span class="t" style="top:55.20px;font-size:4.5px;color:#c3c8ce;left:545.70px;transform:translateX(-50%) scaleX(1);transform-origin:50% 50%;">×</span><div style="left:552.30px;top:53.30px;width:35.60px;height:8.20px;background:#e9ecf0;"></div><span class="t" style="top:54.82px;font-size:5.3px;color:#222;left:553.90px;transform:scaleX(0.87);transform-origin:0 50%;">Probe Plot 2</span><span class="t" style="top:55.20px;font-size:4.5px;color:#c3c8ce;left:584.50px;transform:translateX(-50%) scaleX(1);transform-origin:50% 50%;">×</span><div style="left:589.60px;top:52.80px;width:36.10px;height:9.00px;background:#fff;"></div><span class="t" style="top:55.02px;font-size:5.3px;color:#4a9bdc;left:591.50px;transform:scaleX(0.87);transform-origin:0 50%;">Probe Plot 8</span><span class="t" style="top:55.30px;font-size:4.5px;color:#9aa0a7;left:622.50px;transform:translateX(-50%) scaleX(1);transform-origin:50% 50%;">×</span><div style="left:297.30px;top:65.60px;width:3.20px;height:3.20px;background:#a9c9e6;border-radius:.5px;"></div><div style="left:305.50px;top:65.60px;width:3.20px;height:3.20px;background:#a9c9e6;border-radius:.5px;"></div><div style="left:313.30px;top:65.60px;width:3.20px;height:3.20px;background:#a9c9e6;border-radius:.5px;"></div><div style="left:327.80px;top:65.60px;width:3.20px;height:3.20px;background:#c5cad0;border-radius:.5px;"></div><div style="left:338.80px;top:65.60px;width:3.20px;height:3.20px;background:#c5cad0;border-radius:.5px;"></div><div style="left:347.00px;top:65.60px;width:3.20px;height:3.20px;background:#c5cad0;border-radius:.5px;"></div><div style="left:374.30px;top:65.60px;width:3.20px;height:3.20px;background:#3f6fb0;border-radius:.5px;"></div><div style="left:384.80px;top:65.60px;width:3.20px;height:3.20px;background:#3f93d3;border-radius:.5px;"></div><div style="left:399.80px;top:65.60px;width:3.20px;height:3.20px;background:#3f6f9f;border-radius:.5px;"></div><div style="left:408.00px;top:65.60px;width:3.20px;height:3.20px;background:#a9c9e6;border-radius:.5px;"></div><div style="left:353.10px;top:63.60px;width:7.20px;height:7.20px;background:#6db7ee;border-radius:.6px;"></div><div style="left:355.10px;top:65.30px;width:3.20px;height:3.80px;background:#e8f3fc;"></div><div style="left:361.10px;top:63.60px;width:7.20px;height:7.20px;background:#6db7ee;border-radius:.6px;"></div><div style="left:363.10px;top:65.30px;width:3.20px;height:3.80px;background:#e8f3fc;"></div><div class="tr" style="left:320.47px;top:66.94px;border-left:1.125px solid transparent;border-right:1.125px solid transparent;border-top:1.52px solid #333;"></div><div class="tr" style="left:392.07px;top:66.94px;border-left:1.125px solid transparent;border-right:1.125px solid transparent;border-top:1.52px solid #333;"></div><svg style="left:0;top:0;width:909.0px;height:504.0px" viewBox="0 0 909.0 504.0"><g transform="scale(1.09290) translate(-947.86 -399.90)"><rect x="1234" y="480.3" width="537.5" height="261.6" fill="#fdfeff" stroke="#c9ced4" stroke-width=".7"/><path d="M1236.6,480.5V741.5M1289.6,480.5V741.5M1342.5,480.5V741.5M1395.5,480.5V741.5M1448.4,480.5V741.5M1501.4,480.5V741.5M1554.4,480.5V741.5M1607.3,480.5V741.5M1660.3,480.5V741.5M1713.2,480.5V741.5M1766.2,480.5V741.5M1234,738.9H1771.5M1234,721.8H1771.5M1234,704.6H1771.5M1234,687.4H1771.5M1234,670.3H1771.5M1234,653.1H1771.5M1234,636.0H1771.5M1234,618.9H1771.5M1234,601.7H1771.5M1234,584.5H1771.5M1234,567.4H1771.5M1234,550.2H1771.5M1234,533.1H1771.5M1234,516.0H1771.5M1234,498.8H1771.5M1234,481.6H1771.5" stroke="#e6e9ed" stroke-width=".5" fill="none"/><text x="1231.6" y="740.4" font-size="4.3" font-weight="bold" fill="#222" text-anchor="end">0</text><path d="M1232.4,738.9H1234" stroke="#555" stroke-width=".5"/><text x="1231.6" y="723.2" font-size="4.3" font-weight="bold" fill="#222" text-anchor="end">0.002</text><path d="M1232.4,721.8H1234" stroke="#555" stroke-width=".5"/><text x="1231.6" y="706.1" font-size="4.3" font-weight="bold" fill="#222" text-anchor="end">0.004</text><path d="M1232.4,704.6H1234" stroke="#555" stroke-width=".5"/><text x="1231.6" y="688.9" font-size="4.3" font-weight="bold" fill="#222" text-anchor="end">0.006</text><path d="M1232.4,687.4H1234" stroke="#555" stroke-width=".5"/><text x="1231.6" y="671.8" font-size="4.3" font-weight="bold" fill="#222" text-anchor="end">0.008</text><path d="M1232.4,670.3H1234" stroke="#555" stroke-width=".5"/><text x="1231.6" y="654.6" font-size="4.3" font-weight="bold" fill="#222" text-anchor="end">0.01</text><path d="M1232.4,653.1H1234" stroke="#555" stroke-width=".5"/><text x="1231.6" y="637.5" font-size="4.3" font-weight="bold" fill="#222" text-anchor="end">0.012</text><path d="M1232.4,636.0H1234" stroke="#555" stroke-width=".5"/><text x="1231.6" y="620.4" font-size="4.3" font-weight="bold" fill="#222" text-anchor="end">0.014</text><path d="M1232.4,618.9H1234" stroke="#555" stroke-width=".5"/><text x="1231.6" y="603.2" font-size="4.3" font-weight="bold" fill="#222" text-anchor="end">0.016</text><path d="M1232.4,601.7H1234" stroke="#555" stroke-width=".5"/><text x="1231.6" y="586.0" font-size="4.3" font-weight="bold" fill="#222" text-anchor="end">0.018</text><path d="M1232.4,584.5H1234" stroke="#555" stroke-width=".5"/><text x="1231.6" y="568.9" font-size="4.3" font-weight="bold" fill="#222" text-anchor="end">0.02</text><path d="M1232.4,567.4H1234" stroke="#555" stroke-width=".5"/><text x="1231.6" y="551.8" font-size="4.3" font-weight="bold" fill="#222" text-anchor="end">0.022</text><path d="M1232.4,550.2H1234" stroke="#555" stroke-width=".5"/><text x="1231.6" y="534.6" font-size="4.3" font-weight="bold" fill="#222" text-anchor="end">0.024</text><path d="M1232.4,533.1H1234" stroke="#555" stroke-width=".5"/><text x="1231.6" y="517.5" font-size="4.3" font-weight="bold" fill="#222" text-anchor="end">0.026</text><path d="M1232.4,516.0H1234" stroke="#555" stroke-width=".5"/><text x="1231.6" y="500.3" font-size="4.3" font-weight="bold" fill="#222" text-anchor="end">0.028</text><path d="M1232.4,498.8H1234" stroke="#555" stroke-width=".5"/><text x="1231.6" y="483.1" font-size="4.3" font-weight="bold" fill="#222" text-anchor="end">0.03</text><path d="M1232.4,481.6H1234" stroke="#555" stroke-width=".5"/><text x="1236.6" y="748.2" font-size="4.3" font-weight="bold" fill="#222" text-anchor="middle">0</text><path d="M1236.6,741.8V743.4" stroke="#555" stroke-width=".5"/><text x="1289.6" y="748.2" font-size="4.3" font-weight="bold" fill="#222" text-anchor="middle">1000</text><path d="M1289.6,741.8V743.4" stroke="#555" stroke-width=".5"/><text x="1342.5" y="748.2" font-size="4.3" font-weight="bold" fill="#222" text-anchor="middle">2000</text><path d="M1342.5,741.8V743.4" stroke="#555" stroke-width=".5"/><text x="1395.5" y="748.2" font-size="4.3" font-weight="bold" fill="#222" text-anchor="middle">3000</text><path d="M1395.5,741.8V743.4" stroke="#555" stroke-width=".5"/><text x="1448.4" y="748.2" font-size="4.3" font-weight="bold" fill="#222" text-anchor="middle">4000</text><path d="M1448.4,741.8V743.4" stroke="#555" stroke-width=".5"/><text x="1501.4" y="748.2" font-size="4.3" font-weight="bold" fill="#222" text-anchor="middle">5000</text><path d="M1501.4,741.8V743.4" stroke="#555" stroke-width=".5"/><text x="1554.4" y="748.2" font-size="4.3" font-weight="bold" fill="#222" text-anchor="middle">6000</text><path d="M1554.4,741.8V743.4" stroke="#555" stroke-width=".5"/><text x="1607.3" y="748.2" font-size="4.3" font-weight="bold" fill="#222" text-anchor="middle">7000</text><path d="M1607.3,741.8V743.4" stroke="#555" stroke-width=".5"/><text x="1660.3" y="748.2" font-size="4.3" font-weight="bold" fill="#222" text-anchor="middle">8000</text><path d="M1660.3,741.8V743.4" stroke="#555" stroke-width=".5"/><text x="1713.2" y="748.2" font-size="4.3" font-weight="bold" fill="#222" text-anchor="middle">9000</text><path d="M1713.2,741.8V743.4" stroke="#555" stroke-width=".5"/><text x="1766.2" y="748.2" font-size="4.3" font-weight="bold" fill="#222" text-anchor="middle">10000</text><path d="M1766.2,741.8V743.4" stroke="#555" stroke-width=".5"/><text x="1502.5" y="752.4" font-size="4.3" font-weight="bold" fill="#222" text-anchor="middle">Time (s)</text><polyline points="1236.6,739.2 1236.6,489.5 1248.5,487.2 1258.2,485.6 1269.6,484.6 1277.7,484.3 1282.5,487.2 1289.0,495.3 1297.1,504.0 1306.8,513.1 1318.1,521.2 1329.4,527.7 1340.7,531.5 1352.1,534.1 1374.7,536.7 1400.6,537.4 1426.5,536.9 1449.1,536.1 1475.0,534.8 1500.9,533.2 1523.6,530.9 1536.5,529.9 1542.3,529.3 1546.2,532.5 1552.7,536.4 1559.2,539.3 1565.6,541.2 1581.8,542.9 1607.7,543.8 1633.6,544.8 1653.0,544.2 1661.1,542.5 1667.5,542.2 1671.8,543.8 1673.4,546.4 1673.4,738.6 1771.5,738.6" fill="none" stroke="#9fd6a0" stroke-width=".8"/><polyline points="1236.6,738.7 1276.0,738.7 1280.2,736.1 1284.1,731.9 1290.6,721.6 1297.1,710.9 1306.8,694.7 1319.7,676.9 1332.7,664.0 1342.4,657.8 1352.1,652.6 1374.7,644.6 1400.6,638.1 1426.5,635.4 1449.1,632.2 1475.0,628.3 1500.9,624.7 1523.6,622.5 1542.3,620.5 1547.8,615.0 1555.9,608.6 1564.0,604.0 1572.1,600.8 1583.4,598.8 1594.7,597.2 1607.7,594.6 1620.6,592.4 1633.6,590.8 1646.5,590.1 1656.2,590.8 1662.7,592.0 1667.5,590.4 1673.4,585.9 1673.4,672.1" fill="none" stroke="#a6b0e0" stroke-width=".8"/><rect x="1724.4" y="485" width="44.4" height="16.2" fill="#fff" stroke="#444" stroke-width=".7"/><path d="M1727,489.4H1735" stroke="#a6b0e0" stroke-width=".6"/><path d="M1727,496.2H1735" stroke="#9fd6a0" stroke-width=".6"/><text x="1737.5" y="490.8" font-size="4" font-weight="bold" fill="#222" textLength="29" lengthAdjust="spacingAndGlyphs">Qth_sl (m^3/s)</text><text x="1737.5" y="497.6" font-size="4" font-weight="bold" fill="#222" textLength="29" lengthAdjust="spacingAndGlyphs">Qth_ir (m^3/s)</text><rect x="1311" y="670.4" width="44.6" height="20.2" fill="#fff" stroke="#555" stroke-width=".7"/><path d="M1313.6,674.6H1321.5" stroke="#c6cce8" stroke-width=".6"/><text x="1324" y="676" font-size="4" font-weight="bold" fill="#222" textLength="29" lengthAdjust="spacingAndGlyphs">Qth_sl (m^3/s)</text><text x="1313.6" y="682.4" font-size="4" font-weight="bold" fill="#222">Y : 0.0051</text><text x="1313.6" y="688.2" font-size="4" font-weight="bold" fill="#222">X : 1331.9</text><circle cx="1306.9" cy="694.8" r=".9" fill="#e87a8a"/><polygon points="1221.3,720.6 1221.3,726.6 1222.8,725.2 1224.0,727.5 1225.0,726.9 1223.9,724.7 1225.7,724.6" fill="#111"/></g></svg><div style="left:292.90px;top:389.20px;width:611.60px;height:114.80px;background:#fbfcfe;"></div><div style="left:293.70px;top:392.20px;width:31.00px;height:8.60px;background:#fff;"></div><span class="t" style="top:394.02px;font-size:5.3px;color:#4a9bdc;left:295.60px;transform:scaleX(0.87);transform-origin:0 50%;">Messages</span><span class="t" style="top:394.40px;font-size:4.5px;color:#c3c8ce;left:320.40px;transform:translateX(-50%) scaleX(1);transform-origin:50% 50%;">×</span><div style="left:327.20px;top:392.70px;width:20.30px;height:7.90px;background:#e9ecf0;"></div><span class="t" style="top:394.02px;font-size:5.3px;color:#222;left:329.20px;transform:scaleX(0.87);transform-origin:0 50%;">Progress</span><div style="left:349.80px;top:392.70px;width:11.40px;height:7.90px;background:#e9ecf0;"></div><span class="t" style="top:394.02px;font-size:5.3px;color:#222;left:351.80px;transform:scaleX(0.87);transform-origin:0 50%;">Log</span><div style="left:363.40px;top:392.70px;width:41.20px;height:7.90px;background:#e9ecf0;"></div><span class="t" style="top:394.02px;font-size:5.3px;color:#222;left:365.40px;transform:scaleX(0.87);transform-origin:0 50%;">External Process</span><span class="t" style="top:394.40px;font-size:4.5px;color:#c3c8ce;left:401.60px;transform:translateX(-50%) scaleX(1);transform-origin:50% 50%;">×</span><div style="left:409.60px;top:392.70px;width:65.50px;height:7.90px;background:#e9ecf0;"></div><span class="t" style="top:394.02px;font-size:5.3px;color:#222;left:411.60px;transform:scaleX(0.87);transform-origin:0 50%;">Accumulated Probe Table 1</span><span class="t" style="top:394.40px;font-size:4.5px;color:#c3c8ce;left:472.10px;transform:translateX(-50%) scaleX(1);transform-origin:50% 50%;">×</span><div class="tr" style="left:895.25px;top:396.38px;border-left:1.25px solid transparent;border-right:1.25px solid transparent;border-top:1.69px solid #333;"></div><div style="left:900.70px;top:395.60px;width:1.30px;height:2.80px;background:#222;"></div><div style="left:295.10px;top:405.30px;width:1.00px;height:3.20px;background:#e9a93a;transform:rotate(-35deg);"></div><div style="left:300.50px;top:405.00px;width:3.40px;height:3.20px;border:.6px solid #8cc4ea;box-sizing:border-box;"></div><div style="left:293.70px;top:410.60px;width:609.20px;height:71.90px;background:#fdfeff;border:.5px solid #e3e7ec;box-sizing:border-box;"></div><span class="t" style="top:412.68px;font-size:4.7px;color:#222;left:294.90px;transform:scaleX(0.87);transform-origin:0 50%;">COMSOL Multiphysics 6.2.0.339</span><span class="t" style="top:418.58px;font-size:4.7px;color:#222;left:294.90px;transform:scaleX(0.87);transform-origin:0 50%;">[Mar 21, 2024, 10:12 AM] Your COMSOL 6.2 installation is up to date.</span><span class="t" style="top:424.48px;font-size:4.7px;color:#222;left:294.90px;transform:scaleX(0.87);transform-origin:0 50%;">[Mar 21, 2024, 10:13 AM] Opened file: C:\Users\Kay.BFI\Desktop\Bm.mph</span><div style="left:0.00px;top:0.00px;width:3.20px;height:504.00px;background:#fbfcfe;"></div><div style="left:3.20px;top:0.00px;width:1.00px;height:504.00px;background:#ea6a6a;"></div><div style="left:9.00px;top:483.20px;width:103.30px;height:16.00px;background:#7b7d80;border-radius:2px;"></div><span class="t" style="top:486.14px;font-size:9.6px;color:#f4f4f4;left:13.50px;transform:scaleX(0.86);transform-origin:0 50%;font-weight:normal;">Yalcin Kaymak (External)</span><div style="left:119.30px;top:483.20px;width:48.50px;height:16.00px;background:#7b7d80;border-radius:2px;"></div><div style="left:127.00px;top:491.00px;width:9.00px;height:0.90px;background:#a6a8ab;"></div><div style="left:147.00px;top:491.00px;width:9.00px;height:0.90px;background:#e8e8e8;"></div><div style="left:151.10px;top:486.90px;width:0.90px;height:9.00px;background:#e8e8e8;"></div></div></div></body></html>
